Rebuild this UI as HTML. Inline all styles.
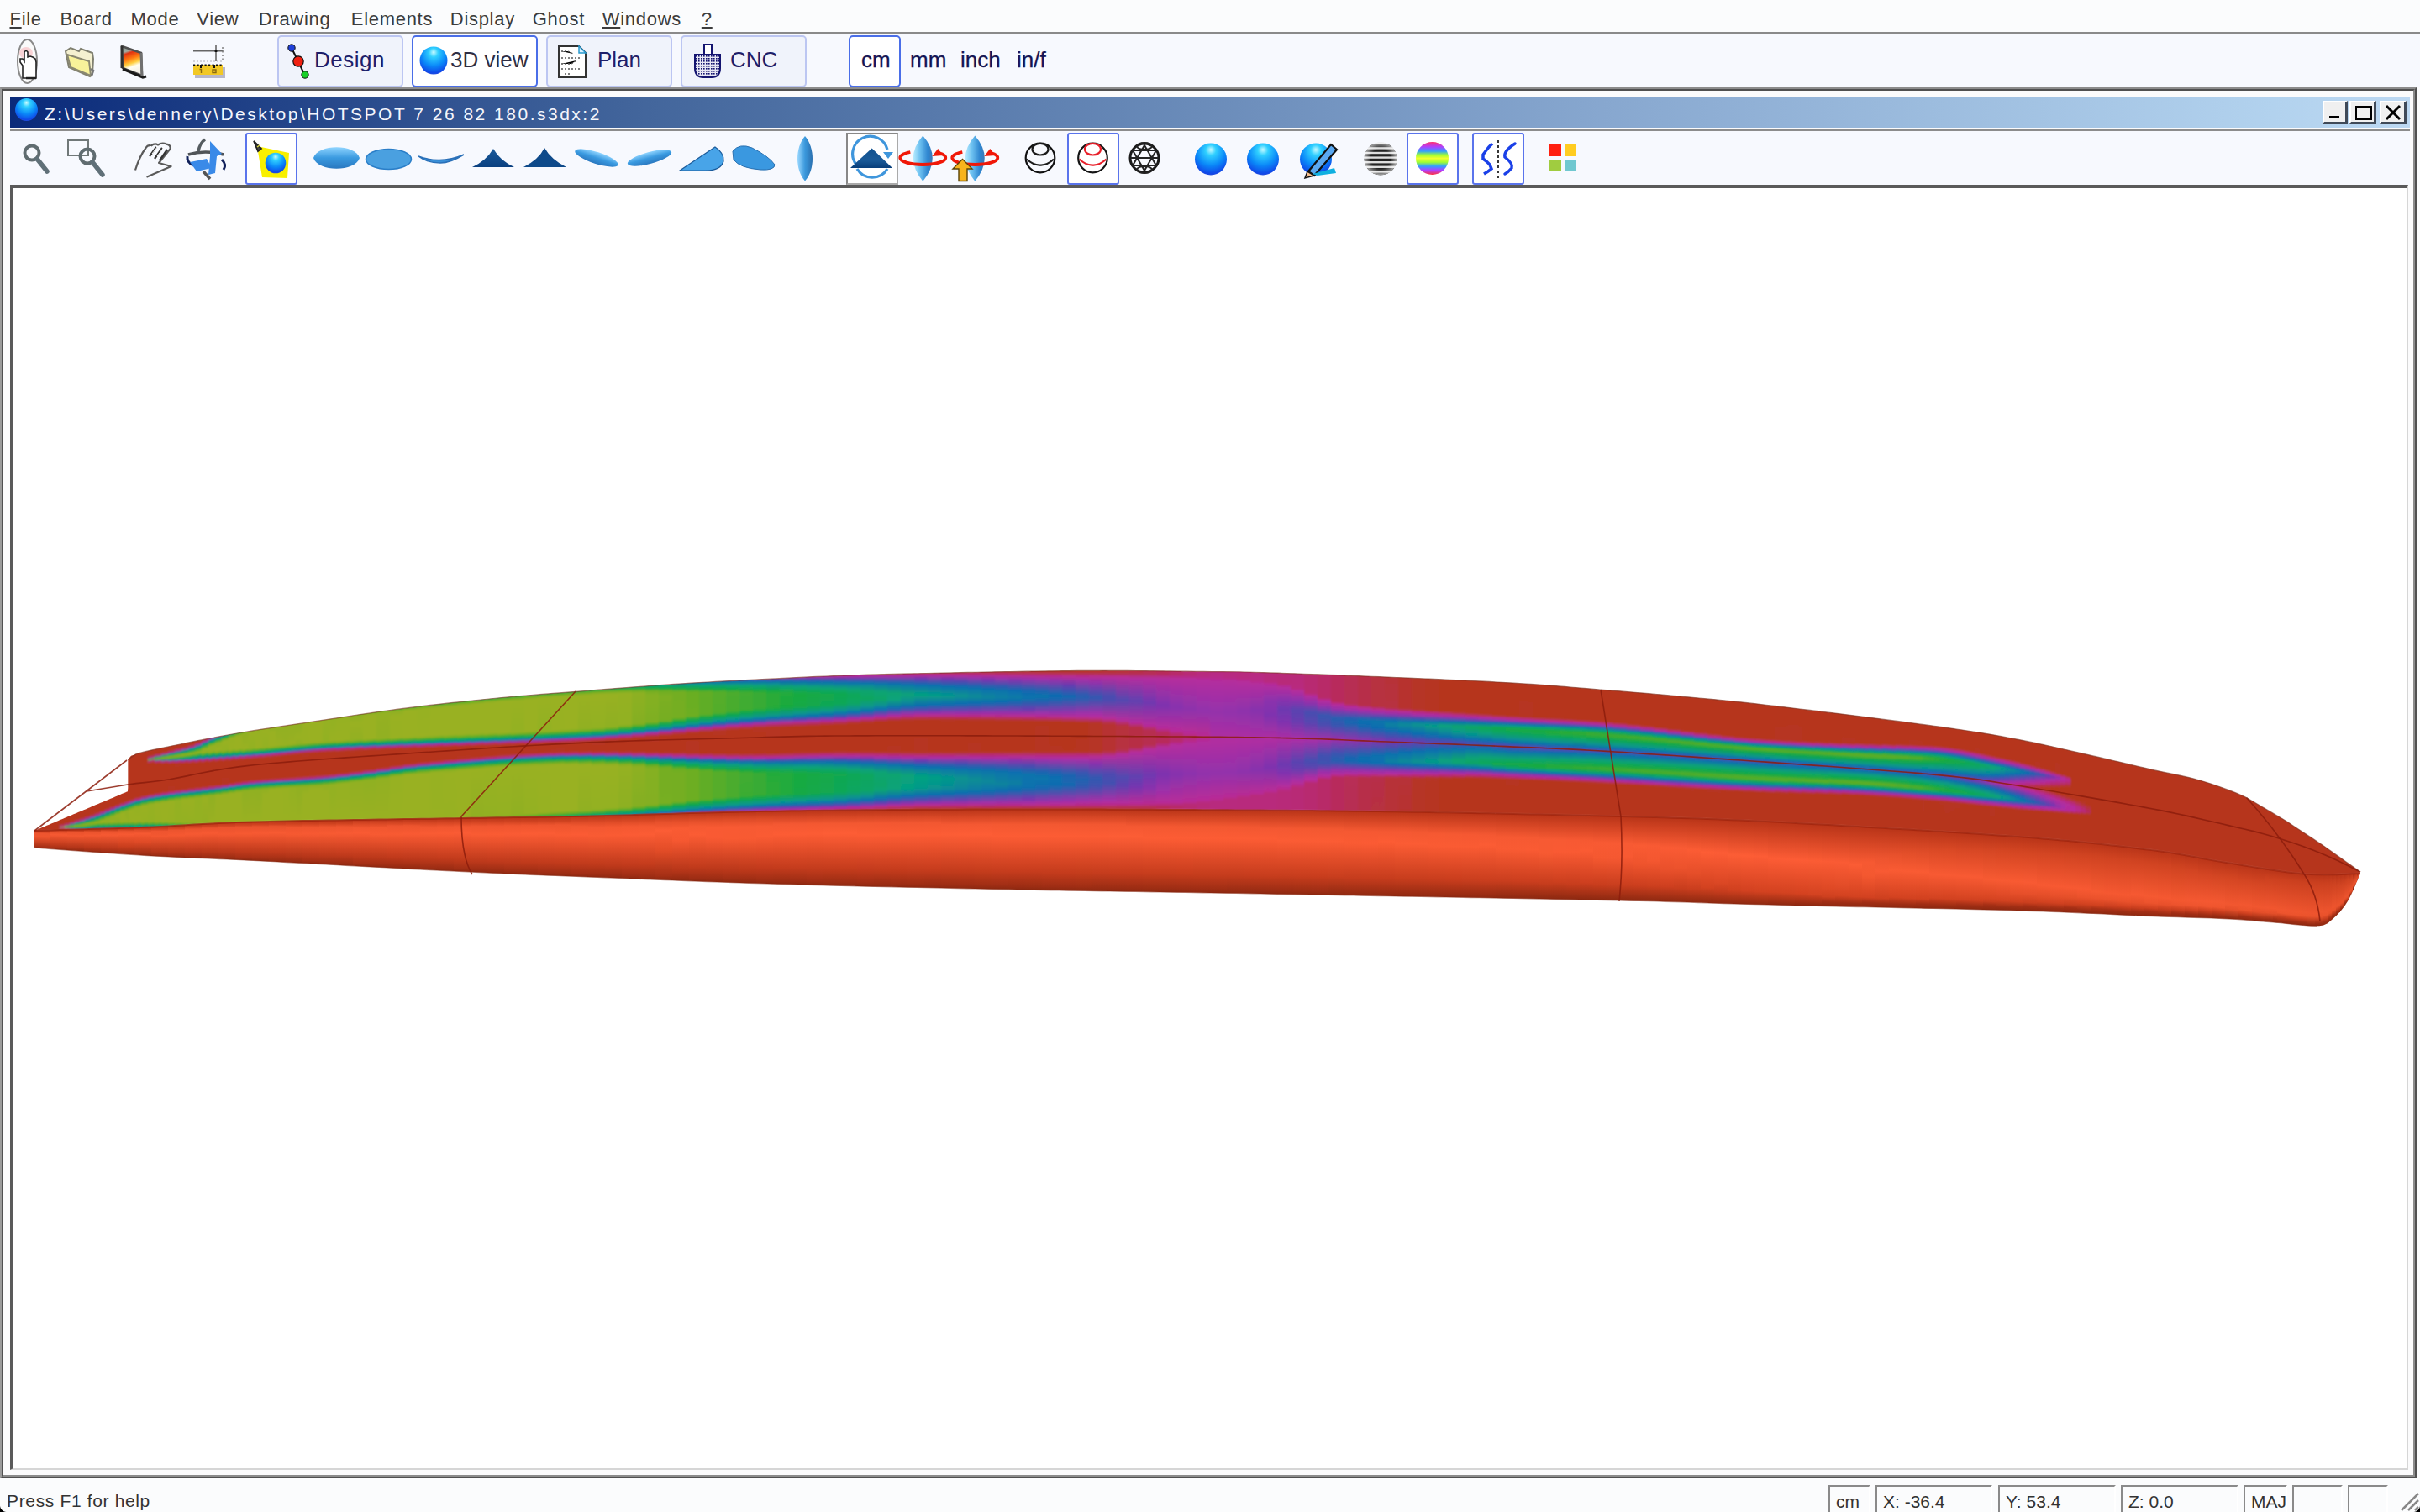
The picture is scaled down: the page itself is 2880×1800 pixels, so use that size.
<!DOCTYPE html><html><head><meta charset="utf-8"><style>
*{margin:0;padding:0;box-sizing:border-box}
html,body{width:2880px;height:1800px;overflow:hidden;background:#fbfcfd;font-family:"Liberation Sans",sans-serif}
.a{position:absolute}
.t{position:absolute;white-space:nowrap;line-height:1}
</style></head><body><div class="a" style="left:0;top:0;width:2880px;height:38px;background:#fbfcfd"></div><div class="a" style="left:0;top:38px;width:2880px;height:2px;background:#8a8a8a"></div><div class="a" style="left:0;top:40px;width:2880px;height:64px;background:#f7f9fe"></div><div class="t" style="left:11.5px;top:12px;font-size:22px;color:#3c3c3c;letter-spacing:0.7px"><span style="text-decoration:underline">F</span>ile</div><div class="t" style="left:71.5px;top:12px;font-size:22px;color:#3c3c3c;letter-spacing:0.7px">Board</div><div class="t" style="left:155.5px;top:12px;font-size:22px;color:#3c3c3c;letter-spacing:0.7px">Mode</div><div class="t" style="left:234.3px;top:12px;font-size:22px;color:#3c3c3c;letter-spacing:0.7px">View</div><div class="t" style="left:307.8px;top:12px;font-size:22px;color:#3c3c3c;letter-spacing:0.7px">Drawing</div><div class="t" style="left:417.8px;top:12px;font-size:22px;color:#3c3c3c;letter-spacing:0.7px">Elements</div><div class="t" style="left:535.8px;top:12px;font-size:22px;color:#3c3c3c;letter-spacing:0.7px">Display</div><div class="t" style="left:633.8px;top:12px;font-size:22px;color:#3c3c3c;letter-spacing:0.7px">Ghost</div><div class="t" style="left:716.8px;top:12px;font-size:22px;color:#3c3c3c;letter-spacing:0.7px"><span style="text-decoration:underline">W</span>indows</div><div class="t" style="left:834.8px;top:12px;font-size:22px;color:#3c3c3c;letter-spacing:0.7px"><span style="text-decoration:underline">?</span></div><div class="a" style="left:330px;top:42px;width:150px;height:62px;background:#f0f3fb;border:2px solid #bcc6f2;border-radius:5px"></div><div class="a" style="left:490px;top:42px;width:150px;height:62px;background:#ffffff;border:2px solid #4a6ee8;border-radius:5px"></div><div class="a" style="left:650px;top:42px;width:150px;height:62px;background:#f0f3fb;border:2px solid #bcc6f2;border-radius:5px"></div><div class="a" style="left:810px;top:42px;width:150px;height:62px;background:#f0f3fb;border:2px solid #bcc6f2;border-radius:5px"></div><div class="a" style="left:1010px;top:42px;width:62px;height:62px;background:#ffffff;border:2px solid #4a6ee8;border-radius:5px"></div><div class="t" style="left:374px;top:58px;font-size:26px;color:#1e1e6a;letter-spacing:0.5px">Design</div><div class="t" style="left:536px;top:58px;font-size:26px;color:#2e2e44">3D view</div><div class="t" style="left:711px;top:58px;font-size:26px;color:#1e1e6a">Plan</div><div class="t" style="left:869px;top:58px;font-size:26px;color:#1e1e6a">CNC</div><div class="t" style="left:1025px;top:58px;font-size:26px;color:#141454;-webkit-text-stroke:0.25px #141454">cm</div><div class="t" style="left:1083px;top:58px;font-size:26px;color:#141454;-webkit-text-stroke:0.25px #141454">mm</div><div class="t" style="left:1143px;top:58px;font-size:26px;color:#141454;-webkit-text-stroke:0.25px #141454">inch</div><div class="t" style="left:1210px;top:58px;font-size:26px;color:#141454;-webkit-text-stroke:0.25px #141454">in/f</div><div class="a" style="left:0;top:104px;width:2876px;height:1656px;background:#fbfbfc;border-top:2px solid #8c8c8c;border-left:2px solid #9a9a9a;border-right:2px solid #505050;border-bottom:2px solid #505050"></div><div class="a" style="left:2px;top:106px;width:2872px;height:1652px;border-top:2px solid #505050;border-left:2px solid #505050;border-right:2px solid #8c8c8c;border-bottom:2px solid #8c8c8c"></div><div class="a" style="left:12px;top:116px;width:2856px;height:36px;background:linear-gradient(to right,#0a2a7a 0%,#43669c 26.5%,#87a7cf 66.3%,#b2d2ee 94.3%,#bcd8f2 100%)"></div><div class="a" style="left:12px;top:154px;width:2856px;height:2px;background:#8c8c8c"></div><div class="a" style="left:12px;top:156px;width:2856px;height:64px;background:#f7f9fe"></div><div class="t" id="ttl" style="left:53px;top:125px;font-size:21px;color:#f4f6fc;letter-spacing:2.5px">Z:\Users\dennery\Desktop\HOTSPOT 7 26 82 180.s3dx:2</div><div class="a" style="left:2764px;top:120px;width:30px;height:28px;background:#f0f0f0;border-top:2px solid #ffffff;border-left:2px solid #ffffff;border-right:3px solid #404a58;border-bottom:3px solid #404a58"></div><div class="a" style="left:2796px;top:120px;width:32px;height:28px;background:#f0f0f0;border-top:2px solid #ffffff;border-left:2px solid #ffffff;border-right:3px solid #404a58;border-bottom:3px solid #404a58"></div><div class="a" style="left:2832px;top:120px;width:32px;height:28px;background:#f0f0f0;border-top:2px solid #ffffff;border-left:2px solid #ffffff;border-right:3px solid #404a58;border-bottom:3px solid #404a58"></div><div class="a" style="left:12px;top:220px;width:2854px;height:1530px;background:#ffffff;border-top:4px solid #5a5a5a;border-left:4px solid #5a5a5a;border-right:2px solid #d6d6d6;border-bottom:2px solid #d6d6d6"></div><div class="t" style="left:8px;top:1776px;font-size:21px;color:#333;letter-spacing:0.65px">Press F1 for help</div><div class="a" style="left:2176px;top:1768px;width:50px;height:40px;border-top:2px solid #8a8a8a;border-left:2px solid #8a8a8a;border-right:2px solid #ffffff"></div><div class="t" style="left:2185px;top:1777px;font-size:21px;color:#333">cm</div><div class="a" style="left:2232px;top:1768px;width:139px;height:40px;border-top:2px solid #8a8a8a;border-left:2px solid #8a8a8a;border-right:2px solid #ffffff"></div><div class="t" style="left:2241px;top:1777px;font-size:21px;color:#333">X: -36.4</div><div class="a" style="left:2378px;top:1768px;width:140px;height:40px;border-top:2px solid #8a8a8a;border-left:2px solid #8a8a8a;border-right:2px solid #ffffff"></div><div class="t" style="left:2387px;top:1777px;font-size:21px;color:#333">Y: 53.4</div><div class="a" style="left:2524px;top:1768px;width:140px;height:40px;border-top:2px solid #8a8a8a;border-left:2px solid #8a8a8a;border-right:2px solid #ffffff"></div><div class="t" style="left:2533px;top:1777px;font-size:21px;color:#333">Z: 0.0</div><div class="a" style="left:2670px;top:1768px;width:52px;height:40px;border-top:2px solid #8a8a8a;border-left:2px solid #8a8a8a;border-right:2px solid #ffffff"></div><div class="t" style="left:2679px;top:1777px;font-size:21px;color:#333">MAJ</div><div class="a" style="left:2728px;top:1768px;width:60px;height:40px;border-top:2px solid #8a8a8a;border-left:2px solid #8a8a8a;border-right:2px solid #ffffff"></div><div class="a" style="left:2794px;top:1768px;width:48px;height:40px;border-top:2px solid #8a8a8a;border-left:2px solid #8a8a8a;border-right:2px solid #ffffff"></div><div class="a" style="left:292px;top:158px;width:62px;height:62px;background:#ffffff;border:2px solid #5a74ec;border-radius:3px"></div><div class="a" style="left:1007px;top:158px;width:62px;height:62px;background:#fff;border-top:2px solid #888;border-left:2px solid #888;border-right:2px solid #aaa;border-bottom:2px solid #aaa"></div><div class="a" style="left:1270px;top:158px;width:62px;height:62px;background:#ffffff;border:2px solid #5a74ec;border-radius:3px"></div><div class="a" style="left:1674px;top:158px;width:62px;height:62px;background:#ffffff;border:2px solid #5a74ec;border-radius:3px"></div><div class="a" style="left:1752px;top:158px;width:62px;height:62px;background:#ffffff;border:2px solid #5a74ec;border-radius:3px"></div><svg class="a" style="left:0;top:0" width="2880" height="1800" viewBox="0 0 2880 1800"><defs>
<radialGradient id="sph" cx="0.5" cy="0.28" r="0.75" fx="0.5" fy="0.2"><stop offset="0" stop-color="#c8faff"/><stop offset="0.22" stop-color="#30d0ff"/><stop offset="0.6" stop-color="#0a88f8"/><stop offset="0.9" stop-color="#1048e8"/><stop offset="1" stop-color="#3050d8"/></radialGradient>
<linearGradient id="ell" x1="0" y1="0" x2="0" y2="1"><stop offset="0" stop-color="#8fd4ff"/><stop offset="0.5" stop-color="#3a9ae0"/><stop offset="1" stop-color="#2a78c0"/></linearGradient>
<linearGradient id="ellv" x1="0" y1="0" x2="1" y2="0"><stop offset="0" stop-color="#9ad8ff"/><stop offset="0.5" stop-color="#3a98dc"/><stop offset="1" stop-color="#2a70b0"/></linearGradient>
<linearGradient id="tri" x1="0" y1="0" x2="0" y2="1"><stop offset="0" stop-color="#1a5a9a"/><stop offset="1" stop-color="#0a4080"/></linearGradient>
<linearGradient id="rainb" x1="0" y1="0" x2="0" y2="1"><stop offset="0" stop-color="#ff3070"/><stop offset="0.15" stop-color="#b040ff"/><stop offset="0.28" stop-color="#30a0ff"/><stop offset="0.4" stop-color="#a0ff30"/><stop offset="0.5" stop-color="#f0ff30"/><stop offset="0.62" stop-color="#a0ff30"/><stop offset="0.74" stop-color="#30a0ff"/><stop offset="0.86" stop-color="#b040ff"/><stop offset="1" stop-color="#ff3040"/></linearGradient>
<linearGradient id="stripes" x1="0" y1="0" x2="0" y2="1" spreadMethod="repeat"><stop offset="0" stop-color="#333"/><stop offset="0.5" stop-color="#333"/><stop offset="0.5" stop-color="#ccc"/><stop offset="1" stop-color="#ccc"/></linearGradient>
<linearGradient id="g1" gradientUnits="userSpaceOnUse" x1="44.0" y1="983.47" x2="44.0" y2="989.00" gradientTransform="matrix(1 -0.03165 0 1 0 1.392)"><stop offset="0" stop-color="#b6361a"/><stop offset="1.085" stop-color="#b6361a"/></linearGradient><linearGradient id="g2" gradientUnits="userSpaceOnUse" x1="50.0" y1="980.94" x2="50.0" y2="988.81" gradientTransform="matrix(1 -0.03077 0 1 0 1.538)"><stop offset="0" stop-color="#b6361a"/><stop offset="1.016" stop-color="#b6361a"/></linearGradient><linearGradient id="g3" gradientUnits="userSpaceOnUse" x1="56.0" y1="978.41" x2="56.0" y2="988.63" gradientTransform="matrix(1 -0.03034 0 1 0 1.699)"><stop offset="0" stop-color="#b6361a"/><stop offset="1" stop-color="#b6361a"/></linearGradient><linearGradient id="g4" gradientUnits="userSpaceOnUse" x1="62.0" y1="975.88" x2="62.0" y2="988.44" gradientTransform="matrix(1 -0.03015 0 1 0 1.869)"><stop offset="0" stop-color="#b6361a"/><stop offset="1.035" stop-color="#b6361a"/></linearGradient><linearGradient id="g5" gradientUnits="userSpaceOnUse" x1="68.0" y1="973.35" x2="68.0" y2="988.26" gradientTransform="matrix(1 -0.03010 0 1 0 2.047)"><stop offset="0" stop-color="#b6361a"/><stop offset="1.006" stop-color="#b6361a"/></linearGradient><linearGradient id="g6" gradientUnits="userSpaceOnUse" x1="74.0" y1="970.82" x2="74.0" y2="988.08" gradientTransform="matrix(1 -0.08017 0 1 0 5.932)"><stop offset="0" stop-color="#b6361a"/><stop offset=".579" stop-color="#b6361a"/><stop offset=".753" stop-color="#b82c91"/><stop offset=".811" stop-color="#89b021"/><stop offset=".869" stop-color="#b82b8d"/><stop offset="1" stop-color="#b6332b"/></linearGradient><linearGradient id="g7" gradientUnits="userSpaceOnUse" x1="80.0" y1="968.29" x2="80.0" y2="987.90" gradientTransform="matrix(1 -0.08304 0 1 0 6.643)"><stop offset="0" stop-color="#b6361a"/><stop offset=".561" stop-color="#b6361a"/><stop offset=".714" stop-color="#b42d9d"/><stop offset=".765" stop-color="#10a757"/><stop offset=".816" stop-color="#98b121"/><stop offset=".867" stop-color="#10a75b"/><stop offset=".918" stop-color="#b82c99"/><stop offset="1.02" stop-color="#b72e4d"/></linearGradient><linearGradient id="g8" gradientUnits="userSpaceOnUse" x1="86.0" y1="965.76" x2="86.0" y2="987.72" gradientTransform="matrix(1 -0.09573 0 1 0 8.233)"><stop offset="0" stop-color="#b6361a"/><stop offset=".501" stop-color="#b6361a"/><stop offset=".546" stop-color="#b6332a"/><stop offset=".637" stop-color="#b82b83"/><stop offset=".683" stop-color="#5348b0"/><stop offset=".729" stop-color="#09a475"/><stop offset=".774" stop-color="#4eac2c"/><stop offset=".82" stop-color="#98b121"/><stop offset=".865" stop-color="#4bac2d"/><stop offset=".911" stop-color="#09a377"/><stop offset=".956" stop-color="#5945b0"/><stop offset="1.002" stop-color="#b82b82"/></linearGradient><linearGradient id="g9" gradientUnits="userSpaceOnUse" x1="92.0" y1="963.23" x2="92.0" y2="987.54" gradientTransform="matrix(1 -0.11824 0 1 0 10.878)"><stop offset="0" stop-color="#b6361a"/><stop offset=".494" stop-color="#b6361a"/><stop offset=".617" stop-color="#b82c8f"/><stop offset=".658" stop-color="#285fb0"/><stop offset=".699" stop-color="#07a27f"/><stop offset=".74" stop-color="#15aa42"/><stop offset=".782" stop-color="#77af20"/><stop offset=".823" stop-color="#95b121"/><stop offset=".864" stop-color="#69ae22"/><stop offset=".905" stop-color="#12a84f"/><stop offset=".946" stop-color="#06978c"/><stop offset=".987" stop-color="#5348b0"/><stop offset="1" stop-color="#9f30a9"/></linearGradient><linearGradient id="g10" gradientUnits="userSpaceOnUse" x1="98.0" y1="960.70" x2="98.0" y2="987.35" gradientTransform="matrix(1 -0.15027 0 1 0 14.726)"><stop offset="0" stop-color="#b6361a"/><stop offset=".488" stop-color="#b6361d"/><stop offset=".6" stop-color="#af2ea2"/><stop offset=".638" stop-color="#0a6fb0"/><stop offset=".675" stop-color="#07a280"/><stop offset=".713" stop-color="#13a84e"/><stop offset=".75" stop-color="#55ad29"/><stop offset=".788" stop-color="#86b021"/><stop offset=".825" stop-color="#8db021"/><stop offset=".863" stop-color="#6aae22"/><stop offset=".9" stop-color="#15aa44"/><stop offset=".938" stop-color="#09a474"/><stop offset=".975" stop-color="#077da4"/><stop offset="1.013" stop-color="#8233ae"/></linearGradient><linearGradient id="g11" gradientUnits="userSpaceOnUse" x1="104.0" y1="958.17" x2="104.0" y2="987.17" gradientTransform="matrix(1 -0.17456 0 1 0 18.154)"><stop offset="0" stop-color="#b6361a"/><stop offset=".448" stop-color="#b6361a"/><stop offset=".483" stop-color="#b73235"/><stop offset=".552" stop-color="#b82b8a"/><stop offset=".586" stop-color="#653eb0"/><stop offset=".621" stop-color="#077da4"/><stop offset=".655" stop-color="#08a37b"/><stop offset=".69" stop-color="#12a851"/><stop offset=".759" stop-color="#7baf20"/><stop offset=".793" stop-color="#95b121"/><stop offset=".828" stop-color="#83af20"/><stop offset=".862" stop-color="#5aad28"/><stop offset=".896" stop-color="#15a945"/><stop offset=".931" stop-color="#0ba46d"/><stop offset=".965" stop-color="#078b97"/><stop offset="1" stop-color="#3a55b0"/></linearGradient><linearGradient id="g12" gradientUnits="userSpaceOnUse" x1="110.0" y1="955.64" x2="110.0" y2="986.98" gradientTransform="matrix(1 -0.17171 0 1 0 18.889)"><stop offset="0" stop-color="#b6361a"/><stop offset=".447" stop-color="#b63521"/><stop offset=".542" stop-color="#aa2fa6"/><stop offset=".574" stop-color="#275fb0"/><stop offset=".606" stop-color="#078c96"/><stop offset=".67" stop-color="#12a84f"/><stop offset=".734" stop-color="#75ae20"/><stop offset=".798" stop-color="#90b021"/><stop offset=".829" stop-color="#79af20"/><stop offset=".893" stop-color="#14a949"/><stop offset=".957" stop-color="#079390"/><stop offset=".989" stop-color="#1469b0"/><stop offset="1" stop-color="#3857b0"/></linearGradient><linearGradient id="g13" gradientUnits="userSpaceOnUse" x1="116.0" y1="953.11" x2="116.0" y2="986.79" gradientTransform="matrix(1 -0.17170 0 1 0 19.918)"><stop offset="0" stop-color="#b6361a"/><stop offset=".416" stop-color="#b6361a"/><stop offset=".505" stop-color="#b82c96"/><stop offset=".534" stop-color="#504ab0"/><stop offset=".564" stop-color="#0878a8"/><stop offset=".594" stop-color="#069a89"/><stop offset=".653" stop-color="#13a94b"/><stop offset=".712" stop-color="#72ae20"/><stop offset=".772" stop-color="#98b121"/><stop offset=".831" stop-color="#70ae20"/><stop offset=".861" stop-color="#37ab34"/><stop offset=".891" stop-color="#13a84d"/><stop offset=".95" stop-color="#06978c"/><stop offset=".98" stop-color="#0875ab"/><stop offset="1.009" stop-color="#5945b0"/></linearGradient><linearGradient id="g14" gradientUnits="userSpaceOnUse" x1="122.0" y1="950.58" x2="122.0" y2="986.60" gradientTransform="matrix(1 -0.17022 0 1 0 20.767)"><stop offset="0" stop-color="#b6361a"/><stop offset=".389" stop-color="#b6361a"/><stop offset=".472" stop-color="#b82c90"/><stop offset=".5" stop-color="#643eb0"/><stop offset=".527" stop-color="#0870b0"/><stop offset=".583" stop-color="#0aa471"/><stop offset=".638" stop-color="#2bab39"/><stop offset=".666" stop-color="#64ad24"/><stop offset=".722" stop-color="#93b121"/><stop offset=".777" stop-color="#99b121"/><stop offset=".833" stop-color="#76ae20"/><stop offset=".888" stop-color="#15aa43"/><stop offset=".944" stop-color="#06a281"/><stop offset=".971" stop-color="#07849e"/><stop offset="1" stop-color="#325ab0"/></linearGradient><linearGradient id="g15" gradientUnits="userSpaceOnUse" x1="128.0" y1="948.05" x2="128.0" y2="986.41" gradientTransform="matrix(1 -0.16787 0 1 0 21.487)"><stop offset="0" stop-color="#b6361a"/><stop offset=".365" stop-color="#b6361a"/><stop offset=".391" stop-color="#b73138"/><stop offset=".443" stop-color="#b82b8c"/><stop offset=".469" stop-color="#7436b0"/><stop offset=".495" stop-color="#126bb0"/><stop offset=".547" stop-color="#09a475"/><stop offset=".599" stop-color="#23ab3b"/><stop offset=".626" stop-color="#5dad27"/><stop offset=".678" stop-color="#91b021"/><stop offset=".808" stop-color="#92b121"/><stop offset=".86" stop-color="#62ad25"/><stop offset=".886" stop-color="#28ab39"/><stop offset=".938" stop-color="#0aa473"/><stop offset=".99" stop-color="#0a6fb0"/><stop offset="1" stop-color="#295eb0"/></linearGradient><linearGradient id="g16" gradientUnits="userSpaceOnUse" x1="134.0" y1="945.52" x2="134.0" y2="986.22" gradientTransform="matrix(1 -0.16457 0 1 0 22.053)"><stop offset="0" stop-color="#b6361a"/><stop offset=".344" stop-color="#b6361a"/><stop offset=".369" stop-color="#b73231"/><stop offset=".418" stop-color="#b82b87"/><stop offset=".442" stop-color="#8233ae"/><stop offset=".467" stop-color="#1c65b0"/><stop offset=".491" stop-color="#078b97"/><stop offset=".516" stop-color="#08a379"/><stop offset=".565" stop-color="#1caa3e"/><stop offset=".59" stop-color="#56ad29"/><stop offset=".639" stop-color="#8eb021"/><stop offset=".811" stop-color="#99b121"/><stop offset=".86" stop-color="#73ae20"/><stop offset=".909" stop-color="#14a948"/><stop offset=".958" stop-color="#069f85"/><stop offset=".983" stop-color="#077ea3"/><stop offset="1.007" stop-color="#3d54b0"/></linearGradient><linearGradient id="g17" gradientUnits="userSpaceOnUse" x1="140.0" y1="942.99" x2="140.0" y2="986.02" gradientTransform="matrix(1 -0.16002 0 1 0 22.402)"><stop offset="0" stop-color="#b6361a"/><stop offset=".325" stop-color="#b6361a"/><stop offset=".349" stop-color="#b63429"/><stop offset=".395" stop-color="#b82b82"/><stop offset=".418" stop-color="#9731ab"/><stop offset=".442" stop-color="#295eb0"/><stop offset=".465" stop-color="#07869c"/><stop offset=".488" stop-color="#07a27e"/><stop offset=".534" stop-color="#16aa42"/><stop offset=".581" stop-color="#78af20"/><stop offset=".627" stop-color="#99b121"/><stop offset=".837" stop-color="#8fb021"/><stop offset=".883" stop-color="#58ad28"/><stop offset=".906" stop-color="#1eaa3d"/><stop offset=".953" stop-color="#08a378"/><stop offset=".999" stop-color="#1867b0"/><stop offset="1" stop-color="#1b66b0"/></linearGradient><linearGradient id="g18" gradientUnits="userSpaceOnUse" x1="146.0" y1="940.45" x2="146.0" y2="985.82" gradientTransform="matrix(1 -0.15354 0 1 0 22.416)"><stop offset="0" stop-color="#b6361a"/><stop offset=".331" stop-color="#b6351e"/><stop offset=".397" stop-color="#af2ea2"/><stop offset=".419" stop-color="#3d54b0"/><stop offset=".441" stop-color="#077ea3"/><stop offset=".463" stop-color="#069f85"/><stop offset=".507" stop-color="#14a948"/><stop offset=".551" stop-color="#73ae20"/><stop offset=".595" stop-color="#99b121"/><stop offset=".838" stop-color="#97b121"/><stop offset=".882" stop-color="#6fae20"/><stop offset=".904" stop-color="#37ab34"/><stop offset=".926" stop-color="#13a84d"/><stop offset=".97" stop-color="#06998a"/><stop offset="1" stop-color="#146ab0"/></linearGradient><linearGradient id="g19" gradientUnits="userSpaceOnUse" x1="150.5" y1="939.19" x2="150.5" y2="985.61" gradientTransform="matrix(1 -0.14575 0 1 0 21.935)"><stop offset="0" stop-color="#b6361a"/><stop offset=".302" stop-color="#b6361a"/><stop offset=".323" stop-color="#b73233"/><stop offset=".366" stop-color="#b82b88"/><stop offset=".388" stop-color="#7f33af"/><stop offset=".409" stop-color="#1967b0"/><stop offset=".452" stop-color="#08a379"/><stop offset=".495" stop-color="#1daa3d"/><stop offset=".517" stop-color="#58ad29"/><stop offset=".56" stop-color="#8fb021"/><stop offset=".84" stop-color="#99b121"/><stop offset=".883" stop-color="#74ae20"/><stop offset=".926" stop-color="#14a947"/><stop offset=".969" stop-color="#069f85"/><stop offset="1" stop-color="#0a6fb0"/></linearGradient><linearGradient id="g20" gradientUnits="userSpaceOnUse" x1="153.0" y1="898.50" x2="153.0" y2="935.93" gradientTransform="matrix(1 -1.50020 0 1 0 229.530)"><stop offset="0" stop-color="#b6361a"/><stop offset="1" stop-color="#b6361a"/></linearGradient><linearGradient id="g21" gradientUnits="userSpaceOnUse" x1="153.0" y1="932.65" x2="153.0" y2="985.51" gradientTransform="matrix(1 -0.18434 0 1 0 28.204)"><stop offset="0" stop-color="#b6361a"/><stop offset=".378" stop-color="#b6361a"/><stop offset=".435" stop-color="#b82c94"/><stop offset=".454" stop-color="#5646b0"/><stop offset=".473" stop-color="#0875ab"/><stop offset=".492" stop-color="#06978c"/><stop offset=".53" stop-color="#12a84f"/><stop offset=".549" stop-color="#32ab36"/><stop offset=".568" stop-color="#6bae22"/><stop offset=".605" stop-color="#96b121"/><stop offset=".87" stop-color="#91b021"/><stop offset=".908" stop-color="#5ead27"/><stop offset=".927" stop-color="#24ab3b"/><stop offset=".965" stop-color="#09a475"/><stop offset="1.003" stop-color="#106cb0"/></linearGradient><linearGradient id="g22" gradientUnits="userSpaceOnUse" x1="155.5" y1="896.50" x2="155.5" y2="935.65" gradientTransform="matrix(1 -0.66663 0 1 0 103.661)"><stop offset="0" stop-color="#b6361a"/><stop offset="1" stop-color="#b6361a"/></linearGradient><linearGradient id="g23" gradientUnits="userSpaceOnUse" x1="155.5" y1="932.26" x2="155.5" y2="985.44" gradientTransform="matrix(1 -0.17826 0 1 0 27.719)"><stop offset="0" stop-color="#b6361a"/><stop offset=".357" stop-color="#b6361a"/><stop offset=".376" stop-color="#b6342a"/><stop offset=".414" stop-color="#b82b83"/><stop offset=".433" stop-color="#9631ab"/><stop offset=".451" stop-color="#285fb0"/><stop offset=".47" stop-color="#07869c"/><stop offset=".489" stop-color="#07a27e"/><stop offset=".527" stop-color="#16aa41"/><stop offset=".564" stop-color="#78af20"/><stop offset=".602" stop-color="#99b121"/><stop offset=".865" stop-color="#98b121"/><stop offset=".903" stop-color="#70ae20"/><stop offset=".921" stop-color="#39ac34"/><stop offset=".94" stop-color="#13a94c"/><stop offset=".978" stop-color="#069a89"/><stop offset="1" stop-color="#0873ae"/></linearGradient><linearGradient id="g24" gradientUnits="userSpaceOnUse" x1="158.5" y1="895.37" x2="158.5" y2="935.26" gradientTransform="matrix(1 -0.37622 0 1 0 59.630)"><stop offset="0" stop-color="#b6361a"/><stop offset="1.003" stop-color="#b6361a"/></linearGradient><linearGradient id="g25" gradientUnits="userSpaceOnUse" x1="158.5" y1="931.89" x2="158.5" y2="985.33" gradientTransform="matrix(1 -0.17014 0 1 0 26.967)"><stop offset="0" stop-color="#b6361a"/><stop offset=".356" stop-color="#b6361a"/><stop offset=".412" stop-color="#b82c98"/><stop offset=".43" stop-color="#4b4cb0"/><stop offset=".449" stop-color="#0879a7"/><stop offset=".468" stop-color="#069a89"/><stop offset=".505" stop-color="#13a94c"/><stop offset=".543" stop-color="#70ae20"/><stop offset=".58" stop-color="#98b121"/><stop offset=".861" stop-color="#99b121"/><stop offset=".898" stop-color="#77af20"/><stop offset=".936" stop-color="#15aa43"/><stop offset=".973" stop-color="#07a280"/><stop offset="1" stop-color="#0875ac"/></linearGradient><linearGradient id="g26" gradientUnits="userSpaceOnUse" x1="164.0" y1="892.92" x2="164.0" y2="934.89" gradientTransform="matrix(1 -0.30648 0 1 0 50.263)"><stop offset="0" stop-color="#b6361a"/><stop offset="1.001" stop-color="#b6361a"/></linearGradient><linearGradient id="g27" gradientUnits="userSpaceOnUse" x1="164.0" y1="931.03" x2="164.0" y2="985.22" gradientTransform="matrix(1 -0.15265 0 1 0 25.034)"><stop offset="0" stop-color="#b6361a"/><stop offset=".332" stop-color="#b6361a"/><stop offset=".387" stop-color="#b82c93"/><stop offset=".406" stop-color="#5b44b0"/><stop offset=".424" stop-color="#0874ad"/><stop offset=".443" stop-color="#06968d"/><stop offset=".48" stop-color="#12a850"/><stop offset=".498" stop-color="#30ab37"/><stop offset=".517" stop-color="#69ae23"/><stop offset=".554" stop-color="#95b121"/><stop offset=".867" stop-color="#99b121"/><stop offset=".904" stop-color="#73ae20"/><stop offset=".941" stop-color="#14a948"/><stop offset=".978" stop-color="#069e86"/><stop offset="1" stop-color="#0876aa"/></linearGradient><linearGradient id="g28" gradientUnits="userSpaceOnUse" x1="172.0" y1="891.02" x2="172.0" y2="934.03" gradientTransform="matrix(1 -0.23696 0 1 0 40.757)"><stop offset="0" stop-color="#b6361a"/><stop offset="1" stop-color="#b6361a"/></linearGradient><linearGradient id="g29" gradientUnits="userSpaceOnUse" x1="172.0" y1="930.19" x2="172.0" y2="984.93" gradientTransform="matrix(1 -0.12204 0 1 0 20.991)"><stop offset="0" stop-color="#b6361a"/><stop offset=".311" stop-color="#b6351f"/><stop offset=".365" stop-color="#ae2ea3"/><stop offset=".384" stop-color="#3b55b0"/><stop offset=".402" stop-color="#077fa2"/><stop offset=".42" stop-color="#069f85"/><stop offset=".457" stop-color="#14a947"/><stop offset=".493" stop-color="#74ae20"/><stop offset=".53" stop-color="#99b121"/><stop offset=".877" stop-color="#96b121"/><stop offset=".913" stop-color="#6bae22"/><stop offset=".932" stop-color="#32ab36"/><stop offset=".95" stop-color="#12a84f"/><stop offset=".987" stop-color="#06978c"/><stop offset="1.005" stop-color="#0875ab"/></linearGradient><linearGradient id="g30" gradientUnits="userSpaceOnUse" x1="180.0" y1="889.29" x2="180.0" y2="933.19" gradientTransform="matrix(1 -0.21724 0 1 0 39.103)"><stop offset="0" stop-color="#b6361a"/><stop offset=".228" stop-color="#b6351e"/><stop offset=".273" stop-color="#b82b7b"/><stop offset=".296" stop-color="#8c32ad"/><stop offset=".319" stop-color="#52ad2b"/><stop offset=".342" stop-color="#26ab3a"/><stop offset=".364" stop-color="#b82c98"/><stop offset=".433" stop-color="#b6361a"/><stop offset="1.002" stop-color="#b6361a"/></linearGradient><linearGradient id="g31" gradientUnits="userSpaceOnUse" x1="180.0" y1="929.26" x2="180.0" y2="984.62" gradientTransform="matrix(1 -0.09351 0 1 0 16.832)"><stop offset="0" stop-color="#b6361a"/><stop offset=".289" stop-color="#b6361a"/><stop offset=".343" stop-color="#b82c95"/><stop offset=".361" stop-color="#5447b0"/><stop offset=".379" stop-color="#0876aa"/><stop offset=".397" stop-color="#06988c"/><stop offset=".434" stop-color="#13a84e"/><stop offset=".452" stop-color="#34ab35"/><stop offset=".47" stop-color="#6cae21"/><stop offset=".506" stop-color="#96b121"/><stop offset=".885" stop-color="#94b121"/><stop offset=".921" stop-color="#67ae23"/><stop offset=".939" stop-color="#2eab37"/><stop offset=".957" stop-color="#12a851"/><stop offset=".993" stop-color="#07958e"/><stop offset="1" stop-color="#078999"/></linearGradient><linearGradient id="g32" gradientUnits="userSpaceOnUse" x1="188.0" y1="887.60" x2="188.0" y2="932.26" gradientTransform="matrix(1 -0.10667 0 1 0 20.054)"><stop offset="0" stop-color="#b6361a"/><stop offset=".202" stop-color="#b6361a"/><stop offset=".224" stop-color="#b73232"/><stop offset=".269" stop-color="#b82b88"/><stop offset=".291" stop-color="#1a67b0"/><stop offset=".313" stop-color="#12a852"/><stop offset=".336" stop-color="#85b021"/><stop offset=".358" stop-color="#6aae22"/><stop offset=".381" stop-color="#09a476"/><stop offset=".403" stop-color="#9331ac"/><stop offset=".425" stop-color="#b82b7c"/><stop offset=".47" stop-color="#b63520"/><stop offset="1.008" stop-color="#b6361a"/></linearGradient><linearGradient id="g33" gradientUnits="userSpaceOnUse" x1="188.0" y1="928.19" x2="188.0" y2="984.29" gradientTransform="matrix(1 -0.07746 0 1 0 14.562)"><stop offset="0" stop-color="#b6361a"/><stop offset=".267" stop-color="#b6361a"/><stop offset=".285" stop-color="#b63426"/><stop offset=".321" stop-color="#b82b80"/><stop offset=".339" stop-color="#a230a9"/><stop offset=".357" stop-color="#2f5bb0"/><stop offset=".374" stop-color="#07839e"/><stop offset=".392" stop-color="#06a281"/><stop offset=".428" stop-color="#15aa44"/><stop offset=".463" stop-color="#76ae20"/><stop offset=".499" stop-color="#99b121"/><stop offset=".891" stop-color="#97b121"/><stop offset=".927" stop-color="#70ae20"/><stop offset=".945" stop-color="#37ab34"/><stop offset=".963" stop-color="#13a84c"/><stop offset="1" stop-color="#06968d"/></linearGradient><linearGradient id="g34" gradientUnits="userSpaceOnUse" x1="196.0" y1="885.94" x2="196.0" y2="931.19" gradientTransform="matrix(1 -0.12259 0 1 0 24.028)"><stop offset="0" stop-color="#b6361a"/><stop offset=".199" stop-color="#b6361a"/><stop offset=".265" stop-color="#b82c96"/><stop offset=".287" stop-color="#087ca5"/><stop offset=".309" stop-color="#0fa65f"/><stop offset=".332" stop-color="#5dad27"/><stop offset=".354" stop-color="#96b121"/><stop offset=".376" stop-color="#6eae21"/><stop offset=".398" stop-color="#11a755"/><stop offset=".42" stop-color="#07879b"/><stop offset=".442" stop-color="#b02ea1"/><stop offset=".508" stop-color="#b6361c"/><stop offset="1" stop-color="#b6361a"/></linearGradient><linearGradient id="g35" gradientUnits="userSpaceOnUse" x1="196.0" y1="927.00" x2="196.0" y2="983.91" gradientTransform="matrix(1 -0.06412 0 1 0 12.567)"><stop offset="0" stop-color="#b6361a"/><stop offset=".264" stop-color="#b6361a"/><stop offset=".281" stop-color="#b6332c"/><stop offset=".316" stop-color="#b82b84"/><stop offset=".334" stop-color="#9131ac"/><stop offset=".351" stop-color="#2560b0"/><stop offset=".369" stop-color="#07879b"/><stop offset=".387" stop-color="#07a37d"/><stop offset=".422" stop-color="#16aa40"/><stop offset=".457" stop-color="#79af20"/><stop offset=".492" stop-color="#99b121"/><stop offset=".896" stop-color="#99b121"/><stop offset=".931" stop-color="#77af20"/><stop offset=".966" stop-color="#15aa42"/><stop offset="1.002" stop-color="#07a27f"/></linearGradient><linearGradient id="g36" gradientUnits="userSpaceOnUse" x1="204.0" y1="884.29" x2="204.0" y2="930.00" gradientTransform="matrix(1 -0.13178 0 1 0 26.883)"><stop offset="0" stop-color="#b6361a"/><stop offset=".175" stop-color="#b6361a"/><stop offset=".197" stop-color="#b6332b"/><stop offset=".241" stop-color="#b82b83"/><stop offset=".263" stop-color="#7337b0"/><stop offset=".284" stop-color="#078899"/><stop offset=".306" stop-color="#0ea662"/><stop offset=".328" stop-color="#3bac33"/><stop offset=".35" stop-color="#81af20"/><stop offset=".372" stop-color="#8eb021"/><stop offset=".394" stop-color="#60ad26"/><stop offset=".416" stop-color="#12a84f"/><stop offset=".438" stop-color="#069d87"/><stop offset=".459" stop-color="#2f5bb0"/><stop offset=".481" stop-color="#b82c8f"/><stop offset=".547" stop-color="#b6361a"/><stop offset="1.006" stop-color="#b6361a"/></linearGradient><linearGradient id="g37" gradientUnits="userSpaceOnUse" x1="204.0" y1="925.64" x2="204.0" y2="983.49" gradientTransform="matrix(1 -0.05334 0 1 0 10.881)"><stop offset="0" stop-color="#b6361a"/><stop offset=".277" stop-color="#b63523"/><stop offset=".311" stop-color="#b82b7e"/><stop offset=".328" stop-color="#aa2fa6"/><stop offset=".346" stop-color="#3657b0"/><stop offset=".363" stop-color="#0781a0"/><stop offset=".38" stop-color="#06a183"/><stop offset=".415" stop-color="#15a945"/><stop offset=".449" stop-color="#75ae20"/><stop offset=".484" stop-color="#99b121"/><stop offset=".916" stop-color="#97b121"/><stop offset=".951" stop-color="#6eae21"/><stop offset=".968" stop-color="#35ab35"/><stop offset=".985" stop-color="#13a84d"/><stop offset="1.002" stop-color="#0ba56b"/></linearGradient><linearGradient id="g38" gradientUnits="userSpaceOnUse" x1="212.0" y1="882.67" x2="212.0" y2="928.64" gradientTransform="matrix(1 -0.13882 0 1 0 29.431)"><stop offset="0" stop-color="#b6361a"/><stop offset=".174" stop-color="#b6361a"/><stop offset=".239" stop-color="#b82c8e"/><stop offset=".261" stop-color="#464fb0"/><stop offset=".283" stop-color="#078d95"/><stop offset=".305" stop-color="#0da566"/><stop offset=".326" stop-color="#24ab3b"/><stop offset=".348" stop-color="#74ae20"/><stop offset=".37" stop-color="#92b021"/><stop offset=".392" stop-color="#83af20"/><stop offset=".413" stop-color="#4eac2c"/><stop offset=".435" stop-color="#12a850"/><stop offset=".457" stop-color="#06a280"/><stop offset=".479" stop-color="#0871af"/><stop offset=".5" stop-color="#a92fa7"/><stop offset=".544" stop-color="#b82d55"/><stop offset=".566" stop-color="#b63521"/><stop offset="1.001" stop-color="#b6361a"/></linearGradient><linearGradient id="g39" gradientUnits="userSpaceOnUse" x1="212.0" y1="924.09" x2="212.0" y2="983.04" gradientTransform="matrix(1 -0.04513 0 1 0 9.567)"><stop offset="0" stop-color="#b6361a"/><stop offset=".271" stop-color="#b6361a"/><stop offset=".322" stop-color="#b82c90"/><stop offset=".339" stop-color="#653eb0"/><stop offset=".356" stop-color="#0870b0"/><stop offset=".39" stop-color="#0aa471"/><stop offset=".424" stop-color="#2aab39"/><stop offset=".441" stop-color="#64ad24"/><stop offset=".475" stop-color="#93b121"/><stop offset=".933" stop-color="#94b121"/><stop offset=".967" stop-color="#65ae24"/><stop offset=".984" stop-color="#2cab38"/><stop offset="1.001" stop-color="#12a852"/></linearGradient><linearGradient id="g40" gradientUnits="userSpaceOnUse" x1="220.0" y1="881.05" x2="220.0" y2="927.09" gradientTransform="matrix(1 -0.15651 0 1 0 34.432)"><stop offset="0" stop-color="#b6361a"/><stop offset=".174" stop-color="#b6351e"/><stop offset=".239" stop-color="#b02ea1"/><stop offset=".261" stop-color="#2063b0"/><stop offset=".282" stop-color="#07948f"/><stop offset=".326" stop-color="#1aaa3f"/><stop offset=".348" stop-color="#67ae23"/><stop offset=".369" stop-color="#88b021"/><stop offset=".391" stop-color="#91b021"/><stop offset=".413" stop-color="#77ae20"/><stop offset=".434" stop-color="#37ab34"/><stop offset=".456" stop-color="#11a756"/><stop offset=".478" stop-color="#06a281"/><stop offset=".5" stop-color="#0878a9"/><stop offset=".521" stop-color="#7536b0"/><stop offset=".543" stop-color="#b82b87"/><stop offset=".586" stop-color="#b73331"/><stop offset=".608" stop-color="#b6361a"/><stop offset="1" stop-color="#b6361a"/></linearGradient><linearGradient id="g41" gradientUnits="userSpaceOnUse" x1="220.0" y1="922.45" x2="220.0" y2="982.54" gradientTransform="matrix(1 -0.03947 0 1 0 8.684)"><stop offset="0" stop-color="#b6361a"/><stop offset=".283" stop-color="#b6351e"/><stop offset=".333" stop-color="#b02da1"/><stop offset=".349" stop-color="#3f53b0"/><stop offset=".366" stop-color="#077ea3"/><stop offset=".383" stop-color="#069e86"/><stop offset=".416" stop-color="#14a948"/><stop offset=".449" stop-color="#73ae20"/><stop offset=".483" stop-color="#99b121"/><stop offset=".949" stop-color="#93b121"/><stop offset=".982" stop-color="#64ad24"/><stop offset="1" stop-color="#25ab3b"/></linearGradient><linearGradient id="g42" gradientUnits="userSpaceOnUse" x1="228.0" y1="879.44" x2="228.0" y2="925.45" gradientTransform="matrix(1 -0.18713 0 1 0 42.665)"><stop offset="0" stop-color="#b6361a"/><stop offset=".152" stop-color="#b6361a"/><stop offset=".217" stop-color="#b82c93"/><stop offset=".239" stop-color="#4d4bb0"/><stop offset=".261" stop-color="#077ea3"/><stop offset=".283" stop-color="#06a280"/><stop offset=".326" stop-color="#24ab3b"/><stop offset=".348" stop-color="#67ae23"/><stop offset=".391" stop-color="#98b121"/><stop offset=".435" stop-color="#5ead26"/><stop offset=".456" stop-color="#1baa3e"/><stop offset=".5" stop-color="#069f85"/><stop offset=".522" stop-color="#0879a8"/><stop offset=".543" stop-color="#5d42b0"/><stop offset=".565" stop-color="#b82c8e"/><stop offset=".63" stop-color="#b6361a"/><stop offset="1" stop-color="#b6361a"/></linearGradient><linearGradient id="g43" gradientUnits="userSpaceOnUse" x1="228.0" y1="920.79" x2="228.0" y2="982.04" gradientTransform="matrix(1 -0.03638 0 1 0 8.295)"><stop offset="0" stop-color="#b6361a"/><stop offset=".278" stop-color="#b6361a"/><stop offset=".294" stop-color="#b7332e"/><stop offset=".327" stop-color="#b82b85"/><stop offset=".343" stop-color="#8d32ac"/><stop offset=".359" stop-color="#2362b0"/><stop offset=".376" stop-color="#07889a"/><stop offset=".392" stop-color="#07a37c"/><stop offset=".425" stop-color="#17aa40"/><stop offset=".441" stop-color="#51ad2b"/><stop offset=".457" stop-color="#79af20"/><stop offset=".49" stop-color="#99b121"/><stop offset=".963" stop-color="#94b121"/><stop offset="1" stop-color="#58ad29"/></linearGradient><linearGradient id="g44" gradientUnits="userSpaceOnUse" x1="236.0" y1="877.85" x2="236.0" y2="923.79" gradientTransform="matrix(1 -0.25706 0 1 0 60.666)"><stop offset="0" stop-color="#b6361a"/><stop offset=".109" stop-color="#b6361a"/><stop offset=".131" stop-color="#b6342a"/><stop offset=".174" stop-color="#b82b82"/><stop offset=".196" stop-color="#9931aa"/><stop offset=".218" stop-color="#2a5eb0"/><stop offset=".239" stop-color="#07859c"/><stop offset=".261" stop-color="#07a27f"/><stop offset=".305" stop-color="#16aa42"/><stop offset=".348" stop-color="#77af20"/><stop offset=".392" stop-color="#95b121"/><stop offset=".435" stop-color="#6aae22"/><stop offset=".457" stop-color="#32ab36"/><stop offset=".479" stop-color="#12a84f"/><stop offset=".522" stop-color="#06978c"/><stop offset=".544" stop-color="#0875ac"/><stop offset=".566" stop-color="#5745b0"/><stop offset=".588" stop-color="#b82c94"/><stop offset=".653" stop-color="#b6361a"/><stop offset="1.001" stop-color="#b6361a"/></linearGradient><linearGradient id="g45" gradientUnits="userSpaceOnUse" x1="236.0" y1="919.17" x2="236.0" y2="981.53" gradientTransform="matrix(1 -0.03585 0 1 0 8.462)"><stop offset="0" stop-color="#b6361a"/><stop offset=".289" stop-color="#b6361a"/><stop offset=".337" stop-color="#b82c8f"/><stop offset=".353" stop-color="#663eb0"/><stop offset=".369" stop-color="#0970b0"/><stop offset=".401" stop-color="#0aa472"/><stop offset=".433" stop-color="#2aab39"/><stop offset=".449" stop-color="#63ad25"/><stop offset=".481" stop-color="#93b121"/><stop offset=".978" stop-color="#94b121"/><stop offset="1" stop-color="#79af20"/></linearGradient><linearGradient id="g46" gradientUnits="userSpaceOnUse" x1="244.0" y1="876.28" x2="244.0" y2="922.17" gradientTransform="matrix(1 -0.28226 0 1 0 68.872)"><stop offset="0" stop-color="#b6361a"/><stop offset=".065" stop-color="#b6361a"/><stop offset=".131" stop-color="#b82b8d"/><stop offset=".153" stop-color="#7038b0"/><stop offset=".174" stop-color="#0f6cb0"/><stop offset=".218" stop-color="#09a474"/><stop offset=".261" stop-color="#25ab3b"/><stop offset=".283" stop-color="#5ead26"/><stop offset=".327" stop-color="#91b021"/><stop offset=".414" stop-color="#96b121"/><stop offset=".458" stop-color="#6bae22"/><stop offset=".479" stop-color="#32ab36"/><stop offset=".501" stop-color="#12a84f"/><stop offset=".545" stop-color="#06978c"/><stop offset=".567" stop-color="#0875ab"/><stop offset=".588" stop-color="#5746b0"/><stop offset=".61" stop-color="#b82c94"/><stop offset=".676" stop-color="#b6361a"/><stop offset="1.002" stop-color="#b6361a"/></linearGradient><linearGradient id="g47" gradientUnits="userSpaceOnUse" x1="244.0" y1="917.62" x2="244.0" y2="981.05" gradientTransform="matrix(1 -0.03789 0 1 0 9.245)"><stop offset="0" stop-color="#b6361a"/><stop offset=".3" stop-color="#b63520"/><stop offset=".347" stop-color="#af2ea2"/><stop offset=".363" stop-color="#3d54b0"/><stop offset=".378" stop-color="#077ea3"/><stop offset=".394" stop-color="#069f85"/><stop offset=".426" stop-color="#14a948"/><stop offset=".457" stop-color="#73ae20"/><stop offset=".489" stop-color="#99b121"/><stop offset=".993" stop-color="#92b021"/><stop offset="1" stop-color="#8ab021"/></linearGradient><linearGradient id="g48" gradientUnits="userSpaceOnUse" x1="252.0" y1="874.73" x2="252.0" y2="920.62" gradientTransform="matrix(1 -0.24670 0 1 0 62.167)"><stop offset="0" stop-color="#b6361a"/><stop offset=".022" stop-color="#b6361a"/><stop offset=".087" stop-color="#b82c91"/><stop offset=".109" stop-color="#6041b0"/><stop offset=".131" stop-color="#0872ae"/><stop offset=".153" stop-color="#07948f"/><stop offset=".196" stop-color="#12a852"/><stop offset=".218" stop-color="#2dab38"/><stop offset=".24" stop-color="#66ae24"/><stop offset=".283" stop-color="#94b121"/><stop offset=".436" stop-color="#95b121"/><stop offset=".479" stop-color="#68ae23"/><stop offset=".501" stop-color="#2fab37"/><stop offset=".523" stop-color="#12a850"/><stop offset=".567" stop-color="#07958e"/><stop offset=".588" stop-color="#0873ad"/><stop offset=".61" stop-color="#5c43b0"/><stop offset=".632" stop-color="#b82c92"/><stop offset=".697" stop-color="#b6361a"/><stop offset="1.002" stop-color="#b6361a"/></linearGradient><linearGradient id="g49" gradientUnits="userSpaceOnUse" x1="252.0" y1="916.16" x2="252.0" y2="980.59" gradientTransform="matrix(1 -0.04249 0 1 0 10.706)"><stop offset="0" stop-color="#b6361a"/><stop offset=".295" stop-color="#b6361a"/><stop offset=".341" stop-color="#b82b8d"/><stop offset=".357" stop-color="#7038b0"/><stop offset=".373" stop-color="#0f6cb0"/><stop offset=".404" stop-color="#09a475"/><stop offset=".435" stop-color="#25ab3b"/><stop offset=".45" stop-color="#5ead26"/><stop offset=".481" stop-color="#91b021"/><stop offset="1" stop-color="#99b121"/></linearGradient><linearGradient id="g50" gradientUnits="userSpaceOnUse" x1="260.0" y1="873.21" x2="260.0" y2="919.16" gradientTransform="matrix(1 -0.23805 0 1 0 61.892)"><stop offset="0" stop-color="#b73234"/><stop offset=".022" stop-color="#b82a67"/><stop offset=".044" stop-color="#b82b88"/><stop offset=".065" stop-color="#8033af"/><stop offset=".087" stop-color="#1a66b0"/><stop offset=".109" stop-color="#078b97"/><stop offset=".131" stop-color="#08a379"/><stop offset=".174" stop-color="#1daa3e"/><stop offset=".196" stop-color="#57ad29"/><stop offset=".239" stop-color="#8fb021"/><stop offset=".413" stop-color="#99b121"/><stop offset=".457" stop-color="#94b121"/><stop offset=".501" stop-color="#66ae24"/><stop offset=".522" stop-color="#2dab38"/><stop offset=".544" stop-color="#12a852"/><stop offset=".588" stop-color="#07948f"/><stop offset=".609" stop-color="#0872ae"/><stop offset=".631" stop-color="#6041b0"/><stop offset=".653" stop-color="#b82c91"/><stop offset=".718" stop-color="#b6361a"/><stop offset="1.001" stop-color="#b6361a"/></linearGradient><linearGradient id="g51" gradientUnits="userSpaceOnUse" x1="260.0" y1="914.82" x2="260.0" y2="980.18" gradientTransform="matrix(1 -0.04964 0 1 0 12.908)"><stop offset="0" stop-color="#b6361a"/><stop offset=".291" stop-color="#b6361a"/><stop offset=".306" stop-color="#b6342a"/><stop offset=".337" stop-color="#b82b82"/><stop offset=".352" stop-color="#9a30aa"/><stop offset=".367" stop-color="#2b5db0"/><stop offset=".382" stop-color="#07859d"/><stop offset=".398" stop-color="#07a27f"/><stop offset=".428" stop-color="#16aa42"/><stop offset=".459" stop-color="#77af20"/><stop offset=".49" stop-color="#99b121"/><stop offset="1" stop-color="#99b121"/></linearGradient><linearGradient id="g52" gradientUnits="userSpaceOnUse" x1="268.0" y1="871.74" x2="268.0" y2="917.82" gradientTransform="matrix(1 -0.23312 0 1 0 62.476)"><stop offset="0" stop-color="#b82b80"/><stop offset=".022" stop-color="#a42fa9"/><stop offset=".043" stop-color="#315ab0"/><stop offset=".065" stop-color="#07839f"/><stop offset=".087" stop-color="#06a281"/><stop offset=".13" stop-color="#15aa44"/><stop offset=".174" stop-color="#76ae20"/><stop offset=".217" stop-color="#99b121"/><stop offset=".477" stop-color="#92b121"/><stop offset=".521" stop-color="#61ad25"/><stop offset=".543" stop-color="#28ab3a"/><stop offset=".586" stop-color="#0aa473"/><stop offset=".629" stop-color="#0b6eb0"/><stop offset=".651" stop-color="#6a3bb0"/><stop offset=".673" stop-color="#b82c8e"/><stop offset=".738" stop-color="#b6361a"/><stop offset="1" stop-color="#b6361a"/></linearGradient><linearGradient id="g53" gradientUnits="userSpaceOnUse" x1="268.0" y1="913.57" x2="268.0" y2="979.80" gradientTransform="matrix(1 -0.05564 0 1 0 14.911)"><stop offset="0" stop-color="#b6361a"/><stop offset=".302" stop-color="#b63523"/><stop offset=".332" stop-color="#b82b7e"/><stop offset=".347" stop-color="#ab2ea6"/><stop offset=".362" stop-color="#3757b0"/><stop offset=".377" stop-color="#0780a1"/><stop offset=".393" stop-color="#06a083"/><stop offset=".423" stop-color="#15a946"/><stop offset=".453" stop-color="#75ae20"/><stop offset=".483" stop-color="#99b121"/><stop offset="1" stop-color="#99b121"/></linearGradient><linearGradient id="g54" gradientUnits="userSpaceOnUse" x1="276.0" y1="870.32" x2="276.0" y2="916.57" gradientTransform="matrix(1 -0.22223 0 1 0 61.337)"><stop offset="0" stop-color="#5049b0"/><stop offset=".022" stop-color="#0877a9"/><stop offset=".043" stop-color="#06998b"/><stop offset=".086" stop-color="#13a84d"/><stop offset=".108" stop-color="#36ab35"/><stop offset=".13" stop-color="#6eae21"/><stop offset=".173" stop-color="#97b121"/><stop offset=".476" stop-color="#99b121"/><stop offset=".519" stop-color="#7caf20"/><stop offset=".541" stop-color="#58ad28"/><stop offset=".562" stop-color="#1eaa3d"/><stop offset=".605" stop-color="#08a378"/><stop offset=".627" stop-color="#078c96"/><stop offset=".649" stop-color="#1867b0"/><stop offset=".67" stop-color="#7d33af"/><stop offset=".692" stop-color="#b82b89"/><stop offset=".714" stop-color="#b82a68"/><stop offset=".735" stop-color="#b73235"/><stop offset=".757" stop-color="#b6361a"/><stop offset="1" stop-color="#b6361a"/></linearGradient><linearGradient id="g55" gradientUnits="userSpaceOnUse" x1="276.0" y1="912.43" x2="276.0" y2="979.46" gradientTransform="matrix(1 -0.05735 0 1 0 15.828)"><stop offset="0" stop-color="#b6361a"/><stop offset=".283" stop-color="#b6361a"/><stop offset=".298" stop-color="#b63426"/><stop offset=".328" stop-color="#b82b80"/><stop offset=".343" stop-color="#a62fa8"/><stop offset=".358" stop-color="#325ab0"/><stop offset=".373" stop-color="#07829f"/><stop offset=".388" stop-color="#06a282"/><stop offset=".418" stop-color="#15a944"/><stop offset=".448" stop-color="#76ae20"/><stop offset=".477" stop-color="#99b121"/><stop offset="1" stop-color="#99b121"/></linearGradient><linearGradient id="g56" gradientUnits="userSpaceOnUse" x1="284.0" y1="868.97" x2="284.0" y2="915.43" gradientTransform="matrix(1 -0.20539 0 1 0 58.330)"><stop offset="0" stop-color="#078999"/><stop offset=".022" stop-color="#08a37c"/><stop offset=".065" stop-color="#18aa3f"/><stop offset=".086" stop-color="#52ad2b"/><stop offset=".108" stop-color="#79af20"/><stop offset=".151" stop-color="#99b121"/><stop offset=".495" stop-color="#99b121"/><stop offset=".538" stop-color="#77af20"/><stop offset=".581" stop-color="#15aa42"/><stop offset=".624" stop-color="#07a280"/><stop offset=".646" stop-color="#07859d"/><stop offset=".667" stop-color="#2c5db0"/><stop offset=".689" stop-color="#9c30aa"/><stop offset=".71" stop-color="#b82b82"/><stop offset=".753" stop-color="#b6342a"/><stop offset=".796" stop-color="#b6361a"/><stop offset="1" stop-color="#b6361a"/></linearGradient><linearGradient id="g57" gradientUnits="userSpaceOnUse" x1="284.0" y1="911.39" x2="284.0" y2="979.15" gradientTransform="matrix(1 -0.05695 0 1 0 16.174)"><stop offset="0" stop-color="#b6361a"/><stop offset=".28" stop-color="#b6361a"/><stop offset=".295" stop-color="#b7332f"/><stop offset=".325" stop-color="#b82b85"/><stop offset=".339" stop-color="#8e32ac"/><stop offset=".354" stop-color="#2361b0"/><stop offset=".369" stop-color="#07889a"/><stop offset=".384" stop-color="#07a37c"/><stop offset=".413" stop-color="#17aa40"/><stop offset=".428" stop-color="#51ad2b"/><stop offset=".443" stop-color="#79af20"/><stop offset=".472" stop-color="#99b121"/><stop offset="1.004" stop-color="#99b121"/></linearGradient><linearGradient id="g58" gradientUnits="userSpaceOnUse" x1="292.0" y1="867.65" x2="292.0" y2="914.39" gradientTransform="matrix(1 -0.18258 0 1 0 53.313)"><stop offset="0" stop-color="#09a475"/><stop offset=".043" stop-color="#24ab3b"/><stop offset=".064" stop-color="#5dad27"/><stop offset=".107" stop-color="#91b021"/><stop offset=".513" stop-color="#99b121"/><stop offset=".556" stop-color="#71ae20"/><stop offset=".599" stop-color="#13a94a"/><stop offset=".642" stop-color="#069c88"/><stop offset=".663" stop-color="#087ba6"/><stop offset=".685" stop-color="#474eb0"/><stop offset=".706" stop-color="#b82c99"/><stop offset=".749" stop-color="#b72e4f"/><stop offset=".77" stop-color="#b6361c"/><stop offset="1.006" stop-color="#b6361a"/></linearGradient><linearGradient id="g59" gradientUnits="userSpaceOnUse" x1="292.0" y1="910.45" x2="292.0" y2="978.87" gradientTransform="matrix(1 -0.05444 0 1 0 15.897)"><stop offset="0" stop-color="#b6361a"/><stop offset=".278" stop-color="#b6361a"/><stop offset=".292" stop-color="#b73138"/><stop offset=".322" stop-color="#b82b8a"/><stop offset=".336" stop-color="#7934b0"/><stop offset=".351" stop-color="#1569b0"/><stop offset=".38" stop-color="#09a377"/><stop offset=".409" stop-color="#21aa3c"/><stop offset=".424" stop-color="#5aad28"/><stop offset=".453" stop-color="#90b021"/><stop offset="1" stop-color="#99b121"/></linearGradient><linearGradient id="g60" gradientUnits="userSpaceOnUse" x1="300.0" y1="866.36" x2="300.0" y2="913.45" gradientTransform="matrix(1 -0.15714 0 1 0 47.142)"><stop offset="0" stop-color="#0fa75d"/><stop offset=".021" stop-color="#17aa40"/><stop offset=".042" stop-color="#51ad2b"/><stop offset=".064" stop-color="#79af20"/><stop offset=".106" stop-color="#99b121"/><stop offset=".531" stop-color="#92b121"/><stop offset=".573" stop-color="#61ad25"/><stop offset=".595" stop-color="#28ab3a"/><stop offset=".637" stop-color="#0aa473"/><stop offset=".68" stop-color="#0b6eb0"/><stop offset=".701" stop-color="#6a3bb0"/><stop offset=".722" stop-color="#b82c8e"/><stop offset=".786" stop-color="#b6361a"/><stop offset="1" stop-color="#b6361a"/></linearGradient><linearGradient id="g61" gradientUnits="userSpaceOnUse" x1="300.0" y1="909.59" x2="300.0" y2="978.62" gradientTransform="matrix(1 -0.04994 0 1 0 14.982)"><stop offset="0" stop-color="#b6361a"/><stop offset=".275" stop-color="#b6361a"/><stop offset=".319" stop-color="#b82b8d"/><stop offset=".333" stop-color="#7138b0"/><stop offset=".348" stop-color="#106cb0"/><stop offset=".377" stop-color="#09a475"/><stop offset=".406" stop-color="#24ab3b"/><stop offset=".42" stop-color="#5ead26"/><stop offset=".449" stop-color="#91b021"/><stop offset="1" stop-color="#99b121"/></linearGradient><linearGradient id="g62" gradientUnits="userSpaceOnUse" x1="308.0" y1="865.10" x2="308.0" y2="912.59" gradientTransform="matrix(1 -0.14804 0 1 0 45.596)"><stop offset="0" stop-color="#13a84e"/><stop offset=".021" stop-color="#33ab36"/><stop offset=".042" stop-color="#6cae21"/><stop offset=".084" stop-color="#96b121"/><stop offset=".526" stop-color="#99b121"/><stop offset=".569" stop-color="#76ae20"/><stop offset=".611" stop-color="#15aa43"/><stop offset=".653" stop-color="#06a281"/><stop offset=".674" stop-color="#07839e"/><stop offset=".695" stop-color="#2f5bb0"/><stop offset=".716" stop-color="#a130a9"/><stop offset=".737" stop-color="#b82b81"/><stop offset=".779" stop-color="#b63429"/><stop offset=".821" stop-color="#b6361a"/><stop offset="1" stop-color="#b6361a"/></linearGradient><linearGradient id="g63" gradientUnits="userSpaceOnUse" x1="308.0" y1="908.79" x2="308.0" y2="978.39" gradientTransform="matrix(1 -0.04521 0 1 0 13.923)"><stop offset="0" stop-color="#b6361a"/><stop offset=".273" stop-color="#b6361a"/><stop offset=".287" stop-color="#b73139"/><stop offset=".316" stop-color="#b82b8b"/><stop offset=".33" stop-color="#7734b0"/><stop offset=".345" stop-color="#146ab0"/><stop offset=".374" stop-color="#09a376"/><stop offset=".402" stop-color="#21ab3c"/><stop offset=".417" stop-color="#5bad27"/><stop offset=".445" stop-color="#90b021"/><stop offset="1.006" stop-color="#99b121"/></linearGradient><linearGradient id="g64" gradientUnits="userSpaceOnUse" x1="316.0" y1="863.88" x2="316.0" y2="911.79" gradientTransform="matrix(1 -0.14225 0 1 0 44.950)"><stop offset="0" stop-color="#15a944"/><stop offset=".042" stop-color="#76ae20"/><stop offset=".083" stop-color="#99b121"/><stop offset=".543" stop-color="#93b121"/><stop offset=".584" stop-color="#65ad24"/><stop offset=".605" stop-color="#2cab38"/><stop offset=".626" stop-color="#12a852"/><stop offset=".668" stop-color="#07938f"/><stop offset=".689" stop-color="#0871af"/><stop offset=".71" stop-color="#6240b0"/><stop offset=".73" stop-color="#b82c91"/><stop offset=".793" stop-color="#b6361a"/><stop offset="1.002" stop-color="#b6361a"/></linearGradient><linearGradient id="g65" gradientUnits="userSpaceOnUse" x1="316.0" y1="908.03" x2="316.0" y2="978.18" gradientTransform="matrix(1 -0.04150 0 1 0 13.115)"><stop offset="0" stop-color="#b6361a"/><stop offset=".271" stop-color="#b6361a"/><stop offset=".285" stop-color="#b73234"/><stop offset=".314" stop-color="#b82b88"/><stop offset=".328" stop-color="#8333ae"/><stop offset=".342" stop-color="#1c65b0"/><stop offset=".356" stop-color="#078b98"/><stop offset=".371" stop-color="#08a37a"/><stop offset=".399" stop-color="#1baa3e"/><stop offset=".413" stop-color="#55ad29"/><stop offset=".442" stop-color="#8eb021"/><stop offset=".527" stop-color="#99b121"/><stop offset="1" stop-color="#99b121"/></linearGradient><linearGradient id="g66" gradientUnits="userSpaceOnUse" x1="324.0" y1="862.68" x2="324.0" y2="911.03" gradientTransform="matrix(1 -0.13669 0 1 0 44.287)"><stop offset="0" stop-color="#1caa3e"/><stop offset=".021" stop-color="#56ad29"/><stop offset=".062" stop-color="#8eb021"/><stop offset=".186" stop-color="#99b121"/><stop offset=".538" stop-color="#99b121"/><stop offset=".579" stop-color="#74ae20"/><stop offset=".62" stop-color="#14a946"/><stop offset=".662" stop-color="#06a084"/><stop offset=".682" stop-color="#0780a1"/><stop offset=".703" stop-color="#3757b0"/><stop offset=".724" stop-color="#ab2ea6"/><stop offset=".765" stop-color="#b82d57"/><stop offset=".786" stop-color="#b63425"/><stop offset=".91" stop-color="#b6361a"/><stop offset="1" stop-color="#b6361a"/></linearGradient><linearGradient id="g67" gradientUnits="userSpaceOnUse" x1="324.0" y1="907.31" x2="324.0" y2="977.99" gradientTransform="matrix(1 -0.03885 0 1 0 12.587)"><stop offset="0" stop-color="#b6361a"/><stop offset=".269" stop-color="#b6361a"/><stop offset=".283" stop-color="#b7332e"/><stop offset=".311" stop-color="#b82b84"/><stop offset=".325" stop-color="#9431ab"/><stop offset=".34" stop-color="#285fb0"/><stop offset=".354" stop-color="#07869c"/><stop offset=".368" stop-color="#07a27e"/><stop offset=".396" stop-color="#16aa41"/><stop offset=".424" stop-color="#78af20"/><stop offset=".453" stop-color="#99b121"/><stop offset="1.005" stop-color="#99b121"/></linearGradient><linearGradient id="g68" gradientUnits="userSpaceOnUse" x1="332.0" y1="861.49" x2="332.0" y2="910.31" gradientTransform="matrix(1 -0.13136 0 1 0 43.613)"><stop offset="0" stop-color="#24ab3b"/><stop offset=".02" stop-color="#5ead27"/><stop offset=".061" stop-color="#91b021"/><stop offset=".533" stop-color="#99b121"/><stop offset=".573" stop-color="#7caf20"/><stop offset=".594" stop-color="#58ad28"/><stop offset=".614" stop-color="#1faa3d"/><stop offset=".655" stop-color="#09a378"/><stop offset=".696" stop-color="#1668b0"/><stop offset=".717" stop-color="#7a34b0"/><stop offset=".737" stop-color="#b82b8a"/><stop offset=".799" stop-color="#b6361a"/><stop offset="1.004" stop-color="#b6361a"/></linearGradient><linearGradient id="g69" gradientUnits="userSpaceOnUse" x1="332.0" y1="906.62" x2="332.0" y2="977.80" gradientTransform="matrix(1 -0.03724 0 1 0 12.364)"><stop offset="0" stop-color="#b6361a"/><stop offset=".267" stop-color="#b6361a"/><stop offset=".281" stop-color="#b63426"/><stop offset=".309" stop-color="#b82b7f"/><stop offset=".323" stop-color="#aa2fa7"/><stop offset=".337" stop-color="#3658b0"/><stop offset=".351" stop-color="#0781a1"/><stop offset=".365" stop-color="#06a183"/><stop offset=".393" stop-color="#15a946"/><stop offset=".421" stop-color="#74ae20"/><stop offset=".45" stop-color="#99b121"/><stop offset="1" stop-color="#99b121"/></linearGradient><linearGradient id="g70" gradientUnits="userSpaceOnUse" x1="340.0" y1="860.31" x2="340.0" y2="909.62" gradientTransform="matrix(1 -0.12628 0 1 0 42.934)"><stop offset="0" stop-color="#27ab3a"/><stop offset=".02" stop-color="#60ad26"/><stop offset=".061" stop-color="#92b021"/><stop offset=".548" stop-color="#96b121"/><stop offset=".588" stop-color="#6cae22"/><stop offset=".608" stop-color="#34ab36"/><stop offset=".629" stop-color="#13a84e"/><stop offset=".669" stop-color="#06988b"/><stop offset=".689" stop-color="#0877aa"/><stop offset=".71" stop-color="#5149b0"/><stop offset=".73" stop-color="#b82c96"/><stop offset=".771" stop-color="#b72e4b"/><stop offset=".791" stop-color="#b6361a"/><stop offset="1" stop-color="#b6361a"/></linearGradient><linearGradient id="g71" gradientUnits="userSpaceOnUse" x1="340.0" y1="905.96" x2="340.0" y2="977.63" gradientTransform="matrix(1 -0.03669 0 1 0 12.473)"><stop offset="0" stop-color="#b6361a"/><stop offset=".279" stop-color="#b6351e"/><stop offset=".307" stop-color="#b82b79"/><stop offset=".321" stop-color="#b82c9a"/><stop offset=".335" stop-color="#454fb0"/><stop offset=".349" stop-color="#087ba6"/><stop offset=".363" stop-color="#069c88"/><stop offset=".391" stop-color="#13a94b"/><stop offset=".419" stop-color="#71ae20"/><stop offset=".446" stop-color="#98b121"/><stop offset="1.005" stop-color="#99b121"/></linearGradient><linearGradient id="g72" gradientUnits="userSpaceOnUse" x1="348.0" y1="859.13" x2="348.0" y2="908.96" gradientTransform="matrix(1 -0.12143 0 1 0 42.256)"><stop offset="0" stop-color="#26ab3a"/><stop offset=".02" stop-color="#5fad26"/><stop offset=".06" stop-color="#91b021"/><stop offset=".542" stop-color="#99b121"/><stop offset=".582" stop-color="#76ae20"/><stop offset=".622" stop-color="#15aa44"/><stop offset=".662" stop-color="#06a281"/><stop offset=".682" stop-color="#07849e"/><stop offset=".702" stop-color="#2d5cb0"/><stop offset=".723" stop-color="#9d30aa"/><stop offset=".743" stop-color="#b82b82"/><stop offset=".783" stop-color="#b6332b"/><stop offset=".823" stop-color="#b6361a"/><stop offset="1.003" stop-color="#b6361a"/></linearGradient><linearGradient id="g73" gradientUnits="userSpaceOnUse" x1="348.0" y1="905.31" x2="348.0" y2="977.46" gradientTransform="matrix(1 -0.03718 0 1 0 12.938)"><stop offset="0" stop-color="#b6361a"/><stop offset=".277" stop-color="#b6361a"/><stop offset=".319" stop-color="#b82c95"/><stop offset=".333" stop-color="#5546b0"/><stop offset=".347" stop-color="#0875ab"/><stop offset=".36" stop-color="#06978d"/><stop offset=".388" stop-color="#12a850"/><stop offset=".402" stop-color="#30ab37"/><stop offset=".416" stop-color="#68ae23"/><stop offset=".444" stop-color="#94b121"/><stop offset="1" stop-color="#99b121"/></linearGradient><linearGradient id="g74" gradientUnits="userSpaceOnUse" x1="356.0" y1="857.95" x2="356.0" y2="908.31" gradientTransform="matrix(1 -0.11681 0 1 0 41.584)"><stop offset="0" stop-color="#21aa3c"/><stop offset=".02" stop-color="#5aad28"/><stop offset=".06" stop-color="#8fb021"/><stop offset=".397" stop-color="#99b121"/><stop offset=".556" stop-color="#90b021"/><stop offset=".596" stop-color="#5dad27"/><stop offset=".615" stop-color="#24ab3b"/><stop offset=".655" stop-color="#09a474"/><stop offset=".695" stop-color="#0c6eb0"/><stop offset=".715" stop-color="#6a3bb0"/><stop offset=".735" stop-color="#b82c8f"/><stop offset=".794" stop-color="#b6361a"/><stop offset="1" stop-color="#b6361a"/></linearGradient><linearGradient id="g75" gradientUnits="userSpaceOnUse" x1="356.0" y1="904.69" x2="356.0" y2="977.30" gradientTransform="matrix(1 -0.03872 0 1 0 13.784)"><stop offset="0" stop-color="#b6361a"/><stop offset=".275" stop-color="#b6361a"/><stop offset=".317" stop-color="#b82c91"/><stop offset=".331" stop-color="#643fb0"/><stop offset=".344" stop-color="#0870b0"/><stop offset=".372" stop-color="#0aa472"/><stop offset=".399" stop-color="#27ab3a"/><stop offset=".413" stop-color="#60ad26"/><stop offset=".441" stop-color="#91b021"/><stop offset="1.005" stop-color="#99b121"/></linearGradient><linearGradient id="g76" gradientUnits="userSpaceOnUse" x1="364.0" y1="856.75" x2="364.0" y2="907.69" gradientTransform="matrix(1 -0.11243 0 1 0 40.924)"><stop offset="0" stop-color="#1aaa3f"/><stop offset=".02" stop-color="#53ad2a"/><stop offset=".039" stop-color="#79af20"/><stop offset=".079" stop-color="#99b121"/><stop offset=".55" stop-color="#98b121"/><stop offset=".589" stop-color="#71ae20"/><stop offset=".628" stop-color="#14a949"/><stop offset=".668" stop-color="#069e86"/><stop offset=".687" stop-color="#077ea3"/><stop offset=".707" stop-color="#3c54b0"/><stop offset=".726" stop-color="#ad2ea3"/><stop offset=".785" stop-color="#b63424"/><stop offset=".962" stop-color="#b6361a"/><stop offset="1.001" stop-color="#b6361a"/></linearGradient><linearGradient id="g77" gradientUnits="userSpaceOnUse" x1="364.0" y1="904.07" x2="364.0" y2="977.14" gradientTransform="matrix(1 -0.04131 0 1 0 15.037)"><stop offset="0" stop-color="#b6361a"/><stop offset=".274" stop-color="#b6361a"/><stop offset=".315" stop-color="#b82b8d"/><stop offset=".328" stop-color="#6f39b0"/><stop offset=".342" stop-color="#106cb0"/><stop offset=".37" stop-color="#09a376"/><stop offset=".397" stop-color="#20aa3c"/><stop offset=".411" stop-color="#59ad28"/><stop offset=".438" stop-color="#8fb021"/><stop offset=".561" stop-color="#99b121"/><stop offset="1" stop-color="#99b121"/></linearGradient><linearGradient id="g78" gradientUnits="userSpaceOnUse" x1="372.0" y1="855.54" x2="372.0" y2="907.07" gradientTransform="matrix(1 -0.10828 0 1 0 40.282)"><stop offset="0" stop-color="#15aa43"/><stop offset=".039" stop-color="#76ae20"/><stop offset=".078" stop-color="#99b121"/><stop offset=".543" stop-color="#99b121"/><stop offset=".582" stop-color="#7baf20"/><stop offset=".602" stop-color="#58ad28"/><stop offset=".621" stop-color="#1faa3d"/><stop offset=".66" stop-color="#09a376"/><stop offset=".699" stop-color="#106cb0"/><stop offset=".718" stop-color="#6f39b0"/><stop offset=".737" stop-color="#b82c8e"/><stop offset=".796" stop-color="#b6361a"/><stop offset="1.009" stop-color="#b6361a"/></linearGradient><linearGradient id="g79" gradientUnits="userSpaceOnUse" x1="372.0" y1="903.48" x2="372.0" y2="976.99" gradientTransform="matrix(1 -0.04495 0 1 0 16.721)"><stop offset="0" stop-color="#b6361a"/><stop offset=".272" stop-color="#b6361a"/><stop offset=".313" stop-color="#b82b8c"/><stop offset=".326" stop-color="#7536b0"/><stop offset=".34" stop-color="#146ab0"/><stop offset=".367" stop-color="#08a378"/><stop offset=".394" stop-color="#1daa3e"/><stop offset=".408" stop-color="#55ad29"/><stop offset=".435" stop-color="#8eb021"/><stop offset=".49" stop-color="#99b121"/><stop offset="1.007" stop-color="#99b121"/></linearGradient><linearGradient id="g80" gradientUnits="userSpaceOnUse" x1="380.0" y1="854.32" x2="380.0" y2="906.48" gradientTransform="matrix(1 -0.10438 0 1 0 39.663)"><stop offset="0" stop-color="#14a947"/><stop offset=".038" stop-color="#73ae20"/><stop offset=".077" stop-color="#99b121"/><stop offset=".556" stop-color="#99b121"/><stop offset=".594" stop-color="#73ae20"/><stop offset=".633" stop-color="#14a947"/><stop offset=".671" stop-color="#06a083"/><stop offset=".69" stop-color="#0781a0"/><stop offset=".709" stop-color="#3359b0"/><stop offset=".729" stop-color="#a42fa9"/><stop offset=".748" stop-color="#b82b81"/><stop offset=".786" stop-color="#b6332b"/><stop offset=".824" stop-color="#b6361a"/><stop offset="1" stop-color="#b6361a"/></linearGradient><linearGradient id="g81" gradientUnits="userSpaceOnUse" x1="380.0" y1="902.89" x2="380.0" y2="976.84" gradientTransform="matrix(1 -0.04964 0 1 0 18.862)"><stop offset="0" stop-color="#b6361a"/><stop offset=".27" stop-color="#b6361a"/><stop offset=".311" stop-color="#b82b8d"/><stop offset=".325" stop-color="#7237b0"/><stop offset=".338" stop-color="#126ab0"/><stop offset=".365" stop-color="#09a377"/><stop offset=".392" stop-color="#1daa3e"/><stop offset=".406" stop-color="#55ad29"/><stop offset=".433" stop-color="#8db021"/><stop offset=".487" stop-color="#99b121"/><stop offset="1.001" stop-color="#99b121"/></linearGradient><linearGradient id="g82" gradientUnits="userSpaceOnUse" x1="388.0" y1="853.09" x2="388.0" y2="905.89" gradientTransform="matrix(1 -0.10074 0 1 0 39.087)"><stop offset="0" stop-color="#13a94b"/><stop offset=".019" stop-color="#38ac34"/><stop offset=".038" stop-color="#6fae20"/><stop offset=".076" stop-color="#96b121"/><stop offset=".568" stop-color="#92b121"/><stop offset=".606" stop-color="#65ad24"/><stop offset=".625" stop-color="#2dab38"/><stop offset=".644" stop-color="#12a851"/><stop offset=".682" stop-color="#06978c"/><stop offset=".701" stop-color="#0876aa"/><stop offset=".72" stop-color="#5049b0"/><stop offset=".739" stop-color="#b82c97"/><stop offset=".777" stop-color="#b72e4d"/><stop offset=".796" stop-color="#b6361b"/><stop offset="1.004" stop-color="#b6361a"/></linearGradient><linearGradient id="g83" gradientUnits="userSpaceOnUse" x1="388.0" y1="902.31" x2="388.0" y2="976.70" gradientTransform="matrix(1 -0.05619 0 1 0 21.803)"><stop offset="0" stop-color="#b6361a"/><stop offset=".269" stop-color="#b6361a"/><stop offset=".309" stop-color="#b82c91"/><stop offset=".323" stop-color="#653eb0"/><stop offset=".336" stop-color="#0a6fb0"/><stop offset=".363" stop-color="#09a474"/><stop offset=".39" stop-color="#22ab3c"/><stop offset=".403" stop-color="#5aad28"/><stop offset=".43" stop-color="#8fb021"/><stop offset=".538" stop-color="#99b121"/><stop offset="1" stop-color="#99b121"/></linearGradient><linearGradient id="g84" gradientUnits="userSpaceOnUse" x1="396.0" y1="851.87" x2="396.0" y2="905.31" gradientTransform="matrix(1 -0.09755 0 1 0 38.630)"><stop offset="0" stop-color="#12a84f"/><stop offset=".019" stop-color="#30ab37"/><stop offset=".037" stop-color="#67ae23"/><stop offset=".075" stop-color="#93b121"/><stop offset=".561" stop-color="#99b121"/><stop offset=".599" stop-color="#7aaf20"/><stop offset=".617" stop-color="#56ad29"/><stop offset=".636" stop-color="#1eaa3d"/><stop offset=".674" stop-color="#09a376"/><stop offset=".711" stop-color="#0e6db0"/><stop offset=".73" stop-color="#6b3bb0"/><stop offset=".748" stop-color="#b82c8f"/><stop offset=".805" stop-color="#b6361a"/><stop offset="1" stop-color="#b6361a"/></linearGradient><linearGradient id="g85" gradientUnits="userSpaceOnUse" x1="396.0" y1="901.75" x2="396.0" y2="976.56" gradientTransform="matrix(1 -0.06723 0 1 0 26.623)"><stop offset="0" stop-color="#b6361a"/><stop offset=".267" stop-color="#b6361d"/><stop offset=".307" stop-color="#b82c98"/><stop offset=".321" stop-color="#4e4bb0"/><stop offset=".334" stop-color="#0877aa"/><stop offset=".348" stop-color="#06978c"/><stop offset=".374" stop-color="#12a850"/><stop offset=".388" stop-color="#2dab38"/><stop offset=".401" stop-color="#65ad24"/><stop offset=".428" stop-color="#92b121"/><stop offset="1.003" stop-color="#99b121"/></linearGradient><linearGradient id="g86" gradientUnits="userSpaceOnUse" x1="408.0" y1="849.43" x2="408.0" y2="904.75" gradientTransform="matrix(1 -0.09325 0 1 0 38.044)"><stop offset="0" stop-color="#0da567"/><stop offset=".018" stop-color="#13a94a"/><stop offset=".054" stop-color="#6fae20"/><stop offset=".09" stop-color="#96b121"/><stop offset=".579" stop-color="#99b121"/><stop offset=".615" stop-color="#75ae20"/><stop offset=".651" stop-color="#15aa43"/><stop offset=".687" stop-color="#07a37e"/><stop offset=".705" stop-color="#07889a"/><stop offset=".723" stop-color="#2063b0"/><stop offset=".741" stop-color="#8433ae"/><stop offset=".759" stop-color="#b82b89"/><stop offset=".814" stop-color="#b6361a"/><stop offset="1" stop-color="#b6361a"/></linearGradient><linearGradient id="g87" gradientUnits="userSpaceOnUse" x1="408.0" y1="900.63" x2="408.0" y2="976.42" gradientTransform="matrix(1 -0.07952 0 1 0 32.443)"><stop offset="0" stop-color="#b6361a"/><stop offset=".251" stop-color="#b6361a"/><stop offset=".264" stop-color="#b63429"/><stop offset=".29" stop-color="#b82b80"/><stop offset=".303" stop-color="#a92fa7"/><stop offset=".317" stop-color="#3856b0"/><stop offset=".33" stop-color="#077fa3"/><stop offset=".343" stop-color="#069e86"/><stop offset=".369" stop-color="#13a94b"/><stop offset=".396" stop-color="#6eae21"/><stop offset=".422" stop-color="#95b121"/><stop offset="1.003" stop-color="#99b121"/></linearGradient><linearGradient id="g88" gradientUnits="userSpaceOnUse" x1="424.0" y1="847.04" x2="424.0" y2="903.63" gradientTransform="matrix(1 -0.08822 0 1 0 37.404)"><stop offset="0" stop-color="#0aa470"/><stop offset=".035" stop-color="#26ab3a"/><stop offset=".053" stop-color="#5dad27"/><stop offset=".088" stop-color="#8fb021"/><stop offset=".247" stop-color="#99b121"/><stop offset=".601" stop-color="#92b021"/><stop offset=".636" stop-color="#65ae24"/><stop offset=".654" stop-color="#2fab37"/><stop offset=".671" stop-color="#12a84f"/><stop offset=".707" stop-color="#069a8a"/><stop offset=".724" stop-color="#087aa6"/><stop offset=".742" stop-color="#4251b0"/><stop offset=".76" stop-color="#af2ea2"/><stop offset=".813" stop-color="#b63425"/><stop offset=".901" stop-color="#b6361a"/><stop offset="1.007" stop-color="#b6361a"/></linearGradient><linearGradient id="g89" gradientUnits="userSpaceOnUse" x1="424.0" y1="899.54" x2="424.0" y2="976.15" gradientTransform="matrix(1 -0.08634 0 1 0 36.606)"><stop offset="0" stop-color="#b6361a"/><stop offset=".235" stop-color="#b6361a"/><stop offset=".248" stop-color="#b63425"/><stop offset=".287" stop-color="#af2ea2"/><stop offset=".3" stop-color="#4251b0"/><stop offset=".313" stop-color="#087aa6"/><stop offset=".326" stop-color="#069a8a"/><stop offset=".352" stop-color="#12a84f"/><stop offset=".366" stop-color="#2fab37"/><stop offset=".379" stop-color="#65ae24"/><stop offset=".405" stop-color="#92b021"/><stop offset="1.005" stop-color="#99b121"/></linearGradient><linearGradient id="g90" gradientUnits="userSpaceOnUse" x1="440.0" y1="844.70" x2="440.0" y2="902.54" gradientTransform="matrix(1 -0.08404 0 1 0 36.976)"><stop offset="0" stop-color="#08a37a"/><stop offset=".035" stop-color="#16aa41"/><stop offset=".069" stop-color="#75ae20"/><stop offset=".104" stop-color="#99b121"/><stop offset=".605" stop-color="#99b121"/><stop offset=".64" stop-color="#77ae20"/><stop offset=".674" stop-color="#17aa40"/><stop offset=".709" stop-color="#08a378"/><stop offset=".743" stop-color="#0f6cb0"/><stop offset=".761" stop-color="#683db0"/><stop offset=".778" stop-color="#b82c91"/><stop offset=".83" stop-color="#b6361a"/><stop offset="1.003" stop-color="#b6361a"/></linearGradient><linearGradient id="g91" gradientUnits="userSpaceOnUse" x1="440.0" y1="898.47" x2="440.0" y2="975.89" gradientTransform="matrix(1 -0.08493 0 1 0 37.367)"><stop offset="0" stop-color="#b6361a"/><stop offset=".22" stop-color="#b6361a"/><stop offset=".233" stop-color="#b63426"/><stop offset=".271" stop-color="#af2ea1"/><stop offset=".284" stop-color="#4450b0"/><stop offset=".297" stop-color="#087aa7"/><stop offset=".31" stop-color="#06998b"/><stop offset=".336" stop-color="#12a851"/><stop offset=".349" stop-color="#2bab39"/><stop offset=".362" stop-color="#61ad25"/><stop offset=".388" stop-color="#90b021"/><stop offset=".995" stop-color="#99b121"/><stop offset="1" stop-color="#99b121"/></linearGradient><linearGradient id="g92" gradientUnits="userSpaceOnUse" x1="456.0" y1="842.46" x2="456.0" y2="901.47" gradientTransform="matrix(1 -0.08070 0 1 0 36.801)"><stop offset="0" stop-color="#06a183"/><stop offset=".034" stop-color="#14a94a"/><stop offset=".068" stop-color="#6dae21"/><stop offset=".102" stop-color="#94b121"/><stop offset=".627" stop-color="#92b021"/><stop offset=".661" stop-color="#68ae23"/><stop offset=".678" stop-color="#33ab36"/><stop offset=".695" stop-color="#13a94c"/><stop offset=".729" stop-color="#069e86"/><stop offset=".746" stop-color="#0780a1"/><stop offset=".763" stop-color="#315ab0"/><stop offset=".78" stop-color="#9a30aa"/><stop offset=".797" stop-color="#b82b84"/><stop offset=".83" stop-color="#b73231"/><stop offset=".847" stop-color="#b6361a"/><stop offset="1" stop-color="#b6361a"/></linearGradient><linearGradient id="g93" gradientUnits="userSpaceOnUse" x1="456.0" y1="897.40" x2="456.0" y2="975.63" gradientTransform="matrix(1 -0.09192 0 1 0 41.917)"><stop offset="0" stop-color="#b6361a"/><stop offset=".205" stop-color="#b6361a"/><stop offset=".217" stop-color="#b73231"/><stop offset=".243" stop-color="#b82b84"/><stop offset=".256" stop-color="#9b30aa"/><stop offset=".268" stop-color="#325ab0"/><stop offset=".281" stop-color="#0780a1"/><stop offset=".294" stop-color="#069e86"/><stop offset=".32" stop-color="#13a84c"/><stop offset=".332" stop-color="#33ab36"/><stop offset=".345" stop-color="#68ae23"/><stop offset=".371" stop-color="#92b021"/><stop offset="1" stop-color="#99b121"/></linearGradient><linearGradient id="g94" gradientUnits="userSpaceOnUse" x1="472.0" y1="840.36" x2="472.0" y2="900.40" gradientTransform="matrix(1 -0.07822 0 1 0 36.921)"><stop offset="0" stop-color="#069a89"/><stop offset=".033" stop-color="#12a851"/><stop offset=".05" stop-color="#2aab39"/><stop offset=".067" stop-color="#5ead26"/><stop offset=".1" stop-color="#8eb021"/><stop offset=".2" stop-color="#99b121"/><stop offset=".633" stop-color="#98b121"/><stop offset=".666" stop-color="#74ae20"/><stop offset=".699" stop-color="#16aa41"/><stop offset=".733" stop-color="#08a379"/><stop offset=".766" stop-color="#0d6eb0"/><stop offset=".783" stop-color="#633fb0"/><stop offset=".799" stop-color="#b82c93"/><stop offset=".833" stop-color="#b72f49"/><stop offset=".849" stop-color="#b6361a"/><stop offset="1" stop-color="#b6361a"/></linearGradient><linearGradient id="g95" gradientUnits="userSpaceOnUse" x1="472.0" y1="896.34" x2="472.0" y2="975.38" gradientTransform="matrix(1 -0.09173 0 1 0 43.297)"><stop offset="0" stop-color="#b6361a"/><stop offset=".19" stop-color="#b6361a"/><stop offset=".228" stop-color="#b82c91"/><stop offset=".24" stop-color="#6b3bb0"/><stop offset=".253" stop-color="#126bb0"/><stop offset=".278" stop-color="#08a37b"/><stop offset=".304" stop-color="#15aa43"/><stop offset=".329" stop-color="#73ae20"/><stop offset=".354" stop-color="#97b121"/><stop offset="1" stop-color="#99b121"/></linearGradient><linearGradient id="g96" gradientUnits="userSpaceOnUse" x1="488.0" y1="838.37" x2="488.0" y2="899.34" gradientTransform="matrix(1 -0.07659 0 1 0 37.375)"><stop offset="0" stop-color="#07958e"/><stop offset=".049" stop-color="#1eaa3d"/><stop offset=".082" stop-color="#78af20"/><stop offset=".115" stop-color="#99b121"/><stop offset=".64" stop-color="#99b121"/><stop offset=".672" stop-color="#79af20"/><stop offset=".689" stop-color="#57ad29"/><stop offset=".705" stop-color="#23ab3b"/><stop offset=".754" stop-color="#06978c"/><stop offset=".771" stop-color="#0879a8"/><stop offset=".787" stop-color="#4251b0"/><stop offset=".804" stop-color="#ac2ea4"/><stop offset=".853" stop-color="#b6332a"/><stop offset=".886" stop-color="#b6361a"/><stop offset="1.001" stop-color="#b6361a"/></linearGradient><linearGradient id="g97" gradientUnits="userSpaceOnUse" x1="488.0" y1="895.27" x2="488.0" y2="975.13" gradientTransform="matrix(1 -0.08114 0 1 0 39.599)"><stop offset="0" stop-color="#b6361a"/><stop offset=".175" stop-color="#b63520"/><stop offset=".213" stop-color="#b82c97"/><stop offset=".225" stop-color="#5646b0"/><stop offset=".238" stop-color="#0872ae"/><stop offset=".263" stop-color="#09a376"/><stop offset=".288" stop-color="#17aa40"/><stop offset=".313" stop-color="#75ae20"/><stop offset=".338" stop-color="#99b121"/><stop offset="1.002" stop-color="#99b121"/></linearGradient><linearGradient id="g98" gradientUnits="userSpaceOnUse" x1="504.0" y1="836.47" x2="504.0" y2="898.27" gradientTransform="matrix(1 -0.07536 0 1 0 37.981)"><stop offset="0" stop-color="#079092"/><stop offset=".032" stop-color="#0fa75b"/><stop offset=".049" stop-color="#16aa41"/><stop offset=".081" stop-color="#74ae20"/><stop offset=".113" stop-color="#97b121"/><stop offset=".647" stop-color="#99b121"/><stop offset=".68" stop-color="#7caf20"/><stop offset=".696" stop-color="#5fad26"/><stop offset=".712" stop-color="#2cab38"/><stop offset=".728" stop-color="#12a84f"/><stop offset=".761" stop-color="#069d87"/><stop offset=".777" stop-color="#0780a2"/><stop offset=".793" stop-color="#2f5bb0"/><stop offset=".809" stop-color="#9331ac"/><stop offset=".825" stop-color="#b82b86"/><stop offset=".874" stop-color="#b6361a"/><stop offset="1.003" stop-color="#b6361a"/></linearGradient><linearGradient id="g99" gradientUnits="userSpaceOnUse" x1="504.0" y1="894.19" x2="504.0" y2="974.88" gradientTransform="matrix(1 -0.06804 0 1 0 34.291)"><stop offset="0" stop-color="#b6361a"/><stop offset=".161" stop-color="#b6361a"/><stop offset=".198" stop-color="#b82b8d"/><stop offset=".211" stop-color="#7a34b0"/><stop offset=".223" stop-color="#1f64b0"/><stop offset=".235" stop-color="#07869c"/><stop offset=".248" stop-color="#06a281"/><stop offset=".273" stop-color="#14a94a"/><stop offset=".297" stop-color="#6aae22"/><stop offset=".335" stop-color="#99b121"/><stop offset="1.004" stop-color="#99b121"/></linearGradient><linearGradient id="g100" gradientUnits="userSpaceOnUse" x1="520.0" y1="834.66" x2="520.0" y2="897.19" gradientTransform="matrix(1 -0.07354 0 1 0 38.241)"><stop offset="0" stop-color="#078d95"/><stop offset=".016" stop-color="#08a37b"/><stop offset=".048" stop-color="#15a945"/><stop offset=".08" stop-color="#71ae20"/><stop offset=".128" stop-color="#99b121"/><stop offset=".656" stop-color="#99b121"/><stop offset=".704" stop-color="#63ad24"/><stop offset=".72" stop-color="#31ab36"/><stop offset=".736" stop-color="#13a94c"/><stop offset=".768" stop-color="#06a083"/><stop offset=".784" stop-color="#07849d"/><stop offset=".8" stop-color="#2361b0"/><stop offset=".816" stop-color="#7f33af"/><stop offset=".832" stop-color="#b82b8c"/><stop offset=".88" stop-color="#b6361a"/><stop offset="1.007" stop-color="#b6361a"/></linearGradient><linearGradient id="g101" gradientUnits="userSpaceOnUse" x1="520.0" y1="893.11" x2="520.0" y2="974.63" gradientTransform="matrix(1 -0.06866 0 1 0 35.702)"><stop offset="0" stop-color="#b6361a"/><stop offset=".147" stop-color="#b6361a"/><stop offset=".159" stop-color="#b63427"/><stop offset=".196" stop-color="#b42d9d"/><stop offset=".209" stop-color="#4e4bb0"/><stop offset=".221" stop-color="#0874ac"/><stop offset=".245" stop-color="#09a475"/><stop offset=".27" stop-color="#16aa40"/><stop offset=".294" stop-color="#74ae20"/><stop offset=".319" stop-color="#97b121"/><stop offset="1.006" stop-color="#98b121"/></linearGradient><linearGradient id="g102" gradientUnits="userSpaceOnUse" x1="536.0" y1="832.91" x2="536.0" y2="896.11" gradientTransform="matrix(1 -0.07183 0 1 0 38.502)"><stop offset="0" stop-color="#078b97"/><stop offset=".016" stop-color="#07a37d"/><stop offset=".047" stop-color="#14a947"/><stop offset=".079" stop-color="#6cae21"/><stop offset=".127" stop-color="#99b121"/><stop offset=".665" stop-color="#99b121"/><stop offset=".712" stop-color="#66ae24"/><stop offset=".744" stop-color="#13a94a"/><stop offset=".775" stop-color="#06a281"/><stop offset=".791" stop-color="#07879a"/><stop offset=".807" stop-color="#1a66b0"/><stop offset=".823" stop-color="#7138b0"/><stop offset=".839" stop-color="#b82c90"/><stop offset=".886" stop-color="#b6361a"/><stop offset="1" stop-color="#b6361a"/></linearGradient><linearGradient id="g103" gradientUnits="userSpaceOnUse" x1="536.0" y1="892.05" x2="536.0" y2="974.37" gradientTransform="matrix(1 -0.06921 0 1 0 37.095)"><stop offset="0" stop-color="#b6361a"/><stop offset=".146" stop-color="#b6361a"/><stop offset=".182" stop-color="#b82b89"/><stop offset=".194" stop-color="#8832ad"/><stop offset=".207" stop-color="#2a5eb0"/><stop offset=".219" stop-color="#0781a0"/><stop offset=".231" stop-color="#069d86"/><stop offset=".255" stop-color="#12a850"/><stop offset=".267" stop-color="#29ab39"/><stop offset=".279" stop-color="#5cad27"/><stop offset=".304" stop-color="#8cb021"/><stop offset=".34" stop-color="#99b121"/><stop offset="1" stop-color="#97b121"/></linearGradient><linearGradient id="g104" gradientUnits="userSpaceOnUse" x1="552.0" y1="831.23" x2="552.0" y2="895.05" gradientTransform="matrix(1 -0.07028 0 1 0 38.792)"><stop offset="0" stop-color="#078b98"/><stop offset=".016" stop-color="#07a27e"/><stop offset=".047" stop-color="#14a949"/><stop offset=".078" stop-color="#68ae23"/><stop offset=".125" stop-color="#99b121"/><stop offset=".674" stop-color="#99b121"/><stop offset=".721" stop-color="#66ae23"/><stop offset=".752" stop-color="#14a94a"/><stop offset=".783" stop-color="#07a27f"/><stop offset=".815" stop-color="#146ab0"/><stop offset=".83" stop-color="#673db0"/><stop offset=".846" stop-color="#b82c93"/><stop offset=".877" stop-color="#b72e4c"/><stop offset=".893" stop-color="#b6361d"/><stop offset="1.003" stop-color="#b6361a"/></linearGradient><linearGradient id="g105" gradientUnits="userSpaceOnUse" x1="552.0" y1="890.99" x2="552.0" y2="974.10" gradientTransform="matrix(1 -0.06891 0 1 0 38.040)"><stop offset="0" stop-color="#b6361a"/><stop offset=".144" stop-color="#b63522"/><stop offset=".18" stop-color="#b82c96"/><stop offset=".193" stop-color="#5d42b0"/><stop offset=".205" stop-color="#0d6eb0"/><stop offset=".229" stop-color="#07a37c"/><stop offset=".253" stop-color="#14a947"/><stop offset=".277" stop-color="#6cae22"/><stop offset=".313" stop-color="#99b121"/><stop offset=".987" stop-color="#99b121"/><stop offset="1" stop-color="#8db021"/></linearGradient><linearGradient id="g106" gradientUnits="userSpaceOnUse" x1="568.0" y1="829.59" x2="568.0" y2="893.99" gradientTransform="matrix(1 -0.06887 0 1 0 39.118)"><stop offset="0" stop-color="#078a98"/><stop offset=".016" stop-color="#07a27f"/><stop offset=".047" stop-color="#14a94a"/><stop offset=".078" stop-color="#65ae24"/><stop offset=".124" stop-color="#99b121"/><stop offset=".683" stop-color="#99b121"/><stop offset=".73" stop-color="#65ae24"/><stop offset=".761" stop-color="#14a94a"/><stop offset=".792" stop-color="#07a27f"/><stop offset=".823" stop-color="#116bb0"/><stop offset=".839" stop-color="#6240b0"/><stop offset=".854" stop-color="#b82c95"/><stop offset=".901" stop-color="#b63521"/><stop offset="1" stop-color="#b6361a"/></linearGradient><linearGradient id="g107" gradientUnits="userSpaceOnUse" x1="568.0" y1="889.95" x2="568.0" y2="973.83" gradientTransform="matrix(1 -0.06777 0 1 0 38.496)"><stop offset="0" stop-color="#b6361a"/><stop offset=".131" stop-color="#b6361a"/><stop offset=".143" stop-color="#b73234"/><stop offset=".167" stop-color="#b82b83"/><stop offset=".179" stop-color="#a330a9"/><stop offset=".191" stop-color="#3d54b0"/><stop offset=".203" stop-color="#0879a8"/><stop offset=".227" stop-color="#0aa473"/><stop offset=".25" stop-color="#17aa40"/><stop offset=".274" stop-color="#73ae20"/><stop offset=".31" stop-color="#99b121"/><stop offset=".99" stop-color="#91b021"/><stop offset="1.001" stop-color="#81af20"/></linearGradient><linearGradient id="g108" gradientUnits="userSpaceOnUse" x1="584.0" y1="828.02" x2="584.0" y2="892.95" gradientTransform="matrix(1 -0.06762 0 1 0 39.489)"><stop offset="0" stop-color="#078a98"/><stop offset=".015" stop-color="#07a27f"/><stop offset=".046" stop-color="#13a94b"/><stop offset=".077" stop-color="#62ad25"/><stop offset=".123" stop-color="#99b121"/><stop offset=".693" stop-color="#99b121"/><stop offset=".739" stop-color="#61ad25"/><stop offset=".755" stop-color="#31ab37"/><stop offset=".77" stop-color="#13a94b"/><stop offset=".801" stop-color="#07a280"/><stop offset=".832" stop-color="#126bb0"/><stop offset=".847" stop-color="#6240b0"/><stop offset=".862" stop-color="#b82c95"/><stop offset=".909" stop-color="#b63522"/><stop offset="1.001" stop-color="#b6361a"/></linearGradient><linearGradient id="g109" gradientUnits="userSpaceOnUse" x1="584.0" y1="888.94" x2="584.0" y2="973.57" gradientTransform="matrix(1 -0.06579 0 1 0 38.422)"><stop offset="0" stop-color="#b6361a"/><stop offset=".13" stop-color="#b6361a"/><stop offset=".165" stop-color="#b82b8d"/><stop offset=".177" stop-color="#7d33af"/><stop offset=".189" stop-color="#2560b0"/><stop offset=".201" stop-color="#0782a0"/><stop offset=".213" stop-color="#069d87"/><stop offset=".248" stop-color="#23ab3b"/><stop offset=".272" stop-color="#77af20"/><stop offset=".295" stop-color="#98b121"/><stop offset=".981" stop-color="#92b121"/><stop offset="1.004" stop-color="#71ae20"/></linearGradient><linearGradient id="g110" gradientUnits="userSpaceOnUse" x1="600.0" y1="826.53" x2="600.0" y2="891.94" gradientTransform="matrix(1 -0.06652 0 1 0 39.910)"><stop offset="0" stop-color="#078c96"/><stop offset=".015" stop-color="#07a37e"/><stop offset=".046" stop-color="#14a94a"/><stop offset=".076" stop-color="#61ad25"/><stop offset=".122" stop-color="#99b121"/><stop offset=".703" stop-color="#99b121"/><stop offset=".734" stop-color="#78af20"/><stop offset=".764" stop-color="#28ab3a"/><stop offset=".795" stop-color="#0ca568"/><stop offset=".81" stop-color="#06a183"/><stop offset=".841" stop-color="#1967b0"/><stop offset=".856" stop-color="#6b3bb0"/><stop offset=".872" stop-color="#b82c93"/><stop offset=".917" stop-color="#b6351f"/><stop offset="1" stop-color="#b6361a"/></linearGradient><linearGradient id="g111" gradientUnits="userSpaceOnUse" x1="600.0" y1="887.95" x2="600.0" y2="973.33" gradientTransform="matrix(1 -0.06296 0 1 0 37.778)"><stop offset="0" stop-color="#b6361a"/><stop offset=".129" stop-color="#b63522"/><stop offset=".164" stop-color="#b82c95"/><stop offset=".176" stop-color="#653eb0"/><stop offset=".187" stop-color="#1569b0"/><stop offset=".211" stop-color="#06a282"/><stop offset=".234" stop-color="#13a84e"/><stop offset=".246" stop-color="#2aab39"/><stop offset=".269" stop-color="#79af20"/><stop offset=".293" stop-color="#99b121"/><stop offset=".972" stop-color="#93b121"/><stop offset="1" stop-color="#64ad24"/></linearGradient><linearGradient id="g112" gradientUnits="userSpaceOnUse" x1="616.0" y1="825.15" x2="616.0" y2="973.10" gradientTransform="matrix(1 -0.05987 0 1 0 36.882)"><stop offset="0" stop-color="#078f94"/><stop offset=".014" stop-color="#0ea661"/><stop offset=".02" stop-color="#14a949"/><stop offset=".041" stop-color="#7caf20"/><stop offset=".061" stop-color="#99b121"/><stop offset=".318" stop-color="#93b121"/><stop offset=".331" stop-color="#73ae20"/><stop offset=".345" stop-color="#19aa3f"/><stop offset=".365" stop-color="#069a89"/><stop offset=".372" stop-color="#077fa2"/><stop offset=".379" stop-color="#295eb0"/><stop offset=".385" stop-color="#8033af"/><stop offset=".392" stop-color="#b82b8d"/><stop offset=".412" stop-color="#b6361a"/><stop offset=".487" stop-color="#b6361a"/><stop offset=".493" stop-color="#b73232"/><stop offset=".514" stop-color="#ac2ea5"/><stop offset=".52" stop-color="#4a4db0"/><stop offset=".527" stop-color="#0873ad"/><stop offset=".541" stop-color="#08a37b"/><stop offset=".554" stop-color="#14a948"/><stop offset=".568" stop-color="#64ad24"/><stop offset=".588" stop-color="#99b121"/><stop offset=".98" stop-color="#90b021"/><stop offset=".994" stop-color="#6dae21"/><stop offset="1" stop-color="#3fac31"/></linearGradient><linearGradient id="g113" gradientUnits="userSpaceOnUse" x1="632.0" y1="823.85" x2="632.0" y2="972.88" gradientTransform="matrix(1 -0.05779 0 1 0 36.525)"><stop offset="0" stop-color="#079291"/><stop offset=".02" stop-color="#14a947"/><stop offset=".034" stop-color="#65ae24"/><stop offset=".054" stop-color="#99b121"/><stop offset=".315" stop-color="#99b121"/><stop offset=".336" stop-color="#63ad25"/><stop offset=".349" stop-color="#14a948"/><stop offset=".362" stop-color="#08a379"/><stop offset=".376" stop-color="#0875ab"/><stop offset=".382" stop-color="#4351b0"/><stop offset=".389" stop-color="#a52fa9"/><stop offset=".403" stop-color="#b82a66"/><stop offset=".416" stop-color="#b6361a"/><stop offset=".49" stop-color="#b63524"/><stop offset=".51" stop-color="#b82c95"/><stop offset=".517" stop-color="#683db0"/><stop offset=".523" stop-color="#1967b0"/><stop offset=".537" stop-color="#069f85"/><stop offset=".557" stop-color="#20aa3c"/><stop offset=".57" stop-color="#75ae20"/><stop offset=".591" stop-color="#99b121"/><stop offset=".973" stop-color="#94b121"/><stop offset=".986" stop-color="#74ae20"/><stop offset="1" stop-color="#1eaa3d"/></linearGradient><linearGradient id="g114" gradientUnits="userSpaceOnUse" x1="648.0" y1="822.60" x2="648.0" y2="972.64" gradientTransform="matrix(1 -0.05504 0 1 0 35.663)"><stop offset="0" stop-color="#07958e"/><stop offset=".02" stop-color="#15a946"/><stop offset=".033" stop-color="#67ae23"/><stop offset=".053" stop-color="#99b121"/><stop offset=".32" stop-color="#92b121"/><stop offset=".333" stop-color="#73ae20"/><stop offset=".347" stop-color="#1daa3e"/><stop offset=".367" stop-color="#069f85"/><stop offset=".38" stop-color="#1867b0"/><stop offset=".387" stop-color="#653eb0"/><stop offset=".393" stop-color="#b82c96"/><stop offset=".413" stop-color="#b63427"/><stop offset=".44" stop-color="#b6361a"/><stop offset=".487" stop-color="#b6361a"/><stop offset=".507" stop-color="#b82b88"/><stop offset=".513" stop-color="#9631ab"/><stop offset=".52" stop-color="#3b55b0"/><stop offset=".527" stop-color="#0878a9"/><stop offset=".54" stop-color="#08a378"/><stop offset=".553" stop-color="#14a948"/><stop offset=".573" stop-color="#7baf20"/><stop offset=".593" stop-color="#99b121"/><stop offset=".966" stop-color="#97b121"/><stop offset=".986" stop-color="#5aad28"/><stop offset=".993" stop-color="#2cab38"/><stop offset="1" stop-color="#13a84d"/></linearGradient><linearGradient id="g115" gradientUnits="userSpaceOnUse" x1="664.0" y1="821.36" x2="664.0" y2="972.38" gradientTransform="matrix(1 -0.05239 0 1 0 34.788)"><stop offset="0" stop-color="#06968d"/><stop offset=".02" stop-color="#15a946"/><stop offset=".033" stop-color="#65ae24"/><stop offset=".053" stop-color="#99b121"/><stop offset=".318" stop-color="#98b121"/><stop offset=".338" stop-color="#5ead26"/><stop offset=".351" stop-color="#14a949"/><stop offset=".371" stop-color="#079291"/><stop offset=".377" stop-color="#0878a9"/><stop offset=".384" stop-color="#3a55b0"/><stop offset=".391" stop-color="#9231ac"/><stop offset=".397" stop-color="#b82b89"/><stop offset=".417" stop-color="#b6361a"/><stop offset=".49" stop-color="#b63523"/><stop offset=".51" stop-color="#b82c93"/><stop offset=".516" stop-color="#7138b0"/><stop offset=".523" stop-color="#2262b0"/><stop offset=".53" stop-color="#0781a0"/><stop offset=".543" stop-color="#0aa470"/><stop offset=".556" stop-color="#16aa42"/><stop offset=".569" stop-color="#6dae21"/><stop offset=".589" stop-color="#99b121"/><stop offset=".96" stop-color="#99b121"/><stop offset=".98" stop-color="#64ad24"/><stop offset=".993" stop-color="#15a946"/><stop offset="1" stop-color="#0fa65d"/></linearGradient><linearGradient id="g116" gradientUnits="userSpaceOnUse" x1="680.0" y1="820.10" x2="680.0" y2="972.09" gradientTransform="matrix(1 -0.04926 0 1 0 33.494)"><stop offset="0" stop-color="#07958e"/><stop offset=".02" stop-color="#14a948"/><stop offset=".039" stop-color="#7aaf20"/><stop offset=".059" stop-color="#99b121"/><stop offset=".316" stop-color="#99b121"/><stop offset=".336" stop-color="#6dae21"/><stop offset=".349" stop-color="#16aa41"/><stop offset=".368" stop-color="#069d87"/><stop offset=".382" stop-color="#1967b0"/><stop offset=".388" stop-color="#633fb0"/><stop offset=".395" stop-color="#b82c98"/><stop offset=".415" stop-color="#b6332c"/><stop offset=".428" stop-color="#b6361a"/><stop offset=".487" stop-color="#b6361a"/><stop offset=".493" stop-color="#b6332b"/><stop offset=".513" stop-color="#b82c97"/><stop offset=".52" stop-color="#643fb0"/><stop offset=".526" stop-color="#1a67b0"/><stop offset=".54" stop-color="#069d87"/><stop offset=".559" stop-color="#16aa41"/><stop offset=".572" stop-color="#6cae21"/><stop offset=".592" stop-color="#99b121"/><stop offset=".954" stop-color="#99b121"/><stop offset=".974" stop-color="#6eae21"/><stop offset=".987" stop-color="#16aa40"/><stop offset="1" stop-color="#0ba46e"/></linearGradient><linearGradient id="g117" gradientUnits="userSpaceOnUse" x1="696.0" y1="818.84" x2="696.0" y2="971.76" gradientTransform="matrix(1 -0.04572 0 1 0 31.822)"><stop offset="0" stop-color="#079290"/><stop offset=".02" stop-color="#13a94c"/><stop offset=".026" stop-color="#2aab39"/><stop offset=".039" stop-color="#76ae20"/><stop offset=".059" stop-color="#99b121"/><stop offset=".32" stop-color="#91b021"/><stop offset=".333" stop-color="#73ae20"/><stop offset=".347" stop-color="#23ab3b"/><stop offset=".366" stop-color="#07a27e"/><stop offset=".379" stop-color="#0874ac"/><stop offset=".386" stop-color="#4052b0"/><stop offset=".392" stop-color="#9831ab"/><stop offset=".399" stop-color="#b82b88"/><stop offset=".419" stop-color="#b6361a"/><stop offset=".49" stop-color="#b6361a"/><stop offset=".497" stop-color="#b63428"/><stop offset=".517" stop-color="#b82c95"/><stop offset=".523" stop-color="#6c3ab0"/><stop offset=".53" stop-color="#2162b0"/><stop offset=".536" stop-color="#0780a1"/><stop offset=".549" stop-color="#0aa473"/><stop offset=".562" stop-color="#15a946"/><stop offset=".582" stop-color="#7aaf20"/><stop offset=".602" stop-color="#99b121"/><stop offset=".955" stop-color="#91b021"/><stop offset=".968" stop-color="#73ae20"/><stop offset=".981" stop-color="#23ab3c"/><stop offset="1" stop-color="#07a27e"/></linearGradient><linearGradient id="g118" gradientUnits="userSpaceOnUse" x1="712.0" y1="817.57" x2="712.0" y2="971.41" gradientTransform="matrix(1 -0.04179 0 1 0 29.756)"><stop offset="0" stop-color="#078e95"/><stop offset=".013" stop-color="#0ca568"/><stop offset=".026" stop-color="#1eaa3d"/><stop offset=".039" stop-color="#71ae20"/><stop offset=".059" stop-color="#99b121"/><stop offset=".319" stop-color="#92b121"/><stop offset=".332" stop-color="#75ae20"/><stop offset=".351" stop-color="#13a94b"/><stop offset=".371" stop-color="#07948f"/><stop offset=".377" stop-color="#087ca5"/><stop offset=".384" stop-color="#2b5db0"/><stop offset=".39" stop-color="#7834b0"/><stop offset=".397" stop-color="#b82c92"/><stop offset=".416" stop-color="#b63425"/><stop offset=".494" stop-color="#b6361a"/><stop offset=".501" stop-color="#b6361d"/><stop offset=".52" stop-color="#b82b8d"/><stop offset=".527" stop-color="#8932ad"/><stop offset=".533" stop-color="#3856b0"/><stop offset=".54" stop-color="#0877aa"/><stop offset=".553" stop-color="#07a37d"/><stop offset=".572" stop-color="#22ab3c"/><stop offset=".585" stop-color="#72ae20"/><stop offset=".611" stop-color="#99b121"/><stop offset=".949" stop-color="#93b121"/><stop offset=".962" stop-color="#76ae20"/><stop offset=".982" stop-color="#14a94a"/><stop offset="1.001" stop-color="#06968d"/></linearGradient><linearGradient id="g119" gradientUnits="userSpaceOnUse" x1="728.0" y1="816.32" x2="728.0" y2="971.01" gradientTransform="matrix(1 -0.03769 0 1 0 27.435)"><stop offset="0" stop-color="#07889a"/><stop offset=".013" stop-color="#0ba46f"/><stop offset=".026" stop-color="#15aa44"/><stop offset=".045" stop-color="#79af20"/><stop offset=".065" stop-color="#98b121"/><stop offset=".317" stop-color="#8fb021"/><stop offset=".33" stop-color="#73ae20"/><stop offset=".343" stop-color="#26ab3a"/><stop offset=".362" stop-color="#08a379"/><stop offset=".375" stop-color="#077da4"/><stop offset=".381" stop-color="#2660b0"/><stop offset=".388" stop-color="#6e39b0"/><stop offset=".394" stop-color="#b82c96"/><stop offset=".414" stop-color="#b6332d"/><stop offset=".427" stop-color="#b6361a"/><stop offset=".504" stop-color="#b6361a"/><stop offset=".53" stop-color="#af2ea2"/><stop offset=".543" stop-color="#1768b0"/><stop offset=".556" stop-color="#069a89"/><stop offset=".575" stop-color="#14a948"/><stop offset=".595" stop-color="#76ae20"/><stop offset=".614" stop-color="#98b121"/><stop offset=".944" stop-color="#93b121"/><stop offset=".963" stop-color="#5bad28"/><stop offset=".976" stop-color="#14a947"/><stop offset=".996" stop-color="#069b88"/><stop offset="1.002" stop-color="#07849e"/></linearGradient><linearGradient id="g120" gradientUnits="userSpaceOnUse" x1="744.0" y1="815.09" x2="744.0" y2="970.58" gradientTransform="matrix(1 -0.03489 0 1 0 25.957)"><stop offset="0" stop-color="#077fa2"/><stop offset=".013" stop-color="#08a379"/><stop offset=".032" stop-color="#1eaa3d"/><stop offset=".045" stop-color="#6bae22"/><stop offset=".064" stop-color="#94b121"/><stop offset=".309" stop-color="#92b121"/><stop offset=".328" stop-color="#60ad26"/><stop offset=".341" stop-color="#16aa42"/><stop offset=".36" stop-color="#06a280"/><stop offset=".373" stop-color="#0878a9"/><stop offset=".379" stop-color="#2f5bb0"/><stop offset=".386" stop-color="#7635b0"/><stop offset=".392" stop-color="#b82c95"/><stop offset=".418" stop-color="#b6361a"/><stop offset=".508" stop-color="#b6361a"/><stop offset=".514" stop-color="#b63426"/><stop offset=".534" stop-color="#b82c8f"/><stop offset=".54" stop-color="#8832ad"/><stop offset=".547" stop-color="#3d54b0"/><stop offset=".553" stop-color="#0872ae"/><stop offset=".566" stop-color="#069f84"/><stop offset=".585" stop-color="#14a946"/><stop offset=".605" stop-color="#75ae20"/><stop offset=".624" stop-color="#94b121"/><stop offset=".939" stop-color="#8eb021"/><stop offset=".952" stop-color="#73ae20"/><stop offset=".971" stop-color="#14a949"/><stop offset=".99" stop-color="#069c87"/><stop offset="1" stop-color="#087ba6"/></linearGradient><linearGradient id="g121" gradientUnits="userSpaceOnUse" x1="760.0" y1="813.88" x2="760.0" y2="970.12" gradientTransform="matrix(1 -0.03210 0 1 0 24.393)"><stop offset="0" stop-color="#0874ac"/><stop offset=".019" stop-color="#0aa472"/><stop offset=".038" stop-color="#22ab3c"/><stop offset=".051" stop-color="#6aae22"/><stop offset=".07" stop-color="#8eb021"/><stop offset=".307" stop-color="#84af20"/><stop offset=".32" stop-color="#60ad26"/><stop offset=".333" stop-color="#18aa3f"/><stop offset=".358" stop-color="#06998a"/><stop offset=".371" stop-color="#0c6eb0"/><stop offset=".384" stop-color="#8a32ad"/><stop offset=".39" stop-color="#b82c90"/><stop offset=".41" stop-color="#b6332b"/><stop offset=".422" stop-color="#b6361a"/><stop offset=".518" stop-color="#b6361a"/><stop offset=".544" stop-color="#b52d9d"/><stop offset=".557" stop-color="#2c5db0"/><stop offset=".563" stop-color="#0878a9"/><stop offset=".576" stop-color="#06a083"/><stop offset=".595" stop-color="#14a94a"/><stop offset=".608" stop-color="#4bac2d"/><stop offset=".614" stop-color="#6eae21"/><stop offset=".634" stop-color="#8eb021"/><stop offset=".934" stop-color="#84af20"/><stop offset=".947" stop-color="#62ad25"/><stop offset=".96" stop-color="#1aaa3e"/><stop offset=".986" stop-color="#069a89"/><stop offset=".998" stop-color="#096fb0"/><stop offset="1" stop-color="#1569b0"/></linearGradient><linearGradient id="g122" gradientUnits="userSpaceOnUse" x1="776.0" y1="812.72" x2="776.0" y2="969.65" gradientTransform="matrix(1 -0.03018 0 1 0 23.419)"><stop offset="0" stop-color="#1867b0"/><stop offset=".013" stop-color="#079192"/><stop offset=".025" stop-color="#0ba46f"/><stop offset=".045" stop-color="#1eaa3d"/><stop offset=".064" stop-color="#76ae20"/><stop offset=".096" stop-color="#85b021"/><stop offset=".299" stop-color="#7eaf20"/><stop offset=".312" stop-color="#56ad29"/><stop offset=".325" stop-color="#16aa41"/><stop offset=".35" stop-color="#069d87"/><stop offset=".363" stop-color="#0877a9"/><stop offset=".37" stop-color="#285fb0"/><stop offset=".382" stop-color="#a92fa7"/><stop offset=".395" stop-color="#b82a6e"/><stop offset=".408" stop-color="#b63523"/><stop offset=".523" stop-color="#b6361a"/><stop offset=".529" stop-color="#b63428"/><stop offset=".548" stop-color="#b82b8b"/><stop offset=".554" stop-color="#9f30aa"/><stop offset=".567" stop-color="#2163b0"/><stop offset=".573" stop-color="#087aa7"/><stop offset=".593" stop-color="#0aa472"/><stop offset=".612" stop-color="#18aa3f"/><stop offset=".631" stop-color="#74ae20"/><stop offset=".656" stop-color="#85b021"/><stop offset=".924" stop-color="#84af20"/><stop offset=".937" stop-color="#68ae23"/><stop offset=".956" stop-color="#14a948"/><stop offset=".981" stop-color="#06968d"/><stop offset=".994" stop-color="#0c6eb0"/><stop offset="1" stop-color="#3e53b0"/></linearGradient><linearGradient id="g123" gradientUnits="userSpaceOnUse" x1="792.0" y1="811.60" x2="792.0" y2="969.17" gradientTransform="matrix(1 -0.02830 0 1 0 22.413)"><stop offset="0" stop-color="#3459b0"/><stop offset=".006" stop-color="#0870b0"/><stop offset=".025" stop-color="#06a280"/><stop offset=".051" stop-color="#16aa41"/><stop offset=".07" stop-color="#6eae21"/><stop offset=".108" stop-color="#7caf20"/><stop offset=".292" stop-color="#76ae20"/><stop offset=".317" stop-color="#14a947"/><stop offset=".343" stop-color="#069d86"/><stop offset=".355" stop-color="#087ca5"/><stop offset=".362" stop-color="#1967b0"/><stop offset=".374" stop-color="#8233ae"/><stop offset=".381" stop-color="#b82c96"/><stop offset=".4" stop-color="#b7313d"/><stop offset=".406" stop-color="#b6361a"/><stop offset=".533" stop-color="#b6361a"/><stop offset=".552" stop-color="#b82b7d"/><stop offset=".558" stop-color="#b82c96"/><stop offset=".565" stop-color="#8433ae"/><stop offset=".578" stop-color="#1967b0"/><stop offset=".59" stop-color="#078d95"/><stop offset=".616" stop-color="#11a756"/><stop offset=".628" stop-color="#26ab3a"/><stop offset=".647" stop-color="#75ae20"/><stop offset=".92" stop-color="#77af20"/><stop offset=".946" stop-color="#15a944"/><stop offset=".971" stop-color="#06a084"/><stop offset=".99" stop-color="#126bb0"/><stop offset="1.003" stop-color="#7934b0"/></linearGradient><linearGradient id="g124" gradientUnits="userSpaceOnUse" x1="808.0" y1="810.55" x2="808.0" y2="968.69" gradientTransform="matrix(1 -0.02699 0 1 0 21.808)"><stop offset="0" stop-color="#504ab0"/><stop offset=".013" stop-color="#0875ab"/><stop offset=".038" stop-color="#0aa470"/><stop offset=".057" stop-color="#15a946"/><stop offset=".082" stop-color="#73ae20"/><stop offset=".278" stop-color="#75ae20"/><stop offset=".291" stop-color="#4ead2c"/><stop offset=".304" stop-color="#17aa40"/><stop offset=".335" stop-color="#069c87"/><stop offset=".354" stop-color="#116bb0"/><stop offset=".367" stop-color="#6c3ab0"/><stop offset=".373" stop-color="#aa2fa7"/><stop offset=".392" stop-color="#b72d53"/><stop offset=".405" stop-color="#b6361a"/><stop offset=".537" stop-color="#b6361a"/><stop offset=".563" stop-color="#b82b8a"/><stop offset=".569" stop-color="#aa2fa6"/><stop offset=".582" stop-color="#3b55b0"/><stop offset=".588" stop-color="#116bb0"/><stop offset=".613" stop-color="#08a379"/><stop offset=".639" stop-color="#16aa40"/><stop offset=".658" stop-color="#68ae23"/><stop offset=".689" stop-color="#75ae20"/><stop offset=".911" stop-color="#75ae20"/><stop offset=".936" stop-color="#15aa43"/><stop offset=".967" stop-color="#06998a"/><stop offset=".98" stop-color="#087aa7"/><stop offset=".986" stop-color="#1a67b0"/><stop offset="1" stop-color="#8133ae"/></linearGradient><linearGradient id="g125" gradientUnits="userSpaceOnUse" x1="824.0" y1="809.57" x2="824.0" y2="968.22" gradientTransform="matrix(1 -0.02581 0 1 0 21.264)"><stop offset="0" stop-color="#693cb0"/><stop offset=".013" stop-color="#1469b0"/><stop offset=".038" stop-color="#07a27f"/><stop offset=".069" stop-color="#1eaa3d"/><stop offset=".088" stop-color="#69ae22"/><stop offset=".271" stop-color="#6dae21"/><stop offset=".296" stop-color="#15a946"/><stop offset=".328" stop-color="#069b88"/><stop offset=".347" stop-color="#0c6eb0"/><stop offset=".366" stop-color="#9231ac"/><stop offset=".372" stop-color="#b82c94"/><stop offset=".391" stop-color="#b73042"/><stop offset=".397" stop-color="#b6351e"/><stop offset=".548" stop-color="#b63522"/><stop offset=".567" stop-color="#b82b80"/><stop offset=".574" stop-color="#b82c97"/><stop offset=".586" stop-color="#5746b0"/><stop offset=".599" stop-color="#0870b0"/><stop offset=".624" stop-color="#08a379"/><stop offset=".649" stop-color="#15a944"/><stop offset=".674" stop-color="#6dae21"/><stop offset=".901" stop-color="#6dae21"/><stop offset=".927" stop-color="#16aa41"/><stop offset=".964" stop-color="#079390"/><stop offset=".977" stop-color="#0875ab"/><stop offset=".99" stop-color="#4a4db0"/><stop offset="1.002" stop-color="#b02ea1"/></linearGradient><linearGradient id="g126" gradientUnits="userSpaceOnUse" x1="840.0" y1="808.65" x2="840.0" y2="967.76" gradientTransform="matrix(1 -0.02508 0 1 0 21.066)"><stop offset="0" stop-color="#7f33af"/><stop offset=".019" stop-color="#0871b0"/><stop offset=".044" stop-color="#07a37d"/><stop offset=".075" stop-color="#18aa3f"/><stop offset=".094" stop-color="#60ad26"/><stop offset=".264" stop-color="#5fad26"/><stop offset=".283" stop-color="#18aa3f"/><stop offset=".321" stop-color="#069a89"/><stop offset=".339" stop-color="#0870b0"/><stop offset=".358" stop-color="#8033af"/><stop offset=".365" stop-color="#b02da1"/><stop offset=".396" stop-color="#b6361a"/><stop offset=".553" stop-color="#b6361b"/><stop offset=".572" stop-color="#b82b79"/><stop offset=".578" stop-color="#b82c8f"/><stop offset=".585" stop-color="#a32fa9"/><stop offset=".603" stop-color="#1c65b0"/><stop offset=".616" stop-color="#07859d"/><stop offset=".635" stop-color="#08a378"/><stop offset=".666" stop-color="#22ab3c"/><stop offset=".685" stop-color="#61ad25"/><stop offset=".899" stop-color="#60ad26"/><stop offset=".918" stop-color="#19aa3f"/><stop offset=".955" stop-color="#069a89"/><stop offset=".974" stop-color="#0871af"/><stop offset=".993" stop-color="#7e33af"/><stop offset="1" stop-color="#b32d9e"/></linearGradient><linearGradient id="g127" gradientUnits="userSpaceOnUse" x1="856.0" y1="807.79" x2="856.0" y2="967.32" gradientTransform="matrix(1 -0.02463 0 1 0 21.080)"><stop offset="0" stop-color="#9531ab"/><stop offset=".019" stop-color="#1a66b0"/><stop offset=".031" stop-color="#07849e"/><stop offset=".056" stop-color="#0ba46f"/><stop offset=".081" stop-color="#16aa41"/><stop offset=".1" stop-color="#56ad29"/><stop offset=".257" stop-color="#52ad2b"/><stop offset=".276" stop-color="#15aa44"/><stop offset=".313" stop-color="#06998a"/><stop offset=".332" stop-color="#0872ae"/><stop offset=".351" stop-color="#7038b0"/><stop offset=".357" stop-color="#a42fa9"/><stop offset=".37" stop-color="#b82b7b"/><stop offset=".389" stop-color="#b63521"/><stop offset=".558" stop-color="#b6361a"/><stop offset=".583" stop-color="#b82b8b"/><stop offset=".589" stop-color="#ac2ea4"/><stop offset=".602" stop-color="#5049b0"/><stop offset=".614" stop-color="#0b6fb0"/><stop offset=".646" stop-color="#09a475"/><stop offset=".677" stop-color="#20aa3d"/><stop offset=".696" stop-color="#56ad29"/><stop offset=".89" stop-color="#56ad29"/><stop offset=".915" stop-color="#14a948"/><stop offset=".953" stop-color="#07958e"/><stop offset=".972" stop-color="#0e6db0"/><stop offset=".99" stop-color="#8133ae"/><stop offset=".997" stop-color="#af2ea2"/><stop offset="1.003" stop-color="#b82b88"/></linearGradient><linearGradient id="g128" gradientUnits="userSpaceOnUse" x1="872.0" y1="806.98" x2="872.0" y2="966.90" gradientTransform="matrix(1 -0.02470 0 1 0 21.534)"><stop offset="0" stop-color="#aa2fa6"/><stop offset=".019" stop-color="#2d5cb0"/><stop offset=".025" stop-color="#0e6db0"/><stop offset=".056" stop-color="#08a37a"/><stop offset=".088" stop-color="#15aa43"/><stop offset=".106" stop-color="#4cac2d"/><stop offset=".25" stop-color="#47ac2e"/><stop offset=".269" stop-color="#14a947"/><stop offset=".306" stop-color="#069a8a"/><stop offset=".325" stop-color="#0875ab"/><stop offset=".338" stop-color="#3b55b0"/><stop offset=".35" stop-color="#8c32ad"/><stop offset=".356" stop-color="#b62c9b"/><stop offset=".388" stop-color="#b6361a"/><stop offset=".563" stop-color="#b6361a"/><stop offset=".588" stop-color="#b82b89"/><stop offset=".594" stop-color="#af2ea2"/><stop offset=".619" stop-color="#1569b0"/><stop offset=".644" stop-color="#069c88"/><stop offset=".688" stop-color="#21aa3c"/><stop offset=".7" stop-color="#4bac2d"/><stop offset=".888" stop-color="#4bac2d"/><stop offset=".907" stop-color="#15a945"/><stop offset=".944" stop-color="#069c88"/><stop offset=".969" stop-color="#1469b0"/><stop offset=".994" stop-color="#af2ea2"/><stop offset="1" stop-color="#b82b8a"/></linearGradient><linearGradient id="g129" gradientUnits="userSpaceOnUse" x1="888.0" y1="806.19" x2="888.0" y2="966.50" gradientTransform="matrix(1 -0.02545 0 1 0 22.597)"><stop offset="0" stop-color="#b82c9a"/><stop offset=".012" stop-color="#663eb0"/><stop offset=".031" stop-color="#0871af"/><stop offset=".062" stop-color="#08a37a"/><stop offset=".1" stop-color="#1faa3d"/><stop offset=".112" stop-color="#42ac30"/><stop offset=".243" stop-color="#40ac31"/><stop offset=".256" stop-color="#17aa40"/><stop offset=".299" stop-color="#069b88"/><stop offset=".324" stop-color="#106cb0"/><stop offset=".343" stop-color="#7635b0"/><stop offset=".349" stop-color="#a52fa9"/><stop offset=".362" stop-color="#b82b7d"/><stop offset=".387" stop-color="#b6361a"/><stop offset=".568" stop-color="#b6351f"/><stop offset=".593" stop-color="#b82b8a"/><stop offset=".599" stop-color="#ae2ea3"/><stop offset=".624" stop-color="#1b66b0"/><stop offset=".636" stop-color="#0781a1"/><stop offset=".661" stop-color="#09a377"/><stop offset=".692" stop-color="#15aa43"/><stop offset=".711" stop-color="#42ac30"/><stop offset=".886" stop-color="#3aac33"/><stop offset=".898" stop-color="#15aa42"/><stop offset=".942" stop-color="#06988b"/><stop offset=".961" stop-color="#0875ab"/><stop offset=".973" stop-color="#3856b0"/><stop offset=".992" stop-color="#ad2ea3"/><stop offset="1" stop-color="#b82b85"/></linearGradient><linearGradient id="g130" gradientUnits="userSpaceOnUse" x1="904.0" y1="805.43" x2="904.0" y2="966.14" gradientTransform="matrix(1 -0.02697 0 1 0 24.380)"><stop offset="0" stop-color="#b82c90"/><stop offset=".006" stop-color="#a92fa7"/><stop offset=".025" stop-color="#3757b0"/><stop offset=".037" stop-color="#0874ac"/><stop offset=".068" stop-color="#08a37a"/><stop offset=".106" stop-color="#18aa3f"/><stop offset=".118" stop-color="#37ab34"/><stop offset=".236" stop-color="#37ab34"/><stop offset=".255" stop-color="#14a94a"/><stop offset=".299" stop-color="#07948f"/><stop offset=".317" stop-color="#0872ae"/><stop offset=".336" stop-color="#5d42b0"/><stop offset=".348" stop-color="#ac2ea4"/><stop offset=".373" stop-color="#b73044"/><stop offset=".38" stop-color="#b63425"/><stop offset=".442" stop-color="#b6361a"/><stop offset=".566" stop-color="#b6361a"/><stop offset=".579" stop-color="#b72f47"/><stop offset=".597" stop-color="#b82c8f"/><stop offset=".604" stop-color="#aa2fa6"/><stop offset=".628" stop-color="#1b66b0"/><stop offset=".641" stop-color="#077fa2"/><stop offset=".672" stop-color="#0aa470"/><stop offset=".703" stop-color="#17aa40"/><stop offset=".716" stop-color="#37ab34"/><stop offset=".877" stop-color="#37ab34"/><stop offset=".896" stop-color="#14a949"/><stop offset=".94" stop-color="#07958e"/><stop offset=".958" stop-color="#0873ad"/><stop offset=".977" stop-color="#5a44b0"/><stop offset=".989" stop-color="#ab2fa6"/><stop offset="1.002" stop-color="#b82b7b"/></linearGradient><linearGradient id="g131" gradientUnits="userSpaceOnUse" x1="920.0" y1="804.66" x2="920.0" y2="965.82" gradientTransform="matrix(1 -0.02831 0 1 0 26.042)"><stop offset="0" stop-color="#b82b85"/><stop offset=".006" stop-color="#b82c99"/><stop offset=".019" stop-color="#7038b0"/><stop offset=".037" stop-color="#1569b0"/><stop offset=".062" stop-color="#07958e"/><stop offset=".112" stop-color="#15aa43"/><stop offset=".13" stop-color="#2cab38"/><stop offset=".236" stop-color="#28ab3a"/><stop offset=".248" stop-color="#14a949"/><stop offset=".292" stop-color="#06988b"/><stop offset=".316" stop-color="#0d6db0"/><stop offset=".347" stop-color="#af2ea1"/><stop offset=".372" stop-color="#b73043"/><stop offset=".379" stop-color="#b63424"/><stop offset=".571" stop-color="#b6361a"/><stop offset=".596" stop-color="#b82b84"/><stop offset=".602" stop-color="#b82c97"/><stop offset=".614" stop-color="#7237b0"/><stop offset=".633" stop-color="#1668b0"/><stop offset=".652" stop-color="#078b97"/><stop offset=".683" stop-color="#0ca568"/><stop offset=".714" stop-color="#22ab3c"/><stop offset=".819" stop-color="#2cab38"/><stop offset=".875" stop-color="#2cab38"/><stop offset=".9" stop-color="#10a757"/><stop offset=".937" stop-color="#079390"/><stop offset=".956" stop-color="#0873ae"/><stop offset=".98" stop-color="#7a34b0"/><stop offset=".987" stop-color="#a52fa9"/><stop offset=".999" stop-color="#b82b80"/><stop offset="1" stop-color="#b82b7d"/></linearGradient><linearGradient id="g132" gradientUnits="userSpaceOnUse" x1="936.0" y1="803.85" x2="936.0" y2="965.53" gradientTransform="matrix(1 -0.02786 0 1 0 26.079)"><stop offset="0" stop-color="#b82b79"/><stop offset=".012" stop-color="#ae2ea3"/><stop offset=".043" stop-color="#126bb0"/><stop offset=".087" stop-color="#0aa473"/><stop offset=".13" stop-color="#22ab3c"/><stop offset=".235" stop-color="#18aa3f"/><stop offset=".291" stop-color="#07948f"/><stop offset=".315" stop-color="#146ab0"/><stop offset=".346" stop-color="#af2ea2"/><stop offset=".371" stop-color="#b72f45"/><stop offset=".383" stop-color="#b6361a"/><stop offset=".569" stop-color="#b6361a"/><stop offset=".6" stop-color="#b82c8f"/><stop offset=".606" stop-color="#ab2ea5"/><stop offset=".631" stop-color="#275fb0"/><stop offset=".643" stop-color="#0878a9"/><stop offset=".68" stop-color="#0aa472"/><stop offset=".724" stop-color="#22ab3c"/><stop offset=".872" stop-color="#22ab3c"/><stop offset=".928" stop-color="#069b89"/><stop offset=".952" stop-color="#0873ad"/><stop offset=".977" stop-color="#7138b0"/><stop offset=".99" stop-color="#b82c9a"/><stop offset="1.002" stop-color="#b82a73"/></linearGradient><linearGradient id="g133" gradientUnits="userSpaceOnUse" x1="952.0" y1="803.03" x2="952.0" y2="965.29" gradientTransform="matrix(1 -0.02208 0 1 0 21.020)"><stop offset="0" stop-color="#b82a6d"/><stop offset=".012" stop-color="#b82c93"/><stop offset=".018" stop-color="#a92fa7"/><stop offset=".043" stop-color="#295eb0"/><stop offset=".055" stop-color="#0876aa"/><stop offset=".092" stop-color="#09a376"/><stop offset=".142" stop-color="#17aa40"/><stop offset=".234" stop-color="#15a946"/><stop offset=".283" stop-color="#06998a"/><stop offset=".308" stop-color="#0873ad"/><stop offset=".333" stop-color="#6a3bb0"/><stop offset=".345" stop-color="#ae2ea3"/><stop offset=".37" stop-color="#b72f49"/><stop offset=".382" stop-color="#b6361a"/><stop offset=".567" stop-color="#b6361a"/><stop offset=".579" stop-color="#b73043"/><stop offset=".604" stop-color="#b32d9e"/><stop offset=".622" stop-color="#5249b0"/><stop offset=".641" stop-color="#0871af"/><stop offset=".678" stop-color="#08a37b"/><stop offset=".727" stop-color="#17aa40"/><stop offset=".875" stop-color="#15a945"/><stop offset=".924" stop-color="#069a8a"/><stop offset=".949" stop-color="#0874ac"/><stop offset=".974" stop-color="#673db0"/><stop offset=".986" stop-color="#ad2ea4"/><stop offset="1" stop-color="#b82b76"/></linearGradient><linearGradient id="g134" gradientUnits="userSpaceOnUse" x1="968.0" y1="802.25" x2="968.0" y2="965.06" gradientTransform="matrix(1 -0.01384 0 1 0 13.393)"><stop offset="0" stop-color="#b82c5e"/><stop offset=".018" stop-color="#b82c99"/><stop offset=".037" stop-color="#5a44b0"/><stop offset=".055" stop-color="#0f6cb0"/><stop offset=".098" stop-color="#08a379"/><stop offset=".147" stop-color="#15a945"/><stop offset=".233" stop-color="#13a84d"/><stop offset=".283" stop-color="#07958e"/><stop offset=".307" stop-color="#0870b0"/><stop offset=".338" stop-color="#8e32ac"/><stop offset=".344" stop-color="#ae2ea3"/><stop offset=".369" stop-color="#b72e4b"/><stop offset=".381" stop-color="#b6361a"/><stop offset=".571" stop-color="#b6351e"/><stop offset=".596" stop-color="#b82b83"/><stop offset=".608" stop-color="#a52fa9"/><stop offset=".633" stop-color="#2b5db0"/><stop offset=".645" stop-color="#0875ac"/><stop offset=".682" stop-color="#08a37b"/><stop offset=".731" stop-color="#15a945"/><stop offset=".872" stop-color="#14a94a"/><stop offset=".921" stop-color="#06988b"/><stop offset=".946" stop-color="#0874ac"/><stop offset=".97" stop-color="#6140b0"/><stop offset=".983" stop-color="#a72fa8"/><stop offset=".995" stop-color="#b82b82"/><stop offset="1.001" stop-color="#b82a6f"/></linearGradient><linearGradient id="g135" gradientUnits="userSpaceOnUse" x1="984.0" y1="801.57" x2="984.0" y2="964.86" gradientTransform="matrix(1 -0.00893 0 1 0 8.788)"><stop offset="0" stop-color="#b72e4f"/><stop offset=".024" stop-color="#ad2ea4"/><stop offset=".055" stop-color="#2262b0"/><stop offset=".067" stop-color="#0877a9"/><stop offset=".11" stop-color="#0aa473"/><stop offset=".153" stop-color="#13a94a"/><stop offset=".233" stop-color="#11a755"/><stop offset=".276" stop-color="#06988c"/><stop offset=".306" stop-color="#106cb0"/><stop offset=".337" stop-color="#9331ab"/><stop offset=".349" stop-color="#b82b8c"/><stop offset=".367" stop-color="#b72f4b"/><stop offset=".38" stop-color="#b6361a"/><stop offset=".57" stop-color="#b6361a"/><stop offset=".594" stop-color="#b82b7d"/><stop offset=".606" stop-color="#ac2ea4"/><stop offset=".637" stop-color="#2262b0"/><stop offset=".649" stop-color="#0877a9"/><stop offset=".692" stop-color="#0aa473"/><stop offset=".735" stop-color="#13a94a"/><stop offset=".87" stop-color="#12a850"/><stop offset=".919" stop-color="#07958e"/><stop offset=".943" stop-color="#0873ae"/><stop offset=".974" stop-color="#7d34af"/><stop offset=".986" stop-color="#b82c99"/><stop offset="1" stop-color="#b82a6f"/></linearGradient><linearGradient id="g136" gradientUnits="userSpaceOnUse" x1="1000.0" y1="800.97" x2="1000.0" y2="964.67" gradientTransform="matrix(1 -0.00665 0 1 0 6.652)"><stop offset="0" stop-color="#b73044"/><stop offset=".024" stop-color="#b82c99"/><stop offset=".043" stop-color="#633fb0"/><stop offset=".067" stop-color="#0a6fb0"/><stop offset=".116" stop-color="#09a475"/><stop offset=".153" stop-color="#12a850"/><stop offset=".226" stop-color="#10a757"/><stop offset=".275" stop-color="#079192"/><stop offset=".299" stop-color="#0970b0"/><stop offset=".33" stop-color="#7e33af"/><stop offset=".342" stop-color="#b62c9c"/><stop offset=".367" stop-color="#b72f46"/><stop offset=".379" stop-color="#b6361a"/><stop offset=".568" stop-color="#b6361a"/><stop offset=".605" stop-color="#b82c99"/><stop offset=".623" stop-color="#633fb0"/><stop offset=".648" stop-color="#0a6fb0"/><stop offset=".696" stop-color="#09a475"/><stop offset=".733" stop-color="#12a850"/><stop offset=".867" stop-color="#10a757"/><stop offset=".916" stop-color="#079192"/><stop offset=".941" stop-color="#0970b0"/><stop offset=".971" stop-color="#7e33af"/><stop offset=".984" stop-color="#b62c9c"/><stop offset="1.002" stop-color="#b82b62"/></linearGradient><linearGradient id="g137" gradientUnits="userSpaceOnUse" x1="1016.0" y1="800.45" x2="1016.0" y2="964.50" gradientTransform="matrix(1 -0.00496 0 1 0 5.044)"><stop offset="0" stop-color="#b7313c"/><stop offset=".024" stop-color="#b82c93"/><stop offset=".037" stop-color="#8d32ad"/><stop offset=".073" stop-color="#0871af"/><stop offset=".122" stop-color="#08a378"/><stop offset=".165" stop-color="#10a757"/><stop offset=".226" stop-color="#0da664"/><stop offset=".268" stop-color="#078f94"/><stop offset=".293" stop-color="#0970b0"/><stop offset=".329" stop-color="#9031ac"/><stop offset=".341" stop-color="#b82c91"/><stop offset=".366" stop-color="#b73139"/><stop offset=".372" stop-color="#b6361d"/><stop offset=".573" stop-color="#b6361a"/><stop offset=".597" stop-color="#b82b7d"/><stop offset=".61" stop-color="#ae2ea3"/><stop offset=".628" stop-color="#5e42b0"/><stop offset=".652" stop-color="#0b6eb0"/><stop offset=".701" stop-color="#08a37a"/><stop offset=".744" stop-color="#10a757"/><stop offset=".866" stop-color="#0ea661"/><stop offset=".908" stop-color="#079291"/><stop offset=".939" stop-color="#146ab0"/><stop offset=".969" stop-color="#8533ae"/><stop offset=".981" stop-color="#b82c98"/><stop offset="1" stop-color="#b82c5e"/></linearGradient><linearGradient id="g138" gradientUnits="userSpaceOnUse" x1="1032.0" y1="800.00" x2="1032.0" y2="964.35" gradientTransform="matrix(1 -0.00353 0 1 0 3.648)"><stop offset="0" stop-color="#b73237"/><stop offset=".024" stop-color="#b82c8f"/><stop offset=".037" stop-color="#9831ab"/><stop offset=".073" stop-color="#1569b0"/><stop offset=".097" stop-color="#07889a"/><stop offset=".14" stop-color="#0ba46e"/><stop offset=".195" stop-color="#0ea65f"/><stop offset=".249" stop-color="#06978c"/><stop offset=".286" stop-color="#0f6cb0"/><stop offset=".322" stop-color="#8d32ac"/><stop offset=".335" stop-color="#b82c95"/><stop offset=".359" stop-color="#b73040"/><stop offset=".371" stop-color="#b6361a"/><stop offset=".572" stop-color="#b6361a"/><stop offset=".584" stop-color="#b73041"/><stop offset=".608" stop-color="#b82c96"/><stop offset=".627" stop-color="#7337b0"/><stop offset=".657" stop-color="#0f6cb0"/><stop offset=".712" stop-color="#08a379"/><stop offset=".748" stop-color="#0ea65f"/><stop offset=".858" stop-color="#0da566"/><stop offset=".901" stop-color="#079093"/><stop offset=".931" stop-color="#126bb0"/><stop offset=".967" stop-color="#9231ac"/><stop offset=".98" stop-color="#b82c93"/><stop offset="1" stop-color="#b72e4e"/></linearGradient><linearGradient id="g139" gradientUnits="userSpaceOnUse" x1="1048.0" y1="799.59" x2="1048.0" y2="964.21" gradientTransform="matrix(1 -0.00231 0 1 0 2.421)"><stop offset="0" stop-color="#b73233"/><stop offset=".024" stop-color="#b82b8c"/><stop offset=".036" stop-color="#a130a9"/><stop offset=".073" stop-color="#2362b0"/><stop offset=".091" stop-color="#0879a7"/><stop offset=".146" stop-color="#0aa473"/><stop offset=".2" stop-color="#0ca569"/><stop offset=".243" stop-color="#079192"/><stop offset=".273" stop-color="#0870b0"/><stop offset=".316" stop-color="#8e32ac"/><stop offset=".328" stop-color="#b82c98"/><stop offset=".352" stop-color="#b72f46"/><stop offset=".364" stop-color="#b6361a"/><stop offset=".577" stop-color="#b6361a"/><stop offset=".607" stop-color="#b82b8b"/><stop offset=".62" stop-color="#a42fa9"/><stop offset=".656" stop-color="#2461b0"/><stop offset=".674" stop-color="#0879a8"/><stop offset=".729" stop-color="#0aa473"/><stop offset=".814" stop-color="#0ca568"/><stop offset=".856" stop-color="#0aa473"/><stop offset=".917" stop-color="#0872ae"/><stop offset=".954" stop-color="#6e39b0"/><stop offset=".972" stop-color="#b22d9f"/><stop offset=".996" stop-color="#b72e4e"/><stop offset="1.002" stop-color="#b73233"/></linearGradient><linearGradient id="g140" gradientUnits="userSpaceOnUse" x1="1064.0" y1="799.20" x2="1064.0" y2="964.09" gradientTransform="matrix(1 -0.00129 0 1 0 1.373)"><stop offset="0" stop-color="#b7332e"/><stop offset=".024" stop-color="#b82b88"/><stop offset=".036" stop-color="#a92fa7"/><stop offset=".079" stop-color="#2063b0"/><stop offset=".097" stop-color="#0878a8"/><stop offset=".158" stop-color="#0aa473"/><stop offset=".206" stop-color="#07a37d"/><stop offset=".267" stop-color="#106cb0"/><stop offset=".309" stop-color="#8c32ad"/><stop offset=".321" stop-color="#b42d9e"/><stop offset=".346" stop-color="#b72e4d"/><stop offset=".358" stop-color="#b6361a"/><stop offset=".582" stop-color="#b63521"/><stop offset=".606" stop-color="#b82b80"/><stop offset=".625" stop-color="#9c30aa"/><stop offset=".667" stop-color="#1967b0"/><stop offset=".691" stop-color="#0782a0"/><stop offset=".746" stop-color="#0aa470"/><stop offset=".849" stop-color="#08a379"/><stop offset=".91" stop-color="#0871af"/><stop offset=".952" stop-color="#7c34af"/><stop offset=".97" stop-color="#b82c97"/><stop offset=".995" stop-color="#b72f46"/><stop offset="1.001" stop-color="#b6332b"/></linearGradient><linearGradient id="g141" gradientUnits="userSpaceOnUse" x1="1080.0" y1="798.82" x2="1080.0" y2="963.98" gradientTransform="matrix(1 -0.00042 0 1 0 0.456)"><stop offset="0" stop-color="#b6342a"/><stop offset=".024" stop-color="#b82b85"/><stop offset=".036" stop-color="#ac2ea5"/><stop offset=".085" stop-color="#2063b0"/><stop offset=".103" stop-color="#0877a9"/><stop offset=".17" stop-color="#08a379"/><stop offset=".224" stop-color="#078d96"/><stop offset=".26" stop-color="#146ab0"/><stop offset=".309" stop-color="#9c30aa"/><stop offset=".327" stop-color="#b82b83"/><stop offset=".357" stop-color="#b6361a"/><stop offset=".581" stop-color="#b6361a"/><stop offset=".612" stop-color="#b82b88"/><stop offset=".624" stop-color="#aa2fa6"/><stop offset=".672" stop-color="#1d65b0"/><stop offset=".69" stop-color="#0878a8"/><stop offset=".751" stop-color="#08a379"/><stop offset=".848" stop-color="#06a083"/><stop offset=".902" stop-color="#0870b0"/><stop offset=".951" stop-color="#8633ae"/><stop offset=".969" stop-color="#b82c93"/><stop offset=".999" stop-color="#b63426"/><stop offset="1" stop-color="#b63522"/></linearGradient><linearGradient id="g142" gradientUnits="userSpaceOnUse" x1="1096.0" y1="798.46" x2="1096.0" y2="963.88" gradientTransform="matrix(1 0.00044 0 1 0 -0.478)"><stop offset="0" stop-color="#b63523"/><stop offset=".03" stop-color="#b82c91"/><stop offset=".054" stop-color="#7a34b0"/><stop offset=".103" stop-color="#0870b0"/><stop offset=".175" stop-color="#06a280"/><stop offset=".254" stop-color="#126bb0"/><stop offset=".302" stop-color="#8b32ad"/><stop offset=".32" stop-color="#b82c93"/><stop offset=".357" stop-color="#b6361a"/><stop offset=".586" stop-color="#b63524"/><stop offset=".617" stop-color="#b82c91"/><stop offset=".641" stop-color="#7a34b0"/><stop offset=".689" stop-color="#0870b0"/><stop offset=".762" stop-color="#06a280"/><stop offset=".846" stop-color="#06998a"/><stop offset=".901" stop-color="#126bb0"/><stop offset=".949" stop-color="#8a32ad"/><stop offset=".967" stop-color="#b82c93"/><stop offset=".997" stop-color="#b63427"/><stop offset="1" stop-color="#b6361c"/></linearGradient><linearGradient id="g143" gradientUnits="userSpaceOnUse" x1="1112.0" y1="798.11" x2="1112.0" y2="963.80" gradientTransform="matrix(1 0.00110 0 1 0 -1.223)"><stop offset="0" stop-color="#b6361c"/><stop offset=".024" stop-color="#b82b7a"/><stop offset=".042" stop-color="#aa2fa6"/><stop offset=".097" stop-color="#2163b0"/><stop offset=".115" stop-color="#0874ac"/><stop offset=".181" stop-color="#069e86"/><stop offset=".247" stop-color="#0c6eb0"/><stop offset=".302" stop-color="#8832ad"/><stop offset=".32" stop-color="#b82c98"/><stop offset=".344" stop-color="#b72f4b"/><stop offset=".356" stop-color="#b6361a"/><stop offset=".585" stop-color="#b6361c"/><stop offset=".61" stop-color="#b82b7a"/><stop offset=".628" stop-color="#aa2fa6"/><stop offset=".682" stop-color="#2063b0"/><stop offset=".7" stop-color="#0874ac"/><stop offset=".767" stop-color="#069e86"/><stop offset=".845" stop-color="#07948f"/><stop offset=".893" stop-color="#0d6db0"/><stop offset=".948" stop-color="#8a32ad"/><stop offset=".966" stop-color="#b82c96"/><stop offset=".99" stop-color="#b72f48"/><stop offset="1.002" stop-color="#b6361a"/></linearGradient><linearGradient id="g144" gradientUnits="userSpaceOnUse" x1="1128.0" y1="797.78" x2="1128.0" y2="963.73" gradientTransform="matrix(1 0.00178 0 1 0 -2.005)"><stop offset="0" stop-color="#b6361a"/><stop offset=".036" stop-color="#b82c95"/><stop offset=".066" stop-color="#6f39b0"/><stop offset=".121" stop-color="#0873ad"/><stop offset=".187" stop-color="#06988b"/><stop offset=".247" stop-color="#116bb0"/><stop offset=".307" stop-color="#9731ab"/><stop offset=".325" stop-color="#b82c8e"/><stop offset=".35" stop-color="#b7313c"/><stop offset=".362" stop-color="#b6361a"/><stop offset=".585" stop-color="#b6361a"/><stop offset=".615" stop-color="#b82b86"/><stop offset=".633" stop-color="#a130a9"/><stop offset=".687" stop-color="#2163b0"/><stop offset=".711" stop-color="#0878a9"/><stop offset=".777" stop-color="#06988b"/><stop offset=".85" stop-color="#078b97"/><stop offset=".892" stop-color="#146ab0"/><stop offset=".952" stop-color="#9c30aa"/><stop offset=".97" stop-color="#b82b89"/><stop offset=".994" stop-color="#b73235"/><stop offset="1" stop-color="#b6361b"/></linearGradient><linearGradient id="g145" gradientUnits="userSpaceOnUse" x1="1144.0" y1="797.45" x2="1144.0" y2="963.66" gradientTransform="matrix(1 0.00230 0 1 0 -2.635)"><stop offset="0" stop-color="#b6361a"/><stop offset=".012" stop-color="#b7313d"/><stop offset=".042" stop-color="#b22d9f"/><stop offset=".084" stop-color="#5149b0"/><stop offset=".126" stop-color="#0871af"/><stop offset=".187" stop-color="#079390"/><stop offset=".241" stop-color="#0b6eb0"/><stop offset=".307" stop-color="#9231ac"/><stop offset=".325" stop-color="#b82c95"/><stop offset=".349" stop-color="#b72f48"/><stop offset=".361" stop-color="#b6361a"/><stop offset=".584" stop-color="#b6361a"/><stop offset=".626" stop-color="#b02da1"/><stop offset=".668" stop-color="#4f4ab0"/><stop offset=".71" stop-color="#0872ae"/><stop offset=".776" stop-color="#079390"/><stop offset=".848" stop-color="#07869b"/><stop offset=".884" stop-color="#106cb0"/><stop offset=".945" stop-color="#8a32ad"/><stop offset=".969" stop-color="#b82b8d"/><stop offset=".993" stop-color="#b7313c"/><stop offset="1" stop-color="#b6361d"/></linearGradient><linearGradient id="g146" gradientUnits="userSpaceOnUse" x1="1160.0" y1="797.14" x2="1160.0" y2="963.61" gradientTransform="matrix(1 0.00289 0 1 0 -3.358)"><stop offset="0" stop-color="#b6361a"/><stop offset=".006" stop-color="#b6361a"/><stop offset=".03" stop-color="#b82b77"/><stop offset=".054" stop-color="#a42fa9"/><stop offset=".114" stop-color="#2560b0"/><stop offset=".138" stop-color="#0874ad"/><stop offset=".192" stop-color="#078c96"/><stop offset=".24" stop-color="#0f6cb0"/><stop offset=".306" stop-color="#8e32ac"/><stop offset=".33" stop-color="#b82b8c"/><stop offset=".354" stop-color="#b7313b"/><stop offset=".366" stop-color="#b6361a"/><stop offset=".589" stop-color="#b63522"/><stop offset=".613" stop-color="#b82b7c"/><stop offset=".631" stop-color="#ab2ea5"/><stop offset=".697" stop-color="#2262b0"/><stop offset=".721" stop-color="#0875ab"/><stop offset=".787" stop-color="#078e94"/><stop offset=".853" stop-color="#077ea3"/><stop offset=".883" stop-color="#1669b0"/><stop offset=".949" stop-color="#9931aa"/><stop offset=".967" stop-color="#b82c91"/><stop offset=".997" stop-color="#b6342a"/><stop offset="1" stop-color="#b6351e"/></linearGradient><linearGradient id="g147" gradientUnits="userSpaceOnUse" x1="1176.0" y1="796.85" x2="1176.0" y2="963.57" gradientTransform="matrix(1 0.00334 0 1 0 -3.931)"><stop offset="0" stop-color="#b6361a"/><stop offset=".012" stop-color="#b6342a"/><stop offset=".042" stop-color="#b82c90"/><stop offset=".072" stop-color="#8033af"/><stop offset=".144" stop-color="#0872ae"/><stop offset=".198" stop-color="#07859c"/><stop offset=".24" stop-color="#146ab0"/><stop offset=".312" stop-color="#9a30aa"/><stop offset=".33" stop-color="#b82c93"/><stop offset=".366" stop-color="#b6361a"/><stop offset=".588" stop-color="#b6361c"/><stop offset=".612" stop-color="#b82b78"/><stop offset=".636" stop-color="#a62fa8"/><stop offset=".702" stop-color="#2361b0"/><stop offset=".732" stop-color="#0877a9"/><stop offset=".798" stop-color="#078999"/><stop offset=".858" stop-color="#0877aa"/><stop offset=".888" stop-color="#2561b0"/><stop offset=".954" stop-color="#a82fa8"/><stop offset=".984" stop-color="#b82b64"/><stop offset="1.002" stop-color="#b6361a"/></linearGradient><linearGradient id="g148" gradientUnits="userSpaceOnUse" x1="1192.0" y1="796.57" x2="1192.0" y2="963.53" gradientTransform="matrix(1 0.00376 0 1 0 -4.485)"><stop offset="0" stop-color="#b6361a"/><stop offset=".012" stop-color="#b63520"/><stop offset=".036" stop-color="#b82b79"/><stop offset=".06" stop-color="#a82fa8"/><stop offset=".126" stop-color="#2b5db0"/><stop offset=".162" stop-color="#0877aa"/><stop offset=".204" stop-color="#077ea3"/><stop offset=".234" stop-color="#106cb0"/><stop offset=".311" stop-color="#9631ab"/><stop offset=".335" stop-color="#b82b8b"/><stop offset=".371" stop-color="#b6361a"/><stop offset=".587" stop-color="#b6361a"/><stop offset=".617" stop-color="#b82b83"/><stop offset=".635" stop-color="#aa2fa7"/><stop offset=".701" stop-color="#2e5cb0"/><stop offset=".737" stop-color="#0875ab"/><stop offset=".821" stop-color="#07849d"/><stop offset=".868" stop-color="#116bb0"/><stop offset=".946" stop-color="#9731ab"/><stop offset=".97" stop-color="#b82b89"/><stop offset=".994" stop-color="#b73139"/><stop offset="1" stop-color="#b63520"/></linearGradient><linearGradient id="g149" gradientUnits="userSpaceOnUse" x1="1208.0" y1="796.30" x2="1208.0" y2="963.50" gradientTransform="matrix(1 0.00397 0 1 0 -4.793)"><stop offset="0" stop-color="#b6361a"/><stop offset=".012" stop-color="#b6361a"/><stop offset=".048" stop-color="#b82c91"/><stop offset=".078" stop-color="#8732ad"/><stop offset=".161" stop-color="#0870b0"/><stop offset=".203" stop-color="#087ba6"/><stop offset=".233" stop-color="#1669b0"/><stop offset=".311" stop-color="#9231ac"/><stop offset=".335" stop-color="#b82c93"/><stop offset=".365" stop-color="#b73232"/><stop offset=".371" stop-color="#b6361a"/><stop offset=".586" stop-color="#b6361a"/><stop offset=".622" stop-color="#b82c8f"/><stop offset=".652" stop-color="#8932ad"/><stop offset=".736" stop-color="#0970b0"/><stop offset=".813" stop-color="#077fa2"/><stop offset=".861" stop-color="#116bb0"/><stop offset=".945" stop-color="#9831ab"/><stop offset=".969" stop-color="#b82b8d"/><stop offset="1" stop-color="#b63523"/></linearGradient><linearGradient id="g150" gradientUnits="userSpaceOnUse" x1="1224.0" y1="796.05" x2="1224.0" y2="963.48" gradientTransform="matrix(1 0.00397 0 1 0 -4.855)"><stop offset="0" stop-color="#b6361a"/><stop offset=".018" stop-color="#b63426"/><stop offset=".048" stop-color="#b82b8a"/><stop offset=".072" stop-color="#9d30aa"/><stop offset=".161" stop-color="#1569b0"/><stop offset=".209" stop-color="#0874ac"/><stop offset=".287" stop-color="#653eb0"/><stop offset=".334" stop-color="#b62c9c"/><stop offset=".364" stop-color="#b73040"/><stop offset=".376" stop-color="#b6361a"/><stop offset=".585" stop-color="#b6361a"/><stop offset=".627" stop-color="#b62c9b"/><stop offset=".687" stop-color="#5348b0"/><stop offset=".753" stop-color="#0874ac"/><stop offset=".842" stop-color="#0872ae"/><stop offset=".932" stop-color="#8133ae"/><stop offset=".962" stop-color="#b32d9f"/><stop offset=".991" stop-color="#b72f46"/><stop offset="1" stop-color="#b63424"/></linearGradient><linearGradient id="g151" gradientUnits="userSpaceOnUse" x1="1240.0" y1="795.83" x2="1240.0" y2="963.49" gradientTransform="matrix(1 0.00403 0 1 0 -4.995)"><stop offset="0" stop-color="#b6361a"/><stop offset=".018" stop-color="#b6351d"/><stop offset=".048" stop-color="#b82b84"/><stop offset=".072" stop-color="#a52fa8"/><stop offset=".161" stop-color="#2163b0"/><stop offset=".197" stop-color="#0876ab"/><stop offset=".245" stop-color="#2e5bb0"/><stop offset=".322" stop-color="#a42fa9"/><stop offset=".346" stop-color="#b82b85"/><stop offset=".376" stop-color="#b6351f"/><stop offset=".59" stop-color="#b63424"/><stop offset=".62" stop-color="#b82b88"/><stop offset=".644" stop-color="#a230a9"/><stop offset=".734" stop-color="#1f64b0"/><stop offset=".775" stop-color="#0876ab"/><stop offset=".847" stop-color="#146ab0"/><stop offset=".942" stop-color="#9931aa"/><stop offset=".966" stop-color="#b82c93"/><stop offset=".996" stop-color="#b73234"/><stop offset="1.002" stop-color="#b6361c"/></linearGradient><linearGradient id="g152" gradientUnits="userSpaceOnUse" x1="1256.0" y1="795.63" x2="1256.0" y2="963.51" gradientTransform="matrix(1 0.00414 0 1 0 -5.198)"><stop offset="0" stop-color="#b6361a"/><stop offset=".018" stop-color="#b6361a"/><stop offset=".054" stop-color="#b82b8d"/><stop offset=".083" stop-color="#9631ab"/><stop offset=".191" stop-color="#0f6cb0"/><stop offset=".214" stop-color="#1469b0"/><stop offset=".316" stop-color="#9531ab"/><stop offset=".345" stop-color="#b82c8e"/><stop offset=".381" stop-color="#b6361a"/><stop offset=".59" stop-color="#b63521"/><stop offset=".62" stop-color="#b82b86"/><stop offset=".643" stop-color="#a72fa8"/><stop offset=".739" stop-color="#2461b0"/><stop offset=".78" stop-color="#0870b0"/><stop offset=".834" stop-color="#126bb0"/><stop offset=".941" stop-color="#9b30aa"/><stop offset=".965" stop-color="#b82c95"/><stop offset=".989" stop-color="#b72e50"/><stop offset="1.001" stop-color="#b63522"/></linearGradient><linearGradient id="g153" gradientUnits="userSpaceOnUse" x1="1272.0" y1="795.48" x2="1272.0" y2="963.54" gradientTransform="matrix(1 0.00429 0 1 0 -5.458)"><stop offset="0" stop-color="#b6361a"/><stop offset=".018" stop-color="#b6361a"/><stop offset=".06" stop-color="#b82c97"/><stop offset=".119" stop-color="#6a3bb0"/><stop offset=".202" stop-color="#136ab0"/><stop offset=".315" stop-color="#9431ab"/><stop offset=".345" stop-color="#b82c96"/><stop offset=".375" stop-color="#b7313d"/><stop offset=".387" stop-color="#b6361a"/><stop offset=".589" stop-color="#b63520"/><stop offset=".619" stop-color="#b82b84"/><stop offset=".643" stop-color="#a92fa7"/><stop offset=".756" stop-color="#1f64b0"/><stop offset=".827" stop-color="#1868b0"/><stop offset=".94" stop-color="#9e30aa"/><stop offset=".964" stop-color="#b82c96"/><stop offset=".994" stop-color="#b7313d"/><stop offset="1" stop-color="#b63424"/></linearGradient><linearGradient id="g154" gradientUnits="userSpaceOnUse" x1="1288.0" y1="795.38" x2="1288.0" y2="963.57" gradientTransform="matrix(1 0.00448 0 1 0 -5.773)"><stop offset="0" stop-color="#b6351e"/><stop offset=".024" stop-color="#b63523"/><stop offset=".054" stop-color="#b82b84"/><stop offset=".077" stop-color="#aa2fa6"/><stop offset=".19" stop-color="#2d5cb0"/><stop offset=".214" stop-color="#295fb0"/><stop offset=".327" stop-color="#a72fa8"/><stop offset=".351" stop-color="#b82c8f"/><stop offset=".381" stop-color="#b73235"/><stop offset=".386" stop-color="#b6351e"/><stop offset=".589" stop-color="#b63521"/><stop offset=".618" stop-color="#b82b83"/><stop offset=".642" stop-color="#ab2fa6"/><stop offset=".743" stop-color="#3856b0"/><stop offset=".791" stop-color="#2163b0"/><stop offset=".838" stop-color="#315ab0"/><stop offset=".945" stop-color="#a92fa7"/><stop offset=".969" stop-color="#b82b87"/><stop offset="1" stop-color="#b63524"/></linearGradient><linearGradient id="g155" gradientUnits="userSpaceOnUse" x1="1304.0" y1="795.35" x2="1304.0" y2="963.62" gradientTransform="matrix(1 0.00471 0 1 0 -6.143)"><stop offset="0" stop-color="#b63427"/><stop offset=".024" stop-color="#b63427"/><stop offset=".059" stop-color="#b82c90"/><stop offset=".101" stop-color="#9431ab"/><stop offset=".208" stop-color="#3259b0"/><stop offset=".327" stop-color="#a72fa8"/><stop offset=".351" stop-color="#b82c97"/><stop offset=".38" stop-color="#b73043"/><stop offset=".392" stop-color="#b63427"/><stop offset=".588" stop-color="#b63427"/><stop offset=".624" stop-color="#b82c91"/><stop offset=".672" stop-color="#8c32ad"/><stop offset=".779" stop-color="#315ab0"/><stop offset=".838" stop-color="#4151b0"/><stop offset=".945" stop-color="#ab2ea5"/><stop offset=".969" stop-color="#b82b86"/><stop offset="1" stop-color="#b63427"/></linearGradient><linearGradient id="g156" gradientUnits="userSpaceOnUse" x1="1320.0" y1="795.35" x2="1320.0" y2="963.67" gradientTransform="matrix(1 0.00498 0 1 0 -6.570)"><stop offset="0" stop-color="#b73330"/><stop offset=".03" stop-color="#b73138"/><stop offset=".065" stop-color="#b62c9c"/><stop offset=".196" stop-color="#4b4cb0"/><stop offset=".226" stop-color="#4b4cb0"/><stop offset=".356" stop-color="#b62c9c"/><stop offset=".398" stop-color="#b73330"/><stop offset=".582" stop-color="#b73330"/><stop offset=".624" stop-color="#b42d9d"/><stop offset=".749" stop-color="#4f4ab0"/><stop offset=".814" stop-color="#4251b0"/><stop offset=".939" stop-color="#aa2fa6"/><stop offset=".962" stop-color="#b82c92"/><stop offset="1" stop-color="#b73330"/></linearGradient><linearGradient id="g157" gradientUnits="userSpaceOnUse" x1="1336.0" y1="795.38" x2="1336.0" y2="963.73" gradientTransform="matrix(1 0.00529 0 1 0 -7.062)"><stop offset="0" stop-color="#b7313a"/><stop offset=".03" stop-color="#b7313a"/><stop offset=".065" stop-color="#b72c9b"/><stop offset=".226" stop-color="#5448b0"/><stop offset=".368" stop-color="#b42d9d"/><stop offset=".398" stop-color="#b82d57"/><stop offset=".41" stop-color="#b7313a"/><stop offset=".576" stop-color="#b73043"/><stop offset=".612" stop-color="#b42d9d"/><stop offset=".772" stop-color="#5149b0"/><stop offset=".832" stop-color="#6041b0"/><stop offset=".956" stop-color="#b62c9c"/><stop offset=".986" stop-color="#b72d52"/><stop offset=".998" stop-color="#b7313a"/><stop offset="1" stop-color="#b7313a"/></linearGradient><linearGradient id="g158" gradientUnits="userSpaceOnUse" x1="1352.0" y1="795.46" x2="1352.0" y2="963.80" gradientTransform="matrix(1 0.00564 0 1 0 -7.628)"><stop offset="0" stop-color="#b72f44"/><stop offset=".03" stop-color="#b72f44"/><stop offset=".071" stop-color="#b32d9e"/><stop offset=".232" stop-color="#6141b0"/><stop offset=".386" stop-color="#b52c9c"/><stop offset=".422" stop-color="#b72f44"/><stop offset=".558" stop-color="#b72f45"/><stop offset=".594" stop-color="#b52d9d"/><stop offset=".766" stop-color="#6141b0"/><stop offset=".838" stop-color="#7536b0"/><stop offset=".956" stop-color="#b82c98"/><stop offset=".992" stop-color="#b72f44"/><stop offset="1" stop-color="#b72f44"/></linearGradient><linearGradient id="g159" gradientUnits="userSpaceOnUse" x1="1368.0" y1="795.58" x2="1368.0" y2="963.87" gradientTransform="matrix(1 0.00605 0 1 0 -8.280)"><stop offset="0" stop-color="#b72e4f"/><stop offset=".036" stop-color="#b72d54"/><stop offset=".071" stop-color="#b42d9e"/><stop offset=".244" stop-color="#7038b0"/><stop offset=".404" stop-color="#b52c9c"/><stop offset=".44" stop-color="#b72e4f"/><stop offset=".541" stop-color="#b72e4f"/><stop offset=".576" stop-color="#b52d9d"/><stop offset=".755" stop-color="#7038b0"/><stop offset=".85" stop-color="#8a32ad"/><stop offset=".957" stop-color="#b82c92"/><stop offset=".986" stop-color="#b72e4f"/><stop offset="1" stop-color="#b72e4f"/></linearGradient><linearGradient id="g160" gradientUnits="userSpaceOnUse" x1="1384.0" y1="795.75" x2="1384.0" y2="963.95" gradientTransform="matrix(1 0.00653 0 1 0 -9.038)"><stop offset="0" stop-color="#b82c5a"/><stop offset=".036" stop-color="#b82c5a"/><stop offset=".071" stop-color="#b42d9d"/><stop offset=".262" stop-color="#7e33af"/><stop offset=".422" stop-color="#b62c9c"/><stop offset=".458" stop-color="#b82c5a"/><stop offset=".523" stop-color="#b82c5a"/><stop offset=".559" stop-color="#b42d9d"/><stop offset=".749" stop-color="#7d33af"/><stop offset=".862" stop-color="#9c30aa"/><stop offset=".951" stop-color="#b82c97"/><stop offset=".981" stop-color="#b82c5a"/><stop offset="1" stop-color="#b82c5a"/></linearGradient><linearGradient id="g161" gradientUnits="userSpaceOnUse" x1="1400.0" y1="795.95" x2="1400.0" y2="964.03" gradientTransform="matrix(1 0.00709 0 1 0 -9.927)"><stop offset="0" stop-color="#b82a68"/><stop offset=".042" stop-color="#b82a6b"/><stop offset=".071" stop-color="#b52d9d"/><stop offset=".274" stop-color="#8732ae"/><stop offset=".44" stop-color="#b72c9a"/><stop offset=".47" stop-color="#b82a68"/><stop offset=".512" stop-color="#b82a6b"/><stop offset=".541" stop-color="#b52d9d"/><stop offset=".75" stop-color="#8633ae"/><stop offset=".946" stop-color="#b72c9a"/><stop offset=".976" stop-color="#b82a68"/><stop offset="1" stop-color="#b82a68"/></linearGradient><linearGradient id="g162" gradientUnits="userSpaceOnUse" x1="1416.0" y1="796.16" x2="1416.0" y2="964.12" gradientTransform="matrix(1 0.00776 0 1 0 -10.982)"><stop offset="0" stop-color="#b82a72"/><stop offset=".048" stop-color="#b82b77"/><stop offset=".071" stop-color="#b52d9d"/><stop offset=".286" stop-color="#8d32ac"/><stop offset=".458" stop-color="#b82c96"/><stop offset=".482" stop-color="#b82a72"/><stop offset=".506" stop-color="#b82b85"/><stop offset=".53" stop-color="#b32d9e"/><stop offset=".744" stop-color="#8c32ad"/><stop offset=".941" stop-color="#b82c97"/><stop offset=".965" stop-color="#b82a72"/><stop offset="1" stop-color="#b82a72"/></linearGradient><linearGradient id="g163" gradientUnits="userSpaceOnUse" x1="1432.0" y1="796.37" x2="1432.0" y2="964.21" gradientTransform="matrix(1 0.00856 0 1 0 -12.255)"><stop offset="0" stop-color="#b82b7a"/><stop offset=".054" stop-color="#b82b82"/><stop offset=".077" stop-color="#b42d9e"/><stop offset=".298" stop-color="#9231ac"/><stop offset=".477" stop-color="#b82c93"/><stop offset=".489" stop-color="#b82b8a"/><stop offset=".518" stop-color="#b22d9f"/><stop offset=".745" stop-color="#9131ac"/><stop offset=".929" stop-color="#b82c98"/><stop offset=".953" stop-color="#b82b7a"/><stop offset="1.001" stop-color="#b82b7a"/></linearGradient><linearGradient id="g164" gradientUnits="userSpaceOnUse" x1="1448.0" y1="796.53" x2="1448.0" y2="964.31" gradientTransform="matrix(1 0.00954 0 1 0 -13.818)"><stop offset="0" stop-color="#b82b7e"/><stop offset=".06" stop-color="#b82b8a"/><stop offset=".089" stop-color="#b22d9f"/><stop offset=".304" stop-color="#9531ab"/><stop offset=".513" stop-color="#b12da0"/><stop offset=".739" stop-color="#9331ab"/><stop offset=".918" stop-color="#b82c97"/><stop offset=".942" stop-color="#b82b7e"/><stop offset="1.001" stop-color="#b82b7e"/></linearGradient><linearGradient id="g165" gradientUnits="userSpaceOnUse" x1="1464.0" y1="796.64" x2="1464.0" y2="964.41" gradientTransform="matrix(1 0.01078 0 1 0 -15.777)"><stop offset="0" stop-color="#b82b7e"/><stop offset=".06" stop-color="#b82b83"/><stop offset=".083" stop-color="#b42d9d"/><stop offset=".304" stop-color="#9231ac"/><stop offset=".507" stop-color="#b12da0"/><stop offset=".733" stop-color="#9231ac"/><stop offset=".906" stop-color="#b82c96"/><stop offset=".924" stop-color="#b82b7e"/><stop offset="1.001" stop-color="#b82b7e"/></linearGradient><linearGradient id="g166" gradientUnits="userSpaceOnUse" x1="1480.0" y1="796.76" x2="1480.0" y2="964.52" gradientTransform="matrix(1 0.01236 0 1 0 -18.297)"><stop offset="0" stop-color="#b82b7d"/><stop offset=".066" stop-color="#b82b80"/><stop offset=".089" stop-color="#b52d9d"/><stop offset=".298" stop-color="#8e32ac"/><stop offset=".507" stop-color="#b02da1"/><stop offset=".727" stop-color="#8e32ac"/><stop offset=".894" stop-color="#b82c93"/><stop offset=".912" stop-color="#b82b7d"/><stop offset="1.001" stop-color="#b82b7d"/></linearGradient><linearGradient id="g167" gradientUnits="userSpaceOnUse" x1="1496.0" y1="797.14" x2="1496.0" y2="964.63" gradientTransform="matrix(1 0.01500 0 1 0 -22.440)"><stop offset="0" stop-color="#b82b7c"/><stop offset=".078" stop-color="#b82b87"/><stop offset=".102" stop-color="#b42d9e"/><stop offset=".287" stop-color="#8732ad"/><stop offset=".508" stop-color="#af2ea2"/><stop offset=".711" stop-color="#8732ad"/><stop offset=".878" stop-color="#b82c97"/><stop offset=".896" stop-color="#b82b7c"/><stop offset="1" stop-color="#b82b7c"/></linearGradient><linearGradient id="g168" gradientUnits="userSpaceOnUse" x1="1512.0" y1="797.62" x2="1512.0" y2="964.75" gradientTransform="matrix(1 0.01794 0 1 0 -27.130)"><stop offset="0" stop-color="#b82b7b"/><stop offset=".084" stop-color="#b82b7d"/><stop offset=".102" stop-color="#b62c9c"/><stop offset=".221" stop-color="#8b32ad"/><stop offset=".323" stop-color="#7f33af"/><stop offset=".491" stop-color="#b02ea1"/><stop offset=".694" stop-color="#7e33af"/><stop offset=".862" stop-color="#b82c97"/><stop offset=".88" stop-color="#b82b7b"/><stop offset="1" stop-color="#b82b7b"/></linearGradient><linearGradient id="g169" gradientUnits="userSpaceOnUse" x1="1528.0" y1="798.14" x2="1528.0" y2="964.87" gradientTransform="matrix(1 0.02203 0 1 0 -33.657)"><stop offset="0" stop-color="#b82b79"/><stop offset=".096" stop-color="#b82b79"/><stop offset=".12" stop-color="#b42d9d"/><stop offset=".21" stop-color="#8932ad"/><stop offset=".276" stop-color="#6d3ab0"/><stop offset=".366" stop-color="#7f33af"/><stop offset=".492" stop-color="#ad2ea3"/><stop offset=".672" stop-color="#6d3ab0"/><stop offset=".732" stop-color="#8033af"/><stop offset=".822" stop-color="#b12da0"/><stop offset=".846" stop-color="#b82c8f"/><stop offset=".864" stop-color="#b82b79"/><stop offset="1.002" stop-color="#b82b79"/></linearGradient><linearGradient id="g170" gradientUnits="userSpaceOnUse" x1="1544.0" y1="798.68" x2="1544.0" y2="965.01" gradientTransform="matrix(1 0.02654 0 1 0 -40.982)"><stop offset="0" stop-color="#b82b76"/><stop offset=".126" stop-color="#b82b7f"/><stop offset=".144" stop-color="#b42d9d"/><stop offset=".21" stop-color="#8d32ad"/><stop offset=".283" stop-color="#5944b0"/><stop offset=".361" stop-color="#693cb0"/><stop offset=".493" stop-color="#aa2fa6"/><stop offset=".655" stop-color="#5944b0"/><stop offset=".703" stop-color="#683db0"/><stop offset=".788" stop-color="#ad2ea3"/><stop offset=".818" stop-color="#b82c90"/><stop offset=".836" stop-color="#b82b76"/><stop offset="1" stop-color="#b82b76"/></linearGradient><linearGradient id="g171" gradientUnits="userSpaceOnUse" x1="1560.0" y1="799.24" x2="1560.0" y2="965.16" gradientTransform="matrix(1 0.03182 0 1 0 -49.633)"><stop offset="0" stop-color="#b82a6f"/><stop offset=".157" stop-color="#b82a73"/><stop offset=".175" stop-color="#b52c9c"/><stop offset=".229" stop-color="#8e32ac"/><stop offset=".295" stop-color="#484eb0"/><stop offset=".368" stop-color="#5945b0"/><stop offset=".494" stop-color="#a62fa8"/><stop offset=".639" stop-color="#484eb0"/><stop offset=".681" stop-color="#5646b0"/><stop offset=".759" stop-color="#ac2ea4"/><stop offset=".784" stop-color="#b82c9a"/><stop offset=".802" stop-color="#b82a6f"/><stop offset="1" stop-color="#b82a6f"/></linearGradient><linearGradient id="g172" gradientUnits="userSpaceOnUse" x1="1576.0" y1="799.82" x2="1576.0" y2="965.32" gradientTransform="matrix(1 0.03722 0 1 0 -58.662)"><stop offset="0" stop-color="#b82a67"/><stop offset=".187" stop-color="#b82a67"/><stop offset=".205" stop-color="#b72c9b"/><stop offset=".248" stop-color="#9431ab"/><stop offset=".314" stop-color="#3757b0"/><stop offset=".375" stop-color="#484eb0"/><stop offset=".489" stop-color="#a330a9"/><stop offset=".604" stop-color="#4151b0"/><stop offset=".659" stop-color="#4052b0"/><stop offset=".719" stop-color="#9b30aa"/><stop offset=".755" stop-color="#b72c9b"/><stop offset=".773" stop-color="#b82a67"/><stop offset="1.003" stop-color="#b82a67"/></linearGradient><linearGradient id="g173" gradientUnits="userSpaceOnUse" x1="1592.0" y1="800.41" x2="1592.0" y2="965.50" gradientTransform="matrix(1 0.04190 0 1 0 -66.698)"><stop offset="0" stop-color="#b82c5c"/><stop offset=".212" stop-color="#b82c5c"/><stop offset=".23" stop-color="#b82c99"/><stop offset=".267" stop-color="#9531ab"/><stop offset=".333" stop-color="#2760b0"/><stop offset=".382" stop-color="#3856b0"/><stop offset=".485" stop-color="#9a30aa"/><stop offset=".588" stop-color="#3b55b0"/><stop offset=".63" stop-color="#2760b0"/><stop offset=".648" stop-color="#315ab0"/><stop offset=".703" stop-color="#9331ab"/><stop offset=".739" stop-color="#b82c99"/><stop offset=".757" stop-color="#b82c5c"/><stop offset="1" stop-color="#b82c5c"/></linearGradient><linearGradient id="g174" gradientUnits="userSpaceOnUse" x1="1608.0" y1="801.01" x2="1608.0" y2="965.70" gradientTransform="matrix(1 0.04394 0 1 0 -70.649)"><stop offset="0" stop-color="#b72d52"/><stop offset=".225" stop-color="#b72d54"/><stop offset=".243" stop-color="#b82c98"/><stop offset=".273" stop-color="#9931ab"/><stop offset=".328" stop-color="#2660b0"/><stop offset=".358" stop-color="#1668b0"/><stop offset=".486" stop-color="#9431ab"/><stop offset=".619" stop-color="#1668b0"/><stop offset=".644" stop-color="#1b66b0"/><stop offset=".698" stop-color="#8c32ad"/><stop offset=".729" stop-color="#b32d9e"/><stop offset=".741" stop-color="#b82b86"/><stop offset=".753" stop-color="#b82d57"/><stop offset="1.002" stop-color="#b72d52"/></linearGradient><linearGradient id="g175" gradientUnits="userSpaceOnUse" x1="1624.0" y1="801.63" x2="1624.0" y2="965.92" gradientTransform="matrix(1 0.04283 0 1 0 -69.555)"><stop offset="0" stop-color="#b72f49"/><stop offset=".231" stop-color="#b72f49"/><stop offset=".256" stop-color="#b52d9d"/><stop offset=".28" stop-color="#9731ab"/><stop offset=".341" stop-color="#0871af"/><stop offset=".383" stop-color="#1668b0"/><stop offset=".487" stop-color="#8d32ad"/><stop offset=".615" stop-color="#0871af"/><stop offset=".645" stop-color="#116bb0"/><stop offset=".7" stop-color="#8e32ac"/><stop offset=".724" stop-color="#b12da0"/><stop offset=".743" stop-color="#b82b78"/><stop offset=".755" stop-color="#b72f49"/><stop offset="1" stop-color="#b72f49"/></linearGradient><linearGradient id="g176" gradientUnits="userSpaceOnUse" x1="1640.0" y1="802.26" x2="1640.0" y2="966.15" gradientTransform="matrix(1 0.03941 0 1 0 -64.638)"><stop offset="0" stop-color="#b73040"/><stop offset=".238" stop-color="#b73040"/><stop offset=".256" stop-color="#b82c8e"/><stop offset=".281" stop-color="#a230a9"/><stop offset=".317" stop-color="#3f53b0"/><stop offset=".342" stop-color="#0875ab"/><stop offset=".391" stop-color="#0e6db0"/><stop offset=".488" stop-color="#8333ae"/><stop offset=".598" stop-color="#0872ae"/><stop offset=".647" stop-color="#0870b0"/><stop offset=".702" stop-color="#9231ac"/><stop offset=".732" stop-color="#b82c94"/><stop offset=".751" stop-color="#b72f49"/><stop offset="1.001" stop-color="#b73040"/></linearGradient><linearGradient id="g177" gradientUnits="userSpaceOnUse" x1="1656.0" y1="802.92" x2="1656.0" y2="966.40" gradientTransform="matrix(1 0.03716 0 1 0 -61.537)"><stop offset="0" stop-color="#b73137"/><stop offset=".245" stop-color="#b73041"/><stop offset=".263" stop-color="#b82c91"/><stop offset=".287" stop-color="#9a30aa"/><stop offset=".318" stop-color="#3d53b0"/><stop offset=".336" stop-color="#0871af"/><stop offset=".367" stop-color="#0782a0"/><stop offset=".41" stop-color="#1669b0"/><stop offset=".489" stop-color="#7834b0"/><stop offset=".587" stop-color="#0874ac"/><stop offset=".636" stop-color="#0782a0"/><stop offset=".655" stop-color="#116bb0"/><stop offset=".697" stop-color="#8732ad"/><stop offset=".716" stop-color="#ad2ea4"/><stop offset=".728" stop-color="#b72c9a"/><stop offset=".752" stop-color="#b73137"/><stop offset="1" stop-color="#b73137"/></linearGradient><linearGradient id="g178" gradientUnits="userSpaceOnUse" x1="1672.0" y1="803.58" x2="1672.0" y2="966.66" gradientTransform="matrix(1 0.03784 0 1 0 -63.269)"><stop offset="0" stop-color="#b7332f"/><stop offset=".245" stop-color="#b7332f"/><stop offset=".27" stop-color="#b82c98"/><stop offset=".294" stop-color="#8d32ac"/><stop offset=".337" stop-color="#0875ab"/><stop offset=".362" stop-color="#078b98"/><stop offset=".417" stop-color="#106cb0"/><stop offset=".484" stop-color="#7436b0"/><stop offset=".57" stop-color="#0872ae"/><stop offset=".632" stop-color="#078b98"/><stop offset=".656" stop-color="#0d6eb0"/><stop offset=".699" stop-color="#8d32ad"/><stop offset=".724" stop-color="#b52c9c"/><stop offset=".742" stop-color="#b82c5c"/><stop offset=".748" stop-color="#b73139"/><stop offset="1" stop-color="#b7332f"/></linearGradient><linearGradient id="g179" gradientUnits="userSpaceOnUse" x1="1688.0" y1="804.26" x2="1688.0" y2="966.93" gradientTransform="matrix(1 0.03858 0 1 0 -65.118)"><stop offset="0" stop-color="#b63428"/><stop offset=".246" stop-color="#b63428"/><stop offset=".252" stop-color="#b73235"/><stop offset=".27" stop-color="#b82b8c"/><stop offset=".289" stop-color="#a72fa8"/><stop offset=".314" stop-color="#4e4bb0"/><stop offset=".332" stop-color="#0a6fb0"/><stop offset=".357" stop-color="#07948f"/><stop offset=".424" stop-color="#0b6eb0"/><stop offset=".486" stop-color="#6a3cb0"/><stop offset=".559" stop-color="#0873ad"/><stop offset=".633" stop-color="#07948f"/><stop offset=".658" stop-color="#0970b0"/><stop offset=".701" stop-color="#9431ab"/><stop offset=".719" stop-color="#b32d9e"/><stop offset=".738" stop-color="#b82a65"/><stop offset=".75" stop-color="#b63428"/><stop offset="1.002" stop-color="#b63428"/></linearGradient><linearGradient id="g180" gradientUnits="userSpaceOnUse" x1="1704.0" y1="804.94" x2="1704.0" y2="967.21" gradientTransform="matrix(1 0.03924 0 1 0 -66.869)"><stop offset="0" stop-color="#b63521"/><stop offset=".253" stop-color="#b63522"/><stop offset=".271" stop-color="#b82b82"/><stop offset=".283" stop-color="#b02da1"/><stop offset=".296" stop-color="#9431ab"/><stop offset=".333" stop-color="#0874ad"/><stop offset=".364" stop-color="#069d86"/><stop offset=".438" stop-color="#136ab0"/><stop offset=".487" stop-color="#6041b0"/><stop offset=".548" stop-color="#0873ae"/><stop offset=".629" stop-color="#069d86"/><stop offset=".659" stop-color="#0871af"/><stop offset=".696" stop-color="#8732ad"/><stop offset=".715" stop-color="#b12da0"/><stop offset=".727" stop-color="#b82b84"/><stop offset=".746" stop-color="#b63425"/><stop offset="1" stop-color="#b63521"/></linearGradient><linearGradient id="g181" gradientUnits="userSpaceOnUse" x1="1720.0" y1="805.64" x2="1720.0" y2="967.50" gradientTransform="matrix(1 0.03987 0 1 0 -68.570)"><stop offset="0" stop-color="#b6361a"/><stop offset=".253" stop-color="#b6361a"/><stop offset=".278" stop-color="#b82c91"/><stop offset=".297" stop-color="#9731ab"/><stop offset=".327" stop-color="#116bb0"/><stop offset=".358" stop-color="#07a37c"/><stop offset=".408" stop-color="#078b97"/><stop offset=".445" stop-color="#126ab0"/><stop offset=".482" stop-color="#5944b0"/><stop offset=".544" stop-color="#0876aa"/><stop offset=".618" stop-color="#07a37c"/><stop offset=".643" stop-color="#079390"/><stop offset=".661" stop-color="#0872ae"/><stop offset=".698" stop-color="#9032ac"/><stop offset=".71" stop-color="#ae2ea3"/><stop offset=".729" stop-color="#b82a73"/><stop offset=".741" stop-color="#b6332d"/><stop offset=".754" stop-color="#b6361a"/><stop offset="1.001" stop-color="#b6361a"/></linearGradient><linearGradient id="g182" gradientUnits="userSpaceOnUse" x1="1736.0" y1="806.35" x2="1736.0" y2="967.80" gradientTransform="matrix(1 0.04047 0 1 0 -70.255)"><stop offset="0" stop-color="#b6361a"/><stop offset=".254" stop-color="#b6361a"/><stop offset=".26" stop-color="#b63427"/><stop offset=".279" stop-color="#b82b89"/><stop offset=".297" stop-color="#9a30aa"/><stop offset=".328" stop-color="#0870b0"/><stop offset=".359" stop-color="#0aa470"/><stop offset=".403" stop-color="#069a8a"/><stop offset=".452" stop-color="#136ab0"/><stop offset=".483" stop-color="#5447b0"/><stop offset=".533" stop-color="#0874ac"/><stop offset=".607" stop-color="#0aa471"/><stop offset=".632" stop-color="#09a474"/><stop offset=".663" stop-color="#0873ae"/><stop offset=".694" stop-color="#8233ae"/><stop offset=".712" stop-color="#b32d9f"/><stop offset=".731" stop-color="#b82c5c"/><stop offset=".743" stop-color="#b6361a"/><stop offset="1" stop-color="#b6361a"/></linearGradient><linearGradient id="g183" gradientUnits="userSpaceOnUse" x1="1752.0" y1="807.09" x2="1752.0" y2="968.11" gradientTransform="matrix(1 0.04107 0 1 0 -71.950)"><stop offset="0" stop-color="#b6361a"/><stop offset=".261" stop-color="#b6361a"/><stop offset=".279" stop-color="#b82b80"/><stop offset=".292" stop-color="#af2ea2"/><stop offset=".304" stop-color="#8133af"/><stop offset=".329" stop-color="#0873ad"/><stop offset=".354" stop-color="#0aa473"/><stop offset=".366" stop-color="#0da664"/><stop offset=".416" stop-color="#06968d"/><stop offset=".453" stop-color="#0970b0"/><stop offset=".484" stop-color="#4f4ab0"/><stop offset=".528" stop-color="#0876ab"/><stop offset=".59" stop-color="#09a376"/><stop offset=".627" stop-color="#0da664"/><stop offset=".652" stop-color="#078c96"/><stop offset=".665" stop-color="#0872ae"/><stop offset=".696" stop-color="#8e32ac"/><stop offset=".708" stop-color="#b02da1"/><stop offset=".72" stop-color="#b82b7f"/><stop offset=".739" stop-color="#b6361a"/><stop offset="1" stop-color="#b6361a"/></linearGradient><linearGradient id="g184" gradientUnits="userSpaceOnUse" x1="1768.0" y1="807.86" x2="1768.0" y2="968.43" gradientTransform="matrix(1 0.04169 0 1 0 -73.701)"><stop offset="0" stop-color="#b6361a"/><stop offset=".262" stop-color="#b6361a"/><stop offset=".286" stop-color="#b82c93"/><stop offset=".299" stop-color="#a330a9"/><stop offset=".318" stop-color="#3e53b0"/><stop offset=".33" stop-color="#0877aa"/><stop offset=".355" stop-color="#0ca56b"/><stop offset=".367" stop-color="#10a759"/><stop offset=".405" stop-color="#08a378"/><stop offset=".461" stop-color="#0e6db0"/><stop offset=".486" stop-color="#4a4db0"/><stop offset=".529" stop-color="#0877a9"/><stop offset=".585" stop-color="#09a475"/><stop offset=".623" stop-color="#10a759"/><stop offset=".641" stop-color="#0aa473"/><stop offset=".666" stop-color="#0877aa"/><stop offset=".685" stop-color="#5547b0"/><stop offset=".704" stop-color="#aa2fa6"/><stop offset=".722" stop-color="#b82b75"/><stop offset=".735" stop-color="#b6332b"/><stop offset=".747" stop-color="#b6361a"/><stop offset="1.003" stop-color="#b6361a"/></linearGradient><linearGradient id="g185" gradientUnits="userSpaceOnUse" x1="1784.0" y1="808.68" x2="1784.0" y2="968.76" gradientTransform="matrix(1 0.04235 0 1 0 -75.558)"><stop offset="0" stop-color="#b6361a"/><stop offset=".262" stop-color="#b6361a"/><stop offset=".269" stop-color="#b6342a"/><stop offset=".287" stop-color="#b82c8f"/><stop offset=".3" stop-color="#a42fa9"/><stop offset=".319" stop-color="#3a55b0"/><stop offset=".325" stop-color="#1669b0"/><stop offset=".344" stop-color="#069c88"/><stop offset=".362" stop-color="#12a84f"/><stop offset=".394" stop-color="#0ea660"/><stop offset=".437" stop-color="#078e94"/><stop offset=".462" stop-color="#0871af"/><stop offset=".493" stop-color="#5c43b0"/><stop offset=".531" stop-color="#0874ac"/><stop offset=".587" stop-color="#0aa473"/><stop offset=".625" stop-color="#12a84f"/><stop offset=".637" stop-color="#12a851"/><stop offset=".662" stop-color="#079093"/><stop offset=".675" stop-color="#0870b0"/><stop offset=".7" stop-color="#8b32ad"/><stop offset=".706" stop-color="#a92fa7"/><stop offset=".725" stop-color="#b82a73"/><stop offset=".737" stop-color="#b63427"/><stop offset=".762" stop-color="#b6361a"/><stop offset="1" stop-color="#b6361a"/></linearGradient><linearGradient id="g186" gradientUnits="userSpaceOnUse" x1="1800.0" y1="809.54" x2="1800.0" y2="969.10" gradientTransform="matrix(1 0.04272 0 1 0 -76.894)"><stop offset="0" stop-color="#b6361a"/><stop offset=".263" stop-color="#b6361a"/><stop offset=".269" stop-color="#b63425"/><stop offset=".288" stop-color="#b82c8e"/><stop offset=".301" stop-color="#a42fa9"/><stop offset=".32" stop-color="#3558b0"/><stop offset=".326" stop-color="#106cb0"/><stop offset=".345" stop-color="#06a183"/><stop offset=".364" stop-color="#14a948"/><stop offset=".395" stop-color="#10a75a"/><stop offset=".439" stop-color="#079291"/><stop offset=".47" stop-color="#116bb0"/><stop offset=".495" stop-color="#5c43b0"/><stop offset=".501" stop-color="#5a44b0"/><stop offset=".533" stop-color="#0872ae"/><stop offset=".589" stop-color="#0aa471"/><stop offset=".627" stop-color="#14a948"/><stop offset=".646" stop-color="#10a757"/><stop offset=".664" stop-color="#06978c"/><stop offset=".677" stop-color="#0876ab"/><stop offset=".702" stop-color="#8832ad"/><stop offset=".708" stop-color="#a92fa7"/><stop offset=".727" stop-color="#b82a71"/><stop offset=".74" stop-color="#b63521"/><stop offset="1.003" stop-color="#b6361a"/></linearGradient><linearGradient id="g187" gradientUnits="userSpaceOnUse" x1="1816.0" y1="810.49" x2="1816.0" y2="969.44" gradientTransform="matrix(1 0.04118 0 1 0 -74.779)"><stop offset="0" stop-color="#b6361a"/><stop offset=".271" stop-color="#b63424"/><stop offset=".289" stop-color="#b82c8f"/><stop offset=".302" stop-color="#a130a9"/><stop offset=".315" stop-color="#5547b0"/><stop offset=".327" stop-color="#0870b0"/><stop offset=".346" stop-color="#07a37d"/><stop offset=".365" stop-color="#15aa43"/><stop offset=".396" stop-color="#11a756"/><stop offset=".44" stop-color="#079390"/><stop offset=".472" stop-color="#106cb0"/><stop offset=".497" stop-color="#6141b0"/><stop offset=".535" stop-color="#0874ac"/><stop offset=".585" stop-color="#09a474"/><stop offset=".629" stop-color="#15aa43"/><stop offset=".642" stop-color="#15aa43"/><stop offset=".667" stop-color="#06978c"/><stop offset=".679" stop-color="#0875ab"/><stop offset=".705" stop-color="#8e32ac"/><stop offset=".717" stop-color="#b52c9c"/><stop offset=".73" stop-color="#b82a69"/><stop offset=".742" stop-color="#b6361a"/><stop offset="1" stop-color="#b6361a"/></linearGradient><linearGradient id="g188" gradientUnits="userSpaceOnUse" x1="1832.0" y1="811.53" x2="1832.0" y2="969.80" gradientTransform="matrix(1 0.04068 0 1 0 -74.532)"><stop offset="0" stop-color="#b6361a"/><stop offset=".265" stop-color="#b6361a"/><stop offset=".272" stop-color="#b6342a"/><stop offset=".291" stop-color="#b82c94"/><stop offset=".303" stop-color="#9831ab"/><stop offset=".322" stop-color="#2262b0"/><stop offset=".329" stop-color="#0876aa"/><stop offset=".348" stop-color="#09a475"/><stop offset=".366" stop-color="#1baa3e"/><stop offset=".398" stop-color="#11a854"/><stop offset=".442" stop-color="#07948f"/><stop offset=".474" stop-color="#116bb0"/><stop offset=".499" stop-color="#683cb0"/><stop offset=".531" stop-color="#0871af"/><stop offset=".581" stop-color="#09a376"/><stop offset=".632" stop-color="#1baa3e"/><stop offset=".644" stop-color="#16aa42"/><stop offset=".67" stop-color="#07958e"/><stop offset=".682" stop-color="#0872ae"/><stop offset=".701" stop-color="#7436b0"/><stop offset=".714" stop-color="#ae2ea3"/><stop offset=".727" stop-color="#b82b7b"/><stop offset=".739" stop-color="#b7332e"/><stop offset=".746" stop-color="#b6361a"/><stop offset="1" stop-color="#b6361a"/></linearGradient><linearGradient id="g189" gradientUnits="userSpaceOnUse" x1="1848.0" y1="812.69" x2="1848.0" y2="970.17" gradientTransform="matrix(1 0.04361 0 1 0 -80.592)"><stop offset="0" stop-color="#b6361a"/><stop offset=".267" stop-color="#b6361a"/><stop offset=".292" stop-color="#b72c9b"/><stop offset=".298" stop-color="#ab2fa6"/><stop offset=".318" stop-color="#3956b0"/><stop offset=".324" stop-color="#116bb0"/><stop offset=".343" stop-color="#07a27f"/><stop offset=".362" stop-color="#19aa3f"/><stop offset=".381" stop-color="#24ab3b"/><stop offset=".406" stop-color="#0fa75c"/><stop offset=".445" stop-color="#079390"/><stop offset=".476" stop-color="#1569b0"/><stop offset=".502" stop-color="#5d42b0"/><stop offset=".527" stop-color="#0c6eb0"/><stop offset=".584" stop-color="#0ba46f"/><stop offset=".629" stop-color="#24ab3b"/><stop offset=".641" stop-color="#24ab3b"/><stop offset=".667" stop-color="#06a282"/><stop offset=".686" stop-color="#0f6cb0"/><stop offset=".705" stop-color="#8133af"/><stop offset=".711" stop-color="#a52fa8"/><stop offset=".73" stop-color="#b82a6f"/><stop offset=".743" stop-color="#b6361a"/><stop offset="1" stop-color="#b6361a"/></linearGradient><linearGradient id="g190" gradientUnits="userSpaceOnUse" x1="1864.0" y1="813.94" x2="1864.0" y2="970.54" gradientTransform="matrix(1 0.04917 0 1 0 -91.662)"><stop offset="0" stop-color="#b6361a"/><stop offset=".268" stop-color="#b6361a"/><stop offset=".287" stop-color="#b82b8c"/><stop offset=".3" stop-color="#a030a9"/><stop offset=".313" stop-color="#4f4ab0"/><stop offset=".326" stop-color="#0875ab"/><stop offset=".345" stop-color="#0aa473"/><stop offset=".358" stop-color="#14a947"/><stop offset=".364" stop-color="#2dab38"/><stop offset=".383" stop-color="#26ab3a"/><stop offset=".402" stop-color="#11a854"/><stop offset=".447" stop-color="#079191"/><stop offset=".473" stop-color="#0870b0"/><stop offset=".498" stop-color="#6140b0"/><stop offset=".524" stop-color="#0f6cb0"/><stop offset=".575" stop-color="#08a378"/><stop offset=".619" stop-color="#1eaa3d"/><stop offset=".639" stop-color="#2dab38"/><stop offset=".651" stop-color="#13a84d"/><stop offset=".67" stop-color="#069b88"/><stop offset=".683" stop-color="#0877a9"/><stop offset=".696" stop-color="#454fb0"/><stop offset=".715" stop-color="#ac2ea4"/><stop offset=".728" stop-color="#b82b7d"/><stop offset=".741" stop-color="#b7332e"/><stop offset=".747" stop-color="#b6361a"/><stop offset="1.003" stop-color="#b6361a"/></linearGradient><linearGradient id="g191" gradientUnits="userSpaceOnUse" x1="1880.0" y1="815.26" x2="1880.0" y2="970.93" gradientTransform="matrix(1 0.05454 0 1 0 -102.531)"><stop offset="0" stop-color="#b6361a"/><stop offset=".263" stop-color="#b6361a"/><stop offset=".27" stop-color="#b63427"/><stop offset=".289" stop-color="#b82c97"/><stop offset=".302" stop-color="#8f32ac"/><stop offset=".321" stop-color="#126bb0"/><stop offset=".34" stop-color="#07a37d"/><stop offset=".36" stop-color="#22ab3c"/><stop offset=".373" stop-color="#33ab36"/><stop offset=".385" stop-color="#23ab3b"/><stop offset=".424" stop-color="#0aa472"/><stop offset=".475" stop-color="#0f6cb0"/><stop offset=".495" stop-color="#5149b0"/><stop offset=".501" stop-color="#5049b0"/><stop offset=".527" stop-color="#0873ad"/><stop offset=".572" stop-color="#08a379"/><stop offset=".617" stop-color="#1daa3e"/><stop offset=".63" stop-color="#33ab36"/><stop offset=".642" stop-color="#33ab36"/><stop offset=".649" stop-color="#16aa41"/><stop offset=".675" stop-color="#079390"/><stop offset=".687" stop-color="#0c6eb0"/><stop offset=".707" stop-color="#8033af"/><stop offset=".713" stop-color="#a52fa9"/><stop offset=".726" stop-color="#b82b8a"/><stop offset=".745" stop-color="#b6361a"/><stop offset="1.002" stop-color="#b6361a"/></linearGradient><linearGradient id="g192" gradientUnits="userSpaceOnUse" x1="1896.0" y1="816.60" x2="1896.0" y2="971.34" gradientTransform="matrix(1 0.05834 0 1 0 -110.605)"><stop offset="0" stop-color="#b6361a"/><stop offset=".265" stop-color="#b6361a"/><stop offset=".271" stop-color="#b73234"/><stop offset=".284" stop-color="#b82b83"/><stop offset=".297" stop-color="#a82fa8"/><stop offset=".31" stop-color="#5646b0"/><stop offset=".323" stop-color="#0873ad"/><stop offset=".343" stop-color="#0aa473"/><stop offset=".355" stop-color="#15a946"/><stop offset=".362" stop-color="#39ac34"/><stop offset=".381" stop-color="#34ab35"/><stop offset=".401" stop-color="#13a84e"/><stop offset=".446" stop-color="#07958e"/><stop offset=".472" stop-color="#0872ae"/><stop offset=".498" stop-color="#5b44b0"/><stop offset=".517" stop-color="#1768b0"/><stop offset=".536" stop-color="#0781a0"/><stop offset=".575" stop-color="#0aa472"/><stop offset=".614" stop-color="#1aaa3e"/><stop offset=".627" stop-color="#39ac34"/><stop offset=".646" stop-color="#2bab38"/><stop offset=".659" stop-color="#0ea65f"/><stop offset=".679" stop-color="#078a98"/><stop offset=".685" stop-color="#0878a9"/><stop offset=".698" stop-color="#464fb0"/><stop offset=".711" stop-color="#9331ac"/><stop offset=".724" stop-color="#b82c98"/><stop offset=".743" stop-color="#b63427"/><stop offset=".769" stop-color="#b6361a"/><stop offset="1.002" stop-color="#b6361a"/></linearGradient><linearGradient id="g193" gradientUnits="userSpaceOnUse" x1="1912.0" y1="817.92" x2="1912.0" y2="971.76" gradientTransform="matrix(1 0.06095 0 1 0 -116.530)"><stop offset="0" stop-color="#b6361a"/><stop offset=".267" stop-color="#b6361a"/><stop offset=".286" stop-color="#b82b87"/><stop offset=".299" stop-color="#a230a9"/><stop offset=".312" stop-color="#4d4bb0"/><stop offset=".325" stop-color="#0878a8"/><stop offset=".338" stop-color="#06a183"/><stop offset=".358" stop-color="#19aa3f"/><stop offset=".364" stop-color="#3dac32"/><stop offset=".384" stop-color="#33ab36"/><stop offset=".403" stop-color="#12a850"/><stop offset=".449" stop-color="#079290"/><stop offset=".475" stop-color="#0a6fb0"/><stop offset=".494" stop-color="#4d4bb0"/><stop offset=".501" stop-color="#4b4cb0"/><stop offset=".52" stop-color="#0d6db0"/><stop offset=".572" stop-color="#09a475"/><stop offset=".611" stop-color="#16aa41"/><stop offset=".624" stop-color="#3aac33"/><stop offset=".644" stop-color="#3dac32"/><stop offset=".65" stop-color="#1aaa3f"/><stop offset=".676" stop-color="#07948f"/><stop offset=".689" stop-color="#096fb0"/><stop offset=".709" stop-color="#7f33af"/><stop offset=".715" stop-color="#a52fa9"/><stop offset=".728" stop-color="#b82b89"/><stop offset=".748" stop-color="#b6361a"/><stop offset="1.001" stop-color="#b6361a"/></linearGradient><linearGradient id="g194" gradientUnits="userSpaceOnUse" x1="1928.0" y1="819.20" x2="1928.0" y2="972.19" gradientTransform="matrix(1 0.06273 0 1 0 -120.943)"><stop offset="0" stop-color="#b6361a"/><stop offset=".268" stop-color="#b6361a"/><stop offset=".275" stop-color="#b73232"/><stop offset=".288" stop-color="#b82b83"/><stop offset=".301" stop-color="#a62fa8"/><stop offset=".314" stop-color="#4f4ab0"/><stop offset=".327" stop-color="#0878a8"/><stop offset=".34" stop-color="#06a282"/><stop offset=".36" stop-color="#1eaa3d"/><stop offset=".366" stop-color="#41ac31"/><stop offset=".386" stop-color="#34ab35"/><stop offset=".405" stop-color="#12a850"/><stop offset=".444" stop-color="#069a8a"/><stop offset=".477" stop-color="#0f6cb0"/><stop offset=".497" stop-color="#5845b0"/><stop offset=".523" stop-color="#0871af"/><stop offset=".575" stop-color="#0aa471"/><stop offset=".614" stop-color="#1faa3d"/><stop offset=".627" stop-color="#41ac31"/><stop offset=".647" stop-color="#39ac34"/><stop offset=".654" stop-color="#15a945"/><stop offset=".673" stop-color="#06a083"/><stop offset=".693" stop-color="#1768b0"/><stop offset=".712" stop-color="#8e32ac"/><stop offset=".726" stop-color="#b72c9b"/><stop offset=".745" stop-color="#b63428"/><stop offset=".765" stop-color="#b6361a"/><stop offset="1" stop-color="#b6361a"/></linearGradient><linearGradient id="g195" gradientUnits="userSpaceOnUse" x1="1944.0" y1="820.49" x2="1944.0" y2="972.61" gradientTransform="matrix(1 0.06402 0 1 0 -124.459)"><stop offset="0" stop-color="#b6361a"/><stop offset=".276" stop-color="#b6351f"/><stop offset=".296" stop-color="#b82c97"/><stop offset=".302" stop-color="#ab2ea5"/><stop offset=".316" stop-color="#5b44b0"/><stop offset=".329" stop-color="#0874ac"/><stop offset=".342" stop-color="#069e85"/><stop offset=".362" stop-color="#1baa3e"/><stop offset=".368" stop-color="#44ac30"/><stop offset=".388" stop-color="#38ac34"/><stop offset=".401" stop-color="#15a945"/><stop offset=".447" stop-color="#06998a"/><stop offset=".48" stop-color="#136ab0"/><stop offset=".5" stop-color="#5348b0"/><stop offset=".519" stop-color="#106cb0"/><stop offset=".572" stop-color="#09a376"/><stop offset=".611" stop-color="#16aa40"/><stop offset=".631" stop-color="#44ac30"/><stop offset=".644" stop-color="#44ac30"/><stop offset=".657" stop-color="#13a94b"/><stop offset=".677" stop-color="#069b89"/><stop offset=".69" stop-color="#0875ab"/><stop offset=".71" stop-color="#7436b0"/><stop offset=".723" stop-color="#af2ea1"/><stop offset=".736" stop-color="#b82a71"/><stop offset=".749" stop-color="#b6361a"/><stop offset="1" stop-color="#b6361a"/></linearGradient><linearGradient id="g196" gradientUnits="userSpaceOnUse" x1="1960.0" y1="821.81" x2="1960.0" y2="973.02" gradientTransform="matrix(1 0.06503 0 1 0 -127.450)"><stop offset="0" stop-color="#b6361a"/><stop offset=".278" stop-color="#b6361a"/><stop offset=".284" stop-color="#b73236"/><stop offset=".298" stop-color="#b82b88"/><stop offset=".311" stop-color="#9b30aa"/><stop offset=".324" stop-color="#3e53b0"/><stop offset=".331" stop-color="#106cb0"/><stop offset=".35" stop-color="#09a474"/><stop offset=".364" stop-color="#16aa42"/><stop offset=".37" stop-color="#47ac2f"/><stop offset=".39" stop-color="#3dac32"/><stop offset=".403" stop-color="#15aa43"/><stop offset=".45" stop-color="#06998b"/><stop offset=".476" stop-color="#0873ae"/><stop offset=".496" stop-color="#4a4db0"/><stop offset=".503" stop-color="#484eb0"/><stop offset=".522" stop-color="#096fb0"/><stop offset=".575" stop-color="#0aa472"/><stop offset=".615" stop-color="#1eaa3d"/><stop offset=".628" stop-color="#45ac2f"/><stop offset=".648" stop-color="#47ac2f"/><stop offset=".655" stop-color="#20aa3c"/><stop offset=".681" stop-color="#07958e"/><stop offset=".694" stop-color="#0970b0"/><stop offset=".714" stop-color="#8133af"/><stop offset=".721" stop-color="#a72fa8"/><stop offset=".734" stop-color="#b82b86"/><stop offset=".747" stop-color="#b73233"/><stop offset=".754" stop-color="#b6361a"/><stop offset="1" stop-color="#b6361a"/></linearGradient><linearGradient id="g197" gradientUnits="userSpaceOnUse" x1="1976.0" y1="823.16" x2="1976.0" y2="973.44" gradientTransform="matrix(1 0.06592 0 1 0 -130.255)"><stop offset="0" stop-color="#b6361a"/><stop offset=".286" stop-color="#b6361a"/><stop offset=".306" stop-color="#b82c95"/><stop offset=".313" stop-color="#ac2ea5"/><stop offset=".326" stop-color="#5547b0"/><stop offset=".333" stop-color="#2461b0"/><stop offset=".339" stop-color="#087aa7"/><stop offset=".353" stop-color="#07a37c"/><stop offset=".366" stop-color="#14a949"/><stop offset=".373" stop-color="#3bac33"/><stop offset=".386" stop-color="#49ac2e"/><stop offset=".399" stop-color="#2cab38"/><stop offset=".413" stop-color="#13a94b"/><stop offset=".452" stop-color="#06988b"/><stop offset=".479" stop-color="#0871af"/><stop offset=".499" stop-color="#5447b0"/><stop offset=".526" stop-color="#0872ae"/><stop offset=".572" stop-color="#09a377"/><stop offset=".612" stop-color="#16aa41"/><stop offset=".632" stop-color="#49ac2e"/><stop offset=".652" stop-color="#41ac31"/><stop offset=".659" stop-color="#16aa42"/><stop offset=".679" stop-color="#06a282"/><stop offset=".699" stop-color="#1569b0"/><stop offset=".719" stop-color="#8e32ac"/><stop offset=".732" stop-color="#b82c9a"/><stop offset=".752" stop-color="#b63520"/><stop offset="1" stop-color="#b6361a"/></linearGradient><linearGradient id="g198" gradientUnits="userSpaceOnUse" x1="1992.0" y1="824.55" x2="1992.0" y2="973.89" gradientTransform="matrix(1 0.06667 0 1 0 -132.809)"><stop offset="0" stop-color="#b6361a"/><stop offset=".288" stop-color="#b6361a"/><stop offset=".295" stop-color="#b6342a"/><stop offset=".308" stop-color="#b82b81"/><stop offset=".321" stop-color="#a030a9"/><stop offset=".335" stop-color="#3c54b0"/><stop offset=".342" stop-color="#0a6fb0"/><stop offset=".355" stop-color="#069f85"/><stop offset=".368" stop-color="#12a850"/><stop offset=".382" stop-color="#4bac2d"/><stop offset=".395" stop-color="#4aac2d"/><stop offset=".408" stop-color="#19aa3f"/><stop offset=".455" stop-color="#06988c"/><stop offset=".482" stop-color="#0c6eb0"/><stop offset=".502" stop-color="#5447b0"/><stop offset=".522" stop-color="#0e6db0"/><stop offset=".576" stop-color="#09a474"/><stop offset=".616" stop-color="#1caa3e"/><stop offset=".636" stop-color="#4bac2d"/><stop offset=".65" stop-color="#4bac2d"/><stop offset=".663" stop-color="#14a949"/><stop offset=".683" stop-color="#069c88"/><stop offset=".696" stop-color="#0876ab"/><stop offset=".717" stop-color="#7635b0"/><stop offset=".73" stop-color="#b02da1"/><stop offset=".743" stop-color="#b82a6d"/><stop offset=".757" stop-color="#b6361a"/><stop offset="1" stop-color="#b6361a"/></linearGradient><linearGradient id="g199" gradientUnits="userSpaceOnUse" x1="2008.0" y1="826.00" x2="2008.0" y2="974.38" gradientTransform="matrix(1 0.06733 0 1 0 -135.197)"><stop offset="0" stop-color="#b6361a"/><stop offset=".297" stop-color="#b6361a"/><stop offset=".317" stop-color="#b82c8e"/><stop offset=".323" stop-color="#ae2ea3"/><stop offset=".337" stop-color="#5447b0"/><stop offset=".344" stop-color="#2063b0"/><stop offset=".35" stop-color="#077da4"/><stop offset=".364" stop-color="#09a474"/><stop offset=".377" stop-color="#1faa3d"/><stop offset=".384" stop-color="#4dac2c"/><stop offset=".398" stop-color="#4dac2c"/><stop offset=".418" stop-color="#14a948"/><stop offset=".458" stop-color="#06968d"/><stop offset=".485" stop-color="#126bb0"/><stop offset=".499" stop-color="#484eb0"/><stop offset=".505" stop-color="#474eb0"/><stop offset=".526" stop-color="#0870b0"/><stop offset=".573" stop-color="#08a379"/><stop offset=".613" stop-color="#16aa42"/><stop offset=".634" stop-color="#4dac2d"/><stop offset=".654" stop-color="#4dac2c"/><stop offset=".66" stop-color="#20aa3c"/><stop offset=".687" stop-color="#07948f"/><stop offset=".701" stop-color="#0d6eb0"/><stop offset=".721" stop-color="#8732ae"/><stop offset=".728" stop-color="#aa2fa7"/><stop offset=".741" stop-color="#b82b7f"/><stop offset=".755" stop-color="#b63426"/><stop offset=".795" stop-color="#b6361a"/><stop offset="1" stop-color="#b6361a"/></linearGradient><linearGradient id="g200" gradientUnits="userSpaceOnUse" x1="2024.0" y1="827.45" x2="2024.0" y2="974.94" gradientTransform="matrix(1 0.06799 0 1 0 -137.616)"><stop offset="0" stop-color="#b6361a"/><stop offset=".305" stop-color="#b63520"/><stop offset=".319" stop-color="#b82b7c"/><stop offset=".332" stop-color="#a330a9"/><stop offset=".346" stop-color="#3757b0"/><stop offset=".353" stop-color="#0874ad"/><stop offset=".366" stop-color="#07a37d"/><stop offset=".38" stop-color="#15aa43"/><stop offset=".386" stop-color="#4ead2c"/><stop offset=".4" stop-color="#4fad2c"/><stop offset=".42" stop-color="#14a947"/><stop offset=".461" stop-color="#07958e"/><stop offset=".481" stop-color="#0874ac"/><stop offset=".502" stop-color="#5348b0"/><stop offset=".529" stop-color="#0874ad"/><stop offset=".576" stop-color="#09a475"/><stop offset=".617" stop-color="#1baa3e"/><stop offset=".637" stop-color="#4fad2c"/><stop offset=".651" stop-color="#4fad2c"/><stop offset=".658" stop-color="#3dac32"/><stop offset=".664" stop-color="#15aa44"/><stop offset=".685" stop-color="#069f85"/><stop offset=".698" stop-color="#0879a8"/><stop offset=".712" stop-color="#474eb0"/><stop offset=".725" stop-color="#9831ab"/><stop offset=".739" stop-color="#b82c90"/><stop offset=".759" stop-color="#b6361a"/><stop offset="1" stop-color="#b6361a"/></linearGradient><linearGradient id="g201" gradientUnits="userSpaceOnUse" x1="2040.0" y1="828.88" x2="2040.0" y2="975.57" gradientTransform="matrix(1 0.06856 0 1 0 -139.855)"><stop offset="0" stop-color="#b6361a"/><stop offset=".307" stop-color="#b6361a"/><stop offset=".327" stop-color="#b82b8c"/><stop offset=".334" stop-color="#ae2ea3"/><stop offset=".348" stop-color="#4d4bb0"/><stop offset=".354" stop-color="#1569b0"/><stop offset=".368" stop-color="#069f85"/><stop offset=".382" stop-color="#14a949"/><stop offset=".389" stop-color="#42ac30"/><stop offset=".402" stop-color="#50ad2b"/><stop offset=".423" stop-color="#15a946"/><stop offset=".464" stop-color="#07948f"/><stop offset=".484" stop-color="#0872af"/><stop offset=".504" stop-color="#5348b0"/><stop offset=".525" stop-color="#0c6eb0"/><stop offset=".573" stop-color="#08a37a"/><stop offset=".614" stop-color="#15aa42"/><stop offset=".634" stop-color="#4cac2d"/><stop offset=".654" stop-color="#50ad2b"/><stop offset=".668" stop-color="#13a84d"/><stop offset=".689" stop-color="#06978c"/><stop offset=".702" stop-color="#0870b0"/><stop offset=".723" stop-color="#8433ae"/><stop offset=".729" stop-color="#a92fa7"/><stop offset=".743" stop-color="#b82b80"/><stop offset=".757" stop-color="#b63426"/><stop offset=".798" stop-color="#b6361a"/><stop offset="1.002" stop-color="#b6361a"/></linearGradient><linearGradient id="g202" gradientUnits="userSpaceOnUse" x1="2056.0" y1="830.38" x2="2056.0" y2="976.26" gradientTransform="matrix(1 0.06919 0 1 0 -142.260)"><stop offset="0" stop-color="#b6361a"/><stop offset=".308" stop-color="#b6361a"/><stop offset=".315" stop-color="#b63429"/><stop offset=".329" stop-color="#b82b82"/><stop offset=".336" stop-color="#b32d9e"/><stop offset=".343" stop-color="#9431ab"/><stop offset=".356" stop-color="#2063b0"/><stop offset=".363" stop-color="#0780a1"/><stop offset=".377" stop-color="#0ca56b"/><stop offset=".384" stop-color="#13a94c"/><stop offset=".391" stop-color="#3fac31"/><stop offset=".404" stop-color="#52ad2b"/><stop offset=".425" stop-color="#15a946"/><stop offset=".466" stop-color="#079291"/><stop offset=".487" stop-color="#0c6eb0"/><stop offset=".5" stop-color="#464fb0"/><stop offset=".507" stop-color="#464fb0"/><stop offset=".528" stop-color="#0872ae"/><stop offset=".576" stop-color="#09a476"/><stop offset=".617" stop-color="#1caa3e"/><stop offset=".637" stop-color="#52ad2b"/><stop offset=".651" stop-color="#52ad2b"/><stop offset=".658" stop-color="#42ac30"/><stop offset=".665" stop-color="#16aa42"/><stop offset=".685" stop-color="#06a084"/><stop offset=".699" stop-color="#0879a8"/><stop offset=".713" stop-color="#494db0"/><stop offset=".727" stop-color="#9b30aa"/><stop offset=".74" stop-color="#b82b8c"/><stop offset=".761" stop-color="#b6361a"/><stop offset="1.001" stop-color="#b6361a"/></linearGradient><linearGradient id="g203" gradientUnits="userSpaceOnUse" x1="2072.0" y1="831.99" x2="2072.0" y2="977.01" gradientTransform="matrix(1 0.06974 0 1 0 -144.498)"><stop offset="0" stop-color="#b6361a"/><stop offset=".31" stop-color="#b6361a"/><stop offset=".317" stop-color="#b63428"/><stop offset=".331" stop-color="#b82b82"/><stop offset=".338" stop-color="#b32d9e"/><stop offset=".345" stop-color="#9331ac"/><stop offset=".359" stop-color="#1c65b0"/><stop offset=".372" stop-color="#069e85"/><stop offset=".386" stop-color="#14a947"/><stop offset=".393" stop-color="#4cac2d"/><stop offset=".407" stop-color="#54ad2a"/><stop offset=".428" stop-color="#14a948"/><stop offset=".462" stop-color="#069a8a"/><stop offset=".483" stop-color="#0875ab"/><stop offset=".496" stop-color="#3459b0"/><stop offset=".503" stop-color="#5746b0"/><stop offset=".524" stop-color="#0d6db0"/><stop offset=".572" stop-color="#08a379"/><stop offset=".614" stop-color="#16aa40"/><stop offset=".634" stop-color="#53ad2a"/><stop offset=".655" stop-color="#53ad2a"/><stop offset=".662" stop-color="#23ab3b"/><stop offset=".683" stop-color="#07a37e"/><stop offset=".703" stop-color="#146ab0"/><stop offset=".724" stop-color="#9231ac"/><stop offset=".738" stop-color="#b82c93"/><stop offset=".759" stop-color="#b6361a"/><stop offset="1" stop-color="#b6361a"/></linearGradient><linearGradient id="g204" gradientUnits="userSpaceOnUse" x1="2088.0" y1="833.72" x2="2088.0" y2="977.80" gradientTransform="matrix(1 0.07042 0 1 0 -147.039)"><stop offset="0" stop-color="#b6361a"/><stop offset=".312" stop-color="#b6361a"/><stop offset=".333" stop-color="#b82b8c"/><stop offset=".34" stop-color="#ad2ea4"/><stop offset=".347" stop-color="#7f33af"/><stop offset=".361" stop-color="#0871af"/><stop offset=".375" stop-color="#08a379"/><stop offset=".389" stop-color="#25ab3b"/><stop offset=".396" stop-color="#55ad2a"/><stop offset=".409" stop-color="#4ead2c"/><stop offset=".423" stop-color="#16aa41"/><stop offset=".465" stop-color="#07948f"/><stop offset=".486" stop-color="#0c6eb0"/><stop offset=".5" stop-color="#484eb0"/><stop offset=".507" stop-color="#4350b0"/><stop offset=".527" stop-color="#0873ad"/><stop offset=".576" stop-color="#0aa472"/><stop offset=".611" stop-color="#16aa42"/><stop offset=".632" stop-color="#50ad2b"/><stop offset=".652" stop-color="#55ad2a"/><stop offset=".666" stop-color="#13a84d"/><stop offset=".687" stop-color="#07948f"/><stop offset=".701" stop-color="#116bb0"/><stop offset=".722" stop-color="#9131ac"/><stop offset=".736" stop-color="#b82c93"/><stop offset=".757" stop-color="#b6361a"/><stop offset="1" stop-color="#b6361a"/></linearGradient><linearGradient id="g205" gradientUnits="userSpaceOnUse" x1="2104.0" y1="835.54" x2="2104.0" y2="978.62" gradientTransform="matrix(1 0.07064 0 1 0 -148.633)"><stop offset="0" stop-color="#b6361a"/><stop offset=".308" stop-color="#b6361a"/><stop offset=".315" stop-color="#b63428"/><stop offset=".328" stop-color="#b82b82"/><stop offset=".335" stop-color="#b32d9f"/><stop offset=".342" stop-color="#9131ac"/><stop offset=".356" stop-color="#1867b0"/><stop offset=".37" stop-color="#06a183"/><stop offset=".384" stop-color="#15aa43"/><stop offset=".391" stop-color="#56ad29"/><stop offset=".405" stop-color="#57ad29"/><stop offset=".419" stop-color="#1faa3d"/><stop offset=".461" stop-color="#06988c"/><stop offset=".482" stop-color="#0873ae"/><stop offset=".503" stop-color="#4d4bb0"/><stop offset=".524" stop-color="#0871af"/><stop offset=".573" stop-color="#0aa473"/><stop offset=".608" stop-color="#16aa42"/><stop offset=".629" stop-color="#51ad2b"/><stop offset=".65" stop-color="#57ad29"/><stop offset=".664" stop-color="#13a84d"/><stop offset=".685" stop-color="#079390"/><stop offset=".699" stop-color="#1569b0"/><stop offset=".72" stop-color="#9831ab"/><stop offset=".734" stop-color="#b82b8d"/><stop offset=".755" stop-color="#b6361a"/><stop offset="1" stop-color="#b6361a"/></linearGradient><linearGradient id="g206" gradientUnits="userSpaceOnUse" x1="2120.0" y1="837.41" x2="2120.0" y2="979.46" gradientTransform="matrix(1 0.07029 0 1 0 -149.017)"><stop offset="0" stop-color="#b6361a"/><stop offset=".31" stop-color="#b63523"/><stop offset=".324" stop-color="#b82b7e"/><stop offset=".331" stop-color="#b52d9d"/><stop offset=".338" stop-color="#9731ab"/><stop offset=".352" stop-color="#1f63b0"/><stop offset=".359" stop-color="#0781a0"/><stop offset=".366" stop-color="#069e86"/><stop offset=".38" stop-color="#14a947"/><stop offset=".387" stop-color="#4cac2d"/><stop offset=".401" stop-color="#58ad29"/><stop offset=".422" stop-color="#14a946"/><stop offset=".458" stop-color="#069b89"/><stop offset=".479" stop-color="#0876ab"/><stop offset=".493" stop-color="#3359b0"/><stop offset=".5" stop-color="#5447b0"/><stop offset=".521" stop-color="#0870b0"/><stop offset=".57" stop-color="#0aa473"/><stop offset=".605" stop-color="#16aa41"/><stop offset=".627" stop-color="#54ad2a"/><stop offset=".648" stop-color="#57ad29"/><stop offset=".655" stop-color="#24ab3b"/><stop offset=".676" stop-color="#06a281"/><stop offset=".69" stop-color="#0879a7"/><stop offset=".704" stop-color="#4e4bb0"/><stop offset=".718" stop-color="#a62fa8"/><stop offset=".732" stop-color="#b82b81"/><stop offset=".746" stop-color="#b63427"/><stop offset=".774" stop-color="#b6361a"/><stop offset="1" stop-color="#b6361a"/></linearGradient><linearGradient id="g207" gradientUnits="userSpaceOnUse" x1="2136.0" y1="839.32" x2="2136.0" y2="980.32" gradientTransform="matrix(1 0.07017 0 1 0 -149.890)"><stop offset="0" stop-color="#b6361a"/><stop offset=".305" stop-color="#b63524"/><stop offset=".319" stop-color="#b82b7f"/><stop offset=".326" stop-color="#b42d9d"/><stop offset=".333" stop-color="#9731ab"/><stop offset=".348" stop-color="#2063b0"/><stop offset=".355" stop-color="#0781a0"/><stop offset=".369" stop-color="#0ca568"/><stop offset=".376" stop-color="#14a948"/><stop offset=".383" stop-color="#49ac2e"/><stop offset=".397" stop-color="#59ad28"/><stop offset=".418" stop-color="#15a944"/><stop offset=".461" stop-color="#079192"/><stop offset=".482" stop-color="#116bb0"/><stop offset=".496" stop-color="#4e4ab0"/><stop offset=".518" stop-color="#0a6fb0"/><stop offset=".567" stop-color="#0aa472"/><stop offset=".603" stop-color="#18aa3f"/><stop offset=".624" stop-color="#59ad28"/><stop offset=".645" stop-color="#4bac2d"/><stop offset=".652" stop-color="#17aa40"/><stop offset=".674" stop-color="#069c87"/><stop offset=".688" stop-color="#0872af"/><stop offset=".709" stop-color="#8d32ac"/><stop offset=".716" stop-color="#ad2ea3"/><stop offset=".73" stop-color="#b82a71"/><stop offset=".745" stop-color="#b6361a"/><stop offset="1" stop-color="#b6361a"/></linearGradient><linearGradient id="g208" gradientUnits="userSpaceOnUse" x1="2152.0" y1="841.25" x2="2152.0" y2="981.20" gradientTransform="matrix(1 0.07032 0 1 0 -151.323)"><stop offset="0" stop-color="#b6361a"/><stop offset=".293" stop-color="#b6361a"/><stop offset=".3" stop-color="#b63429"/><stop offset=".314" stop-color="#b82b83"/><stop offset=".322" stop-color="#b22d9f"/><stop offset=".329" stop-color="#9131ac"/><stop offset=".343" stop-color="#1b66b0"/><stop offset=".357" stop-color="#069e85"/><stop offset=".372" stop-color="#14a947"/><stop offset=".379" stop-color="#4bac2d"/><stop offset=".393" stop-color="#5aad28"/><stop offset=".414" stop-color="#15aa43"/><stop offset=".457" stop-color="#079390"/><stop offset=".479" stop-color="#0b6eb0"/><stop offset=".493" stop-color="#474eb0"/><stop offset=".514" stop-color="#0a6fb0"/><stop offset=".564" stop-color="#0aa471"/><stop offset=".6" stop-color="#1daa3d"/><stop offset=".622" stop-color="#5aad28"/><stop offset=".636" stop-color="#5aad28"/><stop offset=".65" stop-color="#14a947"/><stop offset=".672" stop-color="#07948f"/><stop offset=".686" stop-color="#1867b0"/><stop offset=".7" stop-color="#7635b0"/><stop offset=".707" stop-color="#a330a9"/><stop offset=".722" stop-color="#b82b81"/><stop offset=".736" stop-color="#b63427"/><stop offset=".765" stop-color="#b6361a"/><stop offset="1" stop-color="#b6361a"/></linearGradient><linearGradient id="g209" gradientUnits="userSpaceOnUse" x1="2168.0" y1="843.19" x2="2168.0" y2="982.08" gradientTransform="matrix(1 0.07072 0 1 0 -153.327)"><stop offset="0" stop-color="#b6361a"/><stop offset=".288" stop-color="#b6361a"/><stop offset=".295" stop-color="#b73234"/><stop offset=".31" stop-color="#b82b89"/><stop offset=".317" stop-color="#af2ea2"/><stop offset=".331" stop-color="#4d4bb0"/><stop offset=".338" stop-color="#126ab0"/><stop offset=".353" stop-color="#06a282"/><stop offset=".367" stop-color="#15aa44"/><stop offset=".374" stop-color="#50ad2b"/><stop offset=".389" stop-color="#5bad27"/><stop offset=".41" stop-color="#15aa42"/><stop offset=".454" stop-color="#07948f"/><stop offset=".475" stop-color="#0870b0"/><stop offset=".49" stop-color="#4152b0"/><stop offset=".504" stop-color="#2063b0"/><stop offset=".518" stop-color="#0879a8"/><stop offset=".562" stop-color="#0ba46f"/><stop offset=".598" stop-color="#23ab3b"/><stop offset=".619" stop-color="#5bad27"/><stop offset=".634" stop-color="#5bad27"/><stop offset=".641" stop-color="#2bab39"/><stop offset=".655" stop-color="#0ca569"/><stop offset=".67" stop-color="#078b97"/><stop offset=".677" stop-color="#0875ab"/><stop offset=".698" stop-color="#8c32ad"/><stop offset=".706" stop-color="#ad2ea3"/><stop offset=".72" stop-color="#b82a6f"/><stop offset=".734" stop-color="#b6361a"/><stop offset="1.001" stop-color="#b6361a"/></linearGradient><linearGradient id="g210" gradientUnits="userSpaceOnUse" x1="2184.0" y1="845.16" x2="2184.0" y2="982.98" gradientTransform="matrix(1 0.07139 0 1 0 -155.912)"><stop offset="0" stop-color="#b6361a"/><stop offset=".283" stop-color="#b6361a"/><stop offset=".305" stop-color="#b82c93"/><stop offset=".312" stop-color="#aa2fa6"/><stop offset=".319" stop-color="#7934b0"/><stop offset=".334" stop-color="#0871af"/><stop offset=".348" stop-color="#07a37d"/><stop offset=".363" stop-color="#17aa40"/><stop offset=".37" stop-color="#59ad28"/><stop offset=".385" stop-color="#5cad27"/><stop offset=".406" stop-color="#15aa42"/><stop offset=".45" stop-color="#06968d"/><stop offset=".472" stop-color="#0872ae"/><stop offset=".486" stop-color="#3a55b0"/><stop offset=".493" stop-color="#3c54b0"/><stop offset=".508" stop-color="#0b6eb0"/><stop offset=".551" stop-color="#08a379"/><stop offset=".588" stop-color="#15aa42"/><stop offset=".609" stop-color="#57ad29"/><stop offset=".631" stop-color="#53ad2a"/><stop offset=".638" stop-color="#1baa3e"/><stop offset=".66" stop-color="#069a8a"/><stop offset=".675" stop-color="#106cb0"/><stop offset=".689" stop-color="#7237b0"/><stop offset=".697" stop-color="#a130a9"/><stop offset=".711" stop-color="#b82b81"/><stop offset=".726" stop-color="#b63427"/><stop offset=".755" stop-color="#b6361a"/><stop offset="1.001" stop-color="#b6361a"/></linearGradient><linearGradient id="g211" gradientUnits="userSpaceOnUse" x1="2200.0" y1="847.13" x2="2200.0" y2="983.89" gradientTransform="matrix(1 0.07231 0 1 0 -159.092)"><stop offset="0" stop-color="#b6361a"/><stop offset=".278" stop-color="#b63521"/><stop offset=".292" stop-color="#b82b7d"/><stop offset=".3" stop-color="#b62c9c"/><stop offset=".307" stop-color="#9e30aa"/><stop offset=".322" stop-color="#2f5bb0"/><stop offset=".329" stop-color="#0878a8"/><stop offset=".344" stop-color="#09a476"/><stop offset=".358" stop-color="#23ab3b"/><stop offset=".366" stop-color="#5dad27"/><stop offset=".38" stop-color="#5dad27"/><stop offset=".402" stop-color="#15aa43"/><stop offset=".446" stop-color="#06978c"/><stop offset=".468" stop-color="#0874ac"/><stop offset=".49" stop-color="#3f53b0"/><stop offset=".505" stop-color="#0c6eb0"/><stop offset=".548" stop-color="#08a378"/><stop offset=".585" stop-color="#16aa41"/><stop offset=".607" stop-color="#5cad27"/><stop offset=".622" stop-color="#5dad27"/><stop offset=".629" stop-color="#47ac2f"/><stop offset=".636" stop-color="#15aa44"/><stop offset=".658" stop-color="#07938f"/><stop offset=".665" stop-color="#087ca5"/><stop offset=".673" stop-color="#1f64b0"/><stop offset=".687" stop-color="#8333ae"/><stop offset=".695" stop-color="#ab2ea5"/><stop offset=".709" stop-color="#b82a74"/><stop offset=".724" stop-color="#b6361a"/><stop offset="1.002" stop-color="#b6361a"/></linearGradient><linearGradient id="g212" gradientUnits="userSpaceOnUse" x1="2216.0" y1="849.12" x2="2216.0" y2="984.81" gradientTransform="matrix(1 0.07361 0 1 0 -163.114)"><stop offset="0" stop-color="#b6361a"/><stop offset=".265" stop-color="#b6361a"/><stop offset=".287" stop-color="#b82b8d"/><stop offset=".295" stop-color="#ae2ea3"/><stop offset=".31" stop-color="#5049b0"/><stop offset=".317" stop-color="#1967b0"/><stop offset=".332" stop-color="#069b88"/><stop offset=".346" stop-color="#12a84f"/><stop offset=".361" stop-color="#5ead27"/><stop offset=".376" stop-color="#5dad27"/><stop offset=".398" stop-color="#15aa44"/><stop offset=".442" stop-color="#06978c"/><stop offset=".472" stop-color="#146ab0"/><stop offset=".486" stop-color="#4351b0"/><stop offset=".501" stop-color="#0e6db0"/><stop offset=".545" stop-color="#08a378"/><stop offset=".582" stop-color="#16aa40"/><stop offset=".604" stop-color="#5ead27"/><stop offset=".619" stop-color="#5ead27"/><stop offset=".634" stop-color="#14a946"/><stop offset=".649" stop-color="#08a37c"/><stop offset=".663" stop-color="#0879a8"/><stop offset=".678" stop-color="#5a44b0"/><stop offset=".693" stop-color="#ae2ea3"/><stop offset=".707" stop-color="#b82a6d"/><stop offset=".722" stop-color="#b6361a"/><stop offset="1.002" stop-color="#b6361a"/></linearGradient><linearGradient id="g213" gradientUnits="userSpaceOnUse" x1="2232.0" y1="851.13" x2="2232.0" y2="985.75" gradientTransform="matrix(1 0.07528 0 1 0 -168.030)"><stop offset="0" stop-color="#b6361a"/><stop offset=".253" stop-color="#b6361a"/><stop offset=".26" stop-color="#b63425"/><stop offset=".275" stop-color="#b82b80"/><stop offset=".29" stop-color="#9d30aa"/><stop offset=".305" stop-color="#3459b0"/><stop offset=".312" stop-color="#0874ac"/><stop offset=".327" stop-color="#07a37d"/><stop offset=".342" stop-color="#15a945"/><stop offset=".349" stop-color="#49ac2e"/><stop offset=".357" stop-color="#5ead26"/><stop offset=".371" stop-color="#57ad29"/><stop offset=".394" stop-color="#15a945"/><stop offset=".438" stop-color="#06988b"/><stop offset=".468" stop-color="#106cb0"/><stop offset=".483" stop-color="#484eb0"/><stop offset=".498" stop-color="#116bb0"/><stop offset=".542" stop-color="#08a37a"/><stop offset=".579" stop-color="#16aa41"/><stop offset=".602" stop-color="#5dad27"/><stop offset=".617" stop-color="#5ead26"/><stop offset=".624" stop-color="#44ac30"/><stop offset=".631" stop-color="#15a946"/><stop offset=".646" stop-color="#08a37b"/><stop offset=".661" stop-color="#0879a8"/><stop offset=".676" stop-color="#5b44b0"/><stop offset=".691" stop-color="#ae2ea2"/><stop offset=".706" stop-color="#b82a6c"/><stop offset=".721" stop-color="#b6361a"/><stop offset="1.003" stop-color="#b6361a"/></linearGradient><linearGradient id="g214" gradientUnits="userSpaceOnUse" x1="2248.0" y1="853.16" x2="2248.0" y2="986.69" gradientTransform="matrix(1 0.07745 0 1 0 -174.108)"><stop offset="0" stop-color="#b6361a"/><stop offset=".247" stop-color="#b6361a"/><stop offset=".27" stop-color="#b82c96"/><stop offset=".277" stop-color="#aa2fa6"/><stop offset=".285" stop-color="#7e33af"/><stop offset=".3" stop-color="#1768b0"/><stop offset=".315" stop-color="#06998a"/><stop offset=".337" stop-color="#24ab3b"/><stop offset=".344" stop-color="#5ead26"/><stop offset=".367" stop-color="#51ad2b"/><stop offset=".389" stop-color="#14a947"/><stop offset=".434" stop-color="#06988b"/><stop offset=".464" stop-color="#0c6eb0"/><stop offset=".479" stop-color="#4151b0"/><stop offset=".502" stop-color="#0874ac"/><stop offset=".547" stop-color="#0aa470"/><stop offset=".577" stop-color="#15aa43"/><stop offset=".599" stop-color="#59ad28"/><stop offset=".614" stop-color="#5ead26"/><stop offset=".622" stop-color="#4cac2d"/><stop offset=".629" stop-color="#16aa42"/><stop offset=".652" stop-color="#079390"/><stop offset=".659" stop-color="#087ba6"/><stop offset=".666" stop-color="#2362b0"/><stop offset=".681" stop-color="#8832ad"/><stop offset=".689" stop-color="#ad2ea3"/><stop offset=".704" stop-color="#b82a6f"/><stop offset=".719" stop-color="#b6361a"/><stop offset="1.003" stop-color="#b6361a"/></linearGradient><linearGradient id="g215" gradientUnits="userSpaceOnUse" x1="2264.0" y1="855.20" x2="2264.0" y2="921.56" gradientTransform="matrix(1 0.05372 0 1 0 -121.626)"><stop offset="0" stop-color="#b6361a"/><stop offset=".467" stop-color="#b6361a"/><stop offset=".482" stop-color="#b73237"/><stop offset=".512" stop-color="#b82b8b"/><stop offset=".527" stop-color="#b02ea1"/><stop offset=".542" stop-color="#9131ac"/><stop offset=".588" stop-color="#0875ab"/><stop offset=".618" stop-color="#06a280"/><stop offset=".648" stop-color="#13a94c"/><stop offset=".678" stop-color="#5aad28"/><stop offset=".708" stop-color="#5aad28"/><stop offset=".753" stop-color="#18aa3f"/><stop offset=".859" stop-color="#06988b"/><stop offset=".919" stop-color="#096fb0"/><stop offset=".949" stop-color="#3a55b0"/><stop offset=".964" stop-color="#3a55b0"/><stop offset="1" stop-color="#0874ad"/></linearGradient><linearGradient id="g216" gradientUnits="userSpaceOnUse" x1="2264.0" y1="917.27" x2="2264.0" y2="987.65" gradientTransform="matrix(1 0.08405 0 1 0 -190.280)"><stop offset="0" stop-color="#2162b0"/><stop offset=".014" stop-color="#3d54b0"/><stop offset=".028" stop-color="#3857b0"/><stop offset=".057" stop-color="#0871af"/><stop offset=".142" stop-color="#09a474"/><stop offset=".213" stop-color="#21aa3c"/><stop offset=".242" stop-color="#52ad2b"/><stop offset=".284" stop-color="#52ad2b"/><stop offset=".298" stop-color="#17aa40"/><stop offset=".341" stop-color="#07958e"/><stop offset=".355" stop-color="#077ea3"/><stop offset=".369" stop-color="#1e64b0"/><stop offset=".398" stop-color="#8433ae"/><stop offset=".412" stop-color="#ac2ea5"/><stop offset=".44" stop-color="#b82a72"/><stop offset=".469" stop-color="#b6361a"/><stop offset="1" stop-color="#b6361a"/></linearGradient><linearGradient id="g217" gradientUnits="userSpaceOnUse" x1="2280.0" y1="857.27" x2="2280.0" y2="922.92" gradientTransform="matrix(1 0.05948 0 1 0 -135.620)"><stop offset="0" stop-color="#b6361a"/><stop offset=".457" stop-color="#b63521"/><stop offset=".487" stop-color="#b82b7d"/><stop offset=".503" stop-color="#b62c9c"/><stop offset=".518" stop-color="#a82fa8"/><stop offset=".533" stop-color="#7b34b0"/><stop offset=".564" stop-color="#1b66b0"/><stop offset=".579" stop-color="#077da4"/><stop offset=".609" stop-color="#08a37a"/><stop offset=".64" stop-color="#14a948"/><stop offset=".655" stop-color="#3bac33"/><stop offset=".67" stop-color="#4fad2c"/><stop offset=".701" stop-color="#4ead2c"/><stop offset=".746" stop-color="#15a945"/><stop offset=".853" stop-color="#06968d"/><stop offset=".914" stop-color="#0a6fb0"/><stop offset=".96" stop-color="#4c4bb0"/><stop offset="1.005" stop-color="#0874ac"/></linearGradient><linearGradient id="g218" gradientUnits="userSpaceOnUse" x1="2280.0" y1="918.56" x2="2280.0" y2="988.62" gradientTransform="matrix(1 0.08980 0 1 0 -204.739)"><stop offset="0" stop-color="#2560b0"/><stop offset=".014" stop-color="#3f52b0"/><stop offset=".029" stop-color="#4251b0"/><stop offset=".057" stop-color="#0f6cb0"/><stop offset=".143" stop-color="#08a379"/><stop offset=".214" stop-color="#16aa41"/><stop offset=".257" stop-color="#4fad2c"/><stop offset=".285" stop-color="#4aac2d"/><stop offset=".3" stop-color="#15aa43"/><stop offset=".343" stop-color="#07948f"/><stop offset=".357" stop-color="#087ca5"/><stop offset=".371" stop-color="#2063b0"/><stop offset=".4" stop-color="#8533ae"/><stop offset=".414" stop-color="#ac2ea5"/><stop offset=".442" stop-color="#b82a72"/><stop offset=".471" stop-color="#b6361a"/><stop offset="1" stop-color="#b6361a"/></linearGradient><linearGradient id="g219" gradientUnits="userSpaceOnUse" x1="2289.0" y1="859.38" x2="2289.0" y2="923.10" gradientTransform="matrix(1 0.06371 0 1 0 -145.822)"><stop offset="0" stop-color="#b6361a"/><stop offset=".439" stop-color="#b6361a"/><stop offset=".487" stop-color="#b82c97"/><stop offset=".502" stop-color="#ab2ea5"/><stop offset=".534" stop-color="#5a44b0"/><stop offset=".565" stop-color="#0874ac"/><stop offset=".596" stop-color="#069f85"/><stop offset=".644" stop-color="#1eaa3d"/><stop offset=".659" stop-color="#45ac2f"/><stop offset=".706" stop-color="#38ac34"/><stop offset=".738" stop-color="#15a945"/><stop offset=".848" stop-color="#06998b"/><stop offset=".91" stop-color="#0873ad"/><stop offset=".957" stop-color="#4450b0"/><stop offset=".973" stop-color="#484eb0"/><stop offset="1.005" stop-color="#1469b0"/></linearGradient><linearGradient id="g220" gradientUnits="userSpaceOnUse" x1="2289.0" y1="919.92" x2="2289.0" y2="988.74" gradientTransform="matrix(1 0.09278 0 1 0 -212.367)"><stop offset="0" stop-color="#3558b0"/><stop offset=".015" stop-color="#5746b0"/><stop offset=".058" stop-color="#0970b0"/><stop offset=".145" stop-color="#09a377"/><stop offset=".218" stop-color="#18aa3f"/><stop offset=".247" stop-color="#45ac2f"/><stop offset=".276" stop-color="#45ac2f"/><stop offset=".291" stop-color="#21aa3c"/><stop offset=".334" stop-color="#069b89"/><stop offset=".363" stop-color="#106cb0"/><stop offset=".392" stop-color="#7436b0"/><stop offset=".407" stop-color="#a32fa9"/><stop offset=".436" stop-color="#b82b7f"/><stop offset=".465" stop-color="#b63523"/><stop offset="1.003" stop-color="#b6361a"/></linearGradient><linearGradient id="g221" gradientUnits="userSpaceOnUse" x1="2293.0" y1="859.65" x2="2293.0" y2="923.63" gradientTransform="matrix(1 0.06589 0 1 0 -151.087)"><stop offset="0" stop-color="#b6361a"/><stop offset=".438" stop-color="#b6361a"/><stop offset=".469" stop-color="#b82b78"/><stop offset=".484" stop-color="#b82c9a"/><stop offset=".5" stop-color="#aa2fa6"/><stop offset=".531" stop-color="#5845b0"/><stop offset=".563" stop-color="#0875ac"/><stop offset=".594" stop-color="#069f85"/><stop offset=".641" stop-color="#1baa3e"/><stop offset=".656" stop-color="#40ac31"/><stop offset=".703" stop-color="#33ab36"/><stop offset=".735" stop-color="#14a947"/><stop offset=".844" stop-color="#06988b"/><stop offset=".906" stop-color="#0873ad"/><stop offset=".969" stop-color="#4e4ab0"/><stop offset="1" stop-color="#1967b0"/></linearGradient><linearGradient id="g222" gradientUnits="userSpaceOnUse" x1="2293.0" y1="920.10" x2="2293.0" y2="989.11" gradientTransform="matrix(1 0.09402 0 1 0 -215.590)"><stop offset="0" stop-color="#3359b0"/><stop offset=".014" stop-color="#5248b0"/><stop offset=".058" stop-color="#106cb0"/><stop offset=".145" stop-color="#08a37b"/><stop offset=".217" stop-color="#15aa44"/><stop offset=".246" stop-color="#3eac32"/><stop offset=".275" stop-color="#40ac31"/><stop offset=".304" stop-color="#12a853"/><stop offset=".333" stop-color="#069e86"/><stop offset=".362" stop-color="#096fb0"/><stop offset=".391" stop-color="#6c3ab0"/><stop offset=".406" stop-color="#9c30aa"/><stop offset=".435" stop-color="#b82b84"/><stop offset=".464" stop-color="#b6332b"/><stop offset=".493" stop-color="#b6361a"/><stop offset="1" stop-color="#b6361a"/></linearGradient><linearGradient id="g223" gradientUnits="userSpaceOnUse" x1="2299.0" y1="860.46" x2="2299.0" y2="924.19" gradientTransform="matrix(1 0.07058 0 1 0 -162.271)"><stop offset="0" stop-color="#b6361a"/><stop offset=".424" stop-color="#b6361a"/><stop offset=".439" stop-color="#b73235"/><stop offset=".455" stop-color="#b82a68"/><stop offset=".486" stop-color="#b12da0"/><stop offset=".502" stop-color="#9b30aa"/><stop offset=".533" stop-color="#4450b0"/><stop offset=".549" stop-color="#1867b0"/><stop offset=".581" stop-color="#079291"/><stop offset=".612" stop-color="#0da565"/><stop offset=".643" stop-color="#2aab39"/><stop offset=".675" stop-color="#38ac34"/><stop offset=".69" stop-color="#38ab34"/><stop offset=".722" stop-color="#15aa44"/><stop offset=".832" stop-color="#069c88"/><stop offset=".91" stop-color="#0b6fb0"/><stop offset=".957" stop-color="#4f4ab0"/><stop offset=".973" stop-color="#4b4cb0"/><stop offset="1.004" stop-color="#1967b0"/></linearGradient><linearGradient id="g224" gradientUnits="userSpaceOnUse" x1="2299.0" y1="920.63" x2="2299.0" y2="989.48" gradientTransform="matrix(1 0.09611 0 1 0 -220.947)"><stop offset="0" stop-color="#3657b0"/><stop offset=".015" stop-color="#5547b0"/><stop offset=".073" stop-color="#0874ac"/><stop offset=".16" stop-color="#0aa473"/><stop offset=".232" stop-color="#1eaa3d"/><stop offset=".247" stop-color="#35ab35"/><stop offset=".276" stop-color="#38ac34"/><stop offset=".305" stop-color="#11a756"/><stop offset=".334" stop-color="#069b88"/><stop offset=".363" stop-color="#0e6db0"/><stop offset=".392" stop-color="#7038b0"/><stop offset=".407" stop-color="#9f30a9"/><stop offset=".436" stop-color="#b82b82"/><stop offset=".465" stop-color="#b63429"/><stop offset=".494" stop-color="#b6361a"/><stop offset="1.002" stop-color="#b6361a"/></linearGradient><linearGradient id="g225" gradientUnits="userSpaceOnUse" x1="2305.0" y1="861.27" x2="2305.0" y2="924.76" gradientTransform="matrix(1 0.08943 0 1 0 -206.126)"><stop offset="0" stop-color="#b6361a"/><stop offset=".425" stop-color="#b6361a"/><stop offset=".473" stop-color="#b82c98"/><stop offset=".488" stop-color="#ac2ea5"/><stop offset=".52" stop-color="#6041b0"/><stop offset=".551" stop-color="#0a6fb0"/><stop offset=".599" stop-color="#09a377"/><stop offset=".63" stop-color="#14a949"/><stop offset=".646" stop-color="#2fab37"/><stop offset=".693" stop-color="#28ab3a"/><stop offset=".725" stop-color="#13a94b"/><stop offset=".835" stop-color="#06978c"/><stop offset=".914" stop-color="#136ab0"/><stop offset=".961" stop-color="#5a44b0"/><stop offset="1" stop-color="#2461b0"/></linearGradient><linearGradient id="g226" gradientUnits="userSpaceOnUse" x1="2305.0" y1="921.19" x2="2305.0" y2="989.86" gradientTransform="matrix(1 0.10178 0 1 0 -234.605)"><stop offset="0" stop-color="#3956b0"/><stop offset=".015" stop-color="#5746b0"/><stop offset=".044" stop-color="#305ab0"/><stop offset=".073" stop-color="#0871af"/><stop offset=".16" stop-color="#09a377"/><stop offset=".233" stop-color="#16aa41"/><stop offset=".248" stop-color="#2cab38"/><stop offset=".277" stop-color="#2fab37"/><stop offset=".306" stop-color="#10a759"/><stop offset=".335" stop-color="#06998b"/><stop offset=".364" stop-color="#126bb0"/><stop offset=".393" stop-color="#7336b0"/><stop offset=".408" stop-color="#a230a9"/><stop offset=".437" stop-color="#b82b80"/><stop offset=".466" stop-color="#b63426"/><stop offset=".51" stop-color="#b6361a"/><stop offset="1.005" stop-color="#b6361a"/></linearGradient><linearGradient id="g227" gradientUnits="userSpaceOnUse" x1="2311.0" y1="862.10" x2="2311.0" y2="925.34" gradientTransform="matrix(1 0.10982 0 1 0 -253.786)"><stop offset="0" stop-color="#b6361a"/><stop offset=".411" stop-color="#b6361a"/><stop offset=".427" stop-color="#b63426"/><stop offset=".459" stop-color="#b82b80"/><stop offset=".49" stop-color="#a82fa8"/><stop offset=".522" stop-color="#5746b0"/><stop offset=".553" stop-color="#0873ad"/><stop offset=".601" stop-color="#09a474"/><stop offset=".648" stop-color="#26ab3a"/><stop offset=".712" stop-color="#14a948"/><stop offset=".822" stop-color="#069b88"/><stop offset=".901" stop-color="#0870b0"/><stop offset=".949" stop-color="#4151b0"/><stop offset=".965" stop-color="#6240b0"/><stop offset="1" stop-color="#2a5eb0"/></linearGradient><linearGradient id="g228" gradientUnits="userSpaceOnUse" x1="2311.0" y1="921.76" x2="2311.0" y2="990.23" gradientTransform="matrix(1 0.10827 0 1 0 -250.215)"><stop offset="0" stop-color="#3a55b0"/><stop offset=".015" stop-color="#5746b0"/><stop offset=".029" stop-color="#5447b0"/><stop offset=".073" stop-color="#0c6eb0"/><stop offset=".161" stop-color="#08a37b"/><stop offset=".263" stop-color="#26ab3a"/><stop offset=".292" stop-color="#15aa43"/><stop offset=".336" stop-color="#06968d"/><stop offset=".365" stop-color="#1669b0"/><stop offset=".394" stop-color="#7635b0"/><stop offset=".409" stop-color="#a42fa9"/><stop offset=".438" stop-color="#b82b7f"/><stop offset=".467" stop-color="#b63424"/><stop offset=".599" stop-color="#b6361a"/><stop offset="1" stop-color="#b6361a"/></linearGradient><linearGradient id="g229" gradientUnits="userSpaceOnUse" x1="2317.0" y1="862.93" x2="2317.0" y2="925.93" gradientTransform="matrix(1 0.12691 0 1 0 -294.039)"><stop offset="0" stop-color="#b6361a"/><stop offset=".413" stop-color="#b6361a"/><stop offset=".429" stop-color="#b6332d"/><stop offset=".46" stop-color="#b82b85"/><stop offset=".492" stop-color="#a52fa8"/><stop offset=".524" stop-color="#5447b0"/><stop offset=".556" stop-color="#0873ad"/><stop offset=".603" stop-color="#09a475"/><stop offset=".651" stop-color="#1caa3e"/><stop offset=".714" stop-color="#13a84d"/><stop offset=".825" stop-color="#06978c"/><stop offset=".905" stop-color="#0d6db0"/><stop offset=".952" stop-color="#474eb0"/><stop offset=".968" stop-color="#683cb0"/><stop offset="1" stop-color="#315ab0"/></linearGradient><linearGradient id="g230" gradientUnits="userSpaceOnUse" x1="2317.0" y1="922.34" x2="2317.0" y2="990.61" gradientTransform="matrix(1 0.11440 0 1 0 -265.062)"><stop offset="0" stop-color="#3a55b0"/><stop offset=".015" stop-color="#5547b0"/><stop offset=".029" stop-color="#5d42b0"/><stop offset=".073" stop-color="#136ab0"/><stop offset=".146" stop-color="#069b89"/><stop offset=".264" stop-color="#1caa3e"/><stop offset=".293" stop-color="#15a946"/><stop offset=".337" stop-color="#07958e"/><stop offset=".366" stop-color="#1967b0"/><stop offset=".395" stop-color="#7934b0"/><stop offset=".41" stop-color="#a62fa8"/><stop offset=".439" stop-color="#b82b7e"/><stop offset=".469" stop-color="#b63523"/><stop offset="1" stop-color="#b6361a"/></linearGradient><linearGradient id="g231" gradientUnits="userSpaceOnUse" x1="2323.0" y1="863.77" x2="2323.0" y2="926.55" gradientTransform="matrix(1 0.14069 0 1 0 -326.827)"><stop offset="0" stop-color="#b6361a"/><stop offset=".414" stop-color="#b6361a"/><stop offset=".43" stop-color="#b6332d"/><stop offset=".462" stop-color="#b82b85"/><stop offset=".494" stop-color="#a62fa8"/><stop offset=".526" stop-color="#5646b0"/><stop offset=".557" stop-color="#0871af"/><stop offset=".605" stop-color="#08a378"/><stop offset=".653" stop-color="#16aa42"/><stop offset=".717" stop-color="#12a852"/><stop offset=".828" stop-color="#07948f"/><stop offset=".908" stop-color="#136ab0"/><stop offset=".956" stop-color="#4d4bb0"/><stop offset=".972" stop-color="#6d3ab0"/><stop offset="1.003" stop-color="#3458b0"/></linearGradient><linearGradient id="g232" gradientUnits="userSpaceOnUse" x1="2323.0" y1="922.93" x2="2323.0" y2="990.99" gradientTransform="matrix(1 0.12016 0 1 0 -279.140)"><stop offset="0" stop-color="#3a55b0"/><stop offset=".029" stop-color="#683db0"/><stop offset=".088" stop-color="#0870b0"/><stop offset=".176" stop-color="#08a37a"/><stop offset=".264" stop-color="#16aa42"/><stop offset=".294" stop-color="#14a949"/><stop offset=".338" stop-color="#079390"/><stop offset=".353" stop-color="#077da4"/><stop offset=".367" stop-color="#1c65b0"/><stop offset=".397" stop-color="#7b34b0"/><stop offset=".411" stop-color="#a82fa8"/><stop offset=".426" stop-color="#b62c9c"/><stop offset=".456" stop-color="#b82d56"/><stop offset=".47" stop-color="#b63522"/><stop offset="1" stop-color="#b6361a"/></linearGradient><linearGradient id="g233" gradientUnits="userSpaceOnUse" x1="2329.0" y1="864.62" x2="2329.0" y2="927.20" gradientTransform="matrix(1 0.15118 0 1 0 -352.089)"><stop offset="0" stop-color="#b6361a"/><stop offset=".415" stop-color="#b6361a"/><stop offset=".431" stop-color="#b63427"/><stop offset=".463" stop-color="#b82b81"/><stop offset=".495" stop-color="#a92fa7"/><stop offset=".527" stop-color="#5d43b0"/><stop offset=".559" stop-color="#0d6eb0"/><stop offset=".607" stop-color="#07a37d"/><stop offset=".655" stop-color="#14a947"/><stop offset=".719" stop-color="#11a756"/><stop offset=".815" stop-color="#06998a"/><stop offset=".895" stop-color="#0871af"/><stop offset=".959" stop-color="#5249b0"/><stop offset=".975" stop-color="#7138b0"/><stop offset="1.007" stop-color="#3856b0"/></linearGradient><linearGradient id="g234" gradientUnits="userSpaceOnUse" x1="2329.0" y1="923.55" x2="2329.0" y2="991.37" gradientTransform="matrix(1 0.12557 0 1 0 -292.442)"><stop offset="0" stop-color="#3a55b0"/><stop offset=".029" stop-color="#7038b0"/><stop offset=".088" stop-color="#106cb0"/><stop offset=".192" stop-color="#09a475"/><stop offset=".265" stop-color="#14a947"/><stop offset=".295" stop-color="#13a94c"/><stop offset=".324" stop-color="#07a37d"/><stop offset=".354" stop-color="#087ba6"/><stop offset=".369" stop-color="#1f64b0"/><stop offset=".398" stop-color="#7d34af"/><stop offset=".413" stop-color="#a82fa8"/><stop offset=".428" stop-color="#b62c9c"/><stop offset=".457" stop-color="#b82d55"/><stop offset=".472" stop-color="#b63521"/><stop offset="1.003" stop-color="#b6361a"/></linearGradient><linearGradient id="g235" gradientUnits="userSpaceOnUse" x1="2335.0" y1="865.49" x2="2335.0" y2="927.88" gradientTransform="matrix(1 0.15836 0 1 0 -369.768)"><stop offset="0" stop-color="#b6361a"/><stop offset=".433" stop-color="#b6361d"/><stop offset=".465" stop-color="#b82b7b"/><stop offset=".481" stop-color="#b72c9b"/><stop offset=".497" stop-color="#ab2ea5"/><stop offset=".529" stop-color="#673db0"/><stop offset=".561" stop-color="#1768b0"/><stop offset=".593" stop-color="#078e94"/><stop offset=".625" stop-color="#0ba46f"/><stop offset=".657" stop-color="#13a94c"/><stop offset=".721" stop-color="#10a75a"/><stop offset=".817" stop-color="#06968d"/><stop offset=".898" stop-color="#0b6eb0"/><stop offset=".962" stop-color="#5746b0"/><stop offset=".978" stop-color="#7635b0"/><stop offset="1" stop-color="#4a4db0"/></linearGradient><linearGradient id="g236" gradientUnits="userSpaceOnUse" x1="2335.0" y1="924.20" x2="2335.0" y2="991.76" gradientTransform="matrix(1 0.13060 0 1 0 -304.962)"><stop offset="0" stop-color="#3b55b0"/><stop offset=".03" stop-color="#6e3ab0"/><stop offset=".104" stop-color="#0871af"/><stop offset=".192" stop-color="#08a37b"/><stop offset=".266" stop-color="#13a94c"/><stop offset=".296" stop-color="#12a84f"/><stop offset=".326" stop-color="#07a280"/><stop offset=".355" stop-color="#0879a8"/><stop offset=".37" stop-color="#2262b0"/><stop offset=".4" stop-color="#7f33af"/><stop offset=".414" stop-color="#a92fa7"/><stop offset=".429" stop-color="#b72c9b"/><stop offset=".459" stop-color="#b72d53"/><stop offset=".474" stop-color="#b6351f"/><stop offset="1.007" stop-color="#b6361a"/></linearGradient><linearGradient id="g237" gradientUnits="userSpaceOnUse" x1="2341.0" y1="866.37" x2="2341.0" y2="928.60" gradientTransform="matrix(1 0.16224 0 1 0 -379.802)"><stop offset="0" stop-color="#b6361a"/><stop offset=".434" stop-color="#b6361a"/><stop offset=".482" stop-color="#b82c93"/><stop offset=".514" stop-color="#9831ab"/><stop offset=".546" stop-color="#4b4cb0"/><stop offset=".578" stop-color="#0875ab"/><stop offset=".627" stop-color="#09a376"/><stop offset=".659" stop-color="#12a851"/><stop offset=".739" stop-color="#0da567"/><stop offset=".819" stop-color="#079390"/><stop offset=".9" stop-color="#116bb0"/><stop offset=".964" stop-color="#5d42b0"/><stop offset=".98" stop-color="#7b34b0"/><stop offset="1" stop-color="#5447b0"/></linearGradient><linearGradient id="g238" gradientUnits="userSpaceOnUse" x1="2341.0" y1="924.88" x2="2341.0" y2="992.15" gradientTransform="matrix(1 0.13528 0 1 0 -316.693)"><stop offset="0" stop-color="#3d54b0"/><stop offset=".03" stop-color="#6e3ab0"/><stop offset=".045" stop-color="#6b3bb0"/><stop offset=".104" stop-color="#0f6cb0"/><stop offset=".208" stop-color="#09a376"/><stop offset=".282" stop-color="#12a851"/><stop offset=".297" stop-color="#12a852"/><stop offset=".327" stop-color="#06a182"/><stop offset=".357" stop-color="#0877aa"/><stop offset=".387" stop-color="#5547b0"/><stop offset=".416" stop-color="#aa2fa6"/><stop offset=".431" stop-color="#b72c9b"/><stop offset=".461" stop-color="#b72e50"/><stop offset=".476" stop-color="#b6361c"/><stop offset="1" stop-color="#b6361a"/></linearGradient><linearGradient id="g239" gradientUnits="userSpaceOnUse" x1="2347.0" y1="867.27" x2="2347.0" y2="929.38" gradientTransform="matrix(1 0.16282 0 1 0 -382.133)"><stop offset="0" stop-color="#b6361a"/><stop offset=".435" stop-color="#b6361a"/><stop offset=".451" stop-color="#b73233"/><stop offset=".467" stop-color="#b82a67"/><stop offset=".499" stop-color="#b22d9f"/><stop offset=".515" stop-color="#a42fa9"/><stop offset=".547" stop-color="#5845b0"/><stop offset=".58" stop-color="#0b6fb0"/><stop offset=".628" stop-color="#07a27e"/><stop offset=".66" stop-color="#11a756"/><stop offset=".741" stop-color="#0ca56b"/><stop offset=".837" stop-color="#07889a"/><stop offset=".886" stop-color="#0870b0"/><stop offset=".966" stop-color="#663eb0"/><stop offset=".982" stop-color="#8133af"/><stop offset="1" stop-color="#5f41b0"/></linearGradient><linearGradient id="g240" gradientUnits="userSpaceOnUse" x1="2347.0" y1="925.60" x2="2347.0" y2="992.54" gradientTransform="matrix(1 0.13960 0 1 0 -327.630)"><stop offset="0" stop-color="#4052b0"/><stop offset=".03" stop-color="#7038b0"/><stop offset=".045" stop-color="#7734b0"/><stop offset=".105" stop-color="#1967b0"/><stop offset=".134" stop-color="#087aa7"/><stop offset=".224" stop-color="#0aa472"/><stop offset=".284" stop-color="#11a756"/><stop offset=".299" stop-color="#11a756"/><stop offset=".329" stop-color="#069e85"/><stop offset=".359" stop-color="#0874ac"/><stop offset=".403" stop-color="#8632ae"/><stop offset=".418" stop-color="#ab2ea5"/><stop offset=".433" stop-color="#b82c99"/><stop offset=".478" stop-color="#b6361a"/><stop offset="1.001" stop-color="#b6361a"/></linearGradient><linearGradient id="g241" gradientUnits="userSpaceOnUse" x1="2353.0" y1="868.20" x2="2353.0" y2="930.20" gradientTransform="matrix(1 0.16009 0 1 0 -376.702)"><stop offset="0" stop-color="#b6361a"/><stop offset=".452" stop-color="#b63521"/><stop offset=".484" stop-color="#b82b7d"/><stop offset=".5" stop-color="#b62c9b"/><stop offset=".516" stop-color="#ab2ea5"/><stop offset=".564" stop-color="#4052b0"/><stop offset=".581" stop-color="#1967b0"/><stop offset=".613" stop-color="#078c96"/><stop offset=".645" stop-color="#0aa472"/><stop offset=".661" stop-color="#0fa65d"/><stop offset=".726" stop-color="#0ca567"/><stop offset=".806" stop-color="#07938f"/><stop offset=".887" stop-color="#0f6cb0"/><stop offset=".952" stop-color="#5447b0"/><stop offset=".984" stop-color="#8732ad"/><stop offset="1" stop-color="#6a3cb0"/></linearGradient><linearGradient id="g242" gradientUnits="userSpaceOnUse" x1="2353.0" y1="926.38" x2="2353.0" y2="992.94" gradientTransform="matrix(1 0.14355 0 1 0 -337.764)"><stop offset="0" stop-color="#454fb0"/><stop offset=".045" stop-color="#8233ae"/><stop offset=".105" stop-color="#2362b0"/><stop offset=".135" stop-color="#0876ab"/><stop offset=".225" stop-color="#08a378"/><stop offset=".285" stop-color="#0fa75c"/><stop offset=".3" stop-color="#0fa75c"/><stop offset=".331" stop-color="#069a89"/><stop offset=".361" stop-color="#0870b0"/><stop offset=".406" stop-color="#8d32ad"/><stop offset=".421" stop-color="#ad2ea4"/><stop offset=".451" stop-color="#b82a73"/><stop offset=".481" stop-color="#b6361a"/><stop offset="1.007" stop-color="#b6361a"/></linearGradient><linearGradient id="g243" gradientUnits="userSpaceOnUse" x1="2359.0" y1="869.15" x2="2359.0" y2="931.07" gradientTransform="matrix(1 0.15407 0 1 0 -363.448)"><stop offset="0" stop-color="#b6361a"/><stop offset=".452" stop-color="#b6361a"/><stop offset=".501" stop-color="#b82c92"/><stop offset=".533" stop-color="#9a30aa"/><stop offset=".565" stop-color="#4e4ab0"/><stop offset=".598" stop-color="#0873ad"/><stop offset=".646" stop-color="#08a37a"/><stop offset=".678" stop-color="#0ea662"/><stop offset=".759" stop-color="#07a27f"/><stop offset=".872" stop-color="#096fb0"/><stop offset=".953" stop-color="#6240b0"/><stop offset=".985" stop-color="#8e32ac"/><stop offset="1.001" stop-color="#7237b0"/></linearGradient><linearGradient id="g244" gradientUnits="userSpaceOnUse" x1="2359.0" y1="927.20" x2="2359.0" y2="993.34" gradientTransform="matrix(1 0.14713 0 1 0 -347.090)"><stop offset="0" stop-color="#4e4bb0"/><stop offset=".045" stop-color="#8d32ad"/><stop offset=".106" stop-color="#2d5cb0"/><stop offset=".136" stop-color="#0871af"/><stop offset=".242" stop-color="#09a474"/><stop offset=".287" stop-color="#0ea662"/><stop offset=".302" stop-color="#0ea662"/><stop offset=".333" stop-color="#07958e"/><stop offset=".363" stop-color="#116bb0"/><stop offset=".408" stop-color="#9531ab"/><stop offset=".438" stop-color="#b82c8f"/><stop offset=".484" stop-color="#b6361a"/><stop offset="1" stop-color="#b6361a"/></linearGradient><linearGradient id="g245" gradientUnits="userSpaceOnUse" x1="2365.0" y1="870.13" x2="2365.0" y2="931.98" gradientTransform="matrix(1 0.14474 0 1 0 -342.313)"><stop offset="0" stop-color="#b6361a"/><stop offset=".453" stop-color="#b6361a"/><stop offset=".469" stop-color="#b73330"/><stop offset=".501" stop-color="#b82b87"/><stop offset=".534" stop-color="#a72fa8"/><stop offset=".566" stop-color="#5c43b0"/><stop offset=".598" stop-color="#106cb0"/><stop offset=".647" stop-color="#06a282"/><stop offset=".679" stop-color="#0ca569"/><stop offset=".776" stop-color="#06978c"/><stop offset=".857" stop-color="#0871af"/><stop offset=".954" stop-color="#7635b0"/><stop offset=".97" stop-color="#9131ac"/><stop offset=".986" stop-color="#9631ab"/><stop offset="1.003" stop-color="#7b34b0"/></linearGradient><linearGradient id="g246" gradientUnits="userSpaceOnUse" x1="2365.0" y1="928.07" x2="2365.0" y2="993.75" gradientTransform="matrix(1 0.15036 0 1 0 -355.601)"><stop offset="0" stop-color="#5a44b0"/><stop offset=".03" stop-color="#9032ac"/><stop offset=".046" stop-color="#9831ab"/><stop offset=".107" stop-color="#3757b0"/><stop offset=".152" stop-color="#0874ac"/><stop offset=".244" stop-color="#08a37b"/><stop offset=".289" stop-color="#0ca569"/><stop offset=".305" stop-color="#0ca56a"/><stop offset=".335" stop-color="#078e94"/><stop offset=".35" stop-color="#087aa7"/><stop offset=".365" stop-color="#1e64b0"/><stop offset=".396" stop-color="#7635b0"/><stop offset=".411" stop-color="#9f30a9"/><stop offset=".442" stop-color="#b82b87"/><stop offset=".472" stop-color="#b73331"/><stop offset=".487" stop-color="#b6361a"/><stop offset="1.005" stop-color="#b6361a"/></linearGradient><linearGradient id="g247" gradientUnits="userSpaceOnUse" x1="2371.0" y1="871.15" x2="2371.0" y2="932.91" gradientTransform="matrix(1 0.13211 0 1 0 -313.236)"><stop offset="0" stop-color="#b6361a"/><stop offset=".47" stop-color="#b63520"/><stop offset=".502" stop-color="#b82b7c"/><stop offset=".518" stop-color="#b72c9b"/><stop offset=".551" stop-color="#8e32ac"/><stop offset=".599" stop-color="#1d65b0"/><stop offset=".615" stop-color="#0878a8"/><stop offset=".664" stop-color="#09a475"/><stop offset=".729" stop-color="#07a27e"/><stop offset=".842" stop-color="#0870b0"/><stop offset=".939" stop-color="#7138b0"/><stop offset=".971" stop-color="#a82fa8"/><stop offset="1.004" stop-color="#8333ae"/></linearGradient><linearGradient id="g248" gradientUnits="userSpaceOnUse" x1="2371.0" y1="928.98" x2="2371.0" y2="994.15" gradientTransform="matrix(1 0.15322 0 1 0 -363.291)"><stop offset="0" stop-color="#6c3ab0"/><stop offset=".031" stop-color="#a330a9"/><stop offset=".046" stop-color="#a330a9"/><stop offset=".123" stop-color="#305bb0"/><stop offset=".153" stop-color="#0b6eb0"/><stop offset=".261" stop-color="#08a379"/><stop offset=".307" stop-color="#09a474"/><stop offset=".353" stop-color="#0873ae"/><stop offset=".399" stop-color="#8233ae"/><stop offset=".414" stop-color="#a92fa7"/><stop offset=".43" stop-color="#b62c9c"/><stop offset=".46" stop-color="#b82d57"/><stop offset=".476" stop-color="#b63523"/><stop offset="1" stop-color="#b6361a"/></linearGradient><linearGradient id="g249" gradientUnits="userSpaceOnUse" x1="2377.0" y1="872.19" x2="2377.0" y2="933.85" gradientTransform="matrix(1 0.11618 0 1 0 -276.160)"><stop offset="0" stop-color="#b6361a"/><stop offset=".47" stop-color="#b6361a"/><stop offset=".519" stop-color="#b82c95"/><stop offset=".551" stop-color="#9831ab"/><stop offset=".584" stop-color="#4d4bb0"/><stop offset=".616" stop-color="#0873ad"/><stop offset=".665" stop-color="#08a37b"/><stop offset=".746" stop-color="#07948f"/><stop offset=".827" stop-color="#0b6eb0"/><stop offset=".924" stop-color="#7337b0"/><stop offset=".957" stop-color="#a82fa8"/><stop offset=".989" stop-color="#a72fa8"/><stop offset="1.006" stop-color="#8c32ad"/></linearGradient><linearGradient id="g250" gradientUnits="userSpaceOnUse" x1="2377.0" y1="929.91" x2="2377.0" y2="994.57" gradientTransform="matrix(1 0.15572 0 1 0 -370.153)"><stop offset="0" stop-color="#8633ae"/><stop offset=".031" stop-color="#ad2ea3"/><stop offset=".046" stop-color="#aa2fa6"/><stop offset=".108" stop-color="#4e4ab0"/><stop offset=".17" stop-color="#0871af"/><stop offset=".278" stop-color="#08a37b"/><stop offset=".309" stop-color="#07a27f"/><stop offset=".356" stop-color="#146ab0"/><stop offset=".402" stop-color="#9032ac"/><stop offset=".433" stop-color="#b82c96"/><stop offset=".479" stop-color="#b6361a"/><stop offset="1.005" stop-color="#b6361a"/></linearGradient><linearGradient id="g251" gradientUnits="userSpaceOnUse" x1="2383.0" y1="873.27" x2="2383.0" y2="934.80" gradientTransform="matrix(1 0.10972 0 1 0 -261.462)"><stop offset="0" stop-color="#b6361a"/><stop offset=".471" stop-color="#b6361a"/><stop offset=".52" stop-color="#b82b8d"/><stop offset=".553" stop-color="#a130a9"/><stop offset=".585" stop-color="#5646b0"/><stop offset=".618" stop-color="#0b6fb0"/><stop offset=".666" stop-color="#06a084"/><stop offset=".748" stop-color="#078999"/><stop offset=".813" stop-color="#136ab0"/><stop offset=".91" stop-color="#7b34b0"/><stop offset=".943" stop-color="#aa2fa7"/><stop offset=".991" stop-color="#aa2fa6"/><stop offset="1.008" stop-color="#9631ab"/></linearGradient><linearGradient id="g252" gradientUnits="userSpaceOnUse" x1="2383.0" y1="930.85" x2="2383.0" y2="994.99" gradientTransform="matrix(1 0.15786 0 1 0 -376.181)"><stop offset="0" stop-color="#a330a9"/><stop offset=".031" stop-color="#b52d9d"/><stop offset=".062" stop-color="#a130a9"/><stop offset=".14" stop-color="#3757b0"/><stop offset=".187" stop-color="#0872ae"/><stop offset=".296" stop-color="#06a084"/><stop offset=".327" stop-color="#07889a"/><stop offset=".343" stop-color="#0875ab"/><stop offset=".39" stop-color="#7734b0"/><stop offset=".405" stop-color="#9e30aa"/><stop offset=".437" stop-color="#b82b8c"/><stop offset=".483" stop-color="#b6361a"/><stop offset="1" stop-color="#b6361a"/></linearGradient><linearGradient id="g253" gradientUnits="userSpaceOnUse" x1="2389.0" y1="874.37" x2="2389.0" y2="935.74" gradientTransform="matrix(1 0.11469 0 1 0 -274.002)"><stop offset="0" stop-color="#b6361a"/><stop offset=".473" stop-color="#b6361a"/><stop offset=".489" stop-color="#b6332d"/><stop offset=".521" stop-color="#b82b85"/><stop offset=".554" stop-color="#a92fa8"/><stop offset=".587" stop-color="#6041b0"/><stop offset=".619" stop-color="#1569b0"/><stop offset=".668" stop-color="#06978c"/><stop offset=".782" stop-color="#0b6eb0"/><stop offset=".896" stop-color="#8333ae"/><stop offset=".945" stop-color="#b32d9e"/><stop offset=".961" stop-color="#b82c94"/><stop offset="1" stop-color="#aa2fa6"/></linearGradient><linearGradient id="g254" gradientUnits="userSpaceOnUse" x1="2389.0" y1="931.80" x2="2389.0" y2="995.42" gradientTransform="matrix(1 0.15963 0 1 0 -381.368)"><stop offset="0" stop-color="#af2ea2"/><stop offset=".047" stop-color="#b12da0"/><stop offset=".079" stop-color="#9531ab"/><stop offset=".189" stop-color="#136ab0"/><stop offset=".267" stop-color="#079291"/><stop offset=".314" stop-color="#079192"/><stop offset=".346" stop-color="#116bb0"/><stop offset=".393" stop-color="#8633ae"/><stop offset=".409" stop-color="#a92fa7"/><stop offset=".44" stop-color="#b82b81"/><stop offset=".472" stop-color="#b63428"/><stop offset=".503" stop-color="#b6361a"/><stop offset="1.006" stop-color="#b6361a"/></linearGradient><linearGradient id="g255" gradientUnits="userSpaceOnUse" x1="2395.0" y1="875.49" x2="2395.0" y2="936.69" gradientTransform="matrix(1 0.11931 0 1 0 -285.739)"><stop offset="0" stop-color="#b6361a"/><stop offset=".49" stop-color="#b6351e"/><stop offset=".523" stop-color="#b82b7b"/><stop offset=".539" stop-color="#b72c9b"/><stop offset=".572" stop-color="#9031ac"/><stop offset=".621" stop-color="#2063b0"/><stop offset=".637" stop-color="#0876aa"/><stop offset=".67" stop-color="#078e95"/><stop offset=".752" stop-color="#0872af"/><stop offset=".882" stop-color="#8c32ad"/><stop offset=".915" stop-color="#ae2ea3"/><stop offset=".964" stop-color="#b82b8a"/><stop offset="1" stop-color="#ae2ea3"/></linearGradient><linearGradient id="g256" gradientUnits="userSpaceOnUse" x1="2395.0" y1="932.74" x2="2395.0" y2="995.86" gradientTransform="matrix(1 0.16105 0 1 0 -385.707)"><stop offset="0" stop-color="#b72c9b"/><stop offset=".016" stop-color="#b82b89"/><stop offset=".079" stop-color="#a32fa9"/><stop offset=".19" stop-color="#2361b0"/><stop offset=".238" stop-color="#087aa7"/><stop offset=".301" stop-color="#078e95"/><stop offset=".333" stop-color="#0874ac"/><stop offset=".38" stop-color="#7138b0"/><stop offset=".412" stop-color="#ad2ea3"/><stop offset=".428" stop-color="#b82c98"/><stop offset=".475" stop-color="#b6361a"/><stop offset="1" stop-color="#b6361a"/></linearGradient><linearGradient id="g257" gradientUnits="userSpaceOnUse" x1="2401.0" y1="876.62" x2="2401.0" y2="937.63" gradientTransform="matrix(1 0.12356 0 1 0 -296.669)"><stop offset="0" stop-color="#b6361a"/><stop offset=".492" stop-color="#b6361a"/><stop offset=".541" stop-color="#b82c92"/><stop offset=".574" stop-color="#9c30aa"/><stop offset=".606" stop-color="#5248b0"/><stop offset=".639" stop-color="#0870b0"/><stop offset=".672" stop-color="#07849d"/><stop offset=".738" stop-color="#0e6db0"/><stop offset=".869" stop-color="#9631ab"/><stop offset=".918" stop-color="#b72c9b"/><stop offset=".951" stop-color="#b82b76"/><stop offset="1" stop-color="#b22d9f"/></linearGradient><linearGradient id="g258" gradientUnits="userSpaceOnUse" x1="2401.0" y1="933.69" x2="2401.0" y2="996.30" gradientTransform="matrix(1 0.16210 0 1 0 -389.192)"><stop offset="0" stop-color="#b82b88"/><stop offset=".016" stop-color="#b82b75"/><stop offset=".064" stop-color="#b22d9f"/><stop offset=".16" stop-color="#5448b0"/><stop offset=".24" stop-color="#0871af"/><stop offset=".303" stop-color="#07849d"/><stop offset=".335" stop-color="#146ab0"/><stop offset=".383" stop-color="#8133ae"/><stop offset=".399" stop-color="#a42fa9"/><stop offset=".431" stop-color="#b82b8c"/><stop offset=".479" stop-color="#b6361a"/><stop offset="1.006" stop-color="#b6361a"/></linearGradient><linearGradient id="g259" gradientUnits="userSpaceOnUse" x1="2407.0" y1="877.77" x2="2407.0" y2="938.58" gradientTransform="matrix(1 0.12746 0 1 0 -306.784)"><stop offset="0" stop-color="#b6361a"/><stop offset=".493" stop-color="#b6361a"/><stop offset=".51" stop-color="#b6332d"/><stop offset=".543" stop-color="#b82b85"/><stop offset=".576" stop-color="#a92fa8"/><stop offset=".625" stop-color="#3b55b0"/><stop offset=".641" stop-color="#1569b0"/><stop offset=".674" stop-color="#087ba6"/><stop offset=".707" stop-color="#0970b0"/><stop offset=".839" stop-color="#8a32ad"/><stop offset=".888" stop-color="#b32d9e"/><stop offset=".954" stop-color="#b82a6b"/><stop offset="1.003" stop-color="#b52d9c"/></linearGradient><linearGradient id="g260" gradientUnits="userSpaceOnUse" x1="2407.0" y1="934.63" x2="2407.0" y2="996.75" gradientTransform="matrix(1 0.16278 0 1 0 -391.817)"><stop offset="0" stop-color="#b82a73"/><stop offset=".016" stop-color="#b82a68"/><stop offset=".08" stop-color="#af2ea1"/><stop offset=".177" stop-color="#5447b0"/><stop offset=".258" stop-color="#0a6fb0"/><stop offset=".306" stop-color="#087ba6"/><stop offset=".322" stop-color="#0871af"/><stop offset=".386" stop-color="#9131ac"/><stop offset=".419" stop-color="#b62c9c"/><stop offset=".451" stop-color="#b82c59"/><stop offset=".467" stop-color="#b63425"/><stop offset=".547" stop-color="#b6361a"/><stop offset="1" stop-color="#b6361a"/></linearGradient><linearGradient id="g261" gradientUnits="userSpaceOnUse" x1="2413.0" y1="878.96" x2="2413.0" y2="939.55" gradientTransform="matrix(1 0.13099 0 1 0 -316.079)"><stop offset="0" stop-color="#b6361a"/><stop offset=".512" stop-color="#b6361a"/><stop offset=".545" stop-color="#b82b78"/><stop offset=".561" stop-color="#b82c99"/><stop offset=".594" stop-color="#9431ab"/><stop offset=".66" stop-color="#0871af"/><stop offset=".71" stop-color="#2362b0"/><stop offset=".825" stop-color="#9531ab"/><stop offset=".858" stop-color="#af2ea2"/><stop offset=".924" stop-color="#b82a6b"/><stop offset=".941" stop-color="#b72e51"/><stop offset="1.007" stop-color="#b82c9a"/></linearGradient><linearGradient id="g262" gradientUnits="userSpaceOnUse" x1="2413.0" y1="935.58" x2="2413.0" y2="997.22" gradientTransform="matrix(1 0.16311 0 1 0 -393.575)"><stop offset="0" stop-color="#b82c5b"/><stop offset=".016" stop-color="#b82c59"/><stop offset=".081" stop-color="#b42d9e"/><stop offset=".13" stop-color="#9031ac"/><stop offset=".292" stop-color="#0871af"/><stop offset=".308" stop-color="#0871af"/><stop offset=".373" stop-color="#8233ae"/><stop offset=".406" stop-color="#b02ea1"/><stop offset=".422" stop-color="#b82c94"/><stop offset=".471" stop-color="#b6361a"/><stop offset="1.006" stop-color="#b6361a"/></linearGradient><linearGradient id="g263" gradientUnits="userSpaceOnUse" x1="2419.0" y1="880.18" x2="2419.0" y2="940.52" gradientTransform="matrix(1 0.13417 0 1 0 -324.546)"><stop offset="0" stop-color="#b6361a"/><stop offset=".514" stop-color="#b6361a"/><stop offset=".53" stop-color="#b73137"/><stop offset=".563" stop-color="#b82b8c"/><stop offset=".597" stop-color="#a230a9"/><stop offset=".63" stop-color="#5746b0"/><stop offset=".663" stop-color="#1b66b0"/><stop offset=".696" stop-color="#2d5cb0"/><stop offset=".795" stop-color="#8f32ac"/><stop offset=".862" stop-color="#b82c98"/><stop offset=".928" stop-color="#b72f48"/><stop offset=".945" stop-color="#b73040"/><stop offset="1" stop-color="#b82b88"/></linearGradient><linearGradient id="g264" gradientUnits="userSpaceOnUse" x1="2419.0" y1="936.55" x2="2419.0" y2="997.69" gradientTransform="matrix(1 0.16363 0 1 0 -395.825)"><stop offset="0" stop-color="#b7303e"/><stop offset=".082" stop-color="#b82c9a"/><stop offset=".147" stop-color="#9032ac"/><stop offset=".294" stop-color="#1b66b0"/><stop offset=".311" stop-color="#1b66b0"/><stop offset=".376" stop-color="#9331ab"/><stop offset=".409" stop-color="#b42d9d"/><stop offset=".442" stop-color="#b82b61"/><stop offset=".458" stop-color="#b6332d"/><stop offset=".474" stop-color="#b6361a"/><stop offset="1" stop-color="#b6361a"/></linearGradient><linearGradient id="g265" gradientUnits="userSpaceOnUse" x1="2425.0" y1="881.43" x2="2425.0" y2="941.51" gradientTransform="matrix(1 0.13698 0 1 0 -332.179)"><stop offset="0" stop-color="#b6361a"/><stop offset=".533" stop-color="#b63521"/><stop offset=".566" stop-color="#b82b7d"/><stop offset=".583" stop-color="#b62c9c"/><stop offset=".599" stop-color="#ab2ea6"/><stop offset=".649" stop-color="#3f53b0"/><stop offset=".666" stop-color="#305bb0"/><stop offset=".782" stop-color="#9b30aa"/><stop offset=".849" stop-color="#b82c90"/><stop offset=".916" stop-color="#b7303e"/><stop offset=".932" stop-color="#b63425"/><stop offset="1" stop-color="#b82b7d"/></linearGradient><linearGradient id="g266" gradientUnits="userSpaceOnUse" x1="2425.0" y1="937.52" x2="2425.0" y2="998.17" gradientTransform="matrix(1 0.17100 0 1 0 -414.677)"><stop offset="0" stop-color="#b63522"/><stop offset=".066" stop-color="#b82b7d"/><stop offset=".115" stop-color="#b12da0"/><stop offset=".231" stop-color="#5e42b0"/><stop offset=".297" stop-color="#305bb0"/><stop offset=".313" stop-color="#305bb0"/><stop offset=".363" stop-color="#8832ad"/><stop offset=".396" stop-color="#b02ea1"/><stop offset=".412" stop-color="#b82c96"/><stop offset=".462" stop-color="#b6361a"/><stop offset="1.006" stop-color="#b6361a"/></linearGradient><linearGradient id="g267" gradientUnits="userSpaceOnUse" x1="2431.0" y1="882.71" x2="2431.0" y2="942.50" gradientTransform="matrix(1 0.13944 0 1 0 -338.972)"><stop offset="0" stop-color="#b6361a"/><stop offset=".535" stop-color="#b6361a"/><stop offset=".585" stop-color="#b82c8f"/><stop offset=".619" stop-color="#9b30aa"/><stop offset=".652" stop-color="#4d4bb0"/><stop offset=".669" stop-color="#464fb0"/><stop offset=".753" stop-color="#9731ab"/><stop offset=".82" stop-color="#b82c97"/><stop offset=".886" stop-color="#b72e4d"/><stop offset=".92" stop-color="#b6361b"/><stop offset=".937" stop-color="#b6361a"/><stop offset="1.004" stop-color="#b82a73"/></linearGradient><linearGradient id="g268" gradientUnits="userSpaceOnUse" x1="2431.0" y1="938.51" x2="2431.0" y2="998.67" gradientTransform="matrix(1 0.17984 0 1 0 -437.201)"><stop offset="0" stop-color="#b6361a"/><stop offset=".1" stop-color="#b82c90"/><stop offset=".183" stop-color="#9531ab"/><stop offset=".299" stop-color="#464fb0"/><stop offset=".316" stop-color="#464fb0"/><stop offset=".366" stop-color="#9a30aa"/><stop offset=".399" stop-color="#b42d9d"/><stop offset=".432" stop-color="#b82b63"/><stop offset=".449" stop-color="#b7332f"/><stop offset=".465" stop-color="#b6361a"/><stop offset="1" stop-color="#b6361a"/></linearGradient><linearGradient id="g269" gradientUnits="userSpaceOnUse" x1="2437.0" y1="884.01" x2="2437.0" y2="943.50" gradientTransform="matrix(1 0.14153 0 1 0 -344.918)"><stop offset="0" stop-color="#b6361a"/><stop offset=".538" stop-color="#b6361a"/><stop offset=".555" stop-color="#b63425"/><stop offset=".588" stop-color="#b82b7f"/><stop offset=".605" stop-color="#b52d9c"/><stop offset=".622" stop-color="#a92fa7"/><stop offset=".656" stop-color="#5d42b0"/><stop offset=".706" stop-color="#8333ae"/><stop offset=".756" stop-color="#ac2ea4"/><stop offset=".807" stop-color="#b82b8c"/><stop offset=".908" stop-color="#b6361a"/><stop offset=".958" stop-color="#b63424"/><stop offset="1" stop-color="#b82b5f"/></linearGradient><linearGradient id="g270" gradientUnits="userSpaceOnUse" x1="2437.0" y1="939.50" x2="2437.0" y2="999.17" gradientTransform="matrix(1 0.18787 0 1 0 -457.835)"><stop offset="0" stop-color="#b6361a"/><stop offset=".017" stop-color="#b6361a"/><stop offset=".101" stop-color="#b82b81"/><stop offset=".168" stop-color="#ab2ea5"/><stop offset=".302" stop-color="#5d42b0"/><stop offset=".318" stop-color="#5f41b0"/><stop offset=".369" stop-color="#a92fa7"/><stop offset=".402" stop-color="#b82c96"/><stop offset=".452" stop-color="#b6361a"/><stop offset="1.005" stop-color="#b6361a"/></linearGradient><linearGradient id="g271" gradientUnits="userSpaceOnUse" x1="2443.0" y1="885.33" x2="2443.0" y2="944.50" gradientTransform="matrix(1 0.14327 0 1 0 -350.010)"><stop offset="0" stop-color="#b6361a"/><stop offset=".558" stop-color="#b6361a"/><stop offset=".608" stop-color="#b82c90"/><stop offset=".642" stop-color="#9631ab"/><stop offset=".659" stop-color="#7635b0"/><stop offset=".744" stop-color="#b12da0"/><stop offset=".828" stop-color="#b82b63"/><stop offset=".879" stop-color="#b6351f"/><stop offset=".963" stop-color="#b6361a"/><stop offset="1" stop-color="#b72f49"/></linearGradient><linearGradient id="g272" gradientUnits="userSpaceOnUse" x1="2443.0" y1="940.50" x2="2443.0" y2="999.69" gradientTransform="matrix(1 0.19507 0 1 0 -476.565)"><stop offset="0" stop-color="#b6361a"/><stop offset=".034" stop-color="#b6361c"/><stop offset=".118" stop-color="#b82b80"/><stop offset=".169" stop-color="#b22d9f"/><stop offset=".304" stop-color="#7635b0"/><stop offset=".321" stop-color="#7834b0"/><stop offset=".355" stop-color="#a62fa8"/><stop offset=".389" stop-color="#b52d9c"/><stop offset=".422" stop-color="#b82b61"/><stop offset=".439" stop-color="#b6332d"/><stop offset=".456" stop-color="#b6361a"/><stop offset="1" stop-color="#b6361a"/></linearGradient><linearGradient id="g273" gradientUnits="userSpaceOnUse" x1="2449.0" y1="886.66" x2="2449.0" y2="945.51" gradientTransform="matrix(1 0.14465 0 1 0 -354.243)"><stop offset="0" stop-color="#b6361a"/><stop offset=".578" stop-color="#b63523"/><stop offset=".612" stop-color="#b82b7e"/><stop offset=".629" stop-color="#b52c9c"/><stop offset=".663" stop-color="#8d32ad"/><stop offset=".714" stop-color="#b12da1"/><stop offset=".799" stop-color="#b82a6a"/><stop offset=".867" stop-color="#b6361a"/><stop offset=".986" stop-color="#b63521"/><stop offset="1.003" stop-color="#b73236"/></linearGradient><linearGradient id="g274" gradientUnits="userSpaceOnUse" x1="2449.0" y1="941.50" x2="2449.0" y2="1000.21" gradientTransform="matrix(1 0.20146 0 1 0 -493.376)"><stop offset="0" stop-color="#b6361a"/><stop offset=".051" stop-color="#b6351d"/><stop offset=".136" stop-color="#b82b7d"/><stop offset=".187" stop-color="#b42d9e"/><stop offset=".324" stop-color="#8f32ac"/><stop offset=".375" stop-color="#b32d9f"/><stop offset=".392" stop-color="#b82c94"/><stop offset=".443" stop-color="#b6361a"/><stop offset="1.005" stop-color="#b6361a"/></linearGradient><linearGradient id="g275" gradientUnits="userSpaceOnUse" x1="2455.0" y1="888.01" x2="2455.0" y2="946.53" gradientTransform="matrix(1 0.14567 0 1 0 -357.610)"><stop offset="0" stop-color="#b6361a"/><stop offset=".581" stop-color="#b6361a"/><stop offset=".598" stop-color="#b7313a"/><stop offset=".632" stop-color="#b82b8d"/><stop offset=".649" stop-color="#ae2ea3"/><stop offset=".718" stop-color="#b82c94"/><stop offset=".803" stop-color="#b72f48"/><stop offset=".837" stop-color="#b6351f"/><stop offset=".991" stop-color="#b6361a"/><stop offset="1.008" stop-color="#b63428"/></linearGradient><linearGradient id="g276" gradientUnits="userSpaceOnUse" x1="2455.0" y1="942.51" x2="2455.0" y2="1000.76" gradientTransform="matrix(1 0.20703 0 1 0 -508.254)"><stop offset="0" stop-color="#b6361a"/><stop offset=".069" stop-color="#b6351d"/><stop offset=".172" stop-color="#b82b86"/><stop offset=".24" stop-color="#af2ea2"/><stop offset=".326" stop-color="#a62fa8"/><stop offset=".378" stop-color="#b72c9b"/><stop offset=".412" stop-color="#b82c5b"/><stop offset=".429" stop-color="#b63427"/><stop offset=".481" stop-color="#b6361a"/><stop offset="1" stop-color="#b6361a"/></linearGradient><linearGradient id="g277" gradientUnits="userSpaceOnUse" x1="2461.0" y1="889.37" x2="2461.0" y2="947.55" gradientTransform="matrix(1 0.22853 0 1 0 -562.403)"><stop offset="0" stop-color="#b6361a"/><stop offset=".602" stop-color="#b6361c"/><stop offset=".636" stop-color="#b82b7a"/><stop offset=".653" stop-color="#b72c9b"/><stop offset=".722" stop-color="#b82b7c"/><stop offset=".825" stop-color="#b6361a"/><stop offset="1" stop-color="#b6361a"/></linearGradient><linearGradient id="g278" gradientUnits="userSpaceOnUse" x1="2461.0" y1="943.53" x2="2461.0" y2="1001.31" gradientTransform="matrix(1 0.21178 0 1 0 -521.183)"><stop offset="0" stop-color="#b6361a"/><stop offset=".087" stop-color="#b6361c"/><stop offset=".173" stop-color="#b82a74"/><stop offset=".242" stop-color="#b42d9d"/><stop offset=".363" stop-color="#b52c9c"/><stop offset=".381" stop-color="#b82c8f"/><stop offset=".433" stop-color="#b6361a"/><stop offset="1.004" stop-color="#b6361a"/></linearGradient><linearGradient id="g279" gradientUnits="userSpaceOnUse" x1="2467.0" y1="890.75" x2="2467.0" y2="948.57" gradientTransform="matrix(1 0.22961 0 1 0 -566.452)"><stop offset="0" stop-color="#b6361a"/><stop offset="1.003" stop-color="#b6361a"/></linearGradient><linearGradient id="g280" gradientUnits="userSpaceOnUse" x1="2467.0" y1="944.55" x2="2467.0" y2="1001.88" gradientTransform="matrix(1 0.21571 0 1 0 -532.149)"><stop offset="0" stop-color="#b6361a"/><stop offset=".105" stop-color="#b6361a"/><stop offset=".209" stop-color="#b82b7b"/><stop offset=".279" stop-color="#b62c9c"/><stop offset=".366" stop-color="#b82c9a"/><stop offset=".401" stop-color="#b72d53"/><stop offset=".419" stop-color="#b6351f"/><stop offset="1" stop-color="#b6361a"/></linearGradient><linearGradient id="g281" gradientUnits="userSpaceOnUse" x1="2473.0" y1="892.12" x2="2473.0" y2="949.60" gradientTransform="matrix(1 0.23027 0 1 0 -569.457)"><stop offset="0" stop-color="#b6361a"/><stop offset="1" stop-color="#b6361a"/></linearGradient><linearGradient id="g282" gradientUnits="userSpaceOnUse" x1="2473.0" y1="945.57" x2="2473.0" y2="1002.46" gradientTransform="matrix(1 0.21882 0 1 0 -541.137)"><stop offset="0" stop-color="#b6361a"/><stop offset=".123" stop-color="#b6361a"/><stop offset=".264" stop-color="#b82b84"/><stop offset=".352" stop-color="#b82c8f"/><stop offset=".387" stop-color="#b82b5f"/><stop offset=".404" stop-color="#b73331"/><stop offset=".422" stop-color="#b6361a"/><stop offset="1.002" stop-color="#b6361a"/></linearGradient><linearGradient id="g283" gradientUnits="userSpaceOnUse" x1="2479.0" y1="893.50" x2="2479.0" y2="950.64" gradientTransform="matrix(1 0.23046 0 1 0 -571.310)"><stop offset="0" stop-color="#b6361a"/><stop offset="1" stop-color="#b6361a"/></linearGradient><linearGradient id="g284" gradientUnits="userSpaceOnUse" x1="2479.0" y1="946.60" x2="2479.0" y2="1003.05" gradientTransform="matrix(1 0.22111 0 1 0 -548.133)"><stop offset="0" stop-color="#b6361a"/><stop offset=".159" stop-color="#b63522"/><stop offset=".301" stop-color="#b82b79"/><stop offset=".354" stop-color="#b82b79"/><stop offset=".407" stop-color="#b6361a"/><stop offset="1" stop-color="#b6361a"/></linearGradient><linearGradient id="g285" gradientUnits="userSpaceOnUse" x1="2485.0" y1="894.89" x2="2485.0" y2="951.68" gradientTransform="matrix(1 0.23001 0 1 0 -571.575)"><stop offset="0" stop-color="#b6361a"/><stop offset="1.004" stop-color="#b6361a"/></linearGradient><linearGradient id="g286" gradientUnits="userSpaceOnUse" x1="2485.0" y1="947.64" x2="2485.0" y2="1003.66" gradientTransform="matrix(1 0.10152 0 1 0 -252.280)"><stop offset="0" stop-color="#b6361a"/><stop offset=".178" stop-color="#b6351d"/><stop offset=".339" stop-color="#b82a68"/><stop offset=".393" stop-color="#b63520"/><stop offset="1" stop-color="#b6361a"/></linearGradient><linearGradient id="g287" gradientUnits="userSpaceOnUse" x1="2491.0" y1="896.27" x2="2491.0" y2="952.72" gradientTransform="matrix(1 0.22877 0 1 0 -569.866)"><stop offset="0" stop-color="#b6361a"/><stop offset="1" stop-color="#b6361a"/></linearGradient><linearGradient id="g288" gradientUnits="userSpaceOnUse" x1="2491.0" y1="948.68" x2="2491.0" y2="1004.29" gradientTransform="matrix(1 0.10380 0 1 0 -258.563)"><stop offset="0" stop-color="#b6361a"/><stop offset="1.007" stop-color="#b6361a"/></linearGradient><linearGradient id="g289" gradientUnits="userSpaceOnUse" x1="2497.0" y1="897.64" x2="2497.0" y2="953.77" gradientTransform="matrix(1 0.22673 0 1 0 -566.144)"><stop offset="0" stop-color="#b6361a"/><stop offset="1" stop-color="#b6361a"/></linearGradient><linearGradient id="g290" gradientUnits="userSpaceOnUse" x1="2497.0" y1="949.72" x2="2497.0" y2="1004.93" gradientTransform="matrix(1 0.10657 0 1 0 -266.095)"><stop offset="0" stop-color="#b6361a"/><stop offset="1" stop-color="#b6361a"/></linearGradient><linearGradient id="g291" gradientUnits="userSpaceOnUse" x1="2506.0" y1="899.00" x2="2506.0" y2="955.88" gradientTransform="matrix(1 0.22755 0 1 0 -570.229)"><stop offset="0" stop-color="#b6361a"/><stop offset="1.002" stop-color="#b6361a"/></linearGradient><linearGradient id="g292" gradientUnits="userSpaceOnUse" x1="2506.0" y1="950.77" x2="2506.0" y2="1006.25" gradientTransform="matrix(1 0.11033 0 1 0 -276.492)"><stop offset="0" stop-color="#b6361a"/><stop offset="1" stop-color="#b6361a"/></linearGradient><linearGradient id="g293" gradientUnits="userSpaceOnUse" x1="2518.0" y1="901.73" x2="2518.0" y2="958.02" gradientTransform="matrix(1 0.23267 0 1 0 -585.867)"><stop offset="0" stop-color="#b6361a"/><stop offset="1" stop-color="#b6361a"/></linearGradient><linearGradient id="g294" gradientUnits="userSpaceOnUse" x1="2518.0" y1="952.88" x2="2518.0" y2="1007.63" gradientTransform="matrix(1 0.11483 0 1 0 -289.135)"><stop offset="0" stop-color="#b6361a"/><stop offset="1.005" stop-color="#b6361a"/></linearGradient><linearGradient id="g295" gradientUnits="userSpaceOnUse" x1="2530.0" y1="904.52" x2="2530.0" y2="1009.05" gradientTransform="matrix(1 0.18008 0 1 0 -455.591)"><stop offset="0" stop-color="#b6361a"/><stop offset="1.004" stop-color="#b6361a"/></linearGradient><linearGradient id="g296" gradientUnits="userSpaceOnUse" x1="2542.0" y1="907.37" x2="2542.0" y2="1010.52" gradientTransform="matrix(1 0.18247 0 1 0 -463.851)"><stop offset="0" stop-color="#b6361a"/><stop offset="1" stop-color="#b6361a"/></linearGradient><linearGradient id="g297" gradientUnits="userSpaceOnUse" x1="2554.0" y1="910.21" x2="2554.0" y2="1012.00" gradientTransform="matrix(1 0.18590 0 1 0 -474.783)"><stop offset="0" stop-color="#b6361a"/><stop offset="1.002" stop-color="#b6361a"/></linearGradient><linearGradient id="g298" gradientUnits="userSpaceOnUse" x1="2566.0" y1="913.00" x2="2566.0" y2="1013.57" gradientTransform="matrix(1 0.19207 0 1 0 -492.845)"><stop offset="0" stop-color="#b6361a"/><stop offset="1.004" stop-color="#b6361a"/></linearGradient><linearGradient id="g299" gradientUnits="userSpaceOnUse" x1="2578.0" y1="915.59" x2="2578.0" y2="1015.34" gradientTransform="matrix(1 0.20045 0 1 0 -516.759)"><stop offset="0" stop-color="#b6361a"/><stop offset="1.002" stop-color="#b6361a"/></linearGradient><linearGradient id="g300" gradientUnits="userSpaceOnUse" x1="2590.0" y1="918.02" x2="2590.0" y2="1017.32" gradientTransform="matrix(1 0.20954 0 1 0 -542.717)"><stop offset="0" stop-color="#b6361a"/><stop offset="1" stop-color="#b6361a"/></linearGradient><linearGradient id="g301" gradientUnits="userSpaceOnUse" x1="2602.0" y1="920.51" x2="2602.0" y2="1019.51" gradientTransform="matrix(1 0.21938 0 1 0 -570.817)"><stop offset="0" stop-color="#b6361a"/><stop offset="1" stop-color="#b6361a"/></linearGradient><linearGradient id="g302" gradientUnits="userSpaceOnUse" x1="2614.0" y1="923.29" x2="2614.0" y2="1021.82" gradientTransform="matrix(1 0.22824 0 1 0 -596.611)"><stop offset="0" stop-color="#b6361a"/><stop offset="1.005" stop-color="#b6361a"/></linearGradient><linearGradient id="g303" gradientUnits="userSpaceOnUse" x1="2626.0" y1="926.60" x2="2626.0" y2="1024.06" gradientTransform="matrix(1 0.23393 0 1 0 -614.288)"><stop offset="0" stop-color="#b6361a"/><stop offset="1" stop-color="#b6361a"/></linearGradient><linearGradient id="g304" gradientUnits="userSpaceOnUse" x1="2638.0" y1="930.35" x2="2638.0" y2="1026.12" gradientTransform="matrix(1 0.23375 0 1 0 -616.629)"><stop offset="0" stop-color="#b6361a"/><stop offset="1.002" stop-color="#b6361a"/></linearGradient><linearGradient id="g305" gradientUnits="userSpaceOnUse" x1="2650.0" y1="934.45" x2="2650.0" y2="1028.03" gradientTransform="matrix(1 0.22881 0 1 0 -606.338)"><stop offset="0" stop-color="#b6361a"/><stop offset="1.004" stop-color="#b6361a"/></linearGradient><linearGradient id="g306" gradientUnits="userSpaceOnUse" x1="2662.0" y1="938.97" x2="2662.0" y2="1029.99" gradientTransform="matrix(1 0.22812 0 1 0 -607.260)"><stop offset="0" stop-color="#b6361a"/><stop offset="1" stop-color="#b6361a"/></linearGradient><linearGradient id="g307" gradientUnits="userSpaceOnUse" x1="2674.0" y1="943.99" x2="2674.0" y2="1031.96" gradientTransform="matrix(1 0.23536 0 1 0 -629.358)"><stop offset="0" stop-color="#b6361a"/><stop offset="1" stop-color="#b6361a"/></linearGradient><linearGradient id="g308" gradientUnits="userSpaceOnUse" x1="2686.0" y1="950.34" x2="2686.0" y2="1033.90" gradientTransform="matrix(1 0.25361 0 1 0 -681.194)"><stop offset="0" stop-color="#b6361a"/><stop offset="1.005" stop-color="#b6361a"/></linearGradient><linearGradient id="g309" gradientUnits="userSpaceOnUse" x1="2698.0" y1="957.44" x2="2698.0" y2="1035.76" gradientTransform="matrix(1 0.28070 0 1 0 -757.328)"><stop offset="0" stop-color="#b6361a"/><stop offset="1" stop-color="#b6361a"/></linearGradient><linearGradient id="g310" gradientUnits="userSpaceOnUse" x1="2710.0" y1="964.54" x2="2710.0" y2="1037.50" gradientTransform="matrix(1 0.30722 0 1 0 -832.574)"><stop offset="0" stop-color="#b6361a"/><stop offset="1" stop-color="#b6361a"/></linearGradient><linearGradient id="g311" gradientUnits="userSpaceOnUse" x1="2722.0" y1="971.64" x2="2722.0" y2="1039.06" gradientTransform="matrix(1 0.32869 0 1 0 -894.700)"><stop offset="0" stop-color="#b6361a"/><stop offset="1" stop-color="#b6361a"/></linearGradient><linearGradient id="g312" gradientUnits="userSpaceOnUse" x1="2734.0" y1="979.27" x2="2734.0" y2="1040.32" gradientTransform="matrix(1 0.34859 0 1 0 -953.056)"><stop offset="0" stop-color="#b6361a"/><stop offset="1" stop-color="#b6361a"/></linearGradient><linearGradient id="g313" gradientUnits="userSpaceOnUse" x1="2746.0" y1="987.18" x2="2746.0" y2="1041.11" gradientTransform="matrix(1 0.36905 0 1 0 -1013.425)"><stop offset="0" stop-color="#b6361a"/><stop offset="1.001" stop-color="#b6361a"/></linearGradient><linearGradient id="g314" gradientUnits="userSpaceOnUse" x1="2758.0" y1="995.09" x2="2758.0" y2="1041.38" gradientTransform="matrix(1 0.39272 0 1 0 -1083.117)"><stop offset="0" stop-color="#b6361a"/><stop offset="1" stop-color="#b6361a"/></linearGradient><linearGradient id="g315" gradientUnits="userSpaceOnUse" x1="2770.0" y1="1003.00" x2="2770.0" y2="1041.38" gradientTransform="matrix(1 0.43708 0 1 0 -1210.701)"><stop offset="0" stop-color="#b6361a"/><stop offset="1" stop-color="#b6361a"/></linearGradient><linearGradient id="g316" gradientUnits="userSpaceOnUse" x1="2782.0" y1="1011.53" x2="2782.0" y2="1041.27" gradientTransform="matrix(1 0.47833 0 1 0 -1330.725)"><stop offset="0" stop-color="#b6361a"/><stop offset="1.009" stop-color="#b6361a"/></linearGradient><linearGradient id="g317" gradientUnits="userSpaceOnUse" x1="2794.0" y1="1020.07" x2="2794.0" y2="1040.87" gradientTransform="matrix(1 0.50188 0 1 0 -1402.256)"><stop offset="0" stop-color="#b6361a"/><stop offset="1.009" stop-color="#b6361a"/></linearGradient><linearGradient id="g318" gradientUnits="userSpaceOnUse" x1="2804.5" y1="1028.60" x2="2804.5" y2="1040.31" gradientTransform="matrix(1 0.50108 0 1 0 -1405.292)"><stop offset="0" stop-color="#b6361a"/><stop offset="1.024" stop-color="#b6361a"/></linearGradient><clipPath id="deckclip"><polygon points="41.0,989.0 43.0,988.2 45.0,987.3 47.0,986.5 49.0,985.6 51.0,984.8 53.0,983.9 55.0,983.1 57.0,982.3 59.0,981.4 61.0,980.6 63.0,979.7 65.0,978.9 67.0,978.0 69.0,977.2 71.0,976.3 73.0,975.5 75.0,974.7 77.0,973.8 79.0,973.0 81.0,972.1 83.0,971.3 85.0,970.4 87.0,969.6 89.0,968.8 91.0,967.9 93.0,967.1 95.0,966.2 97.0,965.4 99.0,964.5 101.0,963.7 103.0,962.9 105.0,962.0 107.0,961.2 109.0,960.3 111.0,959.5 113.0,958.6 115.0,957.8 117.0,956.9 119.0,956.1 121.0,955.3 123.0,954.4 125.0,953.6 127.0,952.7 129.0,951.9 131.0,951.0 133.0,950.2 135.0,949.4 137.0,948.5 139.0,947.7 141.0,946.8 143.0,946.0 145.0,945.1 147.0,944.3 149.0,943.5 151.0,942.6 152.0,942.2 152.0,904.5 156.0,899.8 160.0,898.4 164.0,897.0 168.0,895.9 172.0,894.9 176.0,894.0 180.0,893.1 184.0,892.3 188.0,891.4 192.0,890.6 196.0,889.8 200.0,888.9 204.0,888.1 208.0,887.3 212.0,886.5 216.0,885.7 220.0,884.9 224.0,884.0 228.0,883.2 232.0,882.4 236.0,881.6 240.0,880.9 244.0,880.1 248.0,879.3 252.0,878.5 256.0,877.7 260.0,877.0 264.0,876.2 268.0,875.5 272.0,874.7 276.0,874.0 280.0,873.3 284.0,872.6 288.0,872.0 292.0,871.3 296.0,870.7 300.0,870.0 304.0,869.4 308.0,868.7 312.0,868.1 316.0,867.5 320.0,866.9 324.0,866.3 328.0,865.7 332.0,865.1 336.0,864.5 340.0,863.9 344.0,863.3 348.0,862.7 352.0,862.1 356.0,861.5 360.0,860.9 364.0,860.4 368.0,859.8 372.0,859.1 376.0,858.5 380.0,857.9 384.0,857.3 388.0,856.7 392.0,856.1 396.0,855.5 400.0,854.9 404.0,854.3 408.0,853.6 412.0,853.0 416.0,852.4 420.0,851.8 424.0,851.2 428.0,850.6 432.0,850.0 436.0,849.4 440.0,848.9 444.0,848.3 448.0,847.7 452.0,847.1 456.0,846.6 460.0,846.0 464.0,845.5 468.0,844.9 472.0,844.4 476.0,843.9 480.0,843.4 484.0,842.9 488.0,842.4 492.0,841.9 496.0,841.4 500.0,840.9 504.0,840.4 508.0,839.9 512.0,839.5 516.0,839.0 520.0,838.6 524.0,838.1 528.0,837.7 532.0,837.2 536.0,836.8 540.0,836.3 544.0,835.9 548.0,835.5 552.0,835.1 556.0,834.6 560.0,834.2 564.0,833.8 568.0,833.4 572.0,833.0 576.0,832.6 580.0,832.2 584.0,831.8 588.0,831.4 592.0,831.0 596.0,830.6 600.0,830.3 604.0,829.9 608.0,829.5 612.0,829.2 616.0,828.8 620.0,828.5 624.0,828.2 628.0,827.8 632.0,827.5 636.0,827.2 640.0,826.9 644.0,826.5 648.0,826.2 652.0,825.9 656.0,825.6 660.0,825.3 664.0,825.0 668.0,824.7 672.0,824.4 676.0,824.0 680.0,823.7 684.0,823.4 688.0,823.1 692.0,822.8 696.0,822.5 700.0,822.2 704.0,821.8 708.0,821.5 712.0,821.2 716.0,820.9 720.0,820.6 724.0,820.3 728.0,819.9 732.0,819.6 736.0,819.3 740.0,819.0 744.0,818.7 748.0,818.4 752.0,818.1 756.0,817.8 760.0,817.5 764.0,817.2 768.0,816.9 772.0,816.6 776.0,816.3 780.0,816.0 784.0,815.7 788.0,815.4 792.0,815.2 796.0,814.9 800.0,814.6 804.0,814.3 808.0,814.1 812.0,813.8 816.0,813.6 820.0,813.3 824.0,813.1 828.0,812.8 832.0,812.6 836.0,812.3 840.0,812.1 844.0,811.9 848.0,811.7 852.0,811.4 856.0,811.2 860.0,811.0 864.0,810.8 868.0,810.6 872.0,810.4 876.0,810.2 880.0,810.0 884.0,809.8 888.0,809.6 892.0,809.4 896.0,809.2 900.0,809.0 904.0,808.8 908.0,808.6 912.0,808.4 916.0,808.2 920.0,808.0 924.0,807.9 928.0,807.7 932.0,807.5 936.0,807.3 940.0,807.1 944.0,806.8 948.0,806.6 952.0,806.4 956.0,806.2 960.0,806.0 964.0,805.8 968.0,805.6 972.0,805.4 976.0,805.3 980.0,805.1 984.0,804.9 988.0,804.7 992.0,804.6 996.0,804.4 1000.0,804.3 1004.0,804.1 1008.0,804.0 1012.0,803.8 1016.0,803.7 1020.0,803.6 1024.0,803.5 1028.0,803.3 1032.0,803.2 1036.0,803.1 1040.0,803.0 1044.0,802.9 1048.0,802.8 1052.0,802.7 1056.0,802.6 1060.0,802.5 1064.0,802.4 1068.0,802.3 1072.0,802.2 1076.0,802.1 1080.0,802.0 1084.0,801.9 1088.0,801.8 1092.0,801.7 1096.0,801.6 1100.0,801.5 1104.0,801.5 1108.0,801.4 1112.0,801.3 1116.0,801.2 1120.0,801.1 1124.0,801.0 1128.0,800.9 1132.0,800.9 1136.0,800.8 1140.0,800.7 1144.0,800.6 1148.0,800.5 1152.0,800.5 1156.0,800.4 1160.0,800.3 1164.0,800.2 1168.0,800.1 1172.0,800.1 1176.0,800.0 1180.0,799.9 1184.0,799.8 1188.0,799.8 1192.0,799.7 1196.0,799.6 1200.0,799.6 1204.0,799.5 1208.0,799.4 1212.0,799.4 1216.0,799.3 1220.0,799.2 1224.0,799.2 1228.0,799.1 1232.0,799.1 1236.0,799.0 1240.0,798.9 1244.0,798.9 1248.0,798.8 1252.0,798.8 1256.0,798.7 1260.0,798.7 1264.0,798.6 1268.0,798.6 1272.0,798.5 1276.0,798.5 1280.0,798.5 1284.0,798.4 1288.0,798.4 1292.0,798.4 1296.0,798.4 1300.0,798.4 1304.0,798.4 1308.0,798.4 1312.0,798.3 1316.0,798.3 1320.0,798.4 1324.0,798.4 1328.0,798.4 1332.0,798.4 1336.0,798.4 1340.0,798.4 1344.0,798.5 1348.0,798.5 1352.0,798.5 1356.0,798.5 1360.0,798.6 1364.0,798.6 1368.0,798.7 1372.0,798.7 1376.0,798.8 1380.0,798.8 1384.0,798.8 1388.0,798.9 1392.0,799.0 1396.0,799.0 1400.0,799.1 1404.0,799.1 1408.0,799.2 1412.0,799.2 1416.0,799.3 1420.0,799.3 1424.0,799.4 1428.0,799.4 1432.0,799.5 1436.0,799.5 1440.0,799.5 1444.0,799.6 1448.0,799.6 1452.0,799.6 1456.0,799.6 1460.0,799.7 1464.0,799.7 1468.0,799.7 1472.0,799.8 1476.0,799.8 1480.0,799.9 1484.0,800.0 1488.0,800.1 1492.0,800.3 1496.0,800.4 1500.0,800.5 1504.0,800.6 1508.0,800.7 1512.0,800.9 1516.0,801.0 1520.0,801.1 1524.0,801.3 1528.0,801.4 1532.0,801.5 1536.0,801.7 1540.0,801.8 1544.0,802.0 1548.0,802.1 1552.0,802.2 1556.0,802.4 1560.0,802.5 1564.0,802.7 1568.0,802.8 1572.0,803.0 1576.0,803.1 1580.0,803.3 1584.0,803.4 1588.0,803.6 1592.0,803.7 1596.0,803.9 1600.0,804.0 1604.0,804.2 1608.0,804.3 1612.0,804.5 1616.0,804.6 1620.0,804.8 1624.0,804.9 1628.0,805.1 1632.0,805.3 1636.0,805.4 1640.0,805.6 1644.0,805.8 1648.0,805.9 1652.0,806.1 1656.0,806.3 1660.0,806.4 1664.0,806.6 1668.0,806.8 1672.0,806.9 1676.0,807.1 1680.0,807.3 1684.0,807.4 1688.0,807.6 1692.0,807.8 1696.0,807.9 1700.0,808.1 1704.0,808.3 1708.0,808.5 1712.0,808.6 1716.0,808.8 1720.0,809.0 1724.0,809.2 1728.0,809.4 1732.0,809.5 1736.0,809.7 1740.0,809.9 1744.0,810.1 1748.0,810.3 1752.0,810.5 1756.0,810.7 1760.0,810.9 1764.0,811.1 1768.0,811.3 1772.0,811.5 1776.0,811.7 1780.0,811.9 1784.0,812.1 1788.0,812.3 1792.0,812.5 1796.0,812.8 1800.0,813.0 1804.0,813.2 1808.0,813.5 1812.0,813.7 1816.0,814.0 1820.0,814.3 1824.0,814.5 1828.0,814.8 1832.0,815.1 1836.0,815.4 1840.0,815.7 1844.0,816.0 1848.0,816.3 1852.0,816.6 1856.0,816.9 1860.0,817.3 1864.0,817.6 1868.0,817.9 1872.0,818.3 1876.0,818.6 1880.0,818.9 1884.0,819.3 1888.0,819.6 1892.0,819.9 1896.0,820.3 1900.0,820.6 1904.0,820.9 1908.0,821.2 1912.0,821.6 1916.0,821.9 1920.0,822.2 1924.0,822.5 1928.0,822.8 1932.0,823.2 1936.0,823.5 1940.0,823.8 1944.0,824.1 1948.0,824.5 1952.0,824.8 1956.0,825.1 1960.0,825.5 1964.0,825.8 1968.0,826.2 1972.0,826.5 1976.0,826.8 1980.0,827.2 1984.0,827.6 1988.0,827.9 1992.0,828.3 1996.0,828.6 2000.0,829.0 2004.0,829.4 2008.0,829.7 2012.0,830.1 2016.0,830.4 2020.0,830.8 2024.0,831.2 2028.0,831.5 2032.0,831.9 2036.0,832.2 2040.0,832.6 2044.0,833.0 2048.0,833.4 2052.0,833.8 2056.0,834.2 2060.0,834.6 2064.0,835.0 2068.0,835.4 2072.0,835.8 2076.0,836.3 2080.0,836.7 2084.0,837.2 2088.0,837.6 2092.0,838.1 2096.0,838.5 2100.0,839.0 2104.0,839.5 2108.0,839.9 2112.0,840.4 2116.0,840.9 2120.0,841.4 2124.0,841.8 2128.0,842.3 2132.0,842.8 2136.0,843.3 2140.0,843.8 2144.0,844.2 2148.0,844.7 2152.0,845.2 2156.0,845.7 2160.0,846.2 2164.0,846.7 2168.0,847.2 2172.0,847.7 2176.0,848.2 2180.0,848.6 2184.0,849.1 2188.0,849.6 2192.0,850.1 2196.0,850.6 2200.0,851.1 2204.0,851.6 2208.0,852.1 2212.0,852.6 2216.0,853.1 2220.0,853.6 2224.0,854.1 2228.0,854.6 2232.0,855.1 2236.0,855.6 2240.0,856.2 2244.0,856.7 2248.0,857.2 2252.0,857.7 2256.0,858.2 2260.0,858.7 2264.0,859.2 2268.0,859.8 2272.0,860.3 2276.0,860.8 2280.0,861.3 2284.0,861.9 2288.0,862.4 2292.0,862.9 2296.0,863.5 2300.0,864.0 2304.0,864.5 2308.0,865.1 2312.0,865.7 2316.0,866.2 2320.0,866.8 2324.0,867.3 2328.0,867.9 2332.0,868.5 2336.0,869.1 2340.0,869.7 2344.0,870.3 2348.0,870.9 2352.0,871.5 2356.0,872.1 2360.0,872.8 2364.0,873.5 2368.0,874.1 2372.0,874.8 2376.0,875.5 2380.0,876.3 2384.0,877.0 2388.0,877.7 2392.0,878.5 2396.0,879.2 2400.0,880.0 2404.0,880.8 2408.0,881.6 2412.0,882.4 2416.0,883.2 2420.0,884.0 2424.0,884.9 2428.0,885.7 2432.0,886.6 2436.0,887.4 2440.0,888.3 2444.0,889.2 2448.0,890.1 2452.0,891.0 2456.0,891.9 2460.0,892.8 2464.0,893.7 2468.0,894.7 2472.0,895.6 2476.0,896.5 2480.0,897.4 2484.0,898.3 2488.0,899.3 2492.0,900.2 2496.0,901.1 2500.0,902.0 2504.0,902.9 2508.0,903.8 2512.0,904.7 2516.0,905.7 2520.0,906.6 2524.0,907.5 2528.0,908.5 2532.0,909.4 2536.0,910.4 2540.0,911.3 2544.0,912.3 2548.0,913.2 2552.0,914.1 2556.0,915.1 2560.0,916.0 2564.0,916.9 2568.0,917.8 2572.0,918.6 2576.0,919.4 2580.0,920.2 2584.0,921.0 2588.0,921.8 2592.0,922.7 2596.0,923.5 2600.0,924.4 2604.0,925.3 2608.0,926.3 2612.0,927.3 2616.0,928.4 2620.0,929.6 2624.0,930.8 2628.0,932.1 2632.0,933.3 2636.0,934.7 2640.0,936.0 2644.0,937.5 2648.0,938.9 2652.0,940.4 2656.0,942.0 2660.0,943.6 2664.0,945.3 2668.0,947.0 2672.0,948.8 2676.0,951.0 2680.0,953.3 2684.0,955.7 2688.0,958.1 2692.0,960.4 2696.0,962.8 2700.0,965.2 2704.0,967.5 2708.0,969.9 2712.0,972.3 2716.0,974.6 2720.0,977.0 2724.0,979.6 2728.0,982.3 2732.0,984.9 2736.0,987.5 2740.0,990.2 2744.0,992.8 2748.0,995.5 2752.0,998.1 2756.0,1000.7 2760.0,1003.4 2764.0,1006.0 2768.0,1008.8 2772.0,1011.7 2776.0,1014.5 2780.0,1017.4 2784.0,1020.2 2788.0,1023.1 2792.0,1025.9 2796.0,1028.8 2800.0,1031.6 2804.0,1034.4 2808.0,1037.3 2809.0,1038.0 2809.0,1041.5 2803.0,1041.7 2797.0,1042.0 2791.0,1042.2 2785.0,1042.5 2779.0,1042.7 2773.0,1042.8 2767.0,1042.9 2761.0,1042.9 2755.0,1042.7 2749.0,1042.5 2743.0,1042.1 2737.0,1041.5 2731.0,1040.9 2725.0,1040.2 2719.0,1039.4 2713.0,1038.6 2707.0,1037.7 2701.0,1036.8 2695.0,1035.9 2689.0,1034.9 2683.0,1034.0 2677.0,1033.0 2671.0,1032.0 2665.0,1031.0 2659.0,1030.0 2653.0,1029.1 2647.0,1028.1 2641.0,1027.1 2635.0,1026.1 2629.0,1025.0 2623.0,1023.9 2617.0,1022.7 2611.0,1021.6 2605.0,1020.5 2599.0,1019.4 2593.0,1018.3 2587.0,1017.3 2581.0,1016.4 2575.0,1015.5 2569.0,1014.7 2563.0,1013.9 2557.0,1013.1 2551.0,1012.4 2545.0,1011.6 2539.0,1010.9 2533.0,1010.2 2527.0,1009.5 2521.0,1008.8 2515.0,1008.1 2509.0,1007.4 2503.0,1006.8 2497.0,1006.1 2491.0,1005.5 2485.0,1004.9 2479.0,1004.3 2473.0,1003.7 2467.0,1003.1 2461.0,1002.5 2455.0,1002.0 2449.0,1001.5 2443.0,1000.9 2437.0,1000.4 2431.0,999.9 2425.0,999.4 2419.0,999.0 2413.0,998.5 2407.0,998.0 2401.0,997.6 2395.0,997.1 2389.0,996.7 2383.0,996.3 2377.0,995.9 2371.0,995.4 2365.0,995.0 2359.0,994.6 2353.0,994.2 2347.0,993.8 2341.0,993.5 2335.0,993.1 2329.0,992.7 2323.0,992.3 2317.0,991.9 2311.0,991.5 2305.0,991.2 2299.0,990.8 2293.0,990.4 2287.0,990.1 2281.0,989.7 2275.0,989.3 2269.0,989.0 2263.0,988.6 2257.0,988.3 2251.0,987.9 2245.0,987.5 2239.0,987.2 2233.0,986.8 2227.0,986.5 2221.0,986.1 2215.0,985.8 2209.0,985.4 2203.0,985.1 2197.0,984.8 2191.0,984.4 2185.0,984.1 2179.0,983.7 2173.0,983.4 2167.0,983.1 2161.0,982.8 2155.0,982.4 2149.0,982.1 2143.0,981.8 2137.0,981.4 2131.0,981.1 2125.0,980.8 2119.0,980.5 2113.0,980.2 2107.0,979.9 2101.0,979.6 2095.0,979.2 2089.0,978.9 2083.0,978.7 2077.0,978.4 2071.0,978.1 2065.0,977.8 2059.0,977.5 2053.0,977.3 2047.0,977.0 2041.0,976.8 2035.0,976.6 2029.0,976.3 2023.0,976.1 2017.0,975.9 2011.0,975.7 2005.0,975.5 1999.0,975.4 1993.0,975.2 1987.0,975.0 1981.0,974.9 1975.0,974.7 1969.0,974.6 1963.0,974.4 1957.0,974.2 1951.0,974.1 1945.0,973.9 1939.0,973.8 1933.0,973.6 1927.0,973.4 1921.0,973.3 1915.0,973.1 1909.0,973.0 1903.0,972.8 1897.0,972.7 1891.0,972.5 1885.0,972.4 1879.0,972.2 1873.0,972.1 1867.0,971.9 1861.0,971.8 1855.0,971.6 1849.0,971.5 1843.0,971.4 1837.0,971.2 1831.0,971.1 1825.0,971.0 1819.0,970.8 1813.0,970.7 1807.0,970.6 1801.0,970.4 1795.0,970.3 1789.0,970.2 1783.0,970.1 1777.0,970.0 1771.0,969.8 1765.0,969.7 1759.0,969.6 1753.0,969.5 1747.0,969.4 1741.0,969.2 1735.0,969.1 1729.0,969.0 1723.0,968.9 1717.0,968.8 1711.0,968.7 1705.0,968.6 1699.0,968.5 1693.0,968.4 1687.0,968.3 1681.0,968.2 1675.0,968.1 1669.0,968.0 1663.0,967.9 1657.0,967.8 1651.0,967.7 1645.0,967.6 1639.0,967.5 1633.0,967.4 1627.0,967.3 1621.0,967.3 1615.0,967.2 1609.0,967.1 1603.0,967.0 1597.0,967.0 1591.0,966.9 1585.0,966.8 1579.0,966.8 1573.0,966.7 1567.0,966.6 1561.0,966.6 1555.0,966.5 1549.0,966.5 1543.0,966.4 1537.0,966.4 1531.0,966.3 1525.0,966.3 1519.0,966.2 1513.0,966.2 1507.0,966.2 1501.0,966.1 1495.0,966.1 1489.0,966.0 1483.0,966.0 1477.0,965.9 1471.0,965.9 1465.0,965.9 1459.0,965.8 1453.0,965.8 1447.0,965.8 1441.0,965.7 1435.0,965.7 1429.0,965.6 1423.0,965.6 1417.0,965.6 1411.0,965.5 1405.0,965.5 1399.0,965.5 1393.0,965.5 1387.0,965.4 1381.0,965.4 1375.0,965.4 1369.0,965.3 1363.0,965.3 1357.0,965.3 1351.0,965.3 1345.0,965.2 1339.0,965.2 1333.0,965.2 1327.0,965.2 1321.0,965.1 1315.0,965.1 1309.0,965.1 1303.0,965.1 1297.0,965.1 1291.0,965.1 1285.0,965.0 1279.0,965.0 1273.0,965.0 1267.0,965.0 1261.0,965.0 1255.0,965.0 1249.0,965.0 1243.0,965.0 1237.0,965.0 1231.0,965.0 1225.0,965.0 1219.0,965.0 1213.0,965.0 1207.0,965.0 1201.0,965.0 1195.0,965.0 1189.0,965.0 1183.0,965.0 1177.0,965.0 1171.0,965.1 1165.0,965.1 1159.0,965.1 1153.0,965.1 1147.0,965.1 1141.0,965.1 1135.0,965.2 1129.0,965.2 1123.0,965.2 1117.0,965.2 1111.0,965.3 1105.0,965.3 1099.0,965.3 1093.0,965.4 1087.0,965.4 1081.0,965.4 1075.0,965.5 1069.0,965.5 1063.0,965.5 1057.0,965.6 1051.0,965.6 1045.0,965.7 1039.0,965.7 1033.0,965.8 1027.0,965.8 1021.0,965.9 1015.0,965.9 1009.0,966.0 1003.0,966.1 997.0,966.1 991.0,966.2 985.0,966.2 979.0,966.3 973.0,966.4 967.0,966.5 961.0,966.5 955.0,966.6 949.0,966.7 943.0,966.8 937.0,966.9 931.0,967.0 925.0,967.1 919.0,967.2 913.0,967.3 907.0,967.4 901.0,967.5 895.0,967.7 889.0,967.8 883.0,967.9 877.0,968.1 871.0,968.2 865.0,968.4 859.0,968.5 853.0,968.7 847.0,968.8 841.0,969.0 835.0,969.2 829.0,969.3 823.0,969.5 817.0,969.7 811.0,969.9 805.0,970.0 799.0,970.2 793.0,970.4 787.0,970.6 781.0,970.8 775.0,970.9 769.0,971.1 763.0,971.3 757.0,971.5 751.0,971.7 745.0,971.8 739.0,972.0 733.0,972.2 727.0,972.3 721.0,972.5 715.0,972.6 709.0,972.8 703.0,972.9 697.0,973.1 691.0,973.2 685.0,973.3 679.0,973.4 673.0,973.6 667.0,973.7 661.0,973.8 655.0,973.9 649.0,974.0 643.0,974.1 637.0,974.2 631.0,974.3 625.0,974.4 619.0,974.4 613.0,974.5 607.0,974.6 601.0,974.7 595.0,974.8 589.0,974.9 583.0,975.0 577.0,975.1 571.0,975.1 565.0,975.2 559.0,975.3 553.0,975.4 547.0,975.6 541.0,975.7 535.0,975.8 529.0,975.9 523.0,976.0 517.0,976.0 511.0,976.1 505.0,976.2 499.0,976.3 493.0,976.4 487.0,976.5 481.0,976.6 475.0,976.7 469.0,976.8 463.0,976.9 457.0,977.0 451.0,977.1 445.0,977.2 439.0,977.3 433.0,977.4 427.0,977.5 421.0,977.6 415.0,977.7 409.0,977.8 403.0,977.9 397.0,978.0 391.0,978.1 385.0,978.2 379.0,978.3 373.0,978.4 367.0,978.5 361.0,978.6 355.0,978.7 349.0,978.9 343.0,979.0 337.0,979.1 331.0,979.2 325.0,979.4 319.0,979.5 313.0,979.7 307.0,979.8 301.0,980.0 295.0,980.1 289.0,980.3 283.0,980.5 277.0,980.8 271.0,981.0 265.0,981.3 259.0,981.5 253.0,981.8 247.0,982.1 241.0,982.5 235.0,982.8 229.0,983.2 223.0,983.6 217.0,984.0 211.0,984.4 205.0,984.7 199.0,985.0 193.0,985.4 187.0,985.7 181.0,985.9 175.0,986.2 169.0,986.4 163.0,986.6 157.0,986.8 151.0,987.0 145.0,987.2 139.0,987.5 133.0,987.7 127.0,987.8 121.0,988.0 115.0,988.2 109.0,988.4 103.0,988.6 97.0,988.8 91.0,989.0 85.0,989.2 79.0,989.3 73.0,989.5 67.0,989.7 61.0,989.9 55.0,990.1 49.0,990.2 43.0,990.4 41.0,990.5"/></clipPath><filter id="dbl" x="-2%" y="-20%" width="104%" height="140%"><feGaussianBlur stdDeviation="1.0"/></filter><linearGradient id="g319" gradientUnits="userSpaceOnUse" x1="50.5" y1="988.41" x2="50.5" y2="1010.60" gradientTransform="matrix(1 0.03466 0 1 0 -1.750)"><stop offset="0" stop-color="#b83418"/><stop offset=".18" stop-color="#ee552f"/><stop offset=".361" stop-color="#ef552e"/><stop offset=".901" stop-color="#a63016"/><stop offset="1" stop-color="#8c2810"/></linearGradient><linearGradient id="g320" gradientUnits="userSpaceOnUse" x1="70.0" y1="987.81" x2="70.0" y2="1012.07" gradientTransform="matrix(1 0.02157 0 1 0 -1.510)"><stop offset="0" stop-color="#b83418"/><stop offset=".165" stop-color="#ed542e"/><stop offset=".247" stop-color="#f65932"/><stop offset=".742" stop-color="#bf3a1b"/><stop offset=".907" stop-color="#a52f15"/><stop offset="1" stop-color="#8c2810"/></linearGradient><linearGradient id="g321" gradientUnits="userSpaceOnUse" x1="90.0" y1="987.20" x2="90.0" y2="1013.51" gradientTransform="matrix(1 0.02087 0 1 0 -1.878)"><stop offset="0" stop-color="#b83418"/><stop offset=".076" stop-color="#ca3f1e"/><stop offset=".152" stop-color="#eb532e"/><stop offset=".304" stop-color="#f35730"/><stop offset=".836" stop-color="#b13418"/><stop offset="1" stop-color="#8c2810"/></linearGradient><linearGradient id="g322" gradientUnits="userSpaceOnUse" x1="110.0" y1="986.57" x2="110.0" y2="1014.93" gradientTransform="matrix(1 0.01974 0 1 0 -2.171)"><stop offset="0" stop-color="#b83418"/><stop offset=".071" stop-color="#c73e1c"/><stop offset=".141" stop-color="#ea532d"/><stop offset=".282" stop-color="#f45831"/><stop offset=".776" stop-color="#bb381a"/><stop offset=".917" stop-color="#a32f15"/><stop offset="1" stop-color="#8c2810"/></linearGradient><linearGradient id="g323" gradientUnits="userSpaceOnUse" x1="130.0" y1="985.92" x2="130.0" y2="1016.31" gradientTransform="matrix(1 0.01805 0 1 0 -2.346)"><stop offset="0" stop-color="#b83418"/><stop offset=".066" stop-color="#c63d1c"/><stop offset=".132" stop-color="#ea522d"/><stop offset=".263" stop-color="#f65932"/><stop offset=".79" stop-color="#b9371a"/><stop offset=".921" stop-color="#a22e15"/><stop offset="1" stop-color="#8c2810"/></linearGradient><linearGradient id="g324" gradientUnits="userSpaceOnUse" x1="150.0" y1="985.22" x2="150.0" y2="1017.63" gradientTransform="matrix(1 0.01563 0 1 0 -2.345)"><stop offset="0" stop-color="#b83418"/><stop offset=".062" stop-color="#c53c1b"/><stop offset=".123" stop-color="#e6502b"/><stop offset=".247" stop-color="#f75932"/><stop offset=".679" stop-color="#cb3f1e"/><stop offset=".926" stop-color="#a12e14"/><stop offset="1" stop-color="#8c2810"/></linearGradient><linearGradient id="g325" gradientUnits="userSpaceOnUse" x1="170.0" y1="984.46" x2="170.0" y2="1018.86" gradientTransform="matrix(1 0.01158 0 1 0 -1.968)"><stop offset="0" stop-color="#b83418"/><stop offset=".058" stop-color="#c43b1b"/><stop offset=".116" stop-color="#e14d29"/><stop offset=".233" stop-color="#f65932"/><stop offset=".523" stop-color="#df4a26"/><stop offset=".93" stop-color="#a02e14"/><stop offset="1" stop-color="#8c2810"/></linearGradient><linearGradient id="g326" gradientUnits="userSpaceOnUse" x1="190.0" y1="983.49" x2="190.0" y2="1019.94" gradientTransform="matrix(1 0.00290 0 1 0 -0.551)"><stop offset="0" stop-color="#b83418"/><stop offset=".055" stop-color="#c23a1b"/><stop offset=".165" stop-color="#ee542f"/><stop offset=".329" stop-color="#f35730"/><stop offset=".823" stop-color="#b53619"/><stop offset=".933" stop-color="#a12e14"/><stop offset="1" stop-color="#8c2810"/></linearGradient><linearGradient id="g327" gradientUnits="userSpaceOnUse" x1="210.0" y1="982.29" x2="210.0" y2="1020.85" gradientTransform="matrix(1 -0.00723 0 1 0 1.519)"><stop offset="0" stop-color="#b83418"/><stop offset=".052" stop-color="#c13a1a"/><stop offset=".156" stop-color="#ec542e"/><stop offset=".311" stop-color="#f55831"/><stop offset=".83" stop-color="#b53619"/><stop offset=".934" stop-color="#a12e15"/><stop offset="1" stop-color="#8c2810"/></linearGradient><linearGradient id="g328" gradientUnits="userSpaceOnUse" x1="230.0" y1="981.05" x2="230.0" y2="1021.67" gradientTransform="matrix(1 -0.01057 0 1 0 2.432)"><stop offset="0" stop-color="#b83418"/><stop offset=".098" stop-color="#d54623"/><stop offset=".148" stop-color="#ec542e"/><stop offset=".295" stop-color="#f65932"/><stop offset=".788" stop-color="#bc381b"/><stop offset=".935" stop-color="#a12e15"/><stop offset="1" stop-color="#8c2810"/></linearGradient><linearGradient id="g329" gradientUnits="userSpaceOnUse" x1="250.0" y1="979.98" x2="250.0" y2="1022.51" gradientTransform="matrix(1 -0.00566 0 1 0 1.415)"><stop offset="0" stop-color="#b83418"/><stop offset=".094" stop-color="#d44522"/><stop offset=".141" stop-color="#eb532e"/><stop offset=".282" stop-color="#f75932"/><stop offset=".799" stop-color="#ba381a"/><stop offset=".941" stop-color="#9f2e14"/><stop offset="1" stop-color="#8c2810"/></linearGradient><linearGradient id="g330" gradientUnits="userSpaceOnUse" x1="270.0" y1="979.15" x2="270.0" y2="1023.42" gradientTransform="matrix(1 0.00191 0 1 0 -0.515)"><stop offset="0" stop-color="#b83418"/><stop offset=".09" stop-color="#d34522"/><stop offset=".136" stop-color="#eb532e"/><stop offset=".316" stop-color="#f55831"/><stop offset=".813" stop-color="#b8371a"/><stop offset=".949" stop-color="#9c2d13"/><stop offset="1" stop-color="#8c2810"/></linearGradient><linearGradient id="g331" gradientUnits="userSpaceOnUse" x1="290.0" y1="978.50" x2="290.0" y2="1024.40" gradientTransform="matrix(1 0.00830 0 1 0 -2.406)"><stop offset="0" stop-color="#b83418"/><stop offset=".087" stop-color="#d34522"/><stop offset=".131" stop-color="#eb532e"/><stop offset=".305" stop-color="#f65931"/><stop offset=".784" stop-color="#bd391b"/><stop offset=".915" stop-color="#a83016"/><stop offset="1.002" stop-color="#8c2810"/></linearGradient><linearGradient id="g332" gradientUnits="userSpaceOnUse" x1="310.0" y1="977.99" x2="310.0" y2="1025.43" gradientTransform="matrix(1 0.01292 0 1 0 -4.006)"><stop offset="0" stop-color="#b83418"/><stop offset=".084" stop-color="#d24421"/><stop offset=".126" stop-color="#e9522d"/><stop offset=".295" stop-color="#f75932"/><stop offset=".801" stop-color="#ba381a"/><stop offset=".927" stop-color="#a42f15"/><stop offset="1.012" stop-color="#8c2810"/></linearGradient><linearGradient id="g333" gradientUnits="userSpaceOnUse" x1="330.0" y1="977.54" x2="330.0" y2="1026.49" gradientTransform="matrix(1 0.01529 0 1 0 -5.045)"><stop offset="0" stop-color="#b83418"/><stop offset=".082" stop-color="#d14321"/><stop offset=".123" stop-color="#e7512c"/><stop offset=".286" stop-color="#f75a32"/><stop offset=".776" stop-color="#be391b"/><stop offset=".94" stop-color="#9f2e14"/><stop offset="1" stop-color="#8c2810"/></linearGradient><linearGradient id="g334" gradientUnits="userSpaceOnUse" x1="350.0" y1="977.14" x2="350.0" y2="1027.55" gradientTransform="matrix(1 0.01663 0 1 0 -5.819)"><stop offset="0" stop-color="#b83418"/><stop offset=".079" stop-color="#d04320"/><stop offset=".159" stop-color="#ef552f"/><stop offset=".317" stop-color="#f65931"/><stop offset=".833" stop-color="#b53619"/><stop offset=".952" stop-color="#9b2c13"/><stop offset="1" stop-color="#8c2810"/></linearGradient><linearGradient id="g335" gradientUnits="userSpaceOnUse" x1="370.0" y1="976.77" x2="370.0" y2="1028.62" gradientTransform="matrix(1 0.01752 0 1 0 -6.483)"><stop offset="0" stop-color="#b83418"/><stop offset=".077" stop-color="#cf4220"/><stop offset=".154" stop-color="#ef552f"/><stop offset=".309" stop-color="#f75932"/><stop offset=".81" stop-color="#b9371a"/><stop offset=".926" stop-color="#a52f15"/><stop offset="1.003" stop-color="#8c2810"/></linearGradient><linearGradient id="g336" gradientUnits="userSpaceOnUse" x1="390.0" y1="976.42" x2="390.0" y2="1029.70" gradientTransform="matrix(1 0.01816 0 1 0 -7.081)"><stop offset="0" stop-color="#b83418"/><stop offset=".075" stop-color="#ce421f"/><stop offset=".15" stop-color="#ee552f"/><stop offset=".3" stop-color="#f75a32"/><stop offset=".788" stop-color="#bd391b"/><stop offset=".938" stop-color="#a02e14"/><stop offset="1.013" stop-color="#8c2810"/></linearGradient><linearGradient id="g337" gradientUnits="userSpaceOnUse" x1="410.0" y1="976.08" x2="410.0" y2="1030.78" gradientTransform="matrix(1 0.01854 0 1 0 -7.603)"><stop offset="0" stop-color="#b83418"/><stop offset=".073" stop-color="#cd411f"/><stop offset=".146" stop-color="#ee552f"/><stop offset=".293" stop-color="#f85a33"/><stop offset=".768" stop-color="#c03a1c"/><stop offset=".951" stop-color="#9b2c13"/><stop offset="1" stop-color="#8c2810"/></linearGradient><linearGradient id="g338" gradientUnits="userSpaceOnUse" x1="430.0" y1="975.76" x2="430.0" y2="1031.85" gradientTransform="matrix(1 0.01878 0 1 0 -8.075)"><stop offset="0" stop-color="#b83418"/><stop offset=".107" stop-color="#df4c28"/><stop offset=".178" stop-color="#f25731"/><stop offset=".285" stop-color="#f95a33"/><stop offset=".784" stop-color="#be391b"/><stop offset=".927" stop-color="#a52f15"/><stop offset="1" stop-color="#8c2810"/></linearGradient><linearGradient id="g339" gradientUnits="userSpaceOnUse" x1="450.0" y1="975.44" x2="450.0" y2="1032.93" gradientTransform="matrix(1 0.01886 0 1 0 -8.489)"><stop offset="0" stop-color="#b83418"/><stop offset=".104" stop-color="#de4b27"/><stop offset=".174" stop-color="#f25730"/><stop offset=".313" stop-color="#f75a32"/><stop offset=".8" stop-color="#bb381a"/><stop offset=".939" stop-color="#a02e14"/><stop offset="1.009" stop-color="#8c2810"/></linearGradient><linearGradient id="g340" gradientUnits="userSpaceOnUse" x1="470.0" y1="975.13" x2="470.0" y2="1033.99" gradientTransform="matrix(1 0.01880 0 1 0 -8.836)"><stop offset="0" stop-color="#b83418"/><stop offset=".102" stop-color="#dc4a26"/><stop offset=".136" stop-color="#ed542f"/><stop offset=".306" stop-color="#f85a32"/><stop offset=".781" stop-color="#bf391b"/><stop offset=".951" stop-color="#9c2c13"/><stop offset="1" stop-color="#8c2810"/></linearGradient><linearGradient id="g341" gradientUnits="userSpaceOnUse" x1="490.0" y1="974.82" x2="490.0" y2="1035.05" gradientTransform="matrix(1 0.01855 0 1 0 -9.088)"><stop offset="0" stop-color="#b83418"/><stop offset=".1" stop-color="#db4926"/><stop offset=".133" stop-color="#ec542e"/><stop offset=".299" stop-color="#f95a33"/><stop offset=".797" stop-color="#bc381b"/><stop offset=".963" stop-color="#972b12"/><stop offset="1" stop-color="#8c2810"/></linearGradient><linearGradient id="g342" gradientUnits="userSpaceOnUse" x1="510.0" y1="974.50" x2="510.0" y2="1036.09" gradientTransform="matrix(1 0.01807 0 1 0 -9.218)"><stop offset="0" stop-color="#b83418"/><stop offset=".097" stop-color="#da4925"/><stop offset=".162" stop-color="#f05630"/><stop offset=".292" stop-color="#f95b33"/><stop offset=".779" stop-color="#bf3a1b"/><stop offset=".942" stop-color="#a02e14"/><stop offset="1.007" stop-color="#8c2810"/></linearGradient><linearGradient id="g343" gradientUnits="userSpaceOnUse" x1="530.0" y1="974.17" x2="530.0" y2="1037.10" gradientTransform="matrix(1 0.01726 0 1 0 -9.149)"><stop offset="0" stop-color="#b83418"/><stop offset=".095" stop-color="#d94825"/><stop offset=".159" stop-color="#f05630"/><stop offset=".286" stop-color="#fa5b33"/><stop offset=".763" stop-color="#c23b1c"/><stop offset=".953" stop-color="#9b2c13"/><stop offset="1" stop-color="#8c2810"/></linearGradient><linearGradient id="g344" gradientUnits="userSpaceOnUse" x1="550.0" y1="973.83" x2="550.0" y2="1038.09" gradientTransform="matrix(1 0.01601 0 1 0 -8.804)"><stop offset="0" stop-color="#b83418"/><stop offset=".093" stop-color="#d74724"/><stop offset=".156" stop-color="#f05630"/><stop offset=".28" stop-color="#fa5b34"/><stop offset=".778" stop-color="#c03a1b"/><stop offset=".934" stop-color="#a32f15"/><stop offset="1" stop-color="#8c2810"/></linearGradient><linearGradient id="g345" gradientUnits="userSpaceOnUse" x1="570.0" y1="973.51" x2="570.0" y2="1039.04" gradientTransform="matrix(1 0.01581 0 1 0 -9.013)"><stop offset="0" stop-color="#b83418"/><stop offset=".092" stop-color="#d74724"/><stop offset=".153" stop-color="#ef5630"/><stop offset=".305" stop-color="#f95b33"/><stop offset=".793" stop-color="#bd391b"/><stop offset=".946" stop-color="#9e2d14"/><stop offset="1.007" stop-color="#8c2810"/></linearGradient><linearGradient id="g346" gradientUnits="userSpaceOnUse" x1="590.0" y1="973.21" x2="590.0" y2="1039.96" gradientTransform="matrix(1 0.01560 0 1 0 -9.202)"><stop offset="0" stop-color="#b83418"/><stop offset=".09" stop-color="#d64623"/><stop offset=".15" stop-color="#ef5530"/><stop offset=".3" stop-color="#fa5b33"/><stop offset=".779" stop-color="#c03a1c"/><stop offset=".959" stop-color="#9a2c13"/><stop offset="1" stop-color="#8c2810"/></linearGradient><linearGradient id="g347" gradientUnits="userSpaceOnUse" x1="610.0" y1="972.93" x2="610.0" y2="1040.83" gradientTransform="matrix(1 0.01479 0 1 0 -9.024)"><stop offset="0" stop-color="#b83418"/><stop offset=".088" stop-color="#d54623"/><stop offset=".147" stop-color="#ef552f"/><stop offset=".295" stop-color="#fa5b34"/><stop offset=".795" stop-color="#bd391b"/><stop offset=".943" stop-color="#a02e14"/><stop offset="1.001" stop-color="#8c2810"/></linearGradient><linearGradient id="g348" gradientUnits="userSpaceOnUse" x1="630.0" y1="972.64" x2="630.0" y2="1041.65" gradientTransform="matrix(1 0.01327 0 1 0 -8.359)"><stop offset="0" stop-color="#b83418"/><stop offset=".087" stop-color="#d44522"/><stop offset=".145" stop-color="#ef552f"/><stop offset=".29" stop-color="#fb5c34"/><stop offset=".782" stop-color="#c03a1b"/><stop offset=".956" stop-color="#9b2c13"/><stop offset="1.014" stop-color="#8c2810"/></linearGradient><linearGradient id="g349" gradientUnits="userSpaceOnUse" x1="650.0" y1="972.31" x2="650.0" y2="1042.44" gradientTransform="matrix(1 0.01144 0 1 0 -7.436)"><stop offset="0" stop-color="#b83418"/><stop offset=".086" stop-color="#d34522"/><stop offset=".143" stop-color="#ee552f"/><stop offset=".285" stop-color="#fb5c34"/><stop offset=".77" stop-color="#c23b1c"/><stop offset=".941" stop-color="#a12e15"/><stop offset="1" stop-color="#8c2810"/></linearGradient><linearGradient id="g350" gradientUnits="userSpaceOnUse" x1="670.0" y1="971.93" x2="670.0" y2="1043.22" gradientTransform="matrix(1 0.00987 0 1 0 -6.612)"><stop offset="0" stop-color="#b83418"/><stop offset=".084" stop-color="#d24421"/><stop offset=".14" stop-color="#ee552f"/><stop offset=".309" stop-color="#fa5b33"/><stop offset=".785" stop-color="#c03a1b"/><stop offset=".954" stop-color="#9c2d13"/><stop offset="1.01" stop-color="#8c2810"/></linearGradient><linearGradient id="g351" gradientUnits="userSpaceOnUse" x1="690.0" y1="971.50" x2="690.0" y2="1044.00" gradientTransform="matrix(1 0.00883 0 1 0 -6.091)"><stop offset="0" stop-color="#b83418"/><stop offset=".11" stop-color="#df4c28"/><stop offset=".166" stop-color="#f15730"/><stop offset=".303" stop-color="#fb5b34"/><stop offset=".772" stop-color="#c23b1c"/><stop offset=".938" stop-color="#a32e15"/><stop offset="1" stop-color="#8c2810"/></linearGradient><linearGradient id="g352" gradientUnits="userSpaceOnUse" x1="710.0" y1="971.01" x2="710.0" y2="1044.79" gradientTransform="matrix(1 0.00763 0 1 0 -5.416)"><stop offset="0" stop-color="#b83418"/><stop offset=".108" stop-color="#de4b27"/><stop offset=".19" stop-color="#f45832"/><stop offset=".325" stop-color="#f95b33"/><stop offset=".786" stop-color="#c03a1b"/><stop offset=".949" stop-color="#9e2d14"/><stop offset="1.003" stop-color="#8c2810"/></linearGradient><linearGradient id="g353" gradientUnits="userSpaceOnUse" x1="730.0" y1="970.47" x2="730.0" y2="1045.59" gradientTransform="matrix(1 0.00640 0 1 0 -4.672)"><stop offset="0" stop-color="#b83418"/><stop offset=".106" stop-color="#dd4a26"/><stop offset=".186" stop-color="#f45831"/><stop offset=".319" stop-color="#fa5b33"/><stop offset=".799" stop-color="#be391b"/><stop offset=".958" stop-color="#9a2c13"/><stop offset="1.012" stop-color="#8c2810"/></linearGradient><linearGradient id="g354" gradientUnits="userSpaceOnUse" x1="750.0" y1="969.89" x2="750.0" y2="1046.40" gradientTransform="matrix(1 0.00554 0 1 0 -4.155)"><stop offset="0" stop-color="#b83418"/><stop offset=".105" stop-color="#dc4a26"/><stop offset=".183" stop-color="#f45831"/><stop offset=".314" stop-color="#fb5b34"/><stop offset=".784" stop-color="#c13a1c"/><stop offset=".941" stop-color="#a12e15"/><stop offset="1" stop-color="#8c2810"/></linearGradient><linearGradient id="g355" gradientUnits="userSpaceOnUse" x1="770.0" y1="969.29" x2="770.0" y2="1047.19" gradientTransform="matrix(1 0.00499 0 1 0 -3.841)"><stop offset="0" stop-color="#b83418"/><stop offset=".103" stop-color="#db4925"/><stop offset=".18" stop-color="#f35831"/><stop offset=".308" stop-color="#fb5c34"/><stop offset=".77" stop-color="#c33b1c"/><stop offset=".95" stop-color="#9e2d14"/><stop offset="1.001" stop-color="#8c2810"/></linearGradient><linearGradient id="g356" gradientUnits="userSpaceOnUse" x1="790.0" y1="968.69" x2="790.0" y2="1047.98" gradientTransform="matrix(1 0.00466 0 1 0 -3.680)"><stop offset="0" stop-color="#b83418"/><stop offset=".126" stop-color="#e6502b"/><stop offset=".252" stop-color="#fc5d35"/><stop offset=".555" stop-color="#e24c27"/><stop offset=".933" stop-color="#a52f15"/><stop offset="1.009" stop-color="#8c2810"/></linearGradient><linearGradient id="g357" gradientUnits="userSpaceOnUse" x1="810.0" y1="968.10" x2="810.0" y2="1048.75" gradientTransform="matrix(1 0.00450 0 1 0 -3.647)"><stop offset="0" stop-color="#b83418"/><stop offset=".124" stop-color="#e54f2a"/><stop offset=".223" stop-color="#f95b33"/><stop offset=".397" stop-color="#f65831"/><stop offset=".843" stop-color="#b73619"/><stop offset=".967" stop-color="#972b12"/><stop offset="1" stop-color="#8c2810"/></linearGradient><linearGradient id="g358" gradientUnits="userSpaceOnUse" x1="830.0" y1="967.54" x2="830.0" y2="1049.49" gradientTransform="matrix(1 0.00452 0 1 0 -3.754)"><stop offset="0" stop-color="#b83418"/><stop offset=".122" stop-color="#e44f2a"/><stop offset=".195" stop-color="#f55932"/><stop offset=".317" stop-color="#fb5c34"/><stop offset=".781" stop-color="#c23b1c"/><stop offset=".952" stop-color="#9e2d14"/><stop offset="1.001" stop-color="#8c2810"/></linearGradient><linearGradient id="g359" gradientUnits="userSpaceOnUse" x1="850.0" y1="967.00" x2="850.0" y2="1050.21" gradientTransform="matrix(1 0.00467 0 1 0 -3.970)"><stop offset="0" stop-color="#b83418"/><stop offset=".12" stop-color="#e34e29"/><stop offset=".216" stop-color="#f85a33"/><stop offset=".361" stop-color="#f95a33"/><stop offset=".817" stop-color="#bb381a"/><stop offset=".961" stop-color="#9a2c13"/><stop offset="1.009" stop-color="#8c2810"/></linearGradient><linearGradient id="g360" gradientUnits="userSpaceOnUse" x1="870.0" y1="966.50" x2="870.0" y2="1050.91" gradientTransform="matrix(1 0.00495 0 1 0 -4.307)"><stop offset="0" stop-color="#b83418"/><stop offset=".118" stop-color="#e24e29"/><stop offset=".213" stop-color="#f85a33"/><stop offset=".379" stop-color="#f85a32"/><stop offset=".829" stop-color="#b9371a"/><stop offset=".948" stop-color="#9f2e14"/><stop offset="1" stop-color="#8c2810"/></linearGradient><linearGradient id="g361" gradientUnits="userSpaceOnUse" x1="890.0" y1="966.06" x2="890.0" y2="1051.57" gradientTransform="matrix(1 0.00543 0 1 0 -4.834)"><stop offset="0" stop-color="#b83418"/><stop offset=".117" stop-color="#e14d29"/><stop offset=".21" stop-color="#f75a33"/><stop offset=".374" stop-color="#f85a32"/><stop offset=".819" stop-color="#bc381a"/><stop offset=".959" stop-color="#9b2c13"/><stop offset="1.006" stop-color="#8c2810"/></linearGradient><linearGradient id="g362" gradientUnits="userSpaceOnUse" x1="910.0" y1="965.67" x2="910.0" y2="1052.20" gradientTransform="matrix(1 0.00597 0 1 0 -5.437)"><stop offset="0" stop-color="#b83418"/><stop offset=".116" stop-color="#e14d28"/><stop offset=".208" stop-color="#f75a33"/><stop offset=".347" stop-color="#fa5b33"/><stop offset=".786" stop-color="#c23a1c"/><stop offset=".948" stop-color="#a02e14"/><stop offset="1" stop-color="#8c2810"/></linearGradient><linearGradient id="g363" gradientUnits="userSpaceOnUse" x1="930.0" y1="965.35" x2="930.0" y2="1052.79" gradientTransform="matrix(1 0.00660 0 1 0 -6.142)"><stop offset="0" stop-color="#b83418"/><stop offset=".183" stop-color="#f45832"/><stop offset=".32" stop-color="#fc5c34"/><stop offset=".778" stop-color="#c33b1c"/><stop offset=".961" stop-color="#9a2c13"/><stop offset="1.006" stop-color="#8c2810"/></linearGradient><linearGradient id="g364" gradientUnits="userSpaceOnUse" x1="950.0" y1="965.06" x2="950.0" y2="1053.35" gradientTransform="matrix(1 0.00685 0 1 0 -6.510)"><stop offset="0" stop-color="#b83418"/><stop offset=".181" stop-color="#f45832"/><stop offset=".317" stop-color="#fc5c34"/><stop offset=".77" stop-color="#c53c1d"/><stop offset=".951" stop-color="#9e2d14"/><stop offset="1" stop-color="#8c2810"/></linearGradient><linearGradient id="g365" gradientUnits="userSpaceOnUse" x1="970.0" y1="964.81" x2="970.0" y2="1053.88" gradientTransform="matrix(1 0.00699 0 1 0 -6.784)"><stop offset="0" stop-color="#b83418"/><stop offset=".18" stop-color="#f45831"/><stop offset=".314" stop-color="#fc5c34"/><stop offset=".786" stop-color="#c23b1c"/><stop offset=".943" stop-color="#a22e15"/><stop offset="1.01" stop-color="#8c2810"/></linearGradient><linearGradient id="g366" gradientUnits="userSpaceOnUse" x1="990.0" y1="964.58" x2="990.0" y2="1054.39" gradientTransform="matrix(1 0.00722 0 1 0 -7.145)"><stop offset="0" stop-color="#b83418"/><stop offset=".178" stop-color="#f35831"/><stop offset=".312" stop-color="#fd5d35"/><stop offset=".779" stop-color="#c33b1c"/><stop offset=".958" stop-color="#9c2d13"/><stop offset="1.002" stop-color="#8c2810"/></linearGradient><linearGradient id="g367" gradientUnits="userSpaceOnUse" x1="1010.0" y1="964.38" x2="1010.0" y2="1054.89" gradientTransform="matrix(1 0.00736 0 1 0 -7.432)"><stop offset="0" stop-color="#b83418"/><stop offset=".177" stop-color="#f35831"/><stop offset=".309" stop-color="#fd5d35"/><stop offset=".773" stop-color="#c53c1c"/><stop offset=".95" stop-color="#9f2d14"/><stop offset="1" stop-color="#8c2810"/></linearGradient><linearGradient id="g368" gradientUnits="userSpaceOnUse" x1="1030.0" y1="964.21" x2="1030.0" y2="1055.36" gradientTransform="matrix(1 0.00763 0 1 0 -7.855)"><stop offset="0" stop-color="#b83418"/><stop offset=".176" stop-color="#f35831"/><stop offset=".329" stop-color="#fc5c34"/><stop offset=".79" stop-color="#c23a1c"/><stop offset=".943" stop-color="#a22e15"/><stop offset="1.009" stop-color="#8c2810"/></linearGradient><linearGradient id="g369" gradientUnits="userSpaceOnUse" x1="1050.0" y1="964.06" x2="1050.0" y2="1055.83" gradientTransform="matrix(1 0.00776 0 1 0 -8.145)"><stop offset="0" stop-color="#b83418"/><stop offset=".174" stop-color="#f35731"/><stop offset=".327" stop-color="#fc5c34"/><stop offset=".785" stop-color="#c33b1c"/><stop offset=".959" stop-color="#9b2c13"/><stop offset="1.003" stop-color="#8c2810"/></linearGradient><linearGradient id="g370" gradientUnits="userSpaceOnUse" x1="1070.0" y1="963.93" x2="1070.0" y2="1056.28" gradientTransform="matrix(1 0.00803 0 1 0 -8.597)"><stop offset="0" stop-color="#b83418"/><stop offset=".173" stop-color="#f25731"/><stop offset=".325" stop-color="#fc5c34"/><stop offset=".78" stop-color="#c43b1c"/><stop offset=".953" stop-color="#9e2d14"/><stop offset="1" stop-color="#8c2810"/></linearGradient><linearGradient id="g371" gradientUnits="userSpaceOnUse" x1="1090.0" y1="963.82" x2="1090.0" y2="1056.71" gradientTransform="matrix(1 0.00817 0 1 0 -8.909)"><stop offset="0" stop-color="#b83418"/><stop offset=".172" stop-color="#f25731"/><stop offset=".323" stop-color="#fc5c34"/><stop offset=".775" stop-color="#c53c1d"/><stop offset=".947" stop-color="#a02e14"/><stop offset="1" stop-color="#8c2810"/></linearGradient><linearGradient id="g372" gradientUnits="userSpaceOnUse" x1="1110.0" y1="963.73" x2="1110.0" y2="1057.14" gradientTransform="matrix(1 0.00842 0 1 0 -9.344)"><stop offset="0" stop-color="#b83418"/><stop offset=".171" stop-color="#f25731"/><stop offset=".321" stop-color="#fc5c34"/><stop offset=".771" stop-color="#c63c1d"/><stop offset=".963" stop-color="#9a2c13"/><stop offset="1.006" stop-color="#8c2810"/></linearGradient><linearGradient id="g373" gradientUnits="userSpaceOnUse" x1="1130.0" y1="963.65" x2="1130.0" y2="1057.57" gradientTransform="matrix(1 0.00861 0 1 0 -9.728)"><stop offset="0" stop-color="#b83418"/><stop offset=".192" stop-color="#f45832"/><stop offset=".319" stop-color="#fc5d35"/><stop offset=".788" stop-color="#c23b1c"/><stop offset=".958" stop-color="#9c2d13"/><stop offset="1.001" stop-color="#8c2810"/></linearGradient><linearGradient id="g374" gradientUnits="userSpaceOnUse" x1="1150.0" y1="963.59" x2="1150.0" y2="1057.98" gradientTransform="matrix(1 0.00880 0 1 0 -10.124)"><stop offset="0" stop-color="#b83418"/><stop offset=".191" stop-color="#f45832"/><stop offset=".318" stop-color="#fd5d35"/><stop offset=".784" stop-color="#c33b1c"/><stop offset=".953" stop-color="#9e2d14"/><stop offset="1" stop-color="#8c2810"/></linearGradient><linearGradient id="g375" gradientUnits="userSpaceOnUse" x1="1170.0" y1="963.54" x2="1170.0" y2="1058.39" gradientTransform="matrix(1 0.00903 0 1 0 -10.563)"><stop offset="0" stop-color="#b83418"/><stop offset=".19" stop-color="#f45832"/><stop offset=".316" stop-color="#fd5d35"/><stop offset=".78" stop-color="#c43c1c"/><stop offset=".949" stop-color="#a02e14"/><stop offset="1" stop-color="#8c2810"/></linearGradient><linearGradient id="g376" gradientUnits="userSpaceOnUse" x1="1190.0" y1="963.50" x2="1190.0" y2="1058.80" gradientTransform="matrix(1 0.00920 0 1 0 -10.951)"><stop offset="0" stop-color="#b83418"/><stop offset=".189" stop-color="#f45831"/><stop offset=".336" stop-color="#fc5c34"/><stop offset=".777" stop-color="#c53c1d"/><stop offset=".944" stop-color="#a12e15"/><stop offset="1.007" stop-color="#8c2810"/></linearGradient><linearGradient id="g377" gradientUnits="userSpaceOnUse" x1="1210.0" y1="963.48" x2="1210.0" y2="1059.20" gradientTransform="matrix(1 0.00956 0 1 0 -11.569)"><stop offset="0" stop-color="#b83418"/><stop offset=".188" stop-color="#f35831"/><stop offset=".334" stop-color="#fc5c34"/><stop offset=".773" stop-color="#c63c1d"/><stop offset=".961" stop-color="#9b2c13"/><stop offset="1.003" stop-color="#8c2810"/></linearGradient><linearGradient id="g378" gradientUnits="userSpaceOnUse" x1="1230.0" y1="963.48" x2="1230.0" y2="1059.59" gradientTransform="matrix(1 0.00969 0 1 0 -11.921)"><stop offset="0" stop-color="#b83418"/><stop offset=".187" stop-color="#f35831"/><stop offset=".333" stop-color="#fc5c34"/><stop offset=".77" stop-color="#c63c1d"/><stop offset=".957" stop-color="#9c2d13"/><stop offset="1" stop-color="#8c2810"/></linearGradient><linearGradient id="g379" gradientUnits="userSpaceOnUse" x1="1250.0" y1="963.48" x2="1250.0" y2="1059.95" gradientTransform="matrix(1 0.00969 0 1 0 -12.118)"><stop offset="0" stop-color="#b83418"/><stop offset=".187" stop-color="#f35831"/><stop offset=".332" stop-color="#fc5c34"/><stop offset=".788" stop-color="#c33b1c"/><stop offset=".954" stop-color="#9e2d14"/><stop offset="1" stop-color="#8c2810"/></linearGradient><linearGradient id="g380" gradientUnits="userSpaceOnUse" x1="1270.0" y1="963.50" x2="1270.0" y2="1060.31" gradientTransform="matrix(1 0.00978 0 1 0 -12.423)"><stop offset="0" stop-color="#b83418"/><stop offset=".186" stop-color="#f35731"/><stop offset=".331" stop-color="#fc5c34"/><stop offset=".785" stop-color="#c43b1c"/><stop offset=".95" stop-color="#9f2d14"/><stop offset="1" stop-color="#8c2810"/></linearGradient><linearGradient id="g381" gradientUnits="userSpaceOnUse" x1="1290.0" y1="963.54" x2="1290.0" y2="1060.65" gradientTransform="matrix(1 0.00978 0 1 0 -12.613)"><stop offset="0" stop-color="#b83418"/><stop offset=".185" stop-color="#f25731"/><stop offset=".33" stop-color="#fc5c34"/><stop offset=".783" stop-color="#c43c1c"/><stop offset=".947" stop-color="#a02e14"/><stop offset="1.009" stop-color="#8c2810"/></linearGradient><linearGradient id="g382" gradientUnits="userSpaceOnUse" x1="1310.0" y1="963.59" x2="1310.0" y2="1060.99" gradientTransform="matrix(1 0.00985 0 1 0 -12.901)"><stop offset="0" stop-color="#b83418"/><stop offset=".185" stop-color="#f25731"/><stop offset=".329" stop-color="#fc5c34"/><stop offset=".78" stop-color="#c53c1d"/><stop offset=".965" stop-color="#992c13"/><stop offset="1.006" stop-color="#8c2810"/></linearGradient><linearGradient id="g383" gradientUnits="userSpaceOnUse" x1="1330.0" y1="963.65" x2="1330.0" y2="1061.31" gradientTransform="matrix(1 0.00996 0 1 0 -13.242)"><stop offset="0" stop-color="#b83418"/><stop offset=".184" stop-color="#f25731"/><stop offset=".328" stop-color="#fc5d35"/><stop offset=".778" stop-color="#c63c1d"/><stop offset=".962" stop-color="#9a2c13"/><stop offset="1.003" stop-color="#8c2810"/></linearGradient><linearGradient id="g384" gradientUnits="userSpaceOnUse" x1="1350.0" y1="963.72" x2="1350.0" y2="1061.64" gradientTransform="matrix(1 0.01015 0 1 0 -13.698)"><stop offset="0" stop-color="#b83418"/><stop offset=".204" stop-color="#f45832"/><stop offset=".327" stop-color="#fc5d35"/><stop offset=".776" stop-color="#c63c1d"/><stop offset=".96" stop-color="#9b2c13"/><stop offset="1.001" stop-color="#8c2810"/></linearGradient><linearGradient id="g385" gradientUnits="userSpaceOnUse" x1="1370.0" y1="963.80" x2="1370.0" y2="1061.96" gradientTransform="matrix(1 0.01035 0 1 0 -14.186)"><stop offset="0" stop-color="#b83418"/><stop offset=".204" stop-color="#f45832"/><stop offset=".346" stop-color="#fb5c34"/><stop offset=".774" stop-color="#c73d1d"/><stop offset=".958" stop-color="#9c2d13"/><stop offset="1" stop-color="#8c2810"/></linearGradient><linearGradient id="g386" gradientUnits="userSpaceOnUse" x1="1390.0" y1="963.89" x2="1390.0" y2="1062.29" gradientTransform="matrix(1 0.01061 0 1 0 -14.746)"><stop offset="0" stop-color="#b83418"/><stop offset=".203" stop-color="#f45831"/><stop offset=".346" stop-color="#fc5c34"/><stop offset=".772" stop-color="#c73d1d"/><stop offset=".955" stop-color="#9d2d14"/><stop offset="1" stop-color="#8c2810"/></linearGradient><linearGradient id="g387" gradientUnits="userSpaceOnUse" x1="1410.0" y1="963.99" x2="1410.0" y2="1062.61" gradientTransform="matrix(1 0.01093 0 1 0 -15.414)"><stop offset="0" stop-color="#b83418"/><stop offset=".203" stop-color="#f35831"/><stop offset=".345" stop-color="#fc5c34"/><stop offset=".771" stop-color="#c83d1d"/><stop offset=".953" stop-color="#9e2d14"/><stop offset="1" stop-color="#8c2810"/></linearGradient><linearGradient id="g388" gradientUnits="userSpaceOnUse" x1="1430.0" y1="964.10" x2="1430.0" y2="1062.95" gradientTransform="matrix(1 0.01127 0 1 0 -16.114)"><stop offset="0" stop-color="#b83418"/><stop offset=".202" stop-color="#f35831"/><stop offset=".344" stop-color="#fc5c34"/><stop offset=".789" stop-color="#c43c1c"/><stop offset=".951" stop-color="#9f2d14"/><stop offset="1" stop-color="#8c2810"/></linearGradient><linearGradient id="g389" gradientUnits="userSpaceOnUse" x1="1450.0" y1="964.21" x2="1450.0" y2="1063.29" gradientTransform="matrix(1 0.01160 0 1 0 -16.824)"><stop offset="0" stop-color="#b83418"/><stop offset=".202" stop-color="#f35831"/><stop offset=".343" stop-color="#fc5c34"/><stop offset=".787" stop-color="#c53c1d"/><stop offset=".949" stop-color="#a02e14"/><stop offset="1.009" stop-color="#8c2810"/></linearGradient><linearGradient id="g390" gradientUnits="userSpaceOnUse" x1="1470.0" y1="964.33" x2="1470.0" y2="1063.64" gradientTransform="matrix(1 0.01199 0 1 0 -17.620)"><stop offset="0" stop-color="#b83418"/><stop offset=".201" stop-color="#f35731"/><stop offset=".342" stop-color="#fc5c34"/><stop offset=".785" stop-color="#c53c1d"/><stop offset=".967" stop-color="#992c13"/><stop offset="1.007" stop-color="#8c2810"/></linearGradient><linearGradient id="g391" gradientUnits="userSpaceOnUse" x1="1490.0" y1="964.46" x2="1490.0" y2="1064.00" gradientTransform="matrix(1 0.01234 0 1 0 -18.391)"><stop offset="0" stop-color="#b83418"/><stop offset=".201" stop-color="#f25731"/><stop offset=".342" stop-color="#fc5c34"/><stop offset=".784" stop-color="#c63c1d"/><stop offset=".964" stop-color="#992c13"/><stop offset="1.005" stop-color="#8c2810"/></linearGradient><linearGradient id="g392" gradientUnits="userSpaceOnUse" x1="1510.0" y1="964.60" x2="1510.0" y2="1064.36" gradientTransform="matrix(1 0.01269 0 1 0 -19.155)"><stop offset="0" stop-color="#b83418"/><stop offset=".221" stop-color="#f45832"/><stop offset=".341" stop-color="#fc5c34"/><stop offset=".782" stop-color="#c73d1d"/><stop offset=".962" stop-color="#9a2c13"/><stop offset="1.002" stop-color="#8c2810"/></linearGradient><linearGradient id="g393" gradientUnits="userSpaceOnUse" x1="1530.0" y1="964.75" x2="1530.0" y2="1064.72" gradientTransform="matrix(1 0.01299 0 1 0 -19.869)"><stop offset="0" stop-color="#b83418"/><stop offset=".22" stop-color="#f45832"/><stop offset=".36" stop-color="#fb5c34"/><stop offset=".78" stop-color="#c73d1d"/><stop offset=".96" stop-color="#9b2c13"/><stop offset="1" stop-color="#8c2810"/></linearGradient><linearGradient id="g394" gradientUnits="userSpaceOnUse" x1="1550.0" y1="964.91" x2="1550.0" y2="1065.08" gradientTransform="matrix(1 0.01340 0 1 0 -20.776)"><stop offset="0" stop-color="#b83418"/><stop offset=".22" stop-color="#f45831"/><stop offset=".359" stop-color="#fb5c34"/><stop offset=".779" stop-color="#c83d1d"/><stop offset=".958" stop-color="#9c2d13"/><stop offset="1" stop-color="#8c2810"/></linearGradient><linearGradient id="g395" gradientUnits="userSpaceOnUse" x1="1570.0" y1="965.08" x2="1570.0" y2="1065.44" gradientTransform="matrix(1 0.01394 0 1 0 -21.886)"><stop offset="0" stop-color="#b83418"/><stop offset=".219" stop-color="#f35831"/><stop offset=".359" stop-color="#fb5c34"/><stop offset=".777" stop-color="#c93d1d"/><stop offset=".957" stop-color="#9d2d14"/><stop offset="1" stop-color="#8c2810"/></linearGradient><linearGradient id="g396" gradientUnits="userSpaceOnUse" x1="1590.0" y1="965.28" x2="1590.0" y2="1065.80" gradientTransform="matrix(1 0.01458 0 1 0 -23.180)"><stop offset="0" stop-color="#b83418"/><stop offset=".219" stop-color="#f35831"/><stop offset=".358" stop-color="#fb5c34"/><stop offset=".776" stop-color="#c93e1e"/><stop offset=".975" stop-color="#952b12"/><stop offset="1" stop-color="#8c2810"/></linearGradient><linearGradient id="g397" gradientUnits="userSpaceOnUse" x1="1610.0" y1="965.50" x2="1610.0" y2="1066.16" gradientTransform="matrix(1 0.01528 0 1 0 -24.599)"><stop offset="0" stop-color="#b83418"/><stop offset=".238" stop-color="#f55932"/><stop offset=".378" stop-color="#fa5b33"/><stop offset=".795" stop-color="#c53c1d"/><stop offset=".974" stop-color="#962b12"/><stop offset="1" stop-color="#8c2810"/></linearGradient><linearGradient id="g398" gradientUnits="userSpaceOnUse" x1="1630.0" y1="965.75" x2="1630.0" y2="1066.52" gradientTransform="matrix(1 0.01598 0 1 0 -26.051)"><stop offset="0" stop-color="#b83418"/><stop offset=".238" stop-color="#f55832"/><stop offset=".377" stop-color="#fb5b34"/><stop offset=".794" stop-color="#c63c1d"/><stop offset=".973" stop-color="#962b12"/><stop offset="1" stop-color="#8c2810"/></linearGradient><linearGradient id="g399" gradientUnits="userSpaceOnUse" x1="1650.0" y1="966.03" x2="1650.0" y2="1066.88" gradientTransform="matrix(1 0.01663 0 1 0 -27.440)"><stop offset="0" stop-color="#b83418"/><stop offset=".238" stop-color="#f45832"/><stop offset=".357" stop-color="#fc5c34"/><stop offset=".793" stop-color="#c63c1d"/><stop offset=".972" stop-color="#972b12"/><stop offset="1" stop-color="#8c2810"/></linearGradient><linearGradient id="g400" gradientUnits="userSpaceOnUse" x1="1670.0" y1="966.34" x2="1670.0" y2="1067.25" gradientTransform="matrix(1 0.01717 0 1 0 -28.675)"><stop offset="0" stop-color="#b83418"/><stop offset=".238" stop-color="#f45832"/><stop offset=".377" stop-color="#fb5c34"/><stop offset=".793" stop-color="#c73d1d"/><stop offset=".971" stop-color="#972b12"/><stop offset="1" stop-color="#8c2810"/></linearGradient><linearGradient id="g401" gradientUnits="userSpaceOnUse" x1="1690.0" y1="966.66" x2="1690.0" y2="1067.61" gradientTransform="matrix(1 0.01757 0 1 0 -29.701)"><stop offset="0" stop-color="#b83418"/><stop offset=".238" stop-color="#f35831"/><stop offset=".376" stop-color="#fb5c34"/><stop offset=".792" stop-color="#c73d1d"/><stop offset=".971" stop-color="#972b12"/><stop offset="1" stop-color="#8c2810"/></linearGradient><linearGradient id="g402" gradientUnits="userSpaceOnUse" x1="1710.0" y1="967.00" x2="1710.0" y2="1067.97" gradientTransform="matrix(1 0.01800 0 1 0 -30.784)"><stop offset="0" stop-color="#b83418"/><stop offset=".257" stop-color="#f65932"/><stop offset=".396" stop-color="#fa5b33"/><stop offset=".792" stop-color="#c83d1d"/><stop offset=".971" stop-color="#972b12"/><stop offset="1" stop-color="#8c2810"/></linearGradient><linearGradient id="g403" gradientUnits="userSpaceOnUse" x1="1730.0" y1="967.35" x2="1730.0" y2="1068.34" gradientTransform="matrix(1 0.01847 0 1 0 -31.953)"><stop offset="0" stop-color="#b83418"/><stop offset=".257" stop-color="#f55932"/><stop offset=".396" stop-color="#fa5b33"/><stop offset=".792" stop-color="#c93d1d"/><stop offset=".97" stop-color="#972b12"/><stop offset="1" stop-color="#8c2810"/></linearGradient><linearGradient id="g404" gradientUnits="userSpaceOnUse" x1="1750.0" y1="967.73" x2="1750.0" y2="1068.71" gradientTransform="matrix(1 0.01890 0 1 0 -33.070)"><stop offset="0" stop-color="#b83418"/><stop offset=".257" stop-color="#f55832"/><stop offset=".396" stop-color="#fa5b33"/><stop offset=".792" stop-color="#c93e1e"/><stop offset=".97" stop-color="#972b12"/><stop offset="1" stop-color="#8c2810"/></linearGradient><linearGradient id="g405" gradientUnits="userSpaceOnUse" x1="1770.0" y1="968.11" x2="1770.0" y2="1069.08" gradientTransform="matrix(1 0.01931 0 1 0 -34.184)"><stop offset="0" stop-color="#b83418"/><stop offset=".257" stop-color="#f45832"/><stop offset=".376" stop-color="#fb5c34"/><stop offset=".792" stop-color="#ca3e1e"/><stop offset=".971" stop-color="#972b12"/><stop offset="1" stop-color="#8c2810"/></linearGradient><linearGradient id="g406" gradientUnits="userSpaceOnUse" x1="1790.0" y1="968.51" x2="1790.0" y2="1069.46" gradientTransform="matrix(1 0.01977 0 1 0 -35.381)"><stop offset="0" stop-color="#b83418"/><stop offset=".277" stop-color="#f65932"/><stop offset=".416" stop-color="#f95b33"/><stop offset=".792" stop-color="#ca3e1e"/><stop offset="1" stop-color="#8c2810"/></linearGradient><linearGradient id="g407" gradientUnits="userSpaceOnUse" x1="1808.0" y1="968.93" x2="1808.0" y2="1069.76" gradientTransform="matrix(1 0.02013 0 1 0 -36.389)"><stop offset="0" stop-color="#b83418"/><stop offset=".278" stop-color="#f65932"/><stop offset=".417" stop-color="#f95b33"/><stop offset=".793" stop-color="#cb3e1e"/><stop offset="1" stop-color="#8c2810"/></linearGradient><linearGradient id="g408" gradientUnits="userSpaceOnUse" x1="1824.0" y1="969.27" x2="1824.0" y2="1070.07" gradientTransform="matrix(1 0.02055 0 1 0 -37.490)"><stop offset="0" stop-color="#b83418"/><stop offset=".278" stop-color="#f55932"/><stop offset=".417" stop-color="#fa5b33"/><stop offset=".794" stop-color="#cb3e1e"/><stop offset="1" stop-color="#8c2810"/></linearGradient><linearGradient id="g409" gradientUnits="userSpaceOnUse" x1="1840.0" y1="969.62" x2="1840.0" y2="1070.38" gradientTransform="matrix(1 0.02095 0 1 0 -38.552)"><stop offset="0" stop-color="#b83418"/><stop offset=".298" stop-color="#f75a33"/><stop offset=".457" stop-color="#f75a32"/><stop offset=".814" stop-color="#c73d1d"/><stop offset="1" stop-color="#8c2810"/></linearGradient><linearGradient id="g410" gradientUnits="userSpaceOnUse" x1="1856.0" y1="969.98" x2="1856.0" y2="1070.69" gradientTransform="matrix(1 0.02137 0 1 0 -39.668)"><stop offset="0" stop-color="#b83418"/><stop offset=".298" stop-color="#f75a33"/><stop offset=".437" stop-color="#f95a33"/><stop offset=".794" stop-color="#cc3f1e"/><stop offset="1" stop-color="#8c2810"/></linearGradient><linearGradient id="g411" gradientUnits="userSpaceOnUse" x1="1872.0" y1="970.35" x2="1872.0" y2="1071.01" gradientTransform="matrix(1 0.02191 0 1 0 -41.012)"><stop offset="0" stop-color="#b83418"/><stop offset=".298" stop-color="#f75933"/><stop offset=".437" stop-color="#f95a33"/><stop offset=".815" stop-color="#c83d1d"/><stop offset="1" stop-color="#8c2810"/></linearGradient><linearGradient id="g412" gradientUnits="userSpaceOnUse" x1="1888.0" y1="970.74" x2="1888.0" y2="1071.33" gradientTransform="matrix(1 0.02245 0 1 0 -42.387)"><stop offset="0" stop-color="#b83418"/><stop offset=".298" stop-color="#f65932"/><stop offset=".418" stop-color="#fa5b33"/><stop offset=".795" stop-color="#ce3f1f"/><stop offset="1" stop-color="#8c2810"/></linearGradient><linearGradient id="g413" gradientUnits="userSpaceOnUse" x1="1904.0" y1="971.13" x2="1904.0" y2="1071.66" gradientTransform="matrix(1 0.02318 0 1 0 -44.129)"><stop offset="0" stop-color="#b83418"/><stop offset=".318" stop-color="#f85a33"/><stop offset=".497" stop-color="#f55830"/><stop offset=".816" stop-color="#c93d1d"/><stop offset="1" stop-color="#8c2810"/></linearGradient><linearGradient id="g414" gradientUnits="userSpaceOnUse" x1="1920.0" y1="971.54" x2="1920.0" y2="1072.00" gradientTransform="matrix(1 0.02401 0 1 0 -46.107)"><stop offset="0" stop-color="#b83418"/><stop offset=".319" stop-color="#f85a33"/><stop offset=".498" stop-color="#f55831"/><stop offset=".816" stop-color="#c93e1e"/><stop offset="1" stop-color="#8c2810"/></linearGradient><linearGradient id="g415" gradientUnits="userSpaceOnUse" x1="1936.0" y1="971.97" x2="1936.0" y2="1072.36" gradientTransform="matrix(1 0.02459 0 1 0 -47.610)"><stop offset="0" stop-color="#b83418"/><stop offset=".319" stop-color="#f75a33"/><stop offset=".478" stop-color="#f75932"/><stop offset=".817" stop-color="#ca3e1e"/><stop offset="1" stop-color="#8c2810"/></linearGradient><linearGradient id="g416" gradientUnits="userSpaceOnUse" x1="1952.0" y1="972.40" x2="1952.0" y2="1072.74" gradientTransform="matrix(1 0.02484 0 1 0 -48.490)"><stop offset="0" stop-color="#b83418"/><stop offset=".339" stop-color="#f95b33"/><stop offset=".558" stop-color="#ef542d"/><stop offset=".817" stop-color="#cb3e1e"/><stop offset="1" stop-color="#8c2810"/></linearGradient><linearGradient id="g417" gradientUnits="userSpaceOnUse" x1="1968.0" y1="972.82" x2="1968.0" y2="1073.14" gradientTransform="matrix(1 0.02555 0 1 0 -50.287)"><stop offset="0" stop-color="#b83418"/><stop offset=".339" stop-color="#f85a33"/><stop offset=".518" stop-color="#f45730"/><stop offset=".817" stop-color="#cc3f1e"/><stop offset="1" stop-color="#8c2810"/></linearGradient><linearGradient id="g418" gradientUnits="userSpaceOnUse" x1="1984.0" y1="973.23" x2="1984.0" y2="1073.59" gradientTransform="matrix(1 0.02733 0 1 0 -54.216)"><stop offset="0" stop-color="#b83418"/><stop offset=".359" stop-color="#fa5b34"/><stop offset=".618" stop-color="#e9502b"/><stop offset=".817" stop-color="#ce3f1f"/><stop offset="1" stop-color="#8c2810"/></linearGradient><linearGradient id="g419" gradientUnits="userSpaceOnUse" x1="2000.0" y1="973.66" x2="2000.0" y2="1074.08" gradientTransform="matrix(1 0.03008 0 1 0 -60.166)"><stop offset="0" stop-color="#b83418"/><stop offset=".358" stop-color="#f95b34"/><stop offset=".597" stop-color="#ec522c"/><stop offset=".836" stop-color="#c83d1d"/><stop offset="1" stop-color="#8c2810"/></linearGradient><linearGradient id="g420" gradientUnits="userSpaceOnUse" x1="2016.0" y1="974.12" x2="2016.0" y2="1074.63" gradientTransform="matrix(1 0.03358 0 1 0 -67.692)"><stop offset="0" stop-color="#b83418"/><stop offset=".378" stop-color="#fb5c34"/><stop offset=".657" stop-color="#e54e29"/><stop offset=".836" stop-color="#ca3e1e"/><stop offset="1" stop-color="#8c2810"/></linearGradient><linearGradient id="g421" gradientUnits="userSpaceOnUse" x1="2032.0" y1="974.65" x2="2032.0" y2="1075.20" gradientTransform="matrix(1 0.03641 0 1 0 -73.976)"><stop offset="0" stop-color="#b83418"/><stop offset=".398" stop-color="#fd5d35"/><stop offset=".815" stop-color="#d34220"/><stop offset="1" stop-color="#8c2810"/></linearGradient><linearGradient id="g422" gradientUnits="userSpaceOnUse" x1="2048.0" y1="975.25" x2="2048.0" y2="1075.74" gradientTransform="matrix(1 0.03765 0 1 0 -77.100)"><stop offset="0" stop-color="#b83418"/><stop offset=".398" stop-color="#fc5c35"/><stop offset=".756" stop-color="#db4724"/><stop offset=".856" stop-color="#c63c1d"/><stop offset="1" stop-color="#8c2810"/></linearGradient><linearGradient id="g423" gradientUnits="userSpaceOnUse" x1="2064.0" y1="975.91" x2="2064.0" y2="1076.24" gradientTransform="matrix(1 0.03795 0 1 0 -78.326)"><stop offset="0" stop-color="#b83418"/><stop offset=".419" stop-color="#fc5d35"/><stop offset=".837" stop-color="#d0401f"/><stop offset="1" stop-color="#8c2810"/></linearGradient><linearGradient id="g424" gradientUnits="userSpaceOnUse" x1="2080.0" y1="976.63" x2="2080.0" y2="1076.69" gradientTransform="matrix(1 0.03801 0 1 0 -79.071)"><stop offset="0" stop-color="#b83418"/><stop offset=".42" stop-color="#fd5d35"/><stop offset=".84" stop-color="#d24120"/><stop offset="1" stop-color="#8c2810"/></linearGradient><linearGradient id="g425" gradientUnits="userSpaceOnUse" x1="2096.0" y1="977.40" x2="2096.0" y2="1077.10" gradientTransform="matrix(1 0.03816 0 1 0 -79.979)"><stop offset="0" stop-color="#b83418"/><stop offset=".421" stop-color="#fc5c35"/><stop offset=".843" stop-color="#d34220"/><stop offset="1.003" stop-color="#8c2810"/></linearGradient><linearGradient id="g426" gradientUnits="userSpaceOnUse" x1="2112.0" y1="978.21" x2="2112.0" y2="1077.49" gradientTransform="matrix(1 0.03823 0 1 0 -80.733)"><stop offset="0" stop-color="#b83418"/><stop offset=".443" stop-color="#fc5c35"/><stop offset=".846" stop-color="#d34220"/><stop offset=".987" stop-color="#902911"/><stop offset="1.007" stop-color="#8c2810"/></linearGradient><linearGradient id="g427" gradientUnits="userSpaceOnUse" x1="2128.0" y1="979.04" x2="2128.0" y2="1077.87" gradientTransform="matrix(1 0.03832 0 1 0 -81.555)"><stop offset="0" stop-color="#b83418"/><stop offset=".445" stop-color="#fc5c35"/><stop offset=".85" stop-color="#d34220"/><stop offset=".992" stop-color="#8f2911"/><stop offset="1" stop-color="#8c2810"/></linearGradient><linearGradient id="g428" gradientUnits="userSpaceOnUse" x1="2144.0" y1="979.89" x2="2144.0" y2="1078.23" gradientTransform="matrix(1 0.03848 0 1 0 -82.499)"><stop offset="0" stop-color="#b83418"/><stop offset=".447" stop-color="#fc5c35"/><stop offset=".854" stop-color="#d44220"/><stop offset=".976" stop-color="#952a12"/><stop offset="1" stop-color="#8c2810"/></linearGradient><linearGradient id="g429" gradientUnits="userSpaceOnUse" x1="2160.0" y1="980.76" x2="2160.0" y2="1078.59" gradientTransform="matrix(1 0.03868 0 1 0 -83.544)"><stop offset="0" stop-color="#b83418"/><stop offset=".45" stop-color="#fb5c34"/><stop offset=".859" stop-color="#d44321"/><stop offset=".9" stop-color="#be391b"/><stop offset=".981" stop-color="#932a11"/><stop offset="1.002" stop-color="#8c2810"/></linearGradient><linearGradient id="g430" gradientUnits="userSpaceOnUse" x1="2176.0" y1="981.64" x2="2176.0" y2="1078.94" gradientTransform="matrix(1 0.03892 0 1 0 -84.680)"><stop offset="0" stop-color="#b83418"/><stop offset=".452" stop-color="#fa5b34"/><stop offset=".781" stop-color="#de4925"/><stop offset=".884" stop-color="#ce401f"/><stop offset=".945" stop-color="#a12e14"/><stop offset="1.007" stop-color="#8c2810"/></linearGradient><linearGradient id="g431" gradientUnits="userSpaceOnUse" x1="2192.0" y1="982.53" x2="2192.0" y2="1079.29" gradientTransform="matrix(1 0.03919 0 1 0 -85.904)"><stop offset="0" stop-color="#b83418"/><stop offset=".455" stop-color="#fa5b34"/><stop offset=".744" stop-color="#e24c28"/><stop offset=".868" stop-color="#d34220"/><stop offset=".951" stop-color="#9f2d14"/><stop offset="1" stop-color="#8c2810"/></linearGradient><linearGradient id="g432" gradientUnits="userSpaceOnUse" x1="2208.0" y1="983.43" x2="2208.0" y2="1079.64" gradientTransform="matrix(1 0.03950 0 1 0 -87.218)"><stop offset="0" stop-color="#b83418"/><stop offset=".478" stop-color="#fb5c34"/><stop offset=".873" stop-color="#d34220"/><stop offset=".956" stop-color="#9c2d14"/><stop offset="1" stop-color="#8c2810"/></linearGradient><linearGradient id="g433" gradientUnits="userSpaceOnUse" x1="2224.0" y1="984.35" x2="2224.0" y2="1079.99" gradientTransform="matrix(1 0.03985 0 1 0 -88.630)"><stop offset="0" stop-color="#b83418"/><stop offset=".439" stop-color="#f65932"/><stop offset=".606" stop-color="#f45830"/><stop offset=".878" stop-color="#d24120"/><stop offset=".941" stop-color="#a22e15"/><stop offset="1.004" stop-color="#8c2810"/></linearGradient><linearGradient id="g434" gradientUnits="userSpaceOnUse" x1="2240.0" y1="985.28" x2="2240.0" y2="1080.33" gradientTransform="matrix(1 0.04025 0 1 0 -90.152)"><stop offset="0" stop-color="#b83418"/><stop offset=".379" stop-color="#ed542f"/><stop offset=".547" stop-color="#f85a33"/><stop offset=".884" stop-color="#ce401f"/><stop offset=".947" stop-color="#a02e14"/><stop offset="1.01" stop-color="#8c2810"/></linearGradient><linearGradient id="g435" gradientUnits="userSpaceOnUse" x1="2256.0" y1="986.22" x2="2256.0" y2="1080.68" gradientTransform="matrix(1 0.04069 0 1 0 -91.801)"><stop offset="0" stop-color="#b83418"/><stop offset=".339" stop-color="#e8512c"/><stop offset=".529" stop-color="#f95b33"/><stop offset=".868" stop-color="#d34220"/><stop offset=".953" stop-color="#9e2d14"/><stop offset="1" stop-color="#8c2810"/></linearGradient><linearGradient id="g436" gradientUnits="userSpaceOnUse" x1="2272.0" y1="987.17" x2="2272.0" y2="1081.04" gradientTransform="matrix(1 0.04120 0 1 0 -93.604)"><stop offset="0" stop-color="#b83418"/><stop offset=".298" stop-color="#e24e29"/><stop offset=".533" stop-color="#f95b33"/><stop offset=".874" stop-color="#d24220"/><stop offset=".959" stop-color="#9b2c13"/><stop offset="1.001" stop-color="#8c2810"/></linearGradient><linearGradient id="g437" gradientUnits="userSpaceOnUse" x1="2288.0" y1="988.13" x2="2288.0" y2="1081.40" gradientTransform="matrix(1 0.04178 0 1 0 -95.594)"><stop offset="0" stop-color="#b83418"/><stop offset=".279" stop-color="#df4c28"/><stop offset=".536" stop-color="#f95b33"/><stop offset=".879" stop-color="#d1411f"/><stop offset=".944" stop-color="#a12e15"/><stop offset="1.008" stop-color="#8c2810"/></linearGradient><linearGradient id="g438" gradientUnits="userSpaceOnUse" x1="2304.0" y1="989.11" x2="2304.0" y2="1081.76" gradientTransform="matrix(1 0.04246 0 1 0 -97.818)"><stop offset="0" stop-color="#b83418"/><stop offset=".259" stop-color="#dc4a26"/><stop offset=".561" stop-color="#f85a33"/><stop offset=".863" stop-color="#d34321"/><stop offset=".907" stop-color="#ba371a"/><stop offset=".95" stop-color="#9f2d14"/><stop offset="1" stop-color="#8c2810"/></linearGradient><linearGradient id="g439" gradientUnits="userSpaceOnUse" x1="2320.0" y1="990.11" x2="2320.0" y2="1082.13" gradientTransform="matrix(1 0.04325 0 1 0 -100.343)"><stop offset="0" stop-color="#b83418"/><stop offset=".239" stop-color="#da4925"/><stop offset=".565" stop-color="#f85a33"/><stop offset=".869" stop-color="#d24220"/><stop offset=".956" stop-color="#9c2d13"/><stop offset="1" stop-color="#8c2810"/></linearGradient><linearGradient id="g440" gradientUnits="userSpaceOnUse" x1="2336.0" y1="991.12" x2="2336.0" y2="1082.52" gradientTransform="matrix(1 0.04420 0 1 0 -103.261)"><stop offset="0" stop-color="#b83418"/><stop offset=".241" stop-color="#d94825"/><stop offset=".569" stop-color="#f85a33"/><stop offset=".832" stop-color="#d84623"/><stop offset=".875" stop-color="#d14120"/><stop offset=".941" stop-color="#a22e15"/><stop offset="1.007" stop-color="#8c2810"/></linearGradient><linearGradient id="g441" gradientUnits="userSpaceOnUse" x1="2352.0" y1="992.15" x2="2352.0" y2="1082.91" gradientTransform="matrix(1 0.04537 0 1 0 -106.706)"><stop offset="0" stop-color="#b83418"/><stop offset=".22" stop-color="#d74724"/><stop offset=".573" stop-color="#f85a33"/><stop offset=".815" stop-color="#db4824"/><stop offset=".881" stop-color="#cf401f"/><stop offset=".948" stop-color="#a02e14"/><stop offset="1" stop-color="#8c2810"/></linearGradient><linearGradient id="g442" gradientUnits="userSpaceOnUse" x1="2368.0" y1="993.20" x2="2368.0" y2="1083.33" gradientTransform="matrix(1 0.04692 0 1 0 -111.095)"><stop offset="0" stop-color="#b83418"/><stop offset=".222" stop-color="#d64724"/><stop offset=".599" stop-color="#f75a32"/><stop offset=".843" stop-color="#d74522"/><stop offset=".888" stop-color="#c93e1e"/><stop offset=".932" stop-color="#a52f15"/><stop offset="1" stop-color="#8c2810"/></linearGradient><linearGradient id="g443" gradientUnits="userSpaceOnUse" x1="2384.0" y1="994.29" x2="2384.0" y2="1083.77" gradientTransform="matrix(1 0.04910 0 1 0 -117.060)"><stop offset="0" stop-color="#b83418"/><stop offset=".201" stop-color="#d44522"/><stop offset=".603" stop-color="#f75a32"/><stop offset=".805" stop-color="#de4926"/><stop offset=".872" stop-color="#d24220"/><stop offset=".961" stop-color="#9a2c13"/><stop offset="1.006" stop-color="#8c2810"/></linearGradient><linearGradient id="g444" gradientUnits="userSpaceOnUse" x1="2400.0" y1="995.42" x2="2400.0" y2="1084.25" gradientTransform="matrix(1 0.05184 0 1 0 -124.423)"><stop offset="0" stop-color="#b83418"/><stop offset=".203" stop-color="#d34522"/><stop offset=".608" stop-color="#f85a32"/><stop offset=".766" stop-color="#e64f2a"/><stop offset=".878" stop-color="#d0411f"/><stop offset=".946" stop-color="#a02e14"/><stop offset="1" stop-color="#8c2810"/></linearGradient><linearGradient id="g445" gradientUnits="userSpaceOnUse" x1="2416.0" y1="996.60" x2="2416.0" y2="1084.77" gradientTransform="matrix(1 0.05531 0 1 0 -133.628)"><stop offset="0" stop-color="#b83418"/><stop offset=".204" stop-color="#d34522"/><stop offset=".612" stop-color="#f85a33"/><stop offset=".771" stop-color="#e64f2a"/><stop offset=".885" stop-color="#cb3f1e"/><stop offset=".93" stop-color="#a62f15"/><stop offset="1" stop-color="#8c2810"/></linearGradient><linearGradient id="g446" gradientUnits="userSpaceOnUse" x1="2432.0" y1="997.85" x2="2432.0" y2="1085.34" gradientTransform="matrix(1 0.05920 0 1 0 -143.964)"><stop offset="0" stop-color="#b83418"/><stop offset=".206" stop-color="#d34522"/><stop offset=".64" stop-color="#f75932"/><stop offset=".8" stop-color="#e14c27"/><stop offset=".869" stop-color="#d24220"/><stop offset=".96" stop-color="#9a2c13"/><stop offset="1.006" stop-color="#8c2810"/></linearGradient><linearGradient id="g447" gradientUnits="userSpaceOnUse" x1="2448.0" y1="999.17" x2="2448.0" y2="1085.97" gradientTransform="matrix(1 0.06339 0 1 0 -155.169)"><stop offset="0" stop-color="#b83418"/><stop offset=".207" stop-color="#d34422"/><stop offset=".645" stop-color="#f75932"/><stop offset=".783" stop-color="#e64f2a"/><stop offset=".876" stop-color="#d04120"/><stop offset=".945" stop-color="#a02e14"/><stop offset="1" stop-color="#8c2810"/></linearGradient><linearGradient id="g448" gradientUnits="userSpaceOnUse" x1="2464.0" y1="1000.58" x2="2464.0" y2="1086.64" gradientTransform="matrix(1 0.06772 0 1 0 -166.874)"><stop offset="0" stop-color="#b83418"/><stop offset=".186" stop-color="#d04321"/><stop offset=".651" stop-color="#f75932"/><stop offset=".79" stop-color="#e54f29"/><stop offset=".883" stop-color="#cb3f1e"/><stop offset=".93" stop-color="#a62f15"/><stop offset="1" stop-color="#8c2810"/></linearGradient><linearGradient id="g449" gradientUnits="userSpaceOnUse" x1="2480.0" y1="1002.07" x2="2480.0" y2="1087.36" gradientTransform="matrix(1 0.07230 0 1 0 -179.297)"><stop offset="0" stop-color="#b83418"/><stop offset=".188" stop-color="#d04321"/><stop offset=".657" stop-color="#f75932"/><stop offset=".774" stop-color="#eb522c"/><stop offset=".868" stop-color="#d24220"/><stop offset=".961" stop-color="#992c13"/><stop offset="1.008" stop-color="#8c2810"/></linearGradient><linearGradient id="g450" gradientUnits="userSpaceOnUse" x1="2496.0" y1="1003.66" x2="2496.0" y2="1088.12" gradientTransform="matrix(1 0.07673 0 1 0 -191.527)"><stop offset="0" stop-color="#b83418"/><stop offset=".189" stop-color="#d04321"/><stop offset=".687" stop-color="#f55931"/><stop offset=".781" stop-color="#eb522c"/><stop offset=".876" stop-color="#d0411f"/><stop offset=".924" stop-color="#a93116"/><stop offset="1" stop-color="#8c2810"/></linearGradient><linearGradient id="g451" gradientUnits="userSpaceOnUse" x1="2512.0" y1="1005.36" x2="2512.0" y2="1088.89" gradientTransform="matrix(1 0.08052 0 1 0 -202.264)"><stop offset="0" stop-color="#b83418"/><stop offset=".192" stop-color="#d04321"/><stop offset=".694" stop-color="#f55831"/><stop offset=".79" stop-color="#ea522c"/><stop offset=".886" stop-color="#c83d1e"/><stop offset=".934" stop-color="#a42f15"/><stop offset="1.006" stop-color="#8c2810"/></linearGradient><linearGradient id="g452" gradientUnits="userSpaceOnUse" x1="2528.0" y1="1007.16" x2="2528.0" y2="1089.66" gradientTransform="matrix(1 0.08306 0 1 0 -209.965)"><stop offset="0" stop-color="#b83418"/><stop offset=".194" stop-color="#d04321"/><stop offset=".703" stop-color="#f55831"/><stop offset=".8" stop-color="#e9512b"/><stop offset=".873" stop-color="#d14120"/><stop offset=".945" stop-color="#9f2e14"/><stop offset="1" stop-color="#8c2810"/></linearGradient><linearGradient id="g453" gradientUnits="userSpaceOnUse" x1="2544.0" y1="1009.05" x2="2544.0" y2="1090.37" gradientTransform="matrix(1 0.08350 0 1 0 -212.428)"><stop offset="0" stop-color="#b83418"/><stop offset=".197" stop-color="#d04321"/><stop offset=".689" stop-color="#f65932"/><stop offset=".812" stop-color="#e64f2a"/><stop offset=".885" stop-color="#c93e1e"/><stop offset=".935" stop-color="#a32f15"/><stop offset="1.008" stop-color="#8c2810"/></linearGradient><linearGradient id="g454" gradientUnits="userSpaceOnUse" x1="2560.0" y1="1011.01" x2="2560.0" y2="1091.00" gradientTransform="matrix(1 0.08279 0 1 0 -211.946)"><stop offset="0" stop-color="#b83418"/><stop offset=".2" stop-color="#d04321"/><stop offset=".7" stop-color="#f55931"/><stop offset=".8" stop-color="#ec532d"/><stop offset=".875" stop-color="#d04120"/><stop offset=".925" stop-color="#a83016"/><stop offset="1" stop-color="#8c2810"/></linearGradient><linearGradient id="g455" gradientUnits="userSpaceOnUse" x1="2576.0" y1="1013.03" x2="2576.0" y2="1091.55" gradientTransform="matrix(1 0.08922 0 1 0 -229.831)"><stop offset="0" stop-color="#b83418"/><stop offset=".204" stop-color="#d04321"/><stop offset=".713" stop-color="#f55831"/><stop offset=".815" stop-color="#e8502b"/><stop offset=".892" stop-color="#c43c1d"/><stop offset=".968" stop-color="#972b12"/><stop offset="1" stop-color="#8c2810"/></linearGradient><linearGradient id="g456" gradientUnits="userSpaceOnUse" x1="2592.0" y1="1015.34" x2="2592.0" y2="1092.02" gradientTransform="matrix(1 0.09898 0 1 0 -256.567)"><stop offset="0" stop-color="#b83418"/><stop offset=".235" stop-color="#d14421"/><stop offset=".73" stop-color="#f45830"/><stop offset=".809" stop-color="#ec532d"/><stop offset=".887" stop-color="#c83e1e"/><stop offset=".939" stop-color="#a22e15"/><stop offset="1" stop-color="#8c2810"/></linearGradient><linearGradient id="g457" gradientUnits="userSpaceOnUse" x1="2608.0" y1="1018.03" x2="2608.0" y2="1092.47" gradientTransform="matrix(1 0.10797 0 1 0 -281.579)"><stop offset="0" stop-color="#b83418"/><stop offset=".242" stop-color="#d24422"/><stop offset=".726" stop-color="#f45831"/><stop offset=".806" stop-color="#ee542e"/><stop offset=".887" stop-color="#c93e1e"/><stop offset=".94" stop-color="#a22e15"/><stop offset="1" stop-color="#8c2810"/></linearGradient><linearGradient id="g458" gradientUnits="userSpaceOnUse" x1="2624.0" y1="1021.05" x2="2624.0" y2="1092.96" gradientTransform="matrix(1 0.10986 0 1 0 -288.272)"><stop offset="0" stop-color="#b83418"/><stop offset=".278" stop-color="#d44523"/><stop offset=".723" stop-color="#f45831"/><stop offset=".806" stop-color="#ef552e"/><stop offset=".89" stop-color="#c53c1d"/><stop offset=".946" stop-color="#9f2e14"/><stop offset="1.001" stop-color="#8c2810"/></linearGradient><linearGradient id="g459" gradientUnits="userSpaceOnUse" x1="2640.0" y1="1024.06" x2="2640.0" y2="1093.65" gradientTransform="matrix(1 0.10575 0 1 0 -279.177)"><stop offset="0" stop-color="#b83418"/><stop offset=".287" stop-color="#d44623"/><stop offset=".718" stop-color="#f35831"/><stop offset=".805" stop-color="#ef552e"/><stop offset=".891" stop-color="#c33b1c"/><stop offset=".948" stop-color="#9e2d14"/><stop offset="1.006" stop-color="#8c2810"/></linearGradient><linearGradient id="g460" gradientUnits="userSpaceOnUse" x1="2656.0" y1="1026.76" x2="2656.0" y2="1094.61" gradientTransform="matrix(1 0.11061 0 1 0 -293.773)"><stop offset="0" stop-color="#b83418"/><stop offset=".265" stop-color="#d34522"/><stop offset=".737" stop-color="#f25730"/><stop offset=".825" stop-color="#e54f2a"/><stop offset=".973" stop-color="#932a12"/><stop offset="1.002" stop-color="#8c2810"/></linearGradient><linearGradient id="g461" gradientUnits="userSpaceOnUse" x1="2672.0" y1="1029.34" x2="2672.0" y2="1095.84" gradientTransform="matrix(1 0.12045 0 1 0 -321.842)"><stop offset="0" stop-color="#b83418"/><stop offset=".301" stop-color="#d54623"/><stop offset=".722" stop-color="#f25730"/><stop offset=".812" stop-color="#eb532c"/><stop offset=".872" stop-color="#ce401f"/><stop offset=".932" stop-color="#a22e15"/><stop offset="1" stop-color="#8c2810"/></linearGradient><linearGradient id="g462" gradientUnits="userSpaceOnUse" x1="2688.0" y1="1031.96" x2="2688.0" y2="1097.21" gradientTransform="matrix(1 0.12309 0 1 0 -330.871)"><stop offset="0" stop-color="#b83418"/><stop offset=".307" stop-color="#d54623"/><stop offset=".736" stop-color="#f1562f"/><stop offset=".828" stop-color="#e44e29"/><stop offset=".95" stop-color="#9b2c13"/><stop offset="1.012" stop-color="#8c2810"/></linearGradient><linearGradient id="g463" gradientUnits="userSpaceOnUse" x1="2698.0" y1="1034.53" x2="2698.0" y2="1097.55" gradientTransform="matrix(1 0.11977 0 1 0 -323.133)"><stop offset="0" stop-color="#b83418"/><stop offset=".159" stop-color="#cc401f"/><stop offset=".73" stop-color="#f15630"/><stop offset=".825" stop-color="#e7502a"/><stop offset=".952" stop-color="#9d2d14"/><stop offset="1.016" stop-color="#8c2810"/></linearGradient><linearGradient id="g464" gradientUnits="userSpaceOnUse" x1="2702.5" y1="1035.15" x2="2702.5" y2="1097.95" gradientTransform="matrix(1 0.11657 0 1 0 -315.019)"><stop offset="0" stop-color="#b83418"/><stop offset=".191" stop-color="#ce4220"/><stop offset=".733" stop-color="#f1562f"/><stop offset=".828" stop-color="#e54f2a"/><stop offset=".955" stop-color="#9b2c13"/><stop offset="1" stop-color="#8c2810"/></linearGradient><linearGradient id="g465" gradientUnits="userSpaceOnUse" x1="2707.5" y1="1035.91" x2="2707.5" y2="1098.37" gradientTransform="matrix(1 0.11611 0 1 0 -314.371)"><stop offset="0" stop-color="#b83418"/><stop offset=".16" stop-color="#cc401f"/><stop offset=".736" stop-color="#f1562f"/><stop offset=".833" stop-color="#e34e29"/><stop offset=".929" stop-color="#a52f15"/><stop offset="1" stop-color="#8c2810"/></linearGradient><linearGradient id="g466" gradientUnits="userSpaceOnUse" x1="2712.5" y1="1036.65" x2="2712.5" y2="1098.85" gradientTransform="matrix(1 0.11869 0 1 0 -321.945)"><stop offset="0" stop-color="#b83418"/><stop offset=".161" stop-color="#cc401f"/><stop offset=".74" stop-color="#f0562f"/><stop offset=".804" stop-color="#ed542d"/><stop offset=".9" stop-color="#ba381a"/><stop offset=".965" stop-color="#982b12"/><stop offset="1" stop-color="#8c2810"/></linearGradient><linearGradient id="g467" gradientUnits="userSpaceOnUse" x1="2717.5" y1="1037.37" x2="2717.5" y2="1099.36" gradientTransform="matrix(1 0.11924 0 1 0 -324.035)"><stop offset="0" stop-color="#b83418"/><stop offset=".161" stop-color="#cc401f"/><stop offset=".742" stop-color="#f0562f"/><stop offset=".807" stop-color="#ed542d"/><stop offset=".903" stop-color="#b8371a"/><stop offset=".968" stop-color="#962b12"/><stop offset="1" stop-color="#8c2810"/></linearGradient><linearGradient id="g468" gradientUnits="userSpaceOnUse" x1="2722.5" y1="1038.05" x2="2722.5" y2="1099.89" gradientTransform="matrix(1 0.11743 0 1 0 -319.715)"><stop offset="0" stop-color="#b83418"/><stop offset=".162" stop-color="#cc401f"/><stop offset=".744" stop-color="#f0552f"/><stop offset=".809" stop-color="#ec542d"/><stop offset=".873" stop-color="#ce411f"/><stop offset=".938" stop-color="#a12e14"/><stop offset="1.003" stop-color="#8c2810"/></linearGradient><linearGradient id="g469" gradientUnits="userSpaceOnUse" x1="2727.5" y1="1038.69" x2="2727.5" y2="1100.42" gradientTransform="matrix(1 0.11324 0 1 0 -308.849)"><stop offset="0" stop-color="#b83418"/><stop offset=".162" stop-color="#cb401f"/><stop offset=".745" stop-color="#ef552f"/><stop offset=".81" stop-color="#ec532d"/><stop offset=".875" stop-color="#cd401f"/><stop offset=".94" stop-color="#a02e14"/><stop offset="1.004" stop-color="#8c2810"/></linearGradient><linearGradient id="g470" gradientUnits="userSpaceOnUse" x1="2732.5" y1="1039.29" x2="2732.5" y2="1100.94" gradientTransform="matrix(1 0.10665 0 1 0 -291.420)"><stop offset="0" stop-color="#b83418"/><stop offset=".162" stop-color="#cb401f"/><stop offset=".746" stop-color="#ef552e"/><stop offset=".811" stop-color="#ec532d"/><stop offset=".876" stop-color="#cc401f"/><stop offset=".941" stop-color="#a02e14"/><stop offset="1.006" stop-color="#8c2810"/></linearGradient><linearGradient id="g471" gradientUnits="userSpaceOnUse" x1="2737.5" y1="1039.84" x2="2737.5" y2="1101.43" gradientTransform="matrix(1 0.09709 0 1 0 -265.782)"><stop offset="0" stop-color="#b83418"/><stop offset=".162" stop-color="#cb401f"/><stop offset=".747" stop-color="#ef552e"/><stop offset=".812" stop-color="#ec532c"/><stop offset=".877" stop-color="#cc3f1f"/><stop offset=".942" stop-color="#a02e14"/><stop offset="1.007" stop-color="#8c2810"/></linearGradient><linearGradient id="g472" gradientUnits="userSpaceOnUse" x1="2742.5" y1="1040.32" x2="2742.5" y2="1101.86" gradientTransform="matrix(1 0.08292 0 1 0 -227.421)"><stop offset="0" stop-color="#b83418"/><stop offset=".163" stop-color="#cb401f"/><stop offset=".748" stop-color="#ee552e"/><stop offset=".813" stop-color="#eb532c"/><stop offset=".878" stop-color="#cb3f1f"/><stop offset=".943" stop-color="#a02e14"/><stop offset="1.008" stop-color="#8c2810"/></linearGradient><linearGradient id="g473" gradientUnits="userSpaceOnUse" x1="2747.5" y1="1040.72" x2="2747.5" y2="1102.19" gradientTransform="matrix(1 0.06319 0 1 0 -173.619)"><stop offset="0" stop-color="#b83418"/><stop offset=".163" stop-color="#cb401f"/><stop offset=".748" stop-color="#ee542e"/><stop offset=".813" stop-color="#eb532c"/><stop offset=".976" stop-color="#942a12"/><stop offset="1.009" stop-color="#8c2810"/></linearGradient><linearGradient id="g474" gradientUnits="userSpaceOnUse" x1="2752.5" y1="1041.02" x2="2752.5" y2="1102.34" gradientTransform="matrix(1 0.03530 0 1 0 -97.172)"><stop offset="0" stop-color="#b83418"/><stop offset=".163" stop-color="#cb401f"/><stop offset=".75" stop-color="#ee542e"/><stop offset=".815" stop-color="#eb532c"/><stop offset=".978" stop-color="#932a12"/><stop offset="1.011" stop-color="#8c2810"/></linearGradient><linearGradient id="g475" gradientUnits="userSpaceOnUse" x1="2757.5" y1="1041.22" x2="2757.5" y2="1102.34" gradientTransform="matrix(1 -0.00400 0 1 0 11.022)"><stop offset="0" stop-color="#b83418"/><stop offset=".164" stop-color="#cb401f"/><stop offset=".753" stop-color="#ed542e"/><stop offset=".818" stop-color="#ea522c"/><stop offset=".949" stop-color="#9e2d14"/><stop offset="1.014" stop-color="#8c2810"/></linearGradient><linearGradient id="g476" gradientUnits="userSpaceOnUse" x1="2762.5" y1="1041.34" x2="2762.5" y2="1102.19" gradientTransform="matrix(1 -0.06094 0 1 0 168.344)"><stop offset="0" stop-color="#b83418"/><stop offset=".164" stop-color="#cb401f"/><stop offset=".723" stop-color="#ee552e"/><stop offset=".822" stop-color="#e7502a"/><stop offset=".953" stop-color="#9b2c13"/><stop offset="1" stop-color="#8c2810"/></linearGradient><linearGradient id="g477" gradientUnits="userSpaceOnUse" x1="2767.5" y1="1041.37" x2="2767.5" y2="1101.53" gradientTransform="matrix(1 -0.22670 0 1 0 627.393)"><stop offset="0" stop-color="#b83418"/><stop offset=".166" stop-color="#cb401f"/><stop offset=".731" stop-color="#ed542e"/><stop offset=".798" stop-color="#ea522c"/><stop offset=".864" stop-color="#cc401f"/><stop offset=".931" stop-color="#a02e14"/><stop offset="1" stop-color="#8c2810"/></linearGradient><linearGradient id="g478" gradientUnits="userSpaceOnUse" x1="2772.5" y1="1041.29" x2="2772.5" y2="1099.28" gradientTransform="matrix(1 -0.43584 0 1 0 1208.353)"><stop offset="0" stop-color="#b83418"/><stop offset=".172" stop-color="#cb401f"/><stop offset=".724" stop-color="#ec532d"/><stop offset=".793" stop-color="#e7502a"/><stop offset=".897" stop-color="#a42f15"/><stop offset=".966" stop-color="#8c2810"/><stop offset="1" stop-color="#8c2810"/></linearGradient><linearGradient id="g479" gradientUnits="userSpaceOnUse" x1="2777.5" y1="1041.16" x2="2777.5" y2="1095.00" gradientTransform="matrix(1 -0.45587 0 1 0 1266.170)"><stop offset="0" stop-color="#b83418"/><stop offset=".186" stop-color="#cc4120"/><stop offset=".706" stop-color="#ed542d"/><stop offset=".78" stop-color="#e9522b"/><stop offset=".854" stop-color="#c33c1d"/><stop offset=".892" stop-color="#a63016"/><stop offset=".966" stop-color="#8c2810"/><stop offset="1.003" stop-color="#8c2810"/></linearGradient><linearGradient id="g480" gradientUnits="userSpaceOnUse" x1="2782.5" y1="1040.99" x2="2782.5" y2="1090.57" gradientTransform="matrix(1 -0.54680 0 1 0 1521.467)"><stop offset="0" stop-color="#b83418"/><stop offset=".242" stop-color="#cf4321"/><stop offset=".726" stop-color="#eb532c"/><stop offset=".766" stop-color="#e9512b"/><stop offset=".847" stop-color="#c03b1c"/><stop offset=".887" stop-color="#a32f15"/><stop offset=".968" stop-color="#8c2810"/><stop offset="1.008" stop-color="#8c2810"/></linearGradient><linearGradient id="g481" gradientUnits="userSpaceOnUse" x1="2787.5" y1="1040.78" x2="2787.5" y2="1085.27" gradientTransform="matrix(1 -0.64439 0 1 0 1796.239)"><stop offset="0" stop-color="#b83418"/><stop offset=".27" stop-color="#d14422"/><stop offset=".719" stop-color="#ea522c"/><stop offset=".764" stop-color="#e8512b"/><stop offset=".899" stop-color="#992c13"/><stop offset=".944" stop-color="#8c2810"/><stop offset="1" stop-color="#8c2810"/></linearGradient><linearGradient id="g482" gradientUnits="userSpaceOnUse" x1="2792.5" y1="1040.55" x2="2792.5" y2="1079.04" gradientTransform="matrix(1 -0.79478 0 1 0 2219.430)"><stop offset="0" stop-color="#b83418"/><stop offset=".208" stop-color="#ce4220"/><stop offset=".676" stop-color="#eb532d"/><stop offset=".728" stop-color="#e8512b"/><stop offset=".78" stop-color="#d44522"/><stop offset=".832" stop-color="#ae3318"/><stop offset=".883" stop-color="#952b12"/><stop offset="1" stop-color="#8c2810"/></linearGradient><linearGradient id="g483" gradientUnits="userSpaceOnUse" x1="2797.5" y1="1040.31" x2="2797.5" y2="1071.32" gradientTransform="matrix(1 -1.05460 0 1 0 2950.256)"><stop offset="0" stop-color="#b83418"/><stop offset=".194" stop-color="#cd4220"/><stop offset=".645" stop-color="#ea522c"/><stop offset=".71" stop-color="#dc4a26"/><stop offset=".774" stop-color="#ad3317"/><stop offset=".839" stop-color="#8e2910"/><stop offset="1.032" stop-color="#8c2810"/></linearGradient><linearGradient id="g484" gradientUnits="userSpaceOnUse" x1="2802.5" y1="1040.10" x2="2802.5" y2="1061.01" gradientTransform="matrix(1 -1.19635 0 1 0 3352.782)"><stop offset="0" stop-color="#b83418"/><stop offset=".287" stop-color="#d64724"/><stop offset=".478" stop-color="#e8512c"/><stop offset=".574" stop-color="#e8512b"/><stop offset=".669" stop-color="#a63016"/><stop offset=".765" stop-color="#8c2810"/><stop offset="1" stop-color="#8c2810"/></linearGradient><linearGradient id="g485" gradientUnits="userSpaceOnUse" x1="2807.0" y1="1040.00" x2="2807.0" y2="1049.26" gradientTransform="matrix(1 -1.17035 0 1 0 3285.165)"><stop offset="0" stop-color="#b83418"/><stop offset=".216" stop-color="#d74825"/><stop offset=".432" stop-color="#e14d28"/><stop offset=".648" stop-color="#8c2810"/><stop offset="1.08" stop-color="#8c2810"/></linearGradient></defs><g clip-path="url(#deckclip)"><g filter="url(#dbl)"><polygon points="41,986.0 47,983.5 47,989.4 41,989.6" fill="url(#g1)"/><polygon points="47,983.5 53,980.9 53,989.2 47,989.4" fill="url(#g2)"/><polygon points="53,980.9 59,978.4 59,989.0 53,989.2" fill="url(#g3)"/><polygon points="59,978.4 65,975.9 65,988.9 59,989.0" fill="url(#g4)"/><polygon points="65,975.9 71,973.3 71,988.7 65,988.9" fill="url(#g5)"/><polygon points="71,973.3 77,970.8 77,988.5 71,988.7" fill="url(#g6)"/><polygon points="77,970.8 83,968.3 83,988.3 77,988.5" fill="url(#g7)"/><polygon points="83,968.3 89,965.8 89,988.1 83,988.3" fill="url(#g8)"/><polygon points="89,965.8 95,963.2 95,988.0 89,988.1" fill="url(#g9)"/><polygon points="95,963.2 101,960.7 101,987.8 95,988.0" fill="url(#g10)"/><polygon points="101,960.7 107,958.2 107,987.6 101,987.8" fill="url(#g11)"/><polygon points="107,958.2 113,955.6 113,987.4 107,987.6" fill="url(#g12)"/><polygon points="113,955.6 119,953.1 119,987.2 113,987.4" fill="url(#g13)"/><polygon points="119,953.1 125,950.6 125,987.0 119,987.2" fill="url(#g14)"/><polygon points="125,950.6 131,948.0 131,986.8 125,987.0" fill="url(#g15)"/><polygon points="131,948.0 137,945.5 137,986.6 131,986.8" fill="url(#g16)"/><polygon points="137,945.5 143,943.0 143,986.4 137,986.6" fill="url(#g17)"/><polygon points="143,943.0 149,940.5 149,986.2 143,986.4" fill="url(#g18)"/><polygon points="149,940.5 152,939.2 152,986.1 149,986.2" fill="url(#g19)"/><polygon points="152,901.5 154,898.5 154,935.1 152,935.4" fill="url(#g20)"/><polygon points="152,933.9 154,933.6 154,986.0 152,986.1" fill="url(#g21)"/><polygon points="154,898.5 157,896.5 157,934.8 154,935.1" fill="url(#g22)"/><polygon points="154,933.6 157,933.3 157,985.9 154,986.0" fill="url(#g23)"/><polygon points="157,896.5 160,895.4 160,934.4 157,934.8" fill="url(#g24)"/><polygon points="157,933.3 160,932.9 160,985.8 157,985.9" fill="url(#g25)"/><polygon points="160,895.4 168,892.9 168,933.5 160,934.4" fill="url(#g26)"/><polygon points="160,932.9 168,932.0 168,985.5 160,985.8" fill="url(#g27)"/><polygon points="168,892.9 176,891.0 176,932.7 168,933.5" fill="url(#g28)"/><polygon points="168,932.0 176,931.2 176,985.2 168,985.5" fill="url(#g29)"/><polygon points="176,891.0 184,889.3 184,931.8 176,932.7" fill="url(#g30)"/><polygon points="176,931.2 184,930.3 184,984.9 176,985.2" fill="url(#g31)"/><polygon points="184,889.3 192,887.6 192,930.7 184,931.8" fill="url(#g32)"/><polygon points="184,930.3 192,929.2 192,984.5 184,984.9" fill="url(#g33)"/><polygon points="192,887.6 200,885.9 200,929.5 192,930.7" fill="url(#g34)"/><polygon points="192,929.2 200,928.0 200,984.1 192,984.5" fill="url(#g35)"/><polygon points="200,885.9 208,884.3 208,928.1 200,929.5" fill="url(#g36)"/><polygon points="200,928.0 208,926.6 208,983.6 200,984.1" fill="url(#g37)"/><polygon points="208,884.3 216,882.7 216,926.6 208,928.1" fill="url(#g38)"/><polygon points="208,926.6 216,925.1 216,983.1 208,983.6" fill="url(#g39)"/><polygon points="216,882.7 224,881.0 224,925.0 216,926.6" fill="url(#g40)"/><polygon points="216,925.1 224,923.5 224,982.6 216,983.1" fill="url(#g41)"/><polygon points="224,881.0 232,879.4 232,923.3 224,925.0" fill="url(#g42)"/><polygon points="224,923.5 232,921.8 232,982.1 224,982.6" fill="url(#g43)"/><polygon points="232,879.4 240,877.9 240,921.7 232,923.3" fill="url(#g44)"/><polygon points="232,921.8 240,920.2 240,981.6 232,982.1" fill="url(#g45)"/><polygon points="240,877.9 248,876.3 248,920.1 240,921.7" fill="url(#g46)"/><polygon points="240,920.2 248,918.6 248,981.2 240,981.6" fill="url(#g47)"/><polygon points="248,876.3 256,874.7 256,918.7 248,920.1" fill="url(#g48)"/><polygon points="248,918.6 256,917.2 256,980.8 248,981.2" fill="url(#g49)"/><polygon points="256,874.7 264,873.2 264,917.3 256,918.7" fill="url(#g50)"/><polygon points="256,917.2 264,915.8 264,980.4 256,980.8" fill="url(#g51)"/><polygon points="264,873.2 272,871.7 272,916.1 264,917.3" fill="url(#g52)"/><polygon points="264,915.8 272,914.6 272,980.1 264,980.4" fill="url(#g53)"/><polygon points="272,871.7 280,870.3 280,914.9 272,916.1" fill="url(#g54)"/><polygon points="272,914.6 280,913.4 280,979.7 272,980.1" fill="url(#g55)"/><polygon points="280,870.3 288,869.0 288,913.9 280,914.9" fill="url(#g56)"/><polygon points="280,913.4 288,912.4 288,979.5 280,979.7" fill="url(#g57)"/><polygon points="288,869.0 296,867.7 296,912.9 288,913.9" fill="url(#g58)"/><polygon points="288,912.4 296,911.4 296,979.2 288,979.5" fill="url(#g59)"/><polygon points="296,867.7 304,866.4 304,912.1 296,912.9" fill="url(#g60)"/><polygon points="296,911.4 304,910.6 304,979.0 296,979.2" fill="url(#g61)"/><polygon points="304,866.4 312,865.1 312,911.3 304,912.1" fill="url(#g62)"/><polygon points="304,910.6 312,909.8 312,978.8 304,979.0" fill="url(#g63)"/><polygon points="312,865.1 320,863.9 320,910.5 312,911.3" fill="url(#g64)"/><polygon points="312,909.8 320,909.0 320,978.6 312,978.8" fill="url(#g65)"/><polygon points="320,863.9 328,862.7 328,909.8 320,910.5" fill="url(#g66)"/><polygon points="320,909.0 328,908.3 328,978.4 320,978.6" fill="url(#g67)"/><polygon points="328,862.7 336,861.5 336,909.1 328,909.8" fill="url(#g68)"/><polygon points="328,908.3 336,907.6 336,978.2 328,978.4" fill="url(#g69)"/><polygon points="336,861.5 344,860.3 344,908.5 336,909.1" fill="url(#g70)"/><polygon points="336,907.6 344,907.0 344,978.1 336,978.2" fill="url(#g71)"/><polygon points="344,860.3 352,859.1 352,907.8 344,908.5" fill="url(#g72)"/><polygon points="344,907.0 352,906.3 352,977.9 344,978.1" fill="url(#g73)"/><polygon points="352,859.1 360,857.9 360,907.2 352,907.8" fill="url(#g74)"/><polygon points="352,906.3 360,905.7 360,977.7 352,977.9" fill="url(#g75)"/><polygon points="360,857.9 368,856.8 368,906.6 360,907.2" fill="url(#g76)"/><polygon points="360,905.7 368,905.1 368,977.6 360,977.7" fill="url(#g77)"/><polygon points="368,856.8 376,855.5 376,906.0 368,906.6" fill="url(#g78)"/><polygon points="368,905.1 376,904.5 376,977.4 368,977.6" fill="url(#g79)"/><polygon points="376,855.5 384,854.3 384,905.4 376,906.0" fill="url(#g80)"/><polygon points="376,904.5 384,903.9 384,977.3 376,977.4" fill="url(#g81)"/><polygon points="384,854.3 392,853.1 392,904.8 384,905.4" fill="url(#g82)"/><polygon points="384,903.9 392,903.3 392,977.2 384,977.3" fill="url(#g83)"/><polygon points="392,853.1 400,851.9 400,904.2 392,904.8" fill="url(#g84)"/><polygon points="392,903.3 400,902.7 400,977.0 392,977.2" fill="url(#g85)"/><polygon points="400,851.9 416,849.4 416,903.1 400,904.2" fill="url(#g86)"/><polygon points="400,902.7 416,901.6 416,976.8 400,977.0" fill="url(#g87)"/><polygon points="416,849.4 432,847.0 432,902.0 416,903.1" fill="url(#g88)"/><polygon points="416,901.6 432,900.5 432,976.5 416,976.8" fill="url(#g89)"/><polygon points="432,847.0 448,844.7 448,901.0 432,902.0" fill="url(#g90)"/><polygon points="432,900.5 448,899.5 448,976.2 432,976.5" fill="url(#g91)"/><polygon points="448,844.7 464,842.5 464,899.9 448,901.0" fill="url(#g92)"/><polygon points="448,899.5 464,898.4 464,976.0 448,976.2" fill="url(#g93)"/><polygon points="464,842.5 480,840.4 480,898.8 464,899.9" fill="url(#g94)"/><polygon points="464,898.4 480,897.3 480,975.7 464,976.0" fill="url(#g95)"/><polygon points="480,840.4 496,838.4 496,897.8 480,898.8" fill="url(#g96)"/><polygon points="480,897.3 496,896.3 496,975.5 480,975.7" fill="url(#g97)"/><polygon points="496,838.4 512,836.5 512,896.7 496,897.8" fill="url(#g98)"/><polygon points="496,896.3 512,895.2 512,975.2 496,975.5" fill="url(#g99)"/><polygon points="512,836.5 528,834.7 528,895.6 512,896.7" fill="url(#g100)"/><polygon points="512,895.2 528,894.1 528,975.0 512,975.2" fill="url(#g101)"/><polygon points="528,834.7 544,832.9 544,894.5 528,895.6" fill="url(#g102)"/><polygon points="528,894.1 544,893.0 544,974.7 528,975.0" fill="url(#g103)"/><polygon points="544,832.9 560,831.2 560,893.5 544,894.5" fill="url(#g104)"/><polygon points="544,893.0 560,892.0 560,974.4 544,974.7" fill="url(#g105)"/><polygon points="560,831.2 576,829.6 576,892.5 560,893.5" fill="url(#g106)"/><polygon points="560,892.0 576,891.0 576,974.2 560,974.4" fill="url(#g107)"/><polygon points="576,829.6 592,828.0 592,891.4 576,892.5" fill="url(#g108)"/><polygon points="576,891.0 592,889.9 592,973.9 576,974.2" fill="url(#g109)"/><polygon points="592,828.0 608,826.5 608,890.4 592,891.4" fill="url(#g110)"/><polygon points="592,889.9 608,888.9 608,973.7 592,973.9" fill="url(#g111)"/><polygon points="608,826.5 624,825.2 624,973.5 608,973.7" fill="url(#g112)"/><polygon points="624,825.2 640,823.9 640,973.2 624,973.5" fill="url(#g113)"/><polygon points="640,823.9 656,822.6 656,973.0 640,973.2" fill="url(#g114)"/><polygon points="656,822.6 672,821.4 672,972.7 656,973.0" fill="url(#g115)"/><polygon points="672,821.4 688,820.1 688,972.4 672,972.7" fill="url(#g116)"/><polygon points="688,820.1 704,818.8 704,972.0 688,972.4" fill="url(#g117)"/><polygon points="704,818.8 720,817.6 720,971.6 704,972.0" fill="url(#g118)"/><polygon points="720,817.6 736,816.3 736,971.2 720,971.6" fill="url(#g119)"/><polygon points="736,816.3 752,815.1 752,970.7 736,971.2" fill="url(#g120)"/><polygon points="752,815.1 768,813.9 768,970.2 752,970.7" fill="url(#g121)"/><polygon points="768,813.9 784,812.7 784,969.8 768,970.2" fill="url(#g122)"/><polygon points="784,812.7 800,811.6 800,969.3 784,969.8" fill="url(#g123)"/><polygon points="800,811.6 816,810.6 816,968.8 800,969.3" fill="url(#g124)"/><polygon points="816,810.6 832,809.6 832,968.4 816,968.8" fill="url(#g125)"/><polygon points="832,809.6 848,808.7 848,967.9 832,968.4" fill="url(#g126)"/><polygon points="848,808.7 864,807.8 864,967.5 848,967.9" fill="url(#g127)"/><polygon points="864,807.8 880,807.0 880,967.1 864,967.5" fill="url(#g128)"/><polygon points="880,807.0 896,806.2 896,966.7 880,967.1" fill="url(#g129)"/><polygon points="896,806.2 912,805.4 912,966.4 896,966.7" fill="url(#g130)"/><polygon points="912,805.4 928,804.7 928,966.1 912,966.4" fill="url(#g131)"/><polygon points="928,804.7 944,803.8 944,965.9 928,966.1" fill="url(#g132)"/><polygon points="944,803.8 960,803.0 960,965.7 944,965.9" fill="url(#g133)"/><polygon points="960,803.0 976,802.3 976,965.5 960,965.7" fill="url(#g134)"/><polygon points="976,802.3 992,801.6 992,965.3 976,965.5" fill="url(#g135)"/><polygon points="992,801.6 1008,801.0 1008,965.1 992,965.3" fill="url(#g136)"/><polygon points="1008,801.0 1024,800.5 1024,964.9 1008,965.1" fill="url(#g137)"/><polygon points="1024,800.5 1040,800.0 1040,964.8 1024,964.9" fill="url(#g138)"/><polygon points="1040,800.0 1056,799.6 1056,964.7 1040,964.8" fill="url(#g139)"/><polygon points="1056,799.6 1072,799.2 1072,964.6 1056,964.7" fill="url(#g140)"/><polygon points="1072,799.2 1088,798.8 1088,964.5 1072,964.6" fill="url(#g141)"/><polygon points="1088,798.8 1104,798.5 1104,964.4 1088,964.5" fill="url(#g142)"/><polygon points="1104,798.5 1120,798.1 1120,964.3 1104,964.4" fill="url(#g143)"/><polygon points="1120,798.1 1136,797.8 1136,964.3 1120,964.3" fill="url(#g144)"/><polygon points="1136,797.8 1152,797.5 1152,964.2 1136,964.3" fill="url(#g145)"/><polygon points="1152,797.5 1168,797.1 1168,964.2 1152,964.2" fill="url(#g146)"/><polygon points="1168,797.1 1184,796.8 1184,964.1 1168,964.2" fill="url(#g147)"/><polygon points="1184,796.8 1200,796.6 1200,964.1 1184,964.1" fill="url(#g148)"/><polygon points="1200,796.6 1216,796.3 1216,964.1 1200,964.1" fill="url(#g149)"/><polygon points="1216,796.3 1232,796.1 1232,964.1 1216,964.1" fill="url(#g150)"/><polygon points="1232,796.1 1248,795.8 1248,964.1 1232,964.1" fill="url(#g151)"/><polygon points="1248,795.8 1264,795.6 1264,964.1 1248,964.1" fill="url(#g152)"/><polygon points="1264,795.6 1280,795.5 1280,964.1 1264,964.1" fill="url(#g153)"/><polygon points="1280,795.5 1296,795.4 1296,964.2 1280,964.1" fill="url(#g154)"/><polygon points="1296,795.4 1312,795.3 1312,964.2 1296,964.2" fill="url(#g155)"/><polygon points="1312,795.3 1328,795.4 1328,964.3 1312,964.2" fill="url(#g156)"/><polygon points="1328,795.4 1344,795.5 1344,964.3 1328,964.3" fill="url(#g157)"/><polygon points="1344,795.5 1360,795.6 1360,964.4 1344,964.3" fill="url(#g158)"/><polygon points="1360,795.6 1376,795.8 1376,964.5 1360,964.4" fill="url(#g159)"/><polygon points="1376,795.8 1392,796.0 1392,964.5 1376,964.5" fill="url(#g160)"/><polygon points="1392,796.0 1408,796.2 1408,964.6 1392,964.5" fill="url(#g161)"/><polygon points="1408,796.2 1424,796.4 1424,964.7 1408,964.6" fill="url(#g162)"/><polygon points="1424,796.4 1440,796.5 1440,964.8 1424,964.7" fill="url(#g163)"/><polygon points="1440,796.5 1456,796.6 1456,964.9 1440,964.8" fill="url(#g164)"/><polygon points="1456,796.6 1472,796.8 1472,965.0 1456,964.9" fill="url(#g165)"/><polygon points="1472,796.8 1488,797.1 1488,965.1 1472,965.0" fill="url(#g166)"/><polygon points="1488,797.1 1504,797.6 1504,965.2 1488,965.1" fill="url(#g167)"/><polygon points="1504,797.6 1520,798.1 1520,965.3 1504,965.2" fill="url(#g168)"/><polygon points="1520,798.1 1536,798.7 1536,965.5 1520,965.3" fill="url(#g169)"/><polygon points="1536,798.7 1552,799.2 1552,965.6 1536,965.5" fill="url(#g170)"/><polygon points="1552,799.2 1568,799.8 1568,965.8 1552,965.6" fill="url(#g171)"/><polygon points="1568,799.8 1584,800.4 1584,965.9 1568,965.8" fill="url(#g172)"/><polygon points="1584,800.4 1600,801.0 1600,966.1 1584,965.9" fill="url(#g173)"/><polygon points="1600,801.0 1616,801.6 1616,966.3 1600,966.1" fill="url(#g174)"/><polygon points="1616,801.6 1632,802.3 1632,966.5 1616,966.3" fill="url(#g175)"/><polygon points="1632,802.3 1648,802.9 1648,966.8 1632,966.5" fill="url(#g176)"/><polygon points="1648,802.9 1664,803.6 1664,967.0 1648,966.8" fill="url(#g177)"/><polygon points="1664,803.6 1680,804.3 1680,967.3 1664,967.0" fill="url(#g178)"/><polygon points="1680,804.3 1696,804.9 1696,967.5 1680,967.3" fill="url(#g179)"/><polygon points="1696,804.9 1712,805.6 1712,967.8 1696,967.5" fill="url(#g180)"/><polygon points="1712,805.6 1728,806.4 1728,968.1 1712,967.8" fill="url(#g181)"/><polygon points="1728,806.4 1744,807.1 1744,968.4 1728,968.1" fill="url(#g182)"/><polygon points="1744,807.1 1760,807.9 1760,968.7 1744,968.4" fill="url(#g183)"/><polygon points="1760,807.9 1776,808.7 1776,969.0 1760,968.7" fill="url(#g184)"/><polygon points="1776,808.7 1792,809.5 1792,969.4 1776,969.0" fill="url(#g185)"/><polygon points="1792,809.5 1808,810.5 1808,969.7 1792,969.4" fill="url(#g186)"/><polygon points="1808,810.5 1824,811.5 1824,970.0 1808,969.7" fill="url(#g187)"/><polygon points="1824,811.5 1840,812.7 1840,970.4 1824,970.0" fill="url(#g188)"/><polygon points="1840,812.7 1856,813.9 1856,970.8 1840,970.4" fill="url(#g189)"/><polygon points="1856,813.9 1872,815.3 1872,971.1 1856,970.8" fill="url(#g190)"/><polygon points="1872,815.3 1888,816.6 1888,971.5 1872,971.1" fill="url(#g191)"/><polygon points="1888,816.6 1904,817.9 1904,971.9 1888,971.5" fill="url(#g192)"/><polygon points="1904,817.9 1920,819.2 1920,972.4 1904,971.9" fill="url(#g193)"/><polygon points="1920,819.2 1936,820.5 1936,972.8 1920,972.4" fill="url(#g194)"/><polygon points="1936,820.5 1952,821.8 1952,973.2 1936,972.8" fill="url(#g195)"/><polygon points="1952,821.8 1968,823.2 1968,973.6 1952,973.2" fill="url(#g196)"/><polygon points="1968,823.2 1984,824.6 1984,974.0 1968,973.6" fill="url(#g197)"/><polygon points="1984,824.6 2000,826.0 2000,974.5 1984,974.0" fill="url(#g198)"/><polygon points="2000,826.0 2016,827.4 2016,975.0 2000,974.5" fill="url(#g199)"/><polygon points="2016,827.4 2032,828.9 2032,975.5 2016,975.0" fill="url(#g200)"/><polygon points="2032,828.9 2048,830.4 2048,976.2 2032,975.5" fill="url(#g201)"/><polygon points="2048,830.4 2064,832.0 2064,976.9 2048,976.2" fill="url(#g202)"/><polygon points="2064,832.0 2080,833.7 2080,977.6 2064,976.9" fill="url(#g203)"/><polygon points="2080,833.7 2096,835.5 2096,978.4 2080,977.6" fill="url(#g204)"/><polygon points="2096,835.5 2112,837.4 2112,979.2 2096,978.4" fill="url(#g205)"/><polygon points="2112,837.4 2128,839.3 2128,980.1 2112,979.2" fill="url(#g206)"/><polygon points="2128,839.3 2144,841.2 2144,980.9 2128,980.1" fill="url(#g207)"/><polygon points="2144,841.2 2160,843.2 2160,981.8 2144,980.9" fill="url(#g208)"/><polygon points="2160,843.2 2176,845.2 2176,982.7 2160,981.8" fill="url(#g209)"/><polygon points="2176,845.2 2192,847.1 2192,983.6 2176,982.7" fill="url(#g210)"/><polygon points="2192,847.1 2208,849.1 2208,984.5 2192,983.6" fill="url(#g211)"/><polygon points="2208,849.1 2224,851.1 2224,985.4 2208,984.5" fill="url(#g212)"/><polygon points="2224,851.1 2240,853.2 2240,986.3 2224,985.4" fill="url(#g213)"/><polygon points="2240,853.2 2256,855.2 2256,987.3 2240,986.3" fill="url(#g214)"/><polygon points="2256,855.2 2272,857.3 2272,921.1 2256,919.8" fill="url(#g215)"/><polygon points="2256,918.3 2272,919.6 2272,988.2 2256,987.3" fill="url(#g216)"/><polygon points="2272,857.3 2288,859.4 2288,922.4 2272,921.1" fill="url(#g217)"/><polygon points="2272,919.6 2288,920.9 2288,989.2 2272,988.2" fill="url(#g218)"/><polygon points="2288,859.4 2290,859.7 2290,922.6 2288,922.4" fill="url(#g219)"/><polygon points="2288,920.9 2290,921.1 2290,989.3 2288,989.2" fill="url(#g220)"/><polygon points="2290,859.7 2296,860.5 2296,923.1 2290,922.6" fill="url(#g221)"/><polygon points="2290,921.1 2296,921.6 2296,989.7 2290,989.3" fill="url(#g222)"/><polygon points="2296,860.5 2302,861.3 2302,923.7 2296,923.1" fill="url(#g223)"/><polygon points="2296,921.6 2302,922.2 2302,990.1 2296,989.7" fill="url(#g224)"/><polygon points="2302,861.3 2308,862.1 2308,924.3 2302,923.7" fill="url(#g225)"/><polygon points="2302,922.2 2308,922.8 2308,990.5 2302,990.1" fill="url(#g226)"/><polygon points="2308,862.1 2314,862.9 2314,924.8 2308,924.3" fill="url(#g227)"/><polygon points="2308,922.8 2314,923.3 2314,990.8 2308,990.5" fill="url(#g228)"/><polygon points="2314,862.9 2320,863.8 2320,925.4 2314,924.8" fill="url(#g229)"/><polygon points="2314,923.3 2320,923.9 2320,991.2 2314,990.8" fill="url(#g230)"/><polygon points="2320,863.8 2326,864.6 2326,926.1 2320,925.4" fill="url(#g231)"/><polygon points="2320,923.9 2326,924.6 2326,991.6 2320,991.2" fill="url(#g232)"/><polygon points="2326,864.6 2332,865.5 2332,926.7 2326,926.1" fill="url(#g233)"/><polygon points="2326,924.6 2332,925.2 2332,992.0 2326,991.6" fill="url(#g234)"/><polygon points="2332,865.5 2338,866.4 2338,927.4 2332,926.7" fill="url(#g235)"/><polygon points="2332,925.2 2338,925.9 2338,992.4 2332,992.0" fill="url(#g236)"/><polygon points="2338,866.4 2344,867.3 2344,928.1 2338,927.4" fill="url(#g237)"/><polygon points="2338,925.9 2344,926.6 2344,992.7 2338,992.4" fill="url(#g238)"/><polygon points="2344,867.3 2350,868.2 2350,928.9 2344,928.1" fill="url(#g239)"/><polygon points="2344,926.6 2350,927.4 2350,993.1 2344,992.7" fill="url(#g240)"/><polygon points="2350,868.2 2356,869.1 2356,929.7 2350,928.9" fill="url(#g241)"/><polygon points="2350,927.4 2356,928.2 2356,993.5 2350,993.1" fill="url(#g242)"/><polygon points="2356,869.1 2362,870.1 2362,930.6 2356,929.7" fill="url(#g243)"/><polygon points="2356,928.2 2362,929.1 2362,993.9 2356,993.5" fill="url(#g244)"/><polygon points="2362,870.1 2368,871.1 2368,931.5 2362,930.6" fill="url(#g245)"/><polygon points="2362,929.1 2368,930.0 2368,994.3 2362,993.9" fill="url(#g246)"/><polygon points="2368,871.1 2374,872.2 2374,932.4 2368,931.5" fill="url(#g247)"/><polygon points="2368,930.0 2374,930.9 2374,994.8 2368,994.3" fill="url(#g248)"/><polygon points="2374,872.2 2380,873.3 2380,933.4 2374,932.4" fill="url(#g249)"/><polygon points="2374,930.9 2380,931.9 2380,995.2 2374,994.8" fill="url(#g250)"/><polygon points="2380,873.3 2386,874.4 2386,934.3 2380,933.4" fill="url(#g251)"/><polygon points="2380,931.9 2386,932.8 2386,995.6 2380,995.2" fill="url(#g252)"/><polygon points="2386,874.4 2392,875.5 2392,935.2 2386,934.3" fill="url(#g253)"/><polygon points="2386,932.8 2392,933.7 2392,996.0 2386,995.6" fill="url(#g254)"/><polygon points="2392,875.5 2398,876.6 2398,936.2 2392,935.2" fill="url(#g255)"/><polygon points="2392,933.7 2398,934.7 2398,996.5 2392,996.0" fill="url(#g256)"/><polygon points="2398,876.6 2404,877.8 2404,937.1 2398,936.2" fill="url(#g257)"/><polygon points="2398,934.7 2404,935.6 2404,996.9 2398,996.5" fill="url(#g258)"/><polygon points="2404,877.8 2410,879.0 2410,938.1 2404,937.1" fill="url(#g259)"/><polygon points="2404,935.6 2410,936.6 2410,997.4 2404,996.9" fill="url(#g260)"/><polygon points="2410,879.0 2416,880.2 2416,939.0 2410,938.1" fill="url(#g261)"/><polygon points="2410,936.6 2416,937.5 2416,997.8 2410,997.4" fill="url(#g262)"/><polygon points="2416,880.2 2422,881.4 2422,940.0 2416,939.0" fill="url(#g263)"/><polygon points="2416,937.5 2422,938.5 2422,998.3 2416,997.8" fill="url(#g264)"/><polygon points="2422,881.4 2428,882.7 2428,941.0 2422,940.0" fill="url(#g265)"/><polygon points="2422,938.5 2428,939.5 2428,998.8 2422,998.3" fill="url(#g266)"/><polygon points="2428,882.7 2434,884.0 2434,942.0 2428,941.0" fill="url(#g267)"/><polygon points="2428,939.5 2434,940.5 2434,999.3 2428,998.8" fill="url(#g268)"/><polygon points="2434,884.0 2440,885.3 2440,943.0 2434,942.0" fill="url(#g269)"/><polygon points="2434,940.5 2440,941.5 2440,999.8 2434,999.3" fill="url(#g270)"/><polygon points="2440,885.3 2446,886.7 2446,944.0 2440,943.0" fill="url(#g271)"/><polygon points="2440,941.5 2446,942.5 2446,1000.3 2440,999.8" fill="url(#g272)"/><polygon points="2446,886.7 2452,888.0 2452,945.0 2446,944.0" fill="url(#g273)"/><polygon points="2446,942.5 2452,943.5 2452,1000.8 2446,1000.3" fill="url(#g274)"/><polygon points="2452,888.0 2458,889.4 2458,946.0 2452,945.0" fill="url(#g275)"/><polygon points="2452,943.5 2458,944.5 2458,1001.4 2452,1000.8" fill="url(#g276)"/><polygon points="2458,889.4 2464,890.7 2464,947.0 2458,946.0" fill="url(#g277)"/><polygon points="2458,944.5 2464,945.5 2464,1001.9 2458,1001.4" fill="url(#g278)"/><polygon points="2464,890.7 2470,892.1 2470,948.1 2464,947.0" fill="url(#g279)"/><polygon points="2464,945.5 2470,946.6 2470,1002.5 2464,1001.9" fill="url(#g280)"/><polygon points="2470,892.1 2476,893.5 2476,949.1 2470,948.1" fill="url(#g281)"/><polygon points="2470,946.6 2476,947.6 2476,1003.1 2470,1002.5" fill="url(#g282)"/><polygon points="2476,893.5 2482,894.9 2482,950.1 2476,949.1" fill="url(#g283)"/><polygon points="2476,947.6 2482,948.6 2482,1003.7 2476,1003.1" fill="url(#g284)"/><polygon points="2482,894.9 2488,896.3 2488,951.2 2482,950.1" fill="url(#g285)"/><polygon points="2482,948.6 2488,949.7 2488,1004.3 2482,1003.7" fill="url(#g286)"/><polygon points="2488,896.3 2494,897.6 2494,952.2 2488,951.2" fill="url(#g287)"/><polygon points="2488,949.7 2494,950.7 2494,1004.9 2488,1004.3" fill="url(#g288)"/><polygon points="2494,897.6 2500,899.0 2500,953.3 2494,952.2" fill="url(#g289)"/><polygon points="2494,950.7 2500,951.8 2500,1005.5 2494,1004.9" fill="url(#g290)"/><polygon points="2500,899.0 2512,901.7 2512,955.4 2500,953.3" fill="url(#g291)"/><polygon points="2500,951.8 2512,953.9 2512,1006.8 2500,1005.5" fill="url(#g292)"/><polygon points="2512,901.7 2524,904.5 2524,957.5 2512,955.4" fill="url(#g293)"/><polygon points="2512,953.9 2524,956.0 2524,1008.2 2512,1006.8" fill="url(#g294)"/><polygon points="2524,904.5 2536,907.4 2536,1009.7 2524,1008.2" fill="url(#g295)"/><polygon points="2536,907.4 2548,910.2 2548,1011.1 2536,1009.7" fill="url(#g296)"/><polygon points="2548,910.2 2560,913.0 2560,1012.6 2548,1011.1" fill="url(#g297)"/><polygon points="2560,913.0 2572,915.6 2572,1014.2 2560,1012.6" fill="url(#g298)"/><polygon points="2572,915.6 2584,918.0 2584,1015.9 2572,1014.2" fill="url(#g299)"/><polygon points="2584,918.0 2596,920.5 2596,1017.9 2584,1015.9" fill="url(#g300)"/><polygon points="2596,920.5 2608,923.3 2608,1020.1 2596,1017.9" fill="url(#g301)"/><polygon points="2608,923.3 2620,926.6 2620,1022.4 2608,1020.1" fill="url(#g302)"/><polygon points="2620,926.6 2632,930.3 2632,1024.7 2620,1022.4" fill="url(#g303)"/><polygon points="2632,930.3 2644,934.5 2644,1026.7 2632,1024.7" fill="url(#g304)"/><polygon points="2644,934.5 2656,939.0 2656,1028.6 2644,1026.7" fill="url(#g305)"/><polygon points="2656,939.0 2668,944.0 2668,1030.6 2656,1028.6" fill="url(#g306)"/><polygon points="2668,944.0 2680,950.3 2680,1032.6 2668,1030.6" fill="url(#g307)"/><polygon points="2680,950.3 2692,957.4 2692,1034.5 2680,1032.6" fill="url(#g308)"/><polygon points="2692,957.4 2704,964.5 2704,1036.4 2692,1034.5" fill="url(#g309)"/><polygon points="2704,964.5 2716,971.6 2716,1038.1 2704,1036.4" fill="url(#g310)"/><polygon points="2716,971.6 2728,979.3 2728,1039.7 2716,1038.1" fill="url(#g311)"/><polygon points="2728,979.3 2740,987.2 2740,1040.9 2728,1039.7" fill="url(#g312)"/><polygon points="2740,987.2 2752,995.1 2752,1041.7 2740,1040.9" fill="url(#g313)"/><polygon points="2752,995.1 2764,1003.0 2764,1042.0 2752,1041.7" fill="url(#g314)"/><polygon points="2764,1003.0 2776,1011.5 2776,1041.9 2764,1042.0" fill="url(#g315)"/><polygon points="2776,1011.5 2788,1020.1 2788,1041.5 2776,1041.9" fill="url(#g316)"/><polygon points="2788,1020.1 2800,1028.6 2800,1040.9 2788,1041.5" fill="url(#g317)"/><polygon points="2800,1028.6 2809,1035.0 2809,1040.6 2800,1040.9" fill="url(#g318)"/></g></g><polygon points="41,989.0 60,988.4 60,1010.6 41,1008.7" fill="url(#g319)"/><polygon points="60,988.4 80,987.8 80,1012.1 60,1010.6" fill="url(#g320)"/><polygon points="80,987.8 100,987.2 100,1013.5 80,1012.1" fill="url(#g321)"/><polygon points="100,987.2 120,986.6 120,1014.9 100,1013.5" fill="url(#g322)"/><polygon points="120,986.6 140,985.9 140,1016.3 120,1014.9" fill="url(#g323)"/><polygon points="140,985.9 160,985.2 160,1017.6 140,1016.3" fill="url(#g324)"/><polygon points="160,985.2 180,984.5 180,1018.9 160,1017.6" fill="url(#g325)"/><polygon points="180,984.5 200,983.5 200,1019.9 180,1018.9" fill="url(#g326)"/><polygon points="200,983.5 220,982.3 220,1020.9 200,1019.9" fill="url(#g327)"/><polygon points="220,982.3 240,981.0 240,1021.7 220,1020.9" fill="url(#g328)"/><polygon points="240,981.0 260,980.0 260,1022.5 240,1021.7" fill="url(#g329)"/><polygon points="260,980.0 280,979.1 280,1023.4 260,1022.5" fill="url(#g330)"/><polygon points="280,979.1 300,978.5 300,1024.4 280,1023.4" fill="url(#g331)"/><polygon points="300,978.5 320,978.0 320,1025.4 300,1024.4" fill="url(#g332)"/><polygon points="320,978.0 340,977.5 340,1026.5 320,1025.4" fill="url(#g333)"/><polygon points="340,977.5 360,977.1 360,1027.6 340,1026.5" fill="url(#g334)"/><polygon points="360,977.1 380,976.8 380,1028.6 360,1027.6" fill="url(#g335)"/><polygon points="380,976.8 400,976.4 400,1029.7 380,1028.6" fill="url(#g336)"/><polygon points="400,976.4 420,976.1 420,1030.8 400,1029.7" fill="url(#g337)"/><polygon points="420,976.1 440,975.8 440,1031.9 420,1030.8" fill="url(#g338)"/><polygon points="440,975.8 460,975.4 460,1032.9 440,1031.9" fill="url(#g339)"/><polygon points="460,975.4 480,975.1 480,1034.0 460,1032.9" fill="url(#g340)"/><polygon points="480,975.1 500,974.8 500,1035.0 480,1034.0" fill="url(#g341)"/><polygon points="500,974.8 520,974.5 520,1036.1 500,1035.0" fill="url(#g342)"/><polygon points="520,974.5 540,974.2 540,1037.1 520,1036.1" fill="url(#g343)"/><polygon points="540,974.2 560,973.8 560,1038.1 540,1037.1" fill="url(#g344)"/><polygon points="560,973.8 580,973.5 580,1039.0 560,1038.1" fill="url(#g345)"/><polygon points="580,973.5 600,973.2 600,1040.0 580,1039.0" fill="url(#g346)"/><polygon points="600,973.2 620,972.9 620,1040.8 600,1040.0" fill="url(#g347)"/><polygon points="620,972.9 640,972.6 640,1041.7 620,1040.8" fill="url(#g348)"/><polygon points="640,972.6 660,972.3 660,1042.4 640,1041.7" fill="url(#g349)"/><polygon points="660,972.3 680,971.9 680,1043.2 660,1042.4" fill="url(#g350)"/><polygon points="680,971.9 700,971.5 700,1044.0 680,1043.2" fill="url(#g351)"/><polygon points="700,971.5 720,971.0 720,1044.8 700,1044.0" fill="url(#g352)"/><polygon points="720,971.0 740,970.5 740,1045.6 720,1044.8" fill="url(#g353)"/><polygon points="740,970.5 760,969.9 760,1046.4 740,1045.6" fill="url(#g354)"/><polygon points="760,969.9 780,969.3 780,1047.2 760,1046.4" fill="url(#g355)"/><polygon points="780,969.3 800,968.7 800,1048.0 780,1047.2" fill="url(#g356)"/><polygon points="800,968.7 820,968.1 820,1048.7 800,1048.0" fill="url(#g357)"/><polygon points="820,968.1 840,967.5 840,1049.5 820,1048.7" fill="url(#g358)"/><polygon points="840,967.5 860,967.0 860,1050.2 840,1049.5" fill="url(#g359)"/><polygon points="860,967.0 880,966.5 880,1050.9 860,1050.2" fill="url(#g360)"/><polygon points="880,966.5 900,966.1 900,1051.6 880,1050.9" fill="url(#g361)"/><polygon points="900,966.1 920,965.7 920,1052.2 900,1051.6" fill="url(#g362)"/><polygon points="920,965.7 940,965.3 940,1052.8 920,1052.2" fill="url(#g363)"/><polygon points="940,965.3 960,965.1 960,1053.3 940,1052.8" fill="url(#g364)"/><polygon points="960,965.1 980,964.8 980,1053.9 960,1053.3" fill="url(#g365)"/><polygon points="980,964.8 1000,964.6 1000,1054.4 980,1053.9" fill="url(#g366)"/><polygon points="1000,964.6 1020,964.4 1020,1054.9 1000,1054.4" fill="url(#g367)"/><polygon points="1020,964.4 1040,964.2 1040,1055.4 1020,1054.9" fill="url(#g368)"/><polygon points="1040,964.2 1060,964.1 1060,1055.8 1040,1055.4" fill="url(#g369)"/><polygon points="1060,964.1 1080,963.9 1080,1056.3 1060,1055.8" fill="url(#g370)"/><polygon points="1080,963.9 1100,963.8 1100,1056.7 1080,1056.3" fill="url(#g371)"/><polygon points="1100,963.8 1120,963.7 1120,1057.1 1100,1056.7" fill="url(#g372)"/><polygon points="1120,963.7 1140,963.7 1140,1057.6 1120,1057.1" fill="url(#g373)"/><polygon points="1140,963.7 1160,963.6 1160,1058.0 1140,1057.6" fill="url(#g374)"/><polygon points="1160,963.6 1180,963.5 1180,1058.4 1160,1058.0" fill="url(#g375)"/><polygon points="1180,963.5 1200,963.5 1200,1058.8 1180,1058.4" fill="url(#g376)"/><polygon points="1200,963.5 1220,963.5 1220,1059.2 1200,1058.8" fill="url(#g377)"/><polygon points="1220,963.5 1240,963.5 1240,1059.6 1220,1059.2" fill="url(#g378)"/><polygon points="1240,963.5 1260,963.5 1260,1060.0 1240,1059.6" fill="url(#g379)"/><polygon points="1260,963.5 1280,963.5 1280,1060.3 1260,1060.0" fill="url(#g380)"/><polygon points="1280,963.5 1300,963.6 1300,1060.7 1280,1060.3" fill="url(#g381)"/><polygon points="1300,963.6 1320,963.6 1320,1061.0 1300,1060.7" fill="url(#g382)"/><polygon points="1320,963.6 1340,963.7 1340,1061.3 1320,1061.0" fill="url(#g383)"/><polygon points="1340,963.7 1360,963.8 1360,1061.6 1340,1061.3" fill="url(#g384)"/><polygon points="1360,963.8 1380,963.9 1380,1062.0 1360,1061.6" fill="url(#g385)"/><polygon points="1380,963.9 1400,964.0 1400,1062.3 1380,1062.0" fill="url(#g386)"/><polygon points="1400,964.0 1420,964.1 1420,1062.6 1400,1062.3" fill="url(#g387)"/><polygon points="1420,964.1 1440,964.2 1440,1063.0 1420,1062.6" fill="url(#g388)"/><polygon points="1440,964.2 1460,964.3 1460,1063.3 1440,1063.0" fill="url(#g389)"/><polygon points="1460,964.3 1480,964.5 1480,1063.6 1460,1063.3" fill="url(#g390)"/><polygon points="1480,964.5 1500,964.6 1500,1064.0 1480,1063.6" fill="url(#g391)"/><polygon points="1500,964.6 1520,964.7 1520,1064.4 1500,1064.0" fill="url(#g392)"/><polygon points="1520,964.7 1540,964.9 1540,1064.7 1520,1064.4" fill="url(#g393)"/><polygon points="1540,964.9 1560,965.1 1560,1065.1 1540,1064.7" fill="url(#g394)"/><polygon points="1560,965.1 1580,965.3 1580,1065.4 1560,1065.1" fill="url(#g395)"/><polygon points="1580,965.3 1600,965.5 1600,1065.8 1580,1065.4" fill="url(#g396)"/><polygon points="1600,965.5 1620,965.8 1620,1066.2 1600,1065.8" fill="url(#g397)"/><polygon points="1620,965.8 1640,966.0 1640,1066.5 1620,1066.2" fill="url(#g398)"/><polygon points="1640,966.0 1660,966.3 1660,1066.9 1640,1066.5" fill="url(#g399)"/><polygon points="1660,966.3 1680,966.7 1680,1067.2 1660,1066.9" fill="url(#g400)"/><polygon points="1680,966.7 1700,967.0 1700,1067.6 1680,1067.2" fill="url(#g401)"/><polygon points="1700,967.0 1720,967.4 1720,1068.0 1700,1067.6" fill="url(#g402)"/><polygon points="1720,967.4 1740,967.7 1740,1068.3 1720,1068.0" fill="url(#g403)"/><polygon points="1740,967.7 1760,968.1 1760,1068.7 1740,1068.3" fill="url(#g404)"/><polygon points="1760,968.1 1780,968.5 1780,1069.1 1760,1068.7" fill="url(#g405)"/><polygon points="1780,968.5 1800,968.9 1800,1069.5 1780,1069.1" fill="url(#g406)"/><polygon points="1800,968.9 1816,969.3 1816,1069.8 1800,1069.5" fill="url(#g407)"/><polygon points="1816,969.3 1832,969.6 1832,1070.1 1816,1069.8" fill="url(#g408)"/><polygon points="1832,969.6 1848,970.0 1848,1070.4 1832,1070.1" fill="url(#g409)"/><polygon points="1848,970.0 1864,970.4 1864,1070.7 1848,1070.4" fill="url(#g410)"/><polygon points="1864,970.4 1880,970.7 1880,1071.0 1864,1070.7" fill="url(#g411)"/><polygon points="1880,970.7 1896,971.1 1896,1071.3 1880,1071.0" fill="url(#g412)"/><polygon points="1896,971.1 1912,971.5 1912,1071.7 1896,1071.3" fill="url(#g413)"/><polygon points="1912,971.5 1928,972.0 1928,1072.0 1912,1071.7" fill="url(#g414)"/><polygon points="1928,972.0 1944,972.4 1944,1072.4 1928,1072.0" fill="url(#g415)"/><polygon points="1944,972.4 1960,972.8 1960,1072.7 1944,1072.4" fill="url(#g416)"/><polygon points="1960,972.8 1976,973.2 1976,1073.1 1960,1072.7" fill="url(#g417)"/><polygon points="1976,973.2 1992,973.7 1992,1073.6 1976,1073.1" fill="url(#g418)"/><polygon points="1992,973.7 2008,974.1 2008,1074.1 1992,1073.6" fill="url(#g419)"/><polygon points="2008,974.1 2024,974.7 2024,1074.6 2008,1074.1" fill="url(#g420)"/><polygon points="2024,974.7 2040,975.2 2040,1075.2 2024,1074.6" fill="url(#g421)"/><polygon points="2040,975.2 2056,975.9 2056,1075.7 2040,1075.2" fill="url(#g422)"/><polygon points="2056,975.9 2072,976.6 2072,1076.2 2056,1075.7" fill="url(#g423)"/><polygon points="2072,976.6 2088,977.4 2088,1076.7 2072,1076.2" fill="url(#g424)"/><polygon points="2088,977.4 2104,978.2 2104,1077.1 2088,1076.7" fill="url(#g425)"/><polygon points="2104,978.2 2120,979.0 2120,1077.5 2104,1077.1" fill="url(#g426)"/><polygon points="2120,979.0 2136,979.9 2136,1077.9 2120,1077.5" fill="url(#g427)"/><polygon points="2136,979.9 2152,980.8 2152,1078.2 2136,1077.9" fill="url(#g428)"/><polygon points="2152,980.8 2168,981.6 2168,1078.6 2152,1078.2" fill="url(#g429)"/><polygon points="2168,981.6 2184,982.5 2184,1078.9 2168,1078.6" fill="url(#g430)"/><polygon points="2184,982.5 2200,983.4 2200,1079.3 2184,1078.9" fill="url(#g431)"/><polygon points="2200,983.4 2216,984.3 2216,1079.6 2200,1079.3" fill="url(#g432)"/><polygon points="2216,984.3 2232,985.3 2232,1080.0 2216,1079.6" fill="url(#g433)"/><polygon points="2232,985.3 2248,986.2 2248,1080.3 2232,1080.0" fill="url(#g434)"/><polygon points="2248,986.2 2264,987.2 2264,1080.7 2248,1080.3" fill="url(#g435)"/><polygon points="2264,987.2 2280,988.1 2280,1081.0 2264,1080.7" fill="url(#g436)"/><polygon points="2280,988.1 2296,989.1 2296,1081.4 2280,1081.0" fill="url(#g437)"/><polygon points="2296,989.1 2312,990.1 2312,1081.8 2296,1081.4" fill="url(#g438)"/><polygon points="2312,990.1 2328,991.1 2328,1082.1 2312,1081.8" fill="url(#g439)"/><polygon points="2328,991.1 2344,992.1 2344,1082.5 2328,1082.1" fill="url(#g440)"/><polygon points="2344,992.1 2360,993.2 2360,1082.9 2344,1082.5" fill="url(#g441)"/><polygon points="2360,993.2 2376,994.3 2376,1083.3 2360,1082.9" fill="url(#g442)"/><polygon points="2376,994.3 2392,995.4 2392,1083.8 2376,1083.3" fill="url(#g443)"/><polygon points="2392,995.4 2408,996.6 2408,1084.2 2392,1083.8" fill="url(#g444)"/><polygon points="2408,996.6 2424,997.8 2424,1084.8 2408,1084.2" fill="url(#g445)"/><polygon points="2424,997.8 2440,999.2 2440,1085.3 2424,1084.8" fill="url(#g446)"/><polygon points="2440,999.2 2456,1000.6 2456,1086.0 2440,1085.3" fill="url(#g447)"/><polygon points="2456,1000.6 2472,1002.1 2472,1086.6 2456,1086.0" fill="url(#g448)"/><polygon points="2472,1002.1 2488,1003.7 2488,1087.4 2472,1086.6" fill="url(#g449)"/><polygon points="2488,1003.7 2504,1005.4 2504,1088.1 2488,1087.4" fill="url(#g450)"/><polygon points="2504,1005.4 2520,1007.2 2520,1088.9 2504,1088.1" fill="url(#g451)"/><polygon points="2520,1007.2 2536,1009.1 2536,1089.7 2520,1088.9" fill="url(#g452)"/><polygon points="2536,1009.1 2552,1011.0 2552,1090.4 2536,1089.7" fill="url(#g453)"/><polygon points="2552,1011.0 2568,1013.0 2568,1091.0 2552,1090.4" fill="url(#g454)"/><polygon points="2568,1013.0 2584,1015.3 2584,1091.5 2568,1091.0" fill="url(#g455)"/><polygon points="2584,1015.3 2600,1018.0 2600,1092.0 2584,1091.5" fill="url(#g456)"/><polygon points="2600,1018.0 2616,1021.0 2616,1092.5 2600,1092.0" fill="url(#g457)"/><polygon points="2616,1021.0 2632,1024.1 2632,1093.0 2616,1092.5" fill="url(#g458)"/><polygon points="2632,1024.1 2648,1026.8 2648,1093.7 2632,1093.0" fill="url(#g459)"/><polygon points="2648,1026.8 2664,1029.3 2664,1094.6 2648,1093.7" fill="url(#g460)"/><polygon points="2664,1029.3 2680,1032.0 2680,1095.8 2664,1094.6" fill="url(#g461)"/><polygon points="2680,1032.0 2696,1034.5 2696,1097.2 2680,1095.8" fill="url(#g462)"/><polygon points="2696,1034.5 2700,1035.2 2700,1097.5 2696,1097.2" fill="url(#g463)"/><polygon points="2700,1035.2 2705,1035.9 2705,1098.0 2700,1097.5" fill="url(#g464)"/><polygon points="2705,1035.9 2710,1036.7 2710,1098.4 2705,1098.0" fill="url(#g465)"/><polygon points="2710,1036.7 2715,1037.4 2715,1098.8 2710,1098.4" fill="url(#g466)"/><polygon points="2715,1037.4 2720,1038.0 2720,1099.4 2715,1098.8" fill="url(#g467)"/><polygon points="2720,1038.0 2725,1038.7 2725,1099.9 2720,1099.4" fill="url(#g468)"/><polygon points="2725,1038.7 2730,1039.3 2730,1100.4 2725,1099.9" fill="url(#g469)"/><polygon points="2730,1039.3 2735,1039.8 2735,1100.9 2730,1100.4" fill="url(#g470)"/><polygon points="2735,1039.8 2740,1040.3 2740,1101.4 2735,1100.9" fill="url(#g471)"/><polygon points="2740,1040.3 2745,1040.7 2745,1101.9 2740,1101.4" fill="url(#g472)"/><polygon points="2745,1040.7 2750,1041.0 2750,1102.2 2745,1101.9" fill="url(#g473)"/><polygon points="2750,1041.0 2755,1041.2 2755,1102.3 2750,1102.2" fill="url(#g474)"/><polygon points="2755,1041.2 2760,1041.3 2760,1102.2 2755,1102.3" fill="url(#g475)"/><polygon points="2760,1041.3 2765,1041.4 2765,1101.5 2760,1102.2" fill="url(#g476)"/><polygon points="2765,1041.4 2770,1041.4 2770,1099.3 2765,1101.5" fill="url(#g477)"/><polygon points="2770,1041.4 2775,1041.3 2775,1095.0 2770,1099.3" fill="url(#g478)"/><polygon points="2775,1041.3 2780,1041.2 2780,1090.6 2775,1095.0" fill="url(#g479)"/><polygon points="2780,1041.2 2785,1041.0 2785,1085.3 2780,1090.6" fill="url(#g480)"/><polygon points="2785,1041.0 2790,1040.8 2790,1079.0 2785,1085.3" fill="url(#g481)"/><polygon points="2790,1040.8 2795,1040.6 2795,1071.3 2790,1079.0" fill="url(#g482)"/><polygon points="2795,1040.6 2800,1040.3 2800,1061.0 2795,1071.3" fill="url(#g483)"/><polygon points="2800,1040.3 2805,1040.1 2805,1049.3 2800,1061.0" fill="url(#g484)"/><polygon points="2805,1040.1 2809,1040.0 2809,1040.0 2805,1049.3" fill="url(#g485)"/><polyline points="152.0,933.93 162.0,932.66 172.0,931.62 182.0,930.50 192.0,929.19 202.0,927.68 212.0,925.88 222.0,923.87 232.0,921.79 242.0,919.78 252.0,917.88 262.0,916.14 272.0,914.57 282.0,913.16 292.0,911.90 302.0,910.79 312.0,909.79 322.0,908.85 332.0,907.96 342.0,907.12 352.0,906.31 362.0,905.53 372.0,904.77 382.0,904.03 392.0,903.31 402.0,902.61 412.0,901.91 422.0,901.22 432.0,900.54 442.0,899.87 452.0,899.20 462.0,898.54 472.0,897.87 482.0,897.21 492.0,896.54 502.0,895.87 512.0,895.19 522.0,894.52 532.0,893.85 542.0,893.18 552.0,892.52 562.0,891.86 572.0,891.21 582.0,890.57 592.0,889.94 602.0,889.31 612.0,888.70 622.0,888.11 632.0,887.52 642.0,886.95 652.0,886.40 662.0,885.86 672.0,885.35 682.0,884.85 692.0,884.37 702.0,883.91 712.0,883.48 722.0,883.08 732.0,882.70 742.0,882.34 752.0,882.00 762.0,881.67 772.0,881.36 782.0,881.06 792.0,880.77 802.0,880.49 812.0,880.22 822.0,879.96 832.0,879.70 842.0,879.45 852.0,879.20 862.0,878.96 872.0,878.71 882.0,878.46 892.0,878.21 902.0,877.95 912.0,877.67 922.0,877.39 932.0,877.11 942.0,876.83 952.0,876.58 962.0,876.39 972.0,876.25 982.0,876.14 992.0,876.06 1002.0,875.99 1012.0,875.93 1022.0,875.88 1032.0,875.84 1042.0,875.81 1052.0,875.79 1062.0,875.77 1072.0,875.76 1082.0,875.75 1092.0,875.75 1102.0,875.76 1112.0,875.76 1122.0,875.78 1132.0,875.80 1142.0,875.82 1152.0,875.84 1162.0,875.87 1172.0,875.90 1182.0,875.93 1192.0,875.97 1202.0,876.01 1212.0,876.05 1222.0,876.09 1232.0,876.13 1242.0,876.17 1252.0,876.21 1262.0,876.25 1272.0,876.29 1282.0,876.34 1292.0,876.38 1302.0,876.43 1312.0,876.47 1322.0,876.52 1332.0,876.57 1342.0,876.63 1352.0,876.68 1362.0,876.74 1372.0,876.80 1382.0,876.86 1392.0,876.93 1402.0,877.00 1412.0,877.07 1422.0,877.15 1432.0,877.23 1442.0,877.32 1452.0,877.42 1462.0,877.52 1472.0,877.63 1482.0,877.75 1492.0,877.88 1502.0,878.03 1512.0,878.20 1522.0,878.39 1532.0,878.61 1542.0,878.86 1552.0,879.13 1562.0,879.44 1572.0,879.78 1582.0,880.16 1592.0,880.56 1602.0,880.99 1612.0,881.43 1622.0,881.87 1632.0,882.29 1642.0,882.70 1652.0,883.07 1662.0,883.44 1672.0,883.82 1682.0,884.20 1692.0,884.59 1702.0,884.98 1712.0,885.37 1722.0,885.77 1732.0,886.17 1742.0,886.57 1752.0,886.98 1762.0,887.40 1772.0,887.81 1782.0,888.23 1792.0,888.66 1802.0,889.09 1812.0,889.51 1822.0,889.92 1832.0,890.32 1842.0,890.73 1852.0,891.17 1862.0,891.63 1872.0,892.13 1882.0,892.67 1892.0,893.24 1902.0,893.82 1912.0,894.42 1922.0,895.04 1932.0,895.67 1942.0,896.30 1952.0,896.94 1962.0,897.59 1972.0,898.25 1982.0,898.91 1992.0,899.57 2002.0,900.24 2012.0,900.91 2022.0,901.59 2032.0,902.27 2042.0,902.96 2052.0,903.64 2062.0,904.34 2072.0,905.03 2082.0,905.73 2092.0,906.43 2102.0,907.14 2112.0,907.85 2122.0,908.55 2132.0,909.25 2142.0,909.95 2152.0,910.66 2162.0,911.36 2172.0,912.07 2182.0,912.78 2192.0,913.49 2202.0,914.22 2212.0,914.94 2222.0,915.68 2232.0,916.43 2242.0,917.19 2252.0,917.96 2262.0,918.75 2272.0,919.56 2282.0,920.40 2292.0,921.27 2302.0,922.19 2312.0,923.14 2322.0,924.14 2332.0,925.20 2342.0,926.36 2352.0,927.65 2362.0,929.07 2372.0,930.60 2382.0,932.17 2392.0,933.74 2402.0,935.32 2412.0,936.90 2422.0,938.52 2432.0,940.17 2442.0,941.83 2452.0,943.51 2462.0,945.21 2472.0,946.91 2482.0,948.64 2492.0,950.37 2502.0,952.12 2512.0,953.88 2522.0,955.66 2532.0,957.46 2542.0,959.27 2552.0,961.11 2562.0,962.98 2572.0,964.90 2582.0,966.90 2592.0,968.97 2602.0,971.13 2612.0,973.36 2622.0,975.66 2632.0,978.00 2642.0,980.34 2652.0,982.64 2662.0,984.92 2672.0,987.22 2682.0,989.60 2692.0,992.16 2702.0,994.94 2712.0,997.95 2722.0,1001.16 2732.0,1004.53 2742.0,1008.06 2752.0,1011.77 2762.0,1015.67 2772.0,1019.91 2782.0,1024.55 2792.0,1029.45 2802.0,1034.51 2809.0,1038.00" fill="none" stroke="#8c1c0c" stroke-width="1.6" stroke-opacity="0.85"/><polyline points="41.0,989.00 51.0,988.69 61.0,988.38 71.0,988.08 81.0,987.78 91.0,987.48 101.0,987.17 111.0,986.86 121.0,986.54 131.0,986.22 141.0,985.88 151.0,985.54 161.0,985.19 171.0,984.81 181.0,984.41 191.0,983.96 201.0,983.44 211.0,982.85 221.0,982.23 231.0,981.59 241.0,980.99 251.0,980.43 261.0,979.93 271.0,979.50 281.0,979.11 291.0,978.77 301.0,978.47 311.0,978.21 321.0,977.96 331.0,977.74 341.0,977.52 351.0,977.32 361.0,977.12 371.0,976.93 381.0,976.75 391.0,976.58 401.0,976.40 411.0,976.23 421.0,976.07 431.0,975.90 441.0,975.74 451.0,975.58 461.0,975.43 471.0,975.27 481.0,975.11 491.0,974.96 501.0,974.80 511.0,974.64 521.0,974.48 531.0,974.32 541.0,974.15 551.0,973.98 561.0,973.81 571.0,973.65 581.0,973.49 591.0,973.34 601.0,973.20 611.0,973.06 621.0,972.92 631.0,972.78 641.0,972.63 651.0,972.47 661.0,972.29 671.0,972.11 681.0,971.91 691.0,971.70 701.0,971.48 711.0,971.24 721.0,970.99 731.0,970.72 741.0,970.44 751.0,970.15 761.0,969.86 771.0,969.56 781.0,969.26 791.0,968.96 801.0,968.66 811.0,968.37 821.0,968.07 831.0,967.79 841.0,967.51 851.0,967.24 861.0,966.98 871.0,966.72 881.0,966.48 891.0,966.25 901.0,966.04 911.0,965.84 921.0,965.65 931.0,965.48 941.0,965.33 951.0,965.18 961.0,965.05 971.0,964.92 981.0,964.79 991.0,964.68 1001.0,964.57 1011.0,964.47 1021.0,964.38 1031.0,964.29 1041.0,964.20 1051.0,964.13 1061.0,964.05 1071.0,963.99 1081.0,963.93 1091.0,963.87 1101.0,963.82 1111.0,963.77 1121.0,963.72 1131.0,963.68 1141.0,963.65 1151.0,963.61 1161.0,963.58 1171.0,963.56 1181.0,963.54 1191.0,963.52 1201.0,963.50 1211.0,963.49 1221.0,963.48 1231.0,963.48 1241.0,963.48 1251.0,963.49 1261.0,963.50 1271.0,963.52 1281.0,963.54 1291.0,963.56 1301.0,963.59 1311.0,963.62 1321.0,963.65 1331.0,963.68 1341.0,963.72 1351.0,963.76 1361.0,963.80 1371.0,963.85 1381.0,963.90 1391.0,963.94 1401.0,963.99 1411.0,964.05 1421.0,964.10 1431.0,964.16 1441.0,964.22 1451.0,964.28 1461.0,964.34 1471.0,964.40 1481.0,964.47 1491.0,964.54 1501.0,964.61 1511.0,964.68 1521.0,964.75 1531.0,964.83 1541.0,964.91 1551.0,965.00 1561.0,965.09 1571.0,965.19 1581.0,965.29 1591.0,965.40 1601.0,965.52 1611.0,965.64 1621.0,965.77 1631.0,965.90 1641.0,966.05 1651.0,966.20 1661.0,966.35 1671.0,966.51 1681.0,966.68 1691.0,966.85 1701.0,967.02 1711.0,967.19 1721.0,967.37 1731.0,967.56 1741.0,967.74 1751.0,967.94 1761.0,968.13 1771.0,968.33 1781.0,968.53 1791.0,968.74 1801.0,968.95 1811.0,969.16 1821.0,969.38 1831.0,969.60 1841.0,969.82 1851.0,970.05 1861.0,970.28 1871.0,970.52 1881.0,970.76 1891.0,971.01 1901.0,971.26 1911.0,971.52 1921.0,971.78 1931.0,972.05 1941.0,972.32 1951.0,972.59 1961.0,972.85 1971.0,973.10 1981.0,973.36 1991.0,973.63 2001.0,973.91 2011.0,974.22 2021.0,974.55 2031.0,974.90 2041.0,975.28 2051.0,975.70 2061.0,976.13 2071.0,976.58 2081.0,977.06 2091.0,977.55 2101.0,978.05 2111.0,978.57 2121.0,979.09 2131.0,979.62 2141.0,980.16 2151.0,980.70 2161.0,981.25 2171.0,981.80 2181.0,982.36 2191.0,982.92 2201.0,983.49 2211.0,984.06 2221.0,984.64 2231.0,985.22 2241.0,985.81 2251.0,986.39 2261.0,986.99 2271.0,987.59 2281.0,988.19 2291.0,988.80 2301.0,989.42 2311.0,990.04 2321.0,990.67 2331.0,991.31 2341.0,991.95 2351.0,992.61 2361.0,993.27 2371.0,993.95 2381.0,994.64 2391.0,995.35 2401.0,996.08 2411.0,996.83 2421.0,997.61 2431.0,998.42 2441.0,999.26 2451.0,1000.13 2461.0,1001.03 2471.0,1001.97 2481.0,1002.95 2491.0,1003.97 2501.0,1005.03 2511.0,1006.14 2521.0,1007.28 2531.0,1008.45 2541.0,1009.66 2551.0,1010.89 2561.0,1012.13 2571.0,1013.44 2581.0,1014.88 2591.0,1016.47 2601.0,1018.22 2611.0,1020.09 2621.0,1022.01 2631.0,1023.88 2641.0,1025.63 2651.0,1027.23 2661.0,1028.85 2671.0,1030.49 2681.0,1032.13 2691.0,1033.74 2701.0,1035.31 2711.0,1036.80 2721.0,1038.18 2731.0,1039.40 2741.0,1040.41 2751.0,1041.07 2761.0,1041.36 2771.0,1041.36 2781.0,1041.13 2791.0,1040.74 2801.0,1040.27 2809.0,1040.00" fill="none" stroke="#a0240e" stroke-width="2" stroke-opacity="0.8"/><path d="M41 989 L151 905 M103 942 L152 934" fill="none" stroke="#8c1c0c" stroke-width="1.6" stroke-opacity="0.85"/><path d="M685 823 L549 972 C549 1000 552 1025 562 1041" fill="none" stroke="#8c1c0c" stroke-width="1.6" stroke-opacity="0.85"/><path d="M1905 821 L1929 972 C1931 1010 1930 1045 1927 1073" fill="none" stroke="#8c1c0c" stroke-width="1.6" stroke-opacity="0.85"/><path d="M2673.5 949.5 Q2712 992 2742 1040.5 Q2758 1065 2761 1097" fill="none" stroke="#8c1c0c" stroke-width="1.6" stroke-opacity="0.85"/><polyline points="152.0,904.50 162.0,897.65 172.0,894.94 182.0,892.71 192.0,890.60 202.0,888.53 212.0,886.48 222.0,884.45 232.0,882.44 242.0,880.46 252.0,878.50 262.0,876.59 272.0,874.74 282.0,872.98 292.0,871.30 302.0,869.68 312.0,868.10 322.0,866.57 332.0,865.08 342.0,863.60 352.0,862.13 362.0,860.65 372.0,859.15 382.0,857.63 392.0,856.09 402.0,854.56 412.0,853.04 422.0,851.53 432.0,850.04 442.0,848.57 452.0,847.13 462.0,845.74 472.0,844.39 482.0,843.10 492.0,841.86 502.0,840.65 512.0,839.47 522.0,838.33 532.0,837.21 542.0,836.12 552.0,835.06 562.0,834.02 572.0,833.00 582.0,832.00 592.0,831.02 602.0,830.08 612.0,829.18 622.0,828.32 632.0,827.50 642.0,826.70 652.0,825.91 662.0,825.14 672.0,824.36 682.0,823.58 692.0,822.79 702.0,822.00 712.0,821.20 722.0,820.42 732.0,819.63 742.0,818.86 752.0,818.09 762.0,817.33 772.0,816.59 782.0,815.86 792.0,815.15 802.0,814.46 812.0,813.81 822.0,813.18 832.0,812.57 842.0,811.99 852.0,811.44 862.0,810.90 872.0,810.38 882.0,809.88 892.0,809.39 902.0,808.91 912.0,808.43 922.0,807.95 932.0,807.46 942.0,806.95 952.0,806.43 962.0,805.93 972.0,805.44 982.0,804.99 992.0,804.57 1002.0,804.18 1012.0,803.84 1022.0,803.52 1032.0,803.22 1042.0,802.95 1052.0,802.69 1062.0,802.44 1072.0,802.20 1082.0,801.96 1092.0,801.73 1102.0,801.50 1112.0,801.29 1122.0,801.07 1132.0,800.86 1142.0,800.65 1152.0,800.45 1162.0,800.26 1172.0,800.07 1182.0,799.88 1192.0,799.70 1202.0,799.53 1212.0,799.36 1222.0,799.20 1232.0,799.05 1242.0,798.91 1252.0,798.78 1262.0,798.66 1272.0,798.55 1282.0,798.46 1292.0,798.40 1302.0,798.36 1312.0,798.35 1322.0,798.36 1332.0,798.39 1342.0,798.44 1352.0,798.51 1362.0,798.60 1372.0,798.71 1382.0,798.82 1392.0,798.95 1402.0,799.08 1412.0,799.22 1422.0,799.35 1432.0,799.46 1442.0,799.55 1452.0,799.62 1462.0,799.67 1472.0,799.76 1482.0,799.98 1492.0,800.26 1502.0,800.56 1512.0,800.88 1522.0,801.21 1532.0,801.54 1542.0,801.89 1552.0,802.24 1562.0,802.60 1572.0,802.96 1582.0,803.33 1592.0,803.71 1602.0,804.09 1612.0,804.47 1622.0,804.87 1632.0,805.26 1642.0,805.67 1652.0,806.08 1662.0,806.50 1672.0,806.92 1682.0,807.34 1692.0,807.77 1702.0,808.20 1712.0,808.64 1722.0,809.08 1732.0,809.54 1742.0,810.00 1752.0,810.47 1762.0,810.96 1772.0,811.47 1782.0,811.99 1792.0,812.54 1802.0,813.12 1812.0,813.74 1822.0,814.40 1832.0,815.10 1842.0,815.84 1852.0,816.62 1862.0,817.43 1872.0,818.26 1882.0,819.10 1892.0,819.94 1902.0,820.76 1912.0,821.56 1922.0,822.36 1932.0,823.17 1942.0,823.98 1952.0,824.81 1962.0,825.65 1972.0,826.50 1982.0,827.37 1992.0,828.27 2002.0,829.18 2012.0,830.09 2022.0,830.98 2032.0,831.88 2042.0,832.80 2052.0,833.77 2062.0,834.78 2072.0,835.84 2082.0,836.94 2092.0,838.08 2102.0,839.23 2112.0,840.41 2122.0,841.60 2132.0,842.80 2142.0,844.01 2152.0,845.22 2162.0,846.44 2172.0,847.66 2182.0,848.90 2192.0,850.13 2202.0,851.37 2212.0,852.62 2222.0,853.88 2232.0,855.14 2242.0,856.41 2252.0,857.69 2262.0,858.97 2272.0,860.27 2282.0,861.59 2292.0,862.92 2302.0,864.27 2312.0,865.65 2322.0,867.05 2332.0,868.49 2342.0,869.97 2352.0,871.51 2362.0,873.13 2372.0,874.84 2382.0,876.63 2392.0,878.49 2402.0,880.39 2412.0,882.36 2422.0,884.43 2432.0,886.57 2442.0,888.77 2452.0,891.01 2462.0,893.29 2472.0,895.58 2482.0,897.89 2492.0,900.18 2502.0,902.45 2512.0,904.73 2522.0,907.05 2532.0,909.41 2542.0,911.79 2552.0,914.15 2562.0,916.45 2572.0,918.59 2582.0,920.62 2592.0,922.66 2602.0,924.85 2612.0,927.32 2622.0,930.20 2632.0,933.35 2642.0,936.74 2652.0,940.41 2662.0,944.41 2672.0,948.80 2682.0,954.53 2692.0,960.44 2702.0,966.35 2712.0,972.27 2722.0,978.32 2732.0,984.91 2742.0,991.50 2752.0,998.09 2762.0,1004.68 2772.0,1011.69 2782.0,1018.80 2792.0,1025.91 2802.0,1033.02 2809.0,1038.00" fill="none" stroke="#7a3020" stroke-width="1.2" stroke-opacity="0.6"/><polyline points="41.0,1008.70 51.0,1009.94 61.0,1010.68 71.0,1011.41 81.0,1012.14 91.0,1012.87 101.0,1013.59 111.0,1014.30 121.0,1015.00 131.0,1015.69 141.0,1016.38 151.0,1017.04 161.0,1017.69 171.0,1018.32 181.0,1018.91 191.0,1019.47 201.0,1019.99 211.0,1020.46 221.0,1020.89 231.0,1021.31 241.0,1021.71 251.0,1022.13 261.0,1022.55 271.0,1023.00 281.0,1023.47 291.0,1023.95 301.0,1024.45 311.0,1024.96 321.0,1025.48 331.0,1026.01 341.0,1026.54 351.0,1027.07 361.0,1027.60 371.0,1028.14 381.0,1028.68 391.0,1029.22 401.0,1029.75 411.0,1030.29 421.0,1030.83 431.0,1031.37 441.0,1031.91 451.0,1032.44 461.0,1032.98 471.0,1033.51 481.0,1034.04 491.0,1034.57 501.0,1035.10 511.0,1035.62 521.0,1036.14 531.0,1036.65 541.0,1037.15 551.0,1037.65 561.0,1038.14 571.0,1038.62 581.0,1039.09 591.0,1039.55 601.0,1040.01 611.0,1040.45 621.0,1040.87 631.0,1041.29 641.0,1041.69 651.0,1042.09 661.0,1042.48 671.0,1042.87 681.0,1043.26 691.0,1043.65 701.0,1044.04 711.0,1044.43 721.0,1044.83 731.0,1045.23 741.0,1045.63 751.0,1046.04 761.0,1046.44 771.0,1046.84 781.0,1047.23 791.0,1047.63 801.0,1048.02 811.0,1048.40 821.0,1048.78 831.0,1049.16 841.0,1049.53 851.0,1049.89 861.0,1050.25 871.0,1050.60 881.0,1050.94 891.0,1051.28 901.0,1051.60 911.0,1051.92 921.0,1052.23 931.0,1052.53 941.0,1052.82 951.0,1053.10 961.0,1053.38 971.0,1053.65 981.0,1053.91 991.0,1054.17 1001.0,1054.42 1011.0,1054.67 1021.0,1054.91 1031.0,1055.15 1041.0,1055.39 1051.0,1055.62 1061.0,1055.85 1071.0,1056.08 1081.0,1056.30 1091.0,1056.52 1101.0,1056.74 1111.0,1056.95 1121.0,1057.17 1131.0,1057.38 1141.0,1057.59 1151.0,1057.80 1161.0,1058.00 1171.0,1058.21 1181.0,1058.41 1191.0,1058.62 1201.0,1058.82 1211.0,1059.02 1221.0,1059.22 1231.0,1059.41 1241.0,1059.60 1251.0,1059.79 1261.0,1059.97 1271.0,1060.15 1281.0,1060.33 1291.0,1060.50 1301.0,1060.67 1311.0,1060.84 1321.0,1061.00 1331.0,1061.17 1341.0,1061.33 1351.0,1061.49 1361.0,1061.65 1371.0,1061.81 1381.0,1061.98 1391.0,1062.14 1401.0,1062.30 1411.0,1062.47 1421.0,1062.63 1431.0,1062.80 1441.0,1062.97 1451.0,1063.14 1461.0,1063.31 1471.0,1063.48 1481.0,1063.66 1491.0,1063.84 1501.0,1064.02 1511.0,1064.20 1521.0,1064.38 1531.0,1064.56 1541.0,1064.74 1551.0,1064.92 1561.0,1065.10 1571.0,1065.28 1581.0,1065.46 1591.0,1065.64 1601.0,1065.82 1611.0,1066.00 1621.0,1066.18 1631.0,1066.36 1641.0,1066.54 1651.0,1066.72 1661.0,1066.90 1671.0,1067.08 1681.0,1067.26 1691.0,1067.45 1701.0,1067.63 1711.0,1067.81 1721.0,1067.99 1731.0,1068.18 1741.0,1068.36 1751.0,1068.55 1761.0,1068.73 1771.0,1068.92 1781.0,1069.10 1791.0,1069.29 1801.0,1069.48 1811.0,1069.67 1821.0,1069.86 1831.0,1070.05 1841.0,1070.24 1851.0,1070.44 1861.0,1070.63 1871.0,1070.83 1881.0,1071.03 1891.0,1071.23 1901.0,1071.43 1911.0,1071.64 1921.0,1071.85 1931.0,1072.07 1941.0,1072.29 1951.0,1072.52 1961.0,1072.76 1971.0,1073.01 1981.0,1073.28 1991.0,1073.56 2001.0,1073.86 2011.0,1074.18 2021.0,1074.53 2031.0,1074.88 2041.0,1075.24 2051.0,1075.58 2061.0,1075.90 2071.0,1076.21 2081.0,1076.49 2091.0,1076.77 2101.0,1077.02 2111.0,1077.27 2121.0,1077.51 2131.0,1077.75 2141.0,1077.98 2151.0,1078.21 2161.0,1078.43 2171.0,1078.65 2181.0,1078.87 2191.0,1079.09 2201.0,1079.31 2211.0,1079.53 2221.0,1079.75 2231.0,1079.96 2241.0,1080.18 2251.0,1080.40 2261.0,1080.62 2271.0,1080.84 2281.0,1081.06 2291.0,1081.28 2301.0,1081.51 2311.0,1081.74 2321.0,1081.97 2331.0,1082.20 2341.0,1082.44 2351.0,1082.69 2361.0,1082.94 2371.0,1083.20 2381.0,1083.46 2391.0,1083.74 2401.0,1084.03 2411.0,1084.34 2421.0,1084.67 2431.0,1085.01 2441.0,1085.38 2451.0,1085.76 2461.0,1086.17 2471.0,1086.59 2481.0,1087.04 2491.0,1087.50 2501.0,1087.97 2511.0,1088.45 2521.0,1088.94 2531.0,1089.42 2541.0,1089.89 2551.0,1090.33 2561.0,1090.74 2571.0,1091.11 2581.0,1091.45 2591.0,1091.76 2601.0,1092.05 2611.0,1092.33 2621.0,1092.61 2631.0,1092.93 2641.0,1093.32 2651.0,1093.81 2661.0,1094.41 2671.0,1095.12 2681.0,1095.92 2691.0,1096.78 2701.0,1097.63 2711.0,1098.46 2721.0,1099.46 2731.0,1100.53 2741.0,1101.52 2751.0,1102.23 2758.0,1102.30" fill="none" stroke="#8a2a14" stroke-width="1.2" stroke-opacity="0.5"/><rect x="2772" y="138" width="12" height="3" fill="#000"/><rect x="2804" y="127" width="18" height="15" fill="none" stroke="#000" stroke-width="2"/><rect x="2804" y="126" width="18" height="3" fill="#000"/><path d="M2840 126 L2856 142 M2856 126 L2840 142" stroke="#000" stroke-width="3"/><path d="M2858 1798 L2878 1778 M2866 1798 L2878 1786 M2874 1798 L2878 1794" stroke="#888" stroke-width="2.5"/><ellipse cx="32.5" cy="73" rx="11.5" ry="26" fill="#fafafa" stroke="#8a8a8a" stroke-width="2"/><ellipse cx="31" cy="63" rx="8" ry="7" fill="#f8c8cc" opacity="0.8"/><path d="M27 93 L27 78 L24 74 L24 70 L27 70 L29 73 L29 62 Q31 59 33 62 L33 68 L36 67 L39 68 L42 70 L43 74 L43 93 Z" fill="#fff" stroke="#222" stroke-width="1.6"/><path d="M31 93 L43 93" stroke="#222" stroke-width="2.5"/><path d="M78 61 L84 57 L94 61 L96 58 L110 63 L111 70 L110 88 L107 91 L82 80 Z" fill="#f4f0d0" stroke="#808070" stroke-width="2"/><path d="M80 65 L106 73 L108 90 L84 80 Z" fill="#f8f29a" stroke="#8a8870" stroke-width="2"/><path d="M108 82 L111 84 L109 90" fill="none" stroke="#777" stroke-width="2.5"/><defs><linearGradient id="fire" x1="0" y1="0" x2="0.25" y2="1"><stop offset="0" stop-color="#8a9a90"/><stop offset="0.22" stop-color="#a0a8a0"/><stop offset="0.3" stop-color="#e03010"/><stop offset="0.5" stop-color="#ff7a10"/><stop offset="0.66" stop-color="#ffd040"/><stop offset="0.78" stop-color="#fffef0"/><stop offset="1" stop-color="#f4f0e8"/></linearGradient></defs><path d="M145 55 L168 63 L169 90 L146 81 Z" fill="url(#fire)" stroke="#505050" stroke-width="2.5"/><path d="M145 55 L145 81" stroke="#303030" stroke-width="3"/><path d="M146 82 L170 92 L174 91" fill="none" stroke="#1a1a1a" stroke-width="3.2"/><path d="M168 63 L169 91" stroke="#707070" stroke-width="3"/><rect x="232" y="80" width="36" height="13" fill="#b8b8c8"/><rect x="230" y="77" width="35" height="12" fill="#f2c824"/><path d="M230 77.5 L265 77.5" stroke="#111" stroke-width="2" stroke-dasharray="2.2 2.3"/><path d="M239 77 L239 81 M255 77 L255 81" stroke="#111" stroke-width="2"/><path d="M237.5 82.5 L239.5 82.5 L239.5 87 M253 83 L257 83 L257 86.5 L253 86.5 Z" fill="none" stroke="#8a6a10" stroke-width="1.4"/><path d="M230 73 L265 73" stroke="#c8c8d0" stroke-width="1.5" stroke-dasharray="2 2"/><path d="M230 60.6 L265.6 60.6 M257 54 L257 73" stroke="#666" stroke-width="1.6"/><path d="M265 56 L265 73" stroke="#777" stroke-width="1.4" stroke-dasharray="2 2.5"/><rect x="255.6" y="59.2" width="2.8" height="2.8" fill="#111"/><path d="M347 57 L363 90" stroke="#111" stroke-width="2"/><circle cx="347" cy="57" r="4.2" fill="#1f3fd8" stroke="#111" stroke-width="1"/><circle cx="355" cy="73" r="6.2" fill="#f02010" stroke="#111" stroke-width="1.2"/><circle cx="363" cy="89" r="4.2" fill="#18d028" stroke="#111" stroke-width="1"/><circle cx="516" cy="72" r="16.5" fill="url(#sph)"/><path d="M665 55 L689 55 L697 63 L697 92 L665 92 Z" fill="#fff" stroke="#333" stroke-width="2"/><path d="M689 55 L689 63 L697 63 Z" fill="#d8f0ff" stroke="#2a9ad0" stroke-width="1.5"/><path d="M668 61 L676 61 L682 64 M668 69 L692 69 M668 76 L680 76 L686 72 M668 82 L692 82 M672 88 L678 88" stroke="#555" stroke-width="1.3" stroke-dasharray="2 2"/><rect x="838" y="53" width="9" height="12" fill="#fff" stroke="#141470" stroke-width="2"/><defs><pattern id="dots" width="3" height="3" patternUnits="userSpaceOnUse"><rect width="3" height="3" fill="#e8e8f4"/><rect width="1.6" height="1.6" fill="#141470"/></pattern></defs><path d="M827 65 L857 65 L857 81 Q857 92 847 92 L837 92 Q827 92 827 81 Z" fill="url(#dots)" stroke="#141470" stroke-width="2"/><circle cx="31.5" cy="130.5" r="13.5" fill="url(#sph)"/><circle cx="38" cy="182" r="8.5" fill="none" stroke="#606c70" stroke-width="4"/><path d="M44 189 L56 204" stroke="#607078" stroke-width="5.5" stroke-linecap="round"/><rect x="81" y="167" width="24" height="18" fill="none" stroke="#707878" stroke-width="2"/><circle cx="104" cy="186" r="8.5" fill="none" stroke="#606c70" stroke-width="4"/><path d="M110 193 L122 208" stroke="#607078" stroke-width="5.5" stroke-linecap="round"/><path d="M161 202.5 Q166 186 173.6 176 Q176 172 180 173.5 Q184 170 188 172.5 Q193 169 198 171.6 Q203 172 202.7 177 L189 194 L203.6 198 L174.5 210.7" fill="none" stroke="#5a5a5a" stroke-width="2.2" stroke-linejoin="round"/><path d="M178 186 L186 175 M184 189 L193 176 M190 191 L199 178" stroke="#333" stroke-width="2.2"/><path d="M175 180 L180 174 M181 183 L188 174 M187 186 L196 174" stroke="#fff" stroke-width="1"/><path d="M236 180 Q238 170 244 166" fill="none" stroke="#555c60" stroke-width="3.5"/><path d="M224 184 Q244 178 266 184" fill="none" stroke="#505458" stroke-width="3.5"/><path d="M223 186 Q222 193 230 197" fill="none" stroke="#10205a" stroke-width="3"/><path d="M226 193 L246 189 L252 200 L234 204 Z" fill="#3a8ae8"/><path d="M250 168 L264 183 L258 186 L256 206 L248 208 L250 186 Z" fill="#3a8ae8"/><path d="M264 190 Q270 196 266 202" fill="none" stroke="#10205a" stroke-width="3"/><path d="M242 204 L250 213" stroke="#555" stroke-width="3.5"/><path d="M306 174 L344 182 L342 212 L312 211 Z" fill="#f8f000"/><path d="M302 168 L311 177 L307 180 Z" fill="#444" stroke="#222" stroke-width="1.8"/><path d="M306 175 L309 173" stroke="#dada40" stroke-width="1.5"/><circle cx="328" cy="194" r="12.3" fill="url(#sph)"/><path d="M373 188 C378 171 423 171 428 188 C423 205 378 205 373 188 Z" fill="url(#ell)"/><ellipse cx="462.5" cy="189.5" rx="27" ry="12" fill="#4aa0e0"/><ellipse cx="462.5" cy="189.5" rx="27" ry="12" fill="none" stroke="#2a7ec8" stroke-width="1.5"/><path d="M498 186 Q525 196 552 184 Q536 194 524 194 Q508 194 498 186 Z" fill="#3a90d8" stroke="#2a70b8" stroke-width="1.5"/><path d="M562 199 Q579 191 587 177 Q595 191 612 199 Z" fill="url(#tri)"/><path d="M623 199 Q641 190 648 176 Q656 190 674 199 Z" fill="#0e4a8a"/><ellipse cx="710" cy="188" rx="27" ry="7" transform="rotate(18 710 188)" fill="url(#ell)"/><ellipse cx="773" cy="188" rx="27" ry="7" transform="rotate(-15 773 188)" fill="url(#ell)"/><path d="M809 203 L851 175 Q862 182 861 192 Q858 203 840 203 Z" fill="#48a4e8" stroke="#1a5a9a" stroke-width="1.2"/><path d="M872 180 Q880 170 895 176 Q915 186 922 196 Q922 203 905 202 Q880 200 873 190 Z" fill="#3a98e0" stroke="#2a70b0" stroke-width="1"/><path d="M958 162 C970 176 970 202 958 215.5 C946 202 946 176 958 162 Z" fill="url(#ellv)"/><path d="M1019 196 A21 21 0 1 1 1056 178" fill="none" stroke="#3f96dc" stroke-width="3.2"/><path d="M1051 181 L1063 181 L1057 189 Z" fill="#3f96dc"/><path d="M1020 201 A21 21 0 0 0 1056 201" fill="none" stroke="#3f96dc" stroke-width="3.2"/><defs><linearGradient id="trig" x1="0" y1="0" x2="0" y2="1"><stop offset="0" stop-color="#10508e"/><stop offset="0.6" stop-color="#1a5a98"/><stop offset="1" stop-color="#083e7a"/></linearGradient></defs><path d="M1012 200 L1037.6 176.5 L1062 200 Z" fill="url(#trig)"/><defs><linearGradient id="lens" x1="0" y1="0" x2="1" y2="0"><stop offset="0" stop-color="#b8ecff"/><stop offset="0.35" stop-color="#6cc0f0"/><stop offset="0.75" stop-color="#2f86d0"/><stop offset="1" stop-color="#3a7ab8"/></linearGradient></defs><path d="M1071.3 188 A27 8 0 0 1 1083.3 181" fill="none" stroke="#f01808" stroke-width="3.8"/><path d="M1098.3 161.5 Q1075.3 188 1098.3 215.7 Q1121.3 188 1098.3 161.5 Z" fill="url(#lens)"/><path d="M1071.3 188 A27 8 0 0 0 1125.3 188 A27 8 0 0 0 1117.3 182" fill="none" stroke="#f01808" stroke-width="3.8"/><path d="M1116.3 177 L1122.3 185 L1109.3 186 Z" fill="#f01808"/><path d="M1133.3 188 A27 8 0 0 1 1145.3 181" fill="none" stroke="#f01808" stroke-width="3.8"/><path d="M1160.3 161.5 Q1137.3 188 1160.3 215.7 Q1183.3 188 1160.3 161.5 Z" fill="url(#lens)"/><path d="M1133.3 188 A27 8 0 0 0 1187.3 188 A27 8 0 0 0 1179.3 182" fill="none" stroke="#f01808" stroke-width="3.8"/><path d="M1178.3 177 L1184.3 185 L1171.3 186 Z" fill="#f01808"/><path d="M1141 215.5 L1141 201 L1134 201 L1145.5 189.5 L1157 201 L1151 201 L1151 215.5 Z" fill="#f8b41c" stroke="#5a4408" stroke-width="1.4"/><circle cx="1238" cy="188" r="17.3" fill="none" stroke="#111" stroke-width="2.2"/><path d="M1222 189.5 Q1230 197 1238 196.5 Q1246 197 1254 189.5" fill="none" stroke="#1a1a1a" stroke-width="2.2"/><ellipse cx="1238" cy="177.7" rx="9.5" ry="6.8" fill="none" stroke="#1a1a1a" stroke-width="2.2"/><circle cx="1300.5" cy="188" r="17.3" fill="none" stroke="#151515" stroke-width="2.2"/><path d="M1284.5 189.5 Q1292.5 197 1300.5 196.5 Q1308.5 197 1316.5 189.5" fill="none" stroke="#e8202a" stroke-width="2.2"/><ellipse cx="1300.5" cy="177.7" rx="9.5" ry="6.8" fill="none" stroke="#e8202a" stroke-width="2.2"/><circle cx="1362" cy="188" r="17" fill="none" stroke="#1a1a1a" stroke-width="3"/><path d="M1348 179 L1376 179 L1362 203 Z M1348 197 L1376 197 L1362 173 Z M1346 188 L1378 188" fill="none" stroke="#222" stroke-width="2"/><ellipse cx="1362" cy="174" rx="9" ry="4" fill="none" stroke="#222" stroke-width="2"/><ellipse cx="1362" cy="202" rx="9" ry="4" fill="none" stroke="#222" stroke-width="2"/><circle cx="1441" cy="189.5" r="19" fill="url(#sph)"/><circle cx="1503" cy="189.5" r="19" fill="url(#sph)"/><circle cx="1566" cy="189.5" r="19" fill="url(#sph)"/><path d="M1557 204 L1584 172 L1591 178 L1564 209 Z" fill="#5aa8f0" stroke="#111" stroke-width="2.2"/><path d="M1556 204 L1564 209 L1553 212 Z" fill="#f8c090" stroke="#111" stroke-width="1.5"/><path d="M1562 207 L1588 200 L1590 206 L1568 209 Z" fill="#10b0e0"/><defs><clipPath id="cs"><circle cx="1643" cy="189" r="19.5"/></clipPath><radialGradient id="sg" cx="0.5" cy="0.5" r="0.5"><stop offset="0.6" stop-color="#fff" stop-opacity="0"/><stop offset="1" stop-color="#fff" stop-opacity="0.6"/></radialGradient></defs><g clip-path="url(#cs)"><rect x="1620" y="168" width="46" height="44" fill="#ddd"/><rect x="1620" y="172" width="46" height="3.2" fill="#222"/><rect x="1620" y="177.6" width="46" height="3.2" fill="#222"/><rect x="1620" y="183.2" width="46" height="3.2" fill="#222"/><rect x="1620" y="188.8" width="46" height="3.2" fill="#222"/><rect x="1620" y="194.4" width="46" height="3.2" fill="#222"/><rect x="1620" y="200" width="46" height="3.2" fill="#222"/><rect x="1620" y="205.6" width="46" height="3.2" fill="#222"/><circle cx="1643" cy="189" r="19.5" fill="url(#sg)"/></g><circle cx="1704.5" cy="188.5" r="19.5" fill="url(#rainb)"/><path d="M1776 171 L1772 175 L1768 180 L1765 184 L1765 189 L1769 192 L1773 196 L1775 201 L1771 204 L1766 207" fill="none" stroke="#1a40e8" stroke-width="3.5" stroke-linejoin="miter"/><path d="M1783 167 L1783 213" stroke="#222" stroke-width="1.8" stroke-dasharray="3 3"/><path d="M1803 171 Q1789 180 1791 187 Q1801 195 1799 200 Q1795 205 1791 207" fill="none" stroke="#1a40e8" stroke-width="3.5" stroke-linecap="round"/><rect x="1844" y="172" width="14" height="14" fill="#ff2010"/><rect x="1862" y="172" width="14" height="14" fill="#ffcc20"/><rect x="1844" y="190" width="14" height="14" fill="#a0cc40"/><rect x="1862" y="190" width="14" height="14" fill="#70c8d0"/></svg><div class="a" style="left:0;top:1792px;width:8px;height:8px;background:radial-gradient(circle at 8px 0px,transparent 7.5px,#000 8.5px)"></div><div class="a" style="left:2872px;top:1792px;width:8px;height:8px;background:radial-gradient(circle at 0px 0px,transparent 7.5px,#000 8.5px)"></div></body></html>
